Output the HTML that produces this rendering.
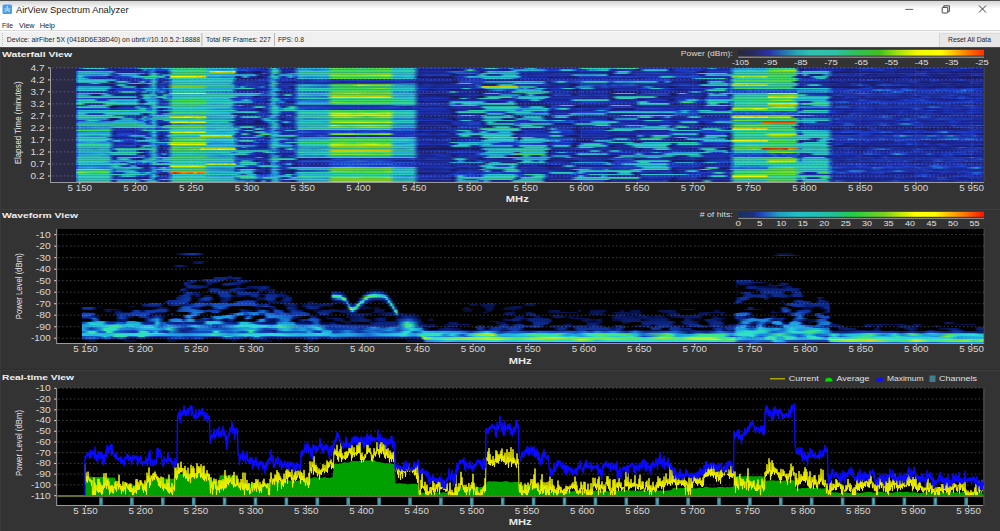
<!DOCTYPE html>
<html><head><meta charset="utf-8"><style>
html,body{margin:0;padding:0;background:#333;overflow:hidden;width:1000px;height:531px;position:relative;}
svg{position:absolute;left:0;top:0;display:block;font-family:"Liberation Sans",sans-serif;}
#h div{position:absolute}
</style></head><body>
<svg width="1000" height="531" viewBox="0 0 1000 531"><rect x="0.00" y="0.00" width="1000.00" height="531.00" fill="#333333" /><rect x="0.00" y="0.00" width="1000.00" height="31.00" fill="#ffffff" /><defs><linearGradient id="tg" x1="0" y1="0" x2="0" y2="1"><stop offset="0" stop-color="#d4d4d4"/><stop offset="1" stop-color="#ffffff"/></linearGradient></defs><rect x="0.00" y="1.00" width="1000.00" height="8.00" fill="url(#tg)" /><rect x="0.00" y="0.00" width="1000.00" height="1.00" fill="#505050" /><rect x="2.5" y="4.5" width="9.5" height="9.5" rx="1.5" fill="#4a9eec"/><path d="M4.5 11.5 Q7.25 9 10 11.5" stroke="#e8f2fc" stroke-width="0.9" fill="none"/><rect x="4.3" y="8.6" width="6" height="0.8" fill="#e8f2fc"/><rect x="6.8" y="6" width="0.9" height="2.6" fill="#e8f2fc"/><text x="16.00" y="13.30" font-size="9.8" fill="#1a1a1a" font-weight="normal" text-anchor="start" textLength="112.50" lengthAdjust="spacingAndGlyphs" >AirView Spectrum Analyzer</text><line x1="905.20" y1="9.40" x2="913.20" y2="9.40" stroke="#444" stroke-width="0.85" /><rect x="942.2" y="7.4" width="5.6" height="5.6" rx="0.6" fill="none" stroke="#333" stroke-width="0.9"/><path d="M943.8 7.4 V5.8 H949.4 V11.4 H947.8" fill="none" stroke="#333" stroke-width="0.9"/><path d="M979 5.5 L986 12.5 M986 5.5 L979 12.5" stroke="#222" stroke-width="0.9"/><text x="2.00" y="27.60" font-size="7.8" fill="#222" font-weight="normal" text-anchor="start" textLength="11.00" lengthAdjust="spacingAndGlyphs" >File</text><text x="19.00" y="27.60" font-size="7.8" fill="#222" font-weight="normal" text-anchor="start" textLength="15.40" lengthAdjust="spacingAndGlyphs" >View</text><text x="39.70" y="27.60" font-size="7.8" fill="#222" font-weight="normal" text-anchor="start" textLength="15.30" lengthAdjust="spacingAndGlyphs" >Help</text><rect x="0.00" y="30.00" width="1000.00" height="1.00" fill="#d9d9d9" /><rect x="0.00" y="31.00" width="1000.00" height="16.50" fill="#f0f0f0" /><rect x="0.00" y="31.00" width="1000.00" height="0.60" fill="#ffffff" /><rect x="2.20" y="33.00" width="0.80" height="0.80" fill="#a0a0a0" /><rect x="2.20" y="35.00" width="0.80" height="0.80" fill="#a0a0a0" /><rect x="2.20" y="37.00" width="0.80" height="0.80" fill="#a0a0a0" /><rect x="2.20" y="39.00" width="0.80" height="0.80" fill="#a0a0a0" /><rect x="2.20" y="41.00" width="0.80" height="0.80" fill="#a0a0a0" /><rect x="2.20" y="43.00" width="0.80" height="0.80" fill="#a0a0a0" /><rect x="2.20" y="45.00" width="0.80" height="0.80" fill="#a0a0a0" /><text x="6.70" y="42.00" font-size="7.6" fill="#1e1e1e" font-weight="normal" text-anchor="start" textLength="193.50" lengthAdjust="spacingAndGlyphs" >Device: airFiber 5X (0418D6E38D40) on ubnt://10.10.5.2:18888</text><rect x="201.50" y="33.00" width="0.80" height="13.00" fill="#a8a8a8" /><text x="206.10" y="42.00" font-size="7.6" fill="#1e1e1e" font-weight="normal" text-anchor="start" textLength="64.60" lengthAdjust="spacingAndGlyphs" >Total RF Frames: 227</text><rect x="274.20" y="33.00" width="0.80" height="13.00" fill="#a8a8a8" /><text x="277.90" y="42.00" font-size="7.6" fill="#1e1e1e" font-weight="normal" text-anchor="start" textLength="26.00" lengthAdjust="spacingAndGlyphs" >FPS: 0.8</text><rect x="939.00" y="33.00" width="61.00" height="14.00" fill="#e6e6e6" /><rect x="939.00" y="33.00" width="0.80" height="14.00" fill="#d4d4d4" /><rect x="939.00" y="33.00" width="61.00" height="0.60" fill="#d4d4d4" /><text x="948.00" y="42.00" font-size="7.6" fill="#1e1e1e" font-weight="normal" text-anchor="start" textLength="43.00" lengthAdjust="spacingAndGlyphs" >Reset All Data</text><rect x="0.00" y="47.30" width="1000.00" height="483.70" fill="#333333" /><rect x="0.00" y="47.30" width="0.80" height="531.00" fill="#3d3d3d" /><rect x="0.00" y="209.00" width="1000.00" height="1.00" fill="#3e3e3e" /><rect x="0.00" y="369.00" width="1000.00" height="0.80" fill="#2a2a2a" /><rect x="0.00" y="370.00" width="1000.00" height="1.00" fill="#3e3e3e" /><text x="2.00" y="56.80" font-size="8" fill="#f0f0f0" font-weight="bold" text-anchor="start" textLength="70.00" lengthAdjust="spacingAndGlyphs" >Waterfall View</text><rect x="57.00" y="229.00" width="927.00" height="114.00" fill="#000000" /><rect x="57.00" y="388.00" width="926.00" height="117.00" fill="#000000" /><rect x="50.50" y="67.50" width="933.50" height="114.50" fill="#2a2a46" /></svg>
<div id="h"><div style="left:75.5px;top:67.50px;width:908.0px;height:2.08px;background:linear-gradient(90deg,#1c2794 0.1%,#1e32af 0.3%,#2dc8cd 1.0%,#2dc9ca 3.0%,#1c2a9d 3.6%,#1c2896 3.9%,#1c2381 4.1%,#1c2897 4.5%,#1f37bb 5.0%,#1f37bb 5.6%,#1f3ac2 6.1%,#1f3cc6 6.5%,#2ecbc2 7.2%,#2ecbc2 7.8%,#2bbbd9 8.5%,#2cc3d8 8.7%,#2372db 8.9%,#2370db 9.4%,#2cc4d7 9.6%,#2bbed9 10.0%,#36d68e 10.9%,#3dd873 11.8%,#35d693 13.5%,#37d68a 14.0%,#2bbcd9 14.6%,#2dc8cd 17.3%,#1e33b2 18.0%,#1e34b5 18.8%,#1f38bd 19.5%,#1e36ba 19.9%,#1d2da4 20.4%,#1c2794 20.8%,#1c2382 21.0%,#2fcfb8 21.7%,#2fcfb8 21.9%,#2042d1 22.4%,#1d2ca1 22.6%,#1d2ca1 22.8%,#1c2794 23.0%,#1c299a 23.2%,#1c1d66 23.7%,#1c1c60 23.9%,#29b0db 24.6%,#29abdb 25.2%,#2ab2da 26.3%,#2bbad9 27.4%,#2fceb9 27.9%,#5fe03c 28.3%,#46db50 29.6%,#44db59 30.7%,#34d598 31.4%,#47dc4c 32.7%,#57df40 34.5%,#2bbfd9 35.1%,#2ecbc3 36.9%,#2cc4d8 37.1%,#1d31ad 37.8%,#1d2ea7 38.0%,#1f39c0 39.5%,#1e32b0 40.0%,#1f37bc 41.1%,#1d2da4 42.0%,#1d2fa9 43.9%,#1d2ba0 44.4%,#1c258b 44.6%,#237bdd 45.0%,#2eccc1 45.3%,#2dc7ce 46.1%,#1f38be 46.8%,#1f3dc8 47.2%,#1f3ac2 47.5%,#28a8dc 47.9%,#2377dc 48.1%,#1e32af 48.3%,#1c2380 48.6%,#1d31ac 49.0%,#1d31ac 49.2%,#2ab9da 49.9%,#2cc1d8 50.3%,#1e35b6 51.0%,#1f38bd 51.4%,#1d2ba0 52.3%,#1c2a9c 53.6%,#1c2a9c 54.1%,#1d2ca1 55.2%,#33d59b 55.8%,#2ecbc2 57.2%,#2fd1b0 58.7%,#2697de 58.9%,#2697de 59.4%,#30d4a7 59.6%,#2fd0b5 60.5%,#37d68c 61.6%,#1d30aa 62.2%,#1c2b9e 62.7%,#1e31ae 63.8%,#1d2da4 64.6%,#1e34b4 65.1%,#1c2795 65.3%,#1d2ca1 65.7%,#1f38bd 66.0%,#1e34b4 66.2%,#1f3dc8 66.9%,#203ecb 67.3%,#1f39c0 67.5%,#2040cf 68.6%,#1e36b8 68.8%,#1d30ab 69.3%,#28a8dc 69.9%,#28a4dc 70.2%,#1d30aa 70.8%,#1d2ca1 71.9%,#2696de 72.6%,#28a5dc 74.8%,#28a4dc 75.9%,#39d782 76.5%,#30d4a7 78.1%,#34d596 79.0%,#1c2691 79.6%,#1c2898 80.9%,#1c258c 81.2%,#1c2899 81.4%,#1d2ba0 82.0%,#1d2fa8 82.3%,#1d2ca0 82.5%,#1d30aa 82.7%,#1d2da3 83.1%,#1e35b5 83.4%,#1c299a 84.0%,#1c2b9e 84.9%,#1c268e 85.1%,#1d2ba0 86.0%,#1e36b8 86.2%,#1f38bd 86.5%,#2150d4 86.7%,#1f3cc7 86.9%,#2048d2 87.1%,#1f3dc8 87.3%,#214ed3 87.8%,#1d2da3 88.0%,#1c2a9d 88.4%,#1e31ae 88.7%,#1c299a 89.1%,#1f3bc5 89.5%,#203ecc 90.0%,#1d30aa 90.2%,#1e32af 90.4%,#1c2896 90.9%,#1d2ba0 92.4%,#1c2795 93.1%,#1e35b6 93.5%,#1d31ac 94.4%,#1c2897 94.8%,#1c2896 95.7%,#1c2b9e 95.9%,#1c2897 96.4%,#1d2ca1 96.6%,#1c2897 96.8%,#1d30ab 97.0%,#1e32af 97.2%,#203fce 97.5%,#2149d2 97.7%,#1f3dc9 97.9%,#2041d0 98.1%,#1e35b6 98.3%,#1e34b4 98.6%,#1d2ca2 98.8%,#1d2ca1 99.7%,#1c258b 99.9%)"></div><div style="left:75.5px;top:69.18px;width:908.0px;height:2.08px;background:linear-gradient(90deg,#1c2484 0.1%,#1c2897 0.3%,#1c2588 0.8%,#1c2a9e 1.2%,#1d2ea5 2.1%,#1d31ad 2.5%,#1e37ba 2.8%,#1d2fa8 3.6%,#1c2589 4.1%,#1c2382 5.0%,#1c2792 5.2%,#1c268f 6.5%,#1c1e68 6.9%,#1c299b 7.2%,#28a6dc 7.6%,#2151d4 7.8%,#2158d5 8.3%,#2489e0 8.5%,#2046d1 8.9%,#1f3cc7 10.0%,#2cc3d8 10.5%,#30d3ab 10.7%,#39d786 13.1%,#41da65 14.0%,#2ab6da 14.6%,#2695de 16.2%,#29abdb 17.3%,#2048d2 18.0%,#2157d5 18.4%,#1f3ac2 19.3%,#1f39c0 19.7%,#1d30aa 20.2%,#1e34b4 20.4%,#1d2fa9 20.8%,#1c2896 21.0%,#236eda 21.5%,#2dc7d0 21.7%,#2eccc0 22.1%,#1c2486 22.8%,#1d31ac 23.2%,#1d2ea6 23.7%,#1d30ab 23.9%,#28a6dc 24.6%,#29addb 25.4%,#2487e0 26.5%,#269bde 27.0%,#28a3dc 27.6%,#42da60 28.3%,#41da64 30.3%,#42da60 32.9%,#54de42 34.3%,#2dc9ca 35.1%,#30d3aa 36.5%,#2ecebb 37.1%,#1c2796 37.8%,#1c2589 38.9%,#1c2794 39.8%,#1c2381 40.9%,#1c2485 41.1%,#1c1e6a 41.5%,#1c1f6f 42.0%,#1c258b 42.4%,#1c258a 42.6%,#35d693 43.3%,#37d68a 43.5%,#1c2a9c 44.2%,#1d2ea6 44.8%,#1c2b9e 45.3%,#1d2ea7 46.1%,#1c268e 47.2%,#1c2588 47.7%,#2699de 48.3%,#2ab8da 49.4%,#28a9dc 49.9%,#2bbbd9 50.3%,#28a2dc 51.4%,#1f3cc6 52.1%,#203ecb 52.5%,#2042d0 52.8%,#1f3cc8 53.0%,#2cc6d3 53.6%,#2cc3d8 54.1%,#2dc7ce 54.5%,#2696de 54.7%,#2375dc 55.0%,#1f3cc6 55.2%,#1f39c0 55.6%,#203fcd 55.8%,#1f3ac3 56.1%,#28a9dc 56.7%,#2697de 56.9%,#2cc5d5 58.0%,#2cc4d7 58.5%,#1e34b3 58.9%,#1c2486 59.1%,#1d2ba0 59.6%,#1d30aa 60.5%,#1f39bf 60.9%,#1f3ac3 61.1%,#1c268f 61.6%,#1c1d66 61.8%,#1c1d64 62.0%,#2ab9da 62.7%,#2bbfd9 64.0%,#29b1db 64.2%,#2dc7cf 64.9%,#1f39bf 65.3%,#1c1e6c 65.5%,#2040d0 66.2%,#1e34b4 68.0%,#1f39c0 68.6%,#1f38bd 68.8%,#1c2a9c 69.1%,#1c2690 69.5%,#1e33b2 69.7%,#1f38be 70.2%,#1d2da3 71.0%,#1e34b5 71.5%,#1d30aa 71.7%,#1e31ae 71.9%,#2261d7 72.1%,#2bbad9 72.6%,#2dcac7 74.3%,#2bbbd9 75.4%,#2cc4d7 75.9%,#5adf3f 76.5%,#97ea21 78.3%,#91e924 79.2%,#1f3ac2 79.6%,#1c1e67 79.8%,#1c299b 80.3%,#1d2da5 81.4%,#1f38be 82.0%,#1e37bb 82.7%,#1d30ab 82.9%,#1e34b5 83.1%,#1d2da4 83.4%,#1c299b 83.8%,#1d2ea6 84.0%,#1c2382 85.1%,#1c2483 85.6%,#1c2a9c 86.5%,#1e34b3 86.7%,#1c2a9d 87.3%,#1d30ac 88.0%,#1f3ac1 88.2%,#1f39bf 88.7%,#1d30aa 89.1%,#1c2791 89.3%,#1d2da3 89.5%,#1d2ea6 89.8%,#1c2896 90.0%,#1c299b 90.2%,#1c2793 90.6%,#1c2792 92.0%,#1c227e 92.6%,#1c217a 93.1%,#1c2588 93.5%,#1c2483 93.7%,#1c2792 94.2%,#1c2792 94.4%,#1e32af 94.8%,#1c2795 95.5%,#1d2ea6 95.9%,#1c2a9d 96.1%,#1d2ca0 96.4%,#1f37bc 96.8%,#1c2793 97.5%,#1c268d 97.7%,#1c2898 97.9%,#1c2485 98.6%,#1c227c 98.8%,#1c258b 99.7%,#1c2382 99.9%)"></div><div style="left:75.5px;top:70.87px;width:908.0px;height:2.08px;background:linear-gradient(90deg,#2371db 0.1%,#2cc5d6 0.3%,#2dcac7 1.4%,#28a6dc 3.2%,#2ab8da 3.9%,#1d2da3 4.5%,#1d2ea6 4.7%,#1c2897 5.2%,#1c299b 6.5%,#1f3ac2 7.2%,#1d2fa9 7.8%,#2480de 8.3%,#2378dc 8.5%,#1c2791 8.9%,#1c2896 10.0%,#35d694 10.7%,#3cd87a 11.6%,#41da62 12.2%,#3dd872 13.8%,#30d3aa 14.6%,#d5f409 14.9%,#aaed17 15.1%,#f6f800 15.5%,#aeee15 17.1%,#eff702 17.3%,#daf407 17.5%,#1f3bc4 17.7%,#1c227a 18.0%,#1c268f 18.2%,#1c2588 18.8%,#1c299a 19.1%,#1c2795 19.3%,#1c1e6a 19.7%,#1c1c60 19.9%,#1c1c61 20.2%,#1d2ea7 20.8%,#1d2ea6 21.0%,#214fd3 21.3%,#34d596 21.7%,#35d696 22.1%,#1c268f 22.8%,#1d2ea6 23.0%,#1c2795 23.7%,#1c2899 23.9%,#2fceb9 24.6%,#3cd879 25.7%,#2fcfb7 27.2%,#3ed96f 28.7%,#3cd879 31.4%,#3ad77f 34.0%,#2fd1b0 34.9%,#2dc8cc 35.1%,#2dc8cd 36.0%,#2fd0b5 36.7%,#2eccbf 37.1%,#1c299b 37.8%,#1d2fa8 38.7%,#1c2b9e 40.6%,#214cd3 41.1%,#236fda 41.7%,#225dd6 42.6%,#2048d2 43.1%,#2044d1 44.2%,#1c227c 44.6%,#1c1c60 44.8%,#2ecdbe 45.5%,#28a9dc 46.4%,#2ecac6 47.7%,#2cc2d8 48.3%,#1f3bc5 49.0%,#1f39c0 49.7%,#1e35b7 50.1%,#1f38be 51.4%,#1c2a9d 52.1%,#1c299b 53.9%,#1c2487 54.7%,#1d2da5 55.8%,#1c299a 58.0%,#1d2ca1 58.3%,#1c2897 58.5%,#1c227e 58.7%,#1c2382 58.9%,#1c2b9f 59.1%,#2151d4 59.4%,#2cc5d6 59.8%,#2dc8cd 60.7%,#1d2da4 61.3%,#1f3dc9 63.1%,#1e34b3 64.9%,#1c299b 65.7%,#1e37bb 67.1%,#203dca 67.3%,#1f38be 68.2%,#1c1c62 68.8%,#1c1c60 69.1%,#1f3bc4 69.7%,#1f3cc8 71.5%,#1f3bc3 71.7%,#1d30aa 71.9%,#2694de 72.4%,#31d4a5 72.6%,#36d68f 75.7%,#30d4a7 75.9%,#55de41 76.5%,#57df40 79.2%,#28a9dc 79.4%,#2267d9 79.8%,#2cc6d3 80.1%,#2ecebb 81.8%,#2cc4d8 82.7%,#1c227c 83.4%,#1c2381 83.8%,#1c2071 84.0%,#1c1f70 84.7%,#1c2485 85.4%,#1c2485 85.8%,#1c2381 86.7%,#1c2486 86.9%,#1c227e 87.1%,#1c258b 87.3%,#1c227b 87.6%,#1c2588 88.7%,#1c2588 89.1%,#1d2fa8 90.0%,#1c2588 90.2%,#1c227b 90.4%,#1c2896 91.5%,#1c2690 92.2%,#1d2ca2 92.6%,#1d2fa8 93.1%,#1c2a9e 93.3%,#1f3bc4 93.5%,#1c2b9e 93.7%,#1c2589 94.2%,#1c2795 94.4%,#1d2ba0 95.3%,#1c2486 95.9%,#1c2588 96.1%,#1c227d 96.4%,#1c2483 96.8%,#1c227b 97.2%,#1c2381 97.7%,#1c2072 97.9%,#1c2484 98.3%,#1c2178 98.6%,#1d2ca1 99.0%,#1c227c 99.2%,#1c2380 99.7%,#1c2072 99.9%)"></div><div style="left:75.5px;top:72.55px;width:908.0px;height:2.08px;background:linear-gradient(90deg,#2156d5 0.1%,#28a6dc 0.3%,#2ab4da 1.2%,#2bbad9 2.5%,#2bbcd9 3.4%,#1f38bd 4.1%,#2dc7ce 4.7%,#2fd2af 5.2%,#2eccbf 6.5%,#27a2dd 6.7%,#2593df 7.4%,#1e34b4 7.8%,#2ecbc3 8.5%,#2dc9c8 8.7%,#1d2fa8 9.4%,#1d2ea7 9.6%,#1c1f6d 10.0%,#1f37bc 10.2%,#43da5b 10.7%,#42da5f 13.3%,#34d599 14.2%,#2dc8cd 14.6%,#2dc8cb 16.0%,#2eccc0 17.3%,#2482df 17.5%,#1c2792 18.0%,#1e34b3 18.2%,#1e34b5 18.8%,#1f3ac1 19.1%,#1f38be 19.3%,#1c2485 19.7%,#1c1f6e 19.9%,#1d2da5 20.4%,#236fdb 20.6%,#226cda 20.8%,#203fcd 21.0%,#203ecb 21.3%,#2370db 21.5%,#2dc7cf 21.7%,#2cc5d5 21.9%,#2042d0 22.6%,#1f3dc9 23.0%,#2693de 23.7%,#279ddd 23.9%,#2fd1b0 24.6%,#2eccbf 26.3%,#2fd1b0 27.6%,#65e13a 28.3%,#5ce03e 33.1%,#66e139 34.5%,#2bbad9 35.1%,#2bbbd9 37.1%,#203ecb 37.6%,#1d2da4 37.8%,#1d2ca1 38.2%,#1d2da3 38.7%,#1c2793 38.9%,#1c2a9d 39.8%,#1d2fa7 40.4%,#1c2898 41.1%,#1c2381 41.3%,#1e33b3 41.7%,#2159d5 42.0%,#2267d9 43.1%,#225ed7 43.9%,#1e34b5 44.2%,#2262d8 44.6%,#2bbad9 44.8%,#2cc4d7 46.1%,#28a3dc 48.6%,#2375dc 48.8%,#1f37bb 49.0%,#1c2690 49.2%,#1c2791 49.7%,#1c2588 49.9%,#1c2b9f 51.0%,#1d2da4 51.9%,#1c2792 52.1%,#1d2fa9 52.5%,#1f3cc8 52.8%,#1f39bf 53.4%,#1f39bf 54.5%,#1d2da3 55.0%,#1e34b4 55.4%,#1d30ab 55.8%,#1e35b7 56.3%,#1d2fa9 56.7%,#1e35b6 56.9%,#1e32b0 57.6%,#1e36b8 57.8%,#1e32b0 58.0%,#1e35b7 58.3%,#1c1c60 58.9%,#1e34b4 59.1%,#2ab9da 59.6%,#2bbdd9 60.5%,#1e35b7 61.1%,#1e35b6 61.8%,#203ecc 63.1%,#2048d2 64.0%,#1e35b7 65.5%,#203ecb 66.6%,#1f3ac2 67.5%,#1d31ad 68.2%,#2ecdbc 68.8%,#30d3ab 71.5%,#1f38bd 71.9%,#203dca 72.1%,#44db58 72.6%,#54de42 75.9%,#37d68d 76.5%,#3bd87d 77.4%,#38d789 79.2%,#2dc8cd 79.8%,#2cc5d5 81.6%,#2dc6d2 82.7%,#1c2899 83.4%,#1e34b3 84.7%,#1d2da4 85.4%,#1f38bd 86.5%,#2044d1 86.7%,#2048d2 86.9%,#1e33b1 87.6%,#1d2ca1 88.7%,#1e37bb 89.3%,#1d30ab 89.5%,#1e33b2 90.0%,#1d2ea7 90.2%,#1e32b0 90.6%,#203ecb 91.1%,#1e32b0 91.7%,#1e36ba 92.0%,#1d2fa8 92.2%,#203ecb 92.6%,#2156d5 93.3%,#1e32af 93.7%,#1d2ea7 94.6%,#1c2a9d 94.8%,#1f3bc5 95.3%,#1f3ac3 95.7%,#1e34b5 95.9%,#1f3bc4 96.1%,#1c2897 96.6%,#1c2897 97.0%,#1e34b4 97.2%,#1d2ca1 97.5%,#1e32af 97.9%,#1e32b0 98.6%,#1d2ea7 99.2%,#1f3ac2 99.7%,#1e33b2 99.9%)"></div><div style="left:75.5px;top:74.24px;width:908.0px;height:2.08px;background:linear-gradient(90deg,#2268d9 0.1%,#2bbbd9 0.3%,#2699de 2.1%,#27a1dd 2.8%,#2bbdd9 3.4%,#1f3cc6 4.1%,#1e35b7 4.5%,#28a9dc 5.2%,#29abdb 6.3%,#279edd 6.7%,#1e33b1 7.2%,#1c268d 7.4%,#1c2b9f 7.6%,#1c2899 7.8%,#29afdb 8.3%,#2fd2af 8.5%,#2fd2af 8.7%,#258edf 8.9%,#214ad2 9.4%,#279cdd 9.6%,#279edd 10.0%,#3bd87d 10.7%,#3bd87e 12.4%,#45db54 13.5%,#32d5a1 14.2%,#2cc4d8 14.6%,#2dc7ce 15.7%,#2ab4da 17.3%,#29b1db 19.5%,#2ab7da 19.7%,#2156d5 19.9%,#1c2484 20.4%,#1d2ea5 20.6%,#1c2178 21.0%,#1f37bc 21.3%,#2694de 21.5%,#2ab8da 21.7%,#237bdd 21.9%,#2262d8 22.1%,#29aedb 22.6%,#29b0db 23.7%,#2484df 23.9%,#279cdd 24.3%,#2dc9c8 24.6%,#2ecebb 27.0%,#2dc9c8 27.6%,#92e923 28.3%,#79e52f 29.4%,#7de52e 30.9%,#8ae827 32.0%,#b4ef12 34.5%,#2dc7d0 35.1%,#2cc5d6 36.9%,#2ab7da 37.1%,#1d2da4 37.8%,#203ecc 38.9%,#1f39c0 40.0%,#203fcd 40.9%,#1f39c1 41.1%,#1c227a 41.5%,#1c1f70 41.7%,#1c2381 42.0%,#1d2ea6 42.2%,#1d2ea6 43.7%,#1c2a9e 43.9%,#2bbdd9 44.6%,#2cc1d8 44.8%,#1e33b2 45.5%,#1e35b6 46.6%,#2ab7da 47.2%,#2bbed9 48.3%,#1d30ac 49.0%,#1d2ca2 49.9%,#1e34b3 50.8%,#1d31ad 51.0%,#1e35b7 51.2%,#1e32b0 51.7%,#1f39c1 52.1%,#1e32b0 53.0%,#1f38be 53.4%,#1f39c0 54.1%,#1e35b6 54.3%,#29afdb 55.0%,#29addb 55.4%,#2697de 55.6%,#279fdd 57.2%,#2bbad9 58.0%,#2bb9d9 58.3%,#1d2ba0 58.7%,#1c1e6a 58.9%,#1c2a9c 59.4%,#1c268e 60.7%,#1c2690 61.1%,#1f39c0 62.2%,#1d30aa 63.1%,#1e31ae 63.8%,#1e33b2 64.2%,#203dca 65.3%,#1e35b6 66.2%,#1f38bd 66.9%,#1d31ad 67.3%,#1f3ac2 67.7%,#1f39c0 68.0%,#2040cf 68.2%,#203fcf 68.4%,#1c2175 68.8%,#1d2da3 69.1%,#2150d4 69.3%,#2ab2da 69.5%,#2cc4d8 69.9%,#28a3dc 71.0%,#29afdb 71.9%,#2fcfb6 72.8%,#2cc5d6 74.1%,#2dc8cb 75.0%,#2dc7ce 75.9%,#44db57 76.5%,#3bd87d 78.1%,#40d969 79.2%,#203dca 79.6%,#1d2ea5 79.8%,#2bbed9 80.3%,#1c2b9f 80.9%,#1c268d 81.6%,#1c2792 82.0%,#236fdb 82.5%,#28a4dc 82.7%,#226ad9 82.9%,#236fda 83.1%,#1e35b7 83.4%,#1f3cc6 83.6%,#1e34b4 83.8%,#1e35b7 84.0%,#203fcd 84.3%,#1e33b2 84.5%,#1f38be 84.7%,#1d2ea7 85.4%,#1d2fa9 85.6%,#1f3bc4 85.8%,#1e31ad 86.0%,#1f39c0 86.5%,#1c2691 87.1%,#1c258b 87.3%,#1c299a 87.6%,#1c268d 87.8%,#1c258a 88.2%,#1d30ab 88.4%,#1c2896 88.9%,#1d2ca2 89.3%,#1c2897 90.9%,#1c299a 91.3%,#1f39c1 91.7%,#1e34b4 92.2%,#1f3bc5 92.4%,#1e33b1 92.6%,#1f39c0 93.1%,#1e35b5 93.3%,#1f39bf 93.5%,#1c2487 94.2%,#1c2487 95.3%,#1c2690 96.1%,#1c258c 96.8%,#1c2795 97.2%,#1d2ea5 97.5%,#1c299b 97.7%,#1d2ca1 97.9%,#1c2896 98.1%,#1e32af 98.8%,#1f3dc9 99.0%,#1f3cc7 99.2%,#1e32b0 99.7%,#1c2690 99.9%)"></div><div style="left:75.5px;top:75.92px;width:908.0px;height:2.08px;background:linear-gradient(90deg,#236dda 0.1%,#2dc6d2 0.3%,#2dc6d1 0.6%,#2264d8 1.0%,#203fce 1.7%,#203fce 2.1%,#1f38be 2.3%,#1f3dc9 3.2%,#1c2178 3.6%,#1c227b 3.9%,#203eca 4.3%,#214fd3 5.8%,#2bbdd9 6.5%,#2cc1d8 7.2%,#3ed970 7.8%,#35d695 8.9%,#2fd1b1 9.6%,#1f39bf 10.0%,#1f37bb 10.2%,#f1f702 10.5%,#e7f604 13.1%,#f8d400 13.5%,#e4f605 13.8%,#f8bc00 14.0%,#f8e400 14.2%,#2ab6da 14.4%,#279edd 14.6%,#27a2dd 15.7%,#248be0 16.2%,#2699de 17.3%,#1c2791 17.7%,#1c227a 18.0%,#2040cf 18.2%,#2cc6d3 18.6%,#214dd3 19.1%,#1d2da3 19.3%,#1e32b0 19.7%,#1c1d66 20.2%,#1c1d66 20.4%,#1d30ab 20.8%,#1e32ae 21.0%,#30d2ae 21.7%,#32d5a1 22.1%,#214bd2 22.6%,#1d2b9f 22.8%,#1e36b9 23.0%,#2dc7d0 23.7%,#236fda 23.9%,#2154d4 24.3%,#28a8dc 24.6%,#2592df 25.9%,#28a4dc 27.0%,#279cdd 27.6%,#41da65 28.3%,#52de43 29.4%,#46db51 30.5%,#46db52 31.6%,#3ad780 32.3%,#4bdc47 33.4%,#52de43 34.5%,#2ab5da 35.1%,#29abdb 35.6%,#2cc4d7 36.5%,#2ab2da 37.1%,#1c2b9f 37.6%,#1c1d66 37.8%,#1c2179 38.7%,#1c1e67 39.3%,#1c1f6c 40.9%,#1c1c60 41.3%,#1e36b8 42.0%,#1f39c1 42.6%,#2bbad9 43.3%,#29acdb 44.4%,#2eccbf 45.0%,#2dc8cd 46.6%,#2ecbc3 48.6%,#28a4dc 48.8%,#1d2ca1 49.2%,#1c2a9d 50.1%,#1d2ca2 51.7%,#1c2487 52.1%,#1c2898 53.6%,#1c2071 54.7%,#1c2690 55.2%,#1f38be 55.4%,#1f3cc7 56.5%,#1e36b8 56.9%,#203fcd 57.4%,#1e35b6 58.7%,#2046d1 58.9%,#2150d4 59.8%,#203fcf 60.2%,#2044d1 61.1%,#1e36b8 61.8%,#203dc9 63.5%,#1e35b6 64.0%,#2dc9c8 64.6%,#2ecbc2 65.5%,#214ad2 66.2%,#214ed3 67.7%,#2042d0 68.4%,#214cd3 68.6%,#1e35b5 69.1%,#1d2ea7 69.5%,#1e31ad 70.4%,#1e36b9 70.6%,#1e32b0 70.8%,#1e36b9 71.3%,#1e31ae 71.9%,#2261d7 72.1%,#9feb1d 72.4%,#74e432 72.6%,#c7f20c 73.5%,#90e924 73.7%,#99ea1f 75.4%,#c6f20c 75.7%,#9fec1c 76.1%,#3ed971 76.3%,#47dc4e 78.1%,#3bd87d 78.7%,#1c227c 79.4%,#1c227d 80.7%,#2482df 81.2%,#2ecebb 81.4%,#2fd1b0 82.5%,#1c2177 83.1%,#1c2072 83.4%,#1c2588 83.6%,#1c258a 83.8%,#1c227b 84.0%,#1c2793 85.4%,#1c2690 85.8%,#1c2484 86.0%,#1c2690 86.2%,#1c2485 86.7%,#1c2795 86.9%,#1c268e 87.1%,#1d2ea7 87.6%,#1c227c 87.8%,#1c2791 88.0%,#1c2381 88.4%,#1c2072 88.7%,#1c258a 89.3%,#1c2380 90.0%,#1c2487 90.2%,#1c1e6c 90.4%,#1c2382 90.6%,#1c2380 90.9%,#1c2792 91.1%,#1c2588 91.5%,#1c2691 91.7%,#1c2486 92.0%,#1c1f6c 92.2%,#1c2485 93.5%,#1c227a 93.7%,#1c2690 93.9%,#1c2897 94.2%,#1c237f 94.4%,#1c227b 95.7%,#1c2795 96.1%,#1c2382 97.2%,#1c1e6a 97.5%,#1c2176 98.1%,#1c1c60 99.0%,#1c1c60 99.2%,#1c2176 99.4%,#1c2380 99.7%,#1c2074 99.9%)"></div><div style="left:75.5px;top:77.60px;width:908.0px;height:2.08px;background:linear-gradient(90deg,#237cdd 0.1%,#2cc6d3 0.3%,#2bbbd9 1.0%,#1d2da5 1.7%,#1c2791 2.5%,#1c268e 3.2%,#203dca 3.4%,#1e37ba 3.6%,#1f3cc7 3.9%,#1c2897 4.1%,#1e35b7 4.3%,#1d2da5 5.0%,#1e33b3 5.2%,#1d2ea7 5.6%,#1e33b2 6.3%,#1e35b7 6.7%,#1c2a9e 6.9%,#2268d9 7.4%,#2cc5d5 7.6%,#2dc8cd 8.7%,#2374db 8.9%,#2047d2 9.1%,#1d2ca2 9.4%,#2158d5 9.8%,#225dd6 10.0%,#27a1dd 10.2%,#2bbcd9 10.5%,#36d68f 10.7%,#2fd0b3 14.0%,#2ecbc2 14.9%,#2ecbc2 15.5%,#2cc5d4 17.3%,#1c1f6f 18.0%,#1c2072 18.2%,#1c1c60 18.6%,#1c1d66 18.8%,#1c2177 19.1%,#1c1f70 19.7%,#1c2177 20.2%,#1c268f 20.4%,#1c2898 20.6%,#1c2690 21.0%,#2371db 21.5%,#28a7dc 21.7%,#2ab6da 22.1%,#2154d4 22.4%,#1c299a 22.8%,#1e34b4 23.0%,#1e36ba 23.5%,#1c2793 23.7%,#1c2176 23.9%,#1d2da5 24.1%,#2cc4d7 24.6%,#2ab3da 25.4%,#2dc6d1 26.5%,#2bc0d9 27.0%,#2bbcd9 27.6%,#69e237 28.3%,#49dc47 31.6%,#67e238 34.0%,#59df40 34.5%,#2ecac5 35.1%,#2eccc0 35.8%,#2cc6d2 37.1%,#1c2791 37.8%,#1d2ba0 38.4%,#1c268e 39.1%,#1c2589 40.9%,#1c2794 41.1%,#1c1e6a 41.5%,#1e31ad 42.2%,#1e34b3 43.5%,#1e36b8 44.2%,#1d2ca1 44.4%,#2372db 44.8%,#2cc4d8 45.0%,#2ab7da 47.9%,#1e36b8 48.6%,#1e37ba 49.0%,#1f3dc8 49.2%,#1f3cc6 50.1%,#1e35b6 50.6%,#1f3ac3 51.7%,#1e37bb 51.9%,#1c2999 52.1%,#1c2486 52.5%,#1d2da3 52.8%,#1d2da4 53.6%,#1c2897 53.9%,#1d2ea6 54.3%,#1c2796 54.5%,#1c2793 55.0%,#1d2da4 55.2%,#1c2897 55.4%,#1c299b 56.1%,#1d2fa9 56.5%,#1c2a9c 57.4%,#1d2fa8 58.5%,#1c2589 59.1%,#1c258c 60.0%,#1c258c 60.5%,#1c2486 61.3%,#1c268f 61.6%,#1c1e6b 62.0%,#1d2fa8 62.7%,#1d2ea6 63.3%,#1f37bc 64.2%,#1e32ae 65.1%,#1c2178 65.5%,#1c2072 65.7%,#1c2897 66.2%,#1c2791 67.1%,#1c2485 67.3%,#1c2487 67.5%,#225fd7 68.0%,#27a1dd 68.2%,#2eccbf 69.5%,#2ecbc4 70.6%,#31d4a2 71.0%,#30d2ad 71.3%,#1c1c61 71.9%,#1d2ea6 72.1%,#2ecac5 72.6%,#2fceb9 75.2%,#2ecdbd 76.1%,#3dd874 76.5%,#42da61 77.6%,#3cd877 78.7%,#40d968 79.0%,#2cc3d8 79.4%,#2376dc 79.6%,#1d2ea7 80.1%,#1d31ac 81.2%,#2cc1d8 81.8%,#2cc6d3 82.3%,#1c2177 82.9%,#1c2792 83.4%,#1c2793 83.6%,#1c2179 83.8%,#1c258b 84.5%,#1c2a9e 84.7%,#1c2380 84.9%,#1c2896 85.1%,#1c2486 85.4%,#1c2487 85.6%,#1c2179 85.8%,#1c2380 86.2%,#1c268f 86.5%,#1c227a 86.9%,#1c1e68 87.3%,#1c237f 88.4%,#1c227b 88.7%,#1c2483 88.9%,#1c2176 89.1%,#1c227a 89.3%,#1c2072 89.5%,#1c237f 89.8%,#1c2176 90.0%,#1c258b 90.2%,#1c2588 90.4%,#1c2897 90.9%,#1c2793 91.1%,#1e37ba 91.3%,#1d2b9f 91.5%,#1c2a9c 91.7%,#1c2483 92.0%,#1c2483 92.2%,#1c1d63 92.4%,#1c237f 92.6%,#1c299b 93.3%,#1c299a 93.5%,#1c258b 93.7%,#1c2896 94.2%,#1c2589 94.6%,#1c2896 94.8%,#1c2074 95.0%,#1c2176 95.9%,#1c258a 96.6%,#1c2588 96.8%,#1c299a 97.0%,#1c2381 97.2%,#1c1e6b 97.9%,#1c2176 99.2%,#1c2074 99.7%,#1c1e68 99.9%)"></div><div style="left:75.5px;top:79.29px;width:908.0px;height:2.08px;background:linear-gradient(90deg,#2374dc 0.1%,#2dc7d0 0.3%,#2bb9d9 1.9%,#2dc6d1 2.5%,#29aadb 3.6%,#2ab6da 4.1%,#1e31ad 4.7%,#1d2ca2 6.1%,#1e34b4 6.9%,#1d2ba0 7.2%,#2040d0 7.4%,#2045d1 7.8%,#1f3bc5 8.0%,#27a2dd 8.5%,#279cdd 8.7%,#1e33b1 9.1%,#1c227c 9.4%,#1c2795 9.6%,#1c2999 9.8%,#1c227e 10.0%,#226bda 10.5%,#2dc9ca 10.7%,#2bbbd9 12.0%,#2cc6d3 12.7%,#2dc8cb 17.1%,#1c2896 17.7%,#1d2da3 18.4%,#1c2898 18.6%,#1c2a9c 19.3%,#1c268d 19.5%,#1d2fa8 19.9%,#1f3ac3 20.2%,#1e36b8 21.0%,#2696de 21.7%,#1d30aa 22.4%,#1f37bc 22.8%,#1e33b2 23.7%,#1e34b4 24.3%,#1d2da5 25.7%,#1f39c0 26.1%,#203fcd 26.8%,#1e32b0 28.5%,#1f3ac1 29.8%,#1e35b6 33.1%,#1e36b8 33.6%,#203dca 33.8%,#1f39bf 34.5%,#203dca 34.7%,#1f39bf 34.9%,#1f3cc6 35.6%,#1e35b5 37.1%,#1c2897 37.8%,#1c2899 38.4%,#1d2da3 38.7%,#1d2ea5 39.3%,#1c2a9d 40.9%,#1d2ca2 41.1%,#1c2381 41.5%,#1c1d66 41.7%,#1d2ca1 42.2%,#1e33b3 42.8%,#1e35b6 43.3%,#1f3bc5 43.7%,#1e32b0 44.8%,#1c2487 45.3%,#1c2380 45.5%,#1c2690 45.7%,#1c2381 47.0%,#1c258c 47.2%,#1c227d 48.1%,#1c1f6e 48.3%,#1c2072 48.8%,#1c258a 49.0%,#1c2795 50.3%,#1c237f 51.2%,#1c2691 51.9%,#1e32af 52.3%,#1e33b2 53.2%,#1e32af 54.7%,#1f3ac2 56.1%,#1e37bb 57.6%,#1f38be 58.7%,#1f39c0 60.5%,#1f39bf 62.0%,#1f3ac2 64.0%,#2049d2 65.1%,#1d2ba0 65.7%,#1c299b 67.1%,#1c258a 67.7%,#1c2588 68.4%,#1c2793 68.6%,#1c1e6b 69.1%,#1c1c60 69.3%,#1e35b7 69.9%,#1e33b2 71.7%,#1d2fa8 71.9%,#2dc7cf 72.4%,#41da63 72.6%,#48dc4a 73.2%,#45db54 77.0%,#4cdd46 79.2%,#1e37ba 79.8%,#1f37bc 80.3%,#1f3dc8 80.5%,#203ecc 81.4%,#1d2ea7 82.5%,#1e32ae 82.7%,#1c2a9d 83.4%,#1d2fa9 83.6%,#1c2a9c 83.8%,#1d2da3 84.0%,#1c2792 84.5%,#1d2ca0 85.6%,#1c2793 86.0%,#1c2898 86.2%,#1f3bc4 86.7%,#1d2fa8 86.9%,#1d2ea7 87.1%,#2048d2 87.3%,#1d2fa9 88.0%,#1e37ba 88.2%,#1e33b2 88.4%,#1c2589 88.7%,#1c2a9c 89.3%,#1c268c 89.5%,#1c268e 90.4%,#1c2898 90.9%,#1c2791 91.1%,#1d2da3 91.3%,#1c258a 91.5%,#1d2da4 91.7%,#1d30ab 92.0%,#1c2794 92.2%,#1d2ea6 92.4%,#1c2690 93.5%,#1c258a 93.9%,#1e37ba 94.2%,#1f39bf 94.6%,#1d2fa9 95.0%,#1c2791 95.3%,#1c2795 95.9%,#1c268d 96.1%,#1c2a9e 96.6%,#1c299b 96.8%,#1f3dc8 97.5%,#1d2da5 97.9%,#1c258c 98.3%,#1c2792 99.2%,#1d2ea7 99.7%,#1c268c 99.9%)"></div><div style="left:75.5px;top:80.97px;width:908.0px;height:2.08px;background:linear-gradient(90deg,#2377dc 0.1%,#2ecac6 0.3%,#2ecbc3 1.4%,#2cc6d2 2.1%,#2fd0b4 3.2%,#1c2074 3.9%,#1c2175 4.1%,#2ecbc3 4.7%,#2dc8cc 5.4%,#1e32ae 6.1%,#1d2da5 6.5%,#1d30ab 6.7%,#2ecdbc 7.4%,#1e35b5 7.8%,#1e37bb 8.0%,#2fcfb7 8.5%,#2fd1b0 8.7%,#1e37bb 9.1%,#1c2483 9.4%,#2046d1 9.6%,#225cd6 9.8%,#2262d8 10.2%,#2eceba 10.7%,#30d4a8 12.0%,#2ecebb 12.9%,#2dc9c9 14.4%,#2bbdd9 15.3%,#2bbad9 16.9%,#2cc5d4 17.1%,#214fd3 17.5%,#1f39c0 17.7%,#1e34b4 19.7%,#1d2fa9 19.9%,#1e33b3 20.2%,#1d30aa 20.6%,#1e32b0 20.8%,#1c299b 21.0%,#258ddf 21.5%,#2fd1b0 21.7%,#1d2ea7 22.4%,#1c2792 23.0%,#1c2896 23.5%,#1c1f70 23.9%,#1c237f 24.1%,#1f3cc6 24.6%,#1e37ba 25.4%,#2040cf 26.8%,#1e32b0 28.5%,#1c2792 29.4%,#1d2fa8 30.5%,#1d2da4 30.9%,#1e32af 31.2%,#1e33b1 31.8%,#1d30ac 33.6%,#1d2ea5 34.5%,#1f38be 35.8%,#1d2fa9 37.1%,#1c2588 37.6%,#1c2380 38.0%,#1c2792 38.7%,#1c2380 39.8%,#1c2483 40.0%,#1c2179 40.2%,#1c2589 41.1%,#1c2383 41.3%,#1c1e6b 41.5%,#1c1c60 41.7%,#1c227d 42.0%,#214ad2 42.4%,#2049d2 43.3%,#203dca 43.7%,#2049d2 44.2%,#203dca 44.6%,#279cdd 45.3%,#28a7dc 47.2%,#2cc4d8 48.8%,#2ab2da 49.2%,#2ab7da 49.7%,#2ab3da 50.3%,#279fdd 50.8%,#28a7dc 51.4%,#1e32b0 51.9%,#1c268d 52.1%,#2265d8 52.8%,#2dcac6 53.2%,#2ecdbe 53.6%,#2040d0 54.3%,#2042d0 54.7%,#2158d5 55.2%,#214fd3 55.4%,#2dc8cb 56.1%,#2ecbc2 57.4%,#2eccbf 58.3%,#214fd3 58.9%,#29b1db 59.6%,#279edd 60.7%,#2dc7ce 62.0%,#2ab8da 63.8%,#1f39c0 64.2%,#1c2898 64.4%,#1d2ca1 64.6%,#2697de 65.1%,#2484df 65.3%,#1c258c 65.7%,#1c299a 66.0%,#1c2a9c 66.9%,#1c2795 67.5%,#1c258a 67.7%,#1c2a9c 68.2%,#1c2792 68.4%,#1c1d67 68.8%,#1c1d63 69.3%,#2488e0 69.7%,#2cc1d8 69.9%,#2ecbc4 71.0%,#1e32af 71.7%,#1d31ac 71.9%,#2fd1b2 72.6%,#2dc9ca 75.2%,#2dc9c8 75.9%,#3fd96c 76.5%,#3ad77f 78.5%,#34d597 78.7%,#1c2690 79.4%,#1e32ae 79.8%,#1d2ca1 80.3%,#1d2fa9 80.5%,#1c2a9c 80.9%,#1d2fa9 81.2%,#1c2792 82.5%,#1c2a9c 82.7%,#1c2070 83.4%,#1c2484 83.6%,#1c227d 83.8%,#1d2da3 84.3%,#1c2795 84.5%,#1c2898 84.7%,#1c237e 85.4%,#1c268e 86.5%,#1c1f6f 87.6%,#1c227c 88.0%,#1c268f 88.2%,#1c2897 88.7%,#1c268f 89.1%,#1c2179 89.3%,#1c268e 90.0%,#1e33b2 90.2%,#1d2ca2 90.4%,#1d2ea5 90.9%,#1c299b 91.1%,#1c2899 91.5%,#1e36b8 91.7%,#1e37ba 92.4%,#1c227e 93.1%,#1c2486 93.5%,#1c2588 93.9%,#1d2da3 94.2%,#1c227d 95.3%,#1c2793 95.5%,#1c2074 95.7%,#1c258b 96.4%,#1c2176 97.0%,#1c2381 97.9%,#1c2793 98.1%,#1c2896 98.3%,#1e33b2 98.6%,#1e33b2 98.8%,#1d2ca0 99.0%,#1d30ab 99.2%,#1d30ab 99.7%,#1c258c 99.9%)"></div><div style="left:75.5px;top:82.65px;width:908.0px;height:2.08px;background:linear-gradient(90deg,#1c258b 0.1%,#1c299b 0.3%,#1c2483 1.0%,#1c2485 1.2%,#2fd1b2 1.9%,#30d2ad 2.3%,#1d2ca1 3.0%,#1c2795 3.2%,#1f3ac3 3.6%,#203fcd 3.9%,#1f38bd 5.0%,#1f3bc5 5.4%,#2374dc 5.6%,#2dc7d0 6.1%,#2cc5d6 6.7%,#2fceba 6.9%,#247fde 7.4%,#2484df 7.6%,#36d68f 8.0%,#31d4a2 8.5%,#1e34b4 9.1%,#214fd3 9.4%,#203fce 9.8%,#1c2382 10.0%,#237cdd 10.5%,#2eceba 10.7%,#2ecebb 14.0%,#2dc9ca 15.3%,#2dc9c8 16.2%,#2cc2d8 16.9%,#1e33b1 17.5%,#1e35b6 17.7%,#1d30aa 18.2%,#1f38be 19.1%,#1f39bf 19.5%,#1e33b3 19.7%,#1f3ac2 20.2%,#1f3bc4 20.6%,#1c2483 21.0%,#1e35b5 21.3%,#2dc7ce 21.7%,#2bbed9 22.1%,#215bd6 22.4%,#1c2589 22.8%,#1d2ca0 23.0%,#1e31ae 23.7%,#1c2a9c 23.9%,#1d2ba0 24.3%,#1e34b3 24.6%,#1d2da3 25.4%,#1d31ac 26.1%,#1c2898 26.8%,#1c2a9e 27.0%,#1c2690 27.4%,#1e35b7 28.3%,#1f3bc4 28.5%,#214bd2 30.1%,#1f38be 31.4%,#203fcd 32.5%,#203ecb 33.1%,#2044d1 34.3%,#2154d4 35.4%,#226cda 36.9%,#2267d9 37.1%,#1c2074 37.8%,#1c237f 38.4%,#1c1e68 40.4%,#1c1d66 40.9%,#1d31ac 41.5%,#1d2da4 41.7%,#2fd0b3 42.4%,#2fd0b4 43.3%,#225bd6 43.7%,#1e35b7 43.9%,#1e35b7 44.8%,#1d2ea6 45.5%,#1d30ab 46.4%,#1e37ba 47.0%,#1d2fa8 47.5%,#1d31ac 47.9%,#2ab4da 48.3%,#37d68c 48.6%,#30d4a8 51.2%,#1d30ab 51.9%,#1c2792 52.5%,#1c2b9e 53.2%,#1c299a 53.9%,#1c299a 54.5%,#1f3bc5 55.6%,#1e35b7 56.9%,#1d30aa 57.4%,#1e35b5 58.0%,#1f3bc5 58.3%,#1c1e6a 58.9%,#1d2fa8 59.6%,#1e34b4 60.5%,#203ecb 61.1%,#1e35b6 61.6%,#1c268e 61.8%,#1c2791 62.0%,#203ecb 62.4%,#1f3ac2 62.7%,#1f3cc8 63.1%,#203dca 63.8%,#1e34b5 64.6%,#1e35b6 64.9%,#1c227d 65.3%,#1c2075 65.5%,#1d2ca2 66.0%,#1e31ad 66.6%,#1c299b 67.7%,#1c299b 68.2%,#1c227c 68.6%,#1c1d63 68.8%,#1c1d63 69.3%,#1e34b5 69.5%,#2bbed9 69.9%,#29abdb 70.8%,#2ab8da 71.7%,#2268d9 71.9%,#2dc9ca 72.4%,#bdf10f 72.6%,#75e431 76.1%,#34d599 77.9%,#39d786 78.3%,#43da5a 79.0%,#3bd87c 79.2%,#1d30aa 79.8%,#1e35b7 80.7%,#1d30ab 81.2%,#1d30ac 81.6%,#1d2da5 82.0%,#1d2ca2 82.5%,#1d30ab 82.7%,#1d2ca0 83.1%,#1d30ab 83.6%,#1c2486 84.0%,#1c2691 84.7%,#1c258a 84.9%,#1c2794 85.1%,#1f38bc 85.6%,#1c2896 86.0%,#1d2ca2 86.2%,#1c258c 87.1%,#1c268e 88.7%,#1e33b1 88.9%,#1d2fa8 89.1%,#1f38bd 89.3%,#1d2ca1 89.5%,#1c258b 90.4%,#1c2792 90.6%,#1c2588 91.1%,#1c268d 91.3%,#1c2383 91.7%,#1d2b9f 92.8%,#1c2793 93.5%,#1c268e 94.2%,#1c2a9e 94.4%,#1c2896 94.6%,#1e33b2 95.5%,#1f3cc7 95.7%,#1e32b0 95.9%,#1e33b2 96.1%,#1c268e 96.6%,#1c258c 97.0%,#1d30aa 97.2%,#1c268f 97.5%,#1c258c 97.7%,#1c299a 97.9%,#1c2487 98.1%,#1c268d 98.3%,#1d2ca0 98.6%,#1d2ca2 98.8%,#1e34b3 99.0%,#1c268f 99.9%)"></div><div style="left:75.5px;top:84.34px;width:908.0px;height:2.08px;background:linear-gradient(90deg,#1c299b 0.1%,#1e34b3 0.3%,#1f39bf 1.4%,#1d2ca1 3.2%,#1c1c60 3.9%,#1c1c60 4.1%,#2261d7 4.5%,#2cc5d4 4.7%,#2dc8cd 5.2%,#2153d4 5.6%,#1c2792 5.8%,#1c2791 6.3%,#1c1c60 6.9%,#1c2178 7.2%,#1c268e 7.6%,#1c227d 7.8%,#237bdd 8.3%,#2ecebb 8.5%,#1e34b4 9.1%,#1e34b4 10.0%,#2eccc0 10.7%,#2fcfb7 12.2%,#2dc9ca 14.2%,#2cc6d3 15.7%,#2dcac7 16.4%,#29b0db 17.3%,#225dd6 17.5%,#1d2ca0 18.0%,#1f3dc8 18.2%,#2040cf 18.8%,#1f39bf 19.7%,#1c2b9f 20.2%,#1e34b4 20.4%,#1f37bb 21.0%,#237cdd 21.3%,#30d4a8 21.7%,#1f38be 22.4%,#1f39c0 23.9%,#225bd6 24.1%,#2372db 24.3%,#28a8dc 24.6%,#2bbdd9 25.4%,#2592df 27.4%,#2695de 27.6%,#4edd45 28.3%,#47dc4b 30.3%,#a6ed19 31.2%,#77e431 32.7%,#77e431 34.5%,#2ab6da 35.1%,#28a5dc 36.2%,#2592df 36.7%,#279cdd 37.1%,#1d2b9f 37.8%,#1c299b 38.0%,#1e37ba 38.7%,#1d2da4 39.5%,#1c2795 39.8%,#1d2ea6 40.6%,#1e35b7 40.9%,#1c2a9d 41.3%,#1e36b9 42.2%,#1e32af 42.8%,#1f37bc 43.9%,#2260d7 44.2%,#203dca 44.6%,#1c2691 44.8%,#1c2382 45.5%,#1c2588 45.7%,#1c2381 46.1%,#2cc0d8 46.8%,#2cc5d5 47.9%,#2048d2 48.6%,#203fce 48.8%,#214cd3 49.0%,#1f3bc5 49.7%,#203dc9 49.9%,#1f38bc 50.3%,#1f3cc7 51.4%,#2040d0 51.7%,#1d2ca1 52.3%,#1c299b 53.0%,#1d2da4 53.4%,#1c2b9f 53.6%,#1d30aa 54.1%,#1c2073 54.5%,#1c1c60 54.7%,#1c1c60 55.0%,#1d2da4 55.4%,#2044d1 55.6%,#2155d5 56.5%,#2040d0 57.6%,#2151d4 58.3%,#1f37bc 58.5%,#1f39bf 58.9%,#2151d4 59.1%,#203ecc 59.8%,#215ad6 60.9%,#2261d7 61.3%,#1f38be 61.8%,#1e32af 62.4%,#1e34b5 62.9%,#1d2da5 63.1%,#1d30ac 64.2%,#1d30ac 65.1%,#1f3cc7 66.0%,#1f3cc7 66.4%,#2048d2 66.6%,#214cd3 67.5%,#1f3bc5 67.7%,#1f3ac3 68.4%,#2157d5 68.6%,#2dc7cf 69.1%,#2cc3d8 71.7%,#2375dc 71.9%,#27a1dd 72.1%,#bdf10f 72.4%,#9aeb1f 73.7%,#d2f309 73.9%,#90e924 74.1%,#aeee15 75.7%,#99eb1f 76.1%,#33d59a 76.3%,#2fcfb6 76.8%,#2fd1b2 78.3%,#30d4a8 79.2%,#2592df 79.4%,#1d2ca1 79.8%,#1f38be 80.1%,#1f38bc 80.3%,#2dc8cb 80.9%,#2dc6d1 81.6%,#1e34b3 82.3%,#1d2ea7 83.1%,#1d2ba0 83.4%,#1d30ab 83.6%,#1c2897 84.3%,#1c2897 85.1%,#1e35b7 85.4%,#1e33b1 85.8%,#214cd3 86.2%,#2156d5 86.5%,#1f39c0 86.7%,#1e36b8 86.9%,#1f3ac2 87.1%,#1c227d 87.6%,#1c227b 87.8%,#1c258c 88.0%,#1f39c1 88.4%,#2159d6 88.9%,#203fce 89.3%,#2049d2 89.5%,#1f3ac2 90.0%,#1f39bf 90.2%,#2040cf 90.6%,#1e33b1 91.1%,#1f3ac1 91.3%,#1c2b9e 92.0%,#1d2ba0 92.2%,#1c2795 92.4%,#1d2da4 92.8%,#1c2b9f 93.3%,#1d2ea6 94.4%,#1c2795 94.6%,#1c2b9e 95.9%,#1c2896 96.6%,#1c2589 96.8%,#1c299a 97.2%,#1c268e 97.5%,#1c2897 98.1%,#1d2ca1 98.3%,#1c268d 98.6%,#1c2486 98.8%,#1d2ca1 99.2%,#1c2793 99.7%,#1c299b 99.9%)"></div><div style="left:75.5px;top:86.02px;width:908.0px;height:2.08px;background:linear-gradient(90deg,#2261d7 0.1%,#2bbbd9 0.3%,#2ab6da 3.4%,#29b0db 3.6%,#1e34b4 4.1%,#1c2383 4.3%,#1c2691 4.5%,#1c2485 4.7%,#2fd0b5 5.4%,#30d4a7 6.3%,#1e34b3 6.7%,#1c1c60 6.9%,#1f37bc 7.6%,#1f38bd 7.8%,#29acdb 8.5%,#29aedb 8.7%,#1e37bb 9.1%,#2154d4 9.6%,#214ad2 9.8%,#1c237f 10.0%,#9eeb1d 10.7%,#87e728 14.0%,#30d2ad 14.6%,#34d59a 16.4%,#30d2ad 17.3%,#258fdf 17.5%,#225ed7 17.7%,#225fd7 18.0%,#2bbdd9 18.2%,#2bbad9 18.4%,#203fcd 18.8%,#203dca 19.9%,#2486e0 20.4%,#258cdf 20.6%,#225bd6 20.8%,#1c2b9f 21.0%,#2482df 21.5%,#2ecac5 21.7%,#1e32b0 22.4%,#203ecb 23.2%,#1c227c 23.9%,#2ab3da 24.6%,#2590df 26.1%,#2481de 27.6%,#34d596 28.3%,#40d969 29.0%,#47dc4c 30.5%,#36d68e 32.3%,#46db50 32.9%,#36d68f 34.0%,#30d3ab 34.7%,#2bbed9 35.1%,#2cc5d5 36.9%,#2bbad9 37.1%,#1e33b2 37.8%,#1e34b5 38.2%,#1c2a9d 39.5%,#1d2ea7 39.8%,#1d2fa9 40.4%,#1e34b4 40.6%,#1d2ea5 40.9%,#1e33b1 41.5%,#1d30aa 42.2%,#1e34b4 42.8%,#1f39bf 43.7%,#1f38bd 43.9%,#28a6dc 44.6%,#f8f300 44.8%,#cff30a 45.9%,#f8e300 46.6%,#ecf703 47.0%,#d6f408 48.3%,#f8e400 48.6%,#279ddd 48.8%,#34d597 49.0%,#2fd1b0 49.9%,#2fd1b0 50.3%,#1d2da4 51.0%,#1d2ca2 52.1%,#1c2896 52.3%,#1e33b2 53.2%,#1f3ac2 53.4%,#1c2b9f 54.3%,#1c227b 54.5%,#1c2b9e 54.7%,#2040cf 55.0%,#2593df 55.2%,#27a0dd 56.3%,#2699de 56.5%,#1f39c0 57.2%,#1e37ba 57.4%,#1f3cc7 57.8%,#2151d4 58.0%,#2156d5 58.5%,#1f3ac3 58.7%,#1f3ac1 58.9%,#2040cf 59.1%,#1f3cc6 60.2%,#1e35b6 61.6%,#1d2da4 62.2%,#2699de 62.9%,#28a4dc 63.1%,#1d2fa7 63.8%,#1d2ca1 64.4%,#1d2fa8 64.9%,#1c2486 65.3%,#1c1e68 65.5%,#1c1f6d 65.7%,#1d2ea7 66.4%,#1e32af 67.3%,#1d2da5 67.5%,#1e33b2 68.4%,#1d2ea6 68.6%,#1c1f6d 69.1%,#1d31ad 69.7%,#1e36b8 69.9%,#1d2fa9 71.9%,#2dc9c8 72.6%,#2dc7cf 74.1%,#2dcac6 75.2%,#2bbdd9 75.9%,#35d692 76.5%,#3cd878 77.9%,#3bd87b 78.7%,#1c2487 79.4%,#1c2381 79.6%,#1c2896 80.1%,#1d2ea7 80.9%,#1d2ba0 81.2%,#1d2ca2 82.0%,#1e32af 82.3%,#1c2072 83.4%,#1c2179 83.6%,#1c2072 83.8%,#1c237f 84.0%,#1c227a 84.7%,#1c2179 85.8%,#1c2483 86.0%,#1c227a 86.2%,#1c2484 86.5%,#1d2ba0 86.7%,#1c268e 86.9%,#1d30ab 87.1%,#1d31ad 87.3%,#1f3ac3 87.6%,#1c2a9c 87.8%,#1c2792 88.0%,#1c299b 88.2%,#1c2484 88.4%,#1c2381 88.9%,#1d2fa8 89.1%,#1c2792 89.5%,#1c268e 90.2%,#1c227d 90.4%,#1c227c 91.1%,#1c2898 91.5%,#1c2486 92.0%,#1c2381 92.6%,#1e32b0 93.3%,#1c2795 93.5%,#1c2896 93.7%,#1c227c 94.6%,#1c258a 94.8%,#1c2484 95.3%,#1c268f 95.7%,#1d2da3 95.9%,#1c2793 96.4%,#1c2a9e 96.6%,#1c2589 96.8%,#1c258b 97.0%,#1c1f70 97.2%,#1c268e 98.3%,#1c258c 99.0%,#1c2179 99.2%,#1c227e 99.4%,#1c2690 99.7%,#1c2381 99.9%)"></div><div style="left:75.5px;top:87.71px;width:908.0px;height:2.08px;background:linear-gradient(90deg,#2370db 0.1%,#2cc2d8 0.3%,#2bc0d9 0.8%,#29addb 1.2%,#2cc4d8 1.7%,#2cc4d7 2.1%,#2cc4d7 3.4%,#214bd2 4.1%,#203ecb 5.8%,#225cd6 6.7%,#1f3cc7 6.9%,#2590df 7.4%,#2ecbc3 7.6%,#29acdb 7.8%,#28a6dc 8.3%,#2dc8cb 8.5%,#2eccc0 8.7%,#237bdd 8.9%,#2048d2 9.4%,#2698de 9.6%,#2489e0 10.0%,#2cc5d5 10.7%,#2ecdbd 13.3%,#2dcac6 14.0%,#28a3dc 14.4%,#28a3dc 16.9%,#28a7dc 17.5%,#2ecebb 18.0%,#30d3ab 19.3%,#1d2ea6 19.9%,#1e36b9 21.0%,#29abdb 21.7%,#28a8dc 22.1%,#1e37ba 22.6%,#1c2589 22.8%,#1c2a9c 23.2%,#1c2382 23.9%,#2485df 24.3%,#2fcfb8 24.6%,#2ecac5 27.6%,#40d968 28.3%,#43da5c 29.8%,#48dc49 30.7%,#40d968 31.8%,#78e530 33.6%,#4fdd44 34.5%,#2dc8cb 35.1%,#2dc6d2 36.2%,#2dc7ce 37.1%,#203ecc 37.8%,#1e36b9 38.7%,#1d2fa7 39.1%,#1e35b5 40.2%,#1e33b2 40.9%,#1e37ba 41.7%,#1e32ae 42.2%,#2cc6d3 42.8%,#2dc7cf 43.1%,#1f38be 43.7%,#1f39bf 44.4%,#1e35b7 44.6%,#2bbdd9 45.3%,#2dcac6 46.4%,#2dc7ce 47.9%,#2cc4d7 48.6%,#2373db 48.8%,#2155d5 49.2%,#28a7dc 49.4%,#1d2da5 50.1%,#1d2ea6 50.3%,#2cc3d8 51.0%,#2bbed9 51.4%,#1e35b7 52.1%,#1f38bc 53.2%,#2dc8cd 53.9%,#2dc6d1 54.5%,#1e34b3 55.2%,#237fde 55.6%,#2bbdd9 55.8%,#29b1db 56.7%,#1c2487 57.4%,#1d2ea6 58.0%,#1c2896 58.3%,#1d2b9f 58.5%,#1c299b 58.7%,#1c227a 59.1%,#1c258b 59.6%,#1c2486 59.8%,#1c2898 60.2%,#1c2792 60.7%,#1c2a9d 61.1%,#1c299b 61.6%,#2042d0 62.4%,#2047d2 62.9%,#2dc8cb 63.5%,#2dc8cc 64.2%,#2045d1 64.9%,#1e35b6 65.7%,#1d2fa7 66.0%,#1d2da3 66.9%,#203ecc 68.4%,#1f37bc 69.3%,#1e32b0 69.7%,#1e33b2 69.9%,#2592df 70.4%,#2dc7ce 70.6%,#2ecac6 71.5%,#225fd7 71.9%,#2373db 72.1%,#40d96a 72.6%,#44db58 74.3%,#31d4a3 75.4%,#39d783 77.2%,#37d68a 78.3%,#2fd1b1 79.0%,#2bbbd9 79.4%,#2dc8cb 79.8%,#2cc4d7 80.3%,#2fcfb8 81.2%,#2bbed9 82.3%,#2dc7d0 82.7%,#1d31ad 83.4%,#1d2ea5 83.8%,#1e34b4 84.0%,#1c299b 84.9%,#1c268e 85.6%,#1d30aa 86.5%,#1f3dc9 86.7%,#2047d2 87.1%,#1c2896 88.0%,#1d2fa9 89.3%,#1c258a 90.2%,#1d2b9f 90.4%,#1d31ad 90.9%,#214ed3 91.1%,#203eca 91.5%,#1e32b0 91.7%,#1c2a9c 92.2%,#1c2a9c 92.8%,#1d2ca1 93.3%,#1c2795 93.5%,#1c2793 93.9%,#1c2691 94.4%,#1d2fa9 95.0%,#1d2ea6 95.3%,#1f39c0 95.7%,#1d2ca2 96.1%,#1f39c0 96.6%,#1c2793 97.0%,#1d2ca1 97.5%,#1c2898 97.7%,#1c2a9e 97.9%,#1f3cc7 98.1%,#1e36b9 98.8%,#2041d0 99.0%,#1e34b3 99.4%,#1f39bf 99.7%,#1e33b1 99.9%)"></div><div style="left:75.5px;top:89.39px;width:908.0px;height:2.08px;background:linear-gradient(90deg,#237ede 0.1%,#2dc8cb 0.3%,#2dc6d2 1.0%,#2cc5d4 2.1%,#2dc9c8 3.2%,#1f3cc6 3.6%,#1c1f6d 3.9%,#1d2da4 4.3%,#203ecb 4.5%,#1f3cc7 6.1%,#2045d1 6.7%,#203fcd 6.9%,#1d30aa 7.2%,#2158d5 7.6%,#29afdb 7.8%,#29abdb 8.7%,#2153d4 9.4%,#215ad6 9.8%,#1e36b9 10.0%,#2489e0 10.5%,#2ecdbc 10.7%,#2dc8cc 12.0%,#2fceba 14.0%,#2ecac5 15.3%,#2ecdbd 16.6%,#2eccc1 17.1%,#1d2da3 17.7%,#1c2899 18.0%,#1c2a9e 18.2%,#1c2690 18.4%,#1c2a9c 19.7%,#1c2792 20.2%,#1d2ca0 20.8%,#1c2899 21.0%,#2373db 21.5%,#2bc0d9 21.7%,#2ab7da 22.1%,#1e36b9 22.8%,#1f37bc 23.2%,#203eca 23.5%,#1f3bc4 23.7%,#1d2da4 23.9%,#203dca 24.1%,#2ecdbe 24.6%,#2fd2ae 26.5%,#2dc8cb 27.6%,#3cd878 28.5%,#40d969 30.1%,#44db5a 30.9%,#41da62 32.9%,#39d784 34.5%,#2cc6d3 35.1%,#2ecac5 37.1%,#1d2ea7 37.8%,#1c2898 38.7%,#1c258c 38.9%,#1c258b 39.5%,#1c2b9e 40.0%,#1c299b 40.6%,#1c1e69 41.7%,#1c2484 42.6%,#1c258a 43.1%,#1c2792 43.3%,#1c2383 43.9%,#1c1f6c 44.2%,#1c1c62 44.8%,#1c1d66 45.0%,#2486e0 46.4%,#2484df 46.8%,#1f3ac1 47.5%,#1f3dc9 48.1%,#2cc1d8 48.8%,#29b0db 51.2%,#2151d4 51.4%,#1c1f6d 51.9%,#1d2ca2 52.3%,#1e33b3 52.5%,#1e36b9 53.0%,#1c2a9d 53.9%,#1c2a9d 54.3%,#1c2486 54.5%,#1c1c60 54.7%,#1c1d65 55.2%,#1c2791 55.6%,#1c299a 56.1%,#1c2897 57.8%,#1c2a9e 58.3%,#1c2485 58.7%,#1c1f6d 58.9%,#1c2382 59.1%,#1f38be 59.6%,#1e35b6 59.8%,#1f39bf 60.0%,#1d31ac 60.7%,#1f38bd 61.3%,#1d2da3 61.8%,#1c299a 62.0%,#1e33b1 62.4%,#1d2ea5 62.9%,#1e33b1 63.3%,#1d2da3 63.5%,#1e37ba 65.1%,#1c2792 65.7%,#1c258a 66.4%,#1c2796 67.3%,#1c2b9e 67.5%,#1c2796 68.2%,#1c2b9f 69.1%,#2ecebb 69.7%,#32d5a1 71.3%,#1d2ea6 71.9%,#2269d9 72.1%,#214ed3 72.4%,#214fd3 73.2%,#214dd3 73.5%,#2261d7 73.7%,#225dd6 74.1%,#236dda 74.3%,#2049d2 74.6%,#2267d9 74.8%,#2267d9 75.2%,#214cd3 75.7%,#2267d9 75.9%,#2264d8 77.0%,#2373db 77.2%,#2154d4 77.4%,#2268d9 77.6%,#2152d4 77.9%,#236dda 78.5%,#2151d4 79.2%,#237ede 79.4%,#2590df 79.6%,#28a5dc 82.3%,#28a7dc 82.7%,#2481df 82.9%,#2373db 83.1%,#1f3cc7 83.4%,#1f39bf 83.8%,#1f3bc3 84.7%,#2157d5 85.4%,#203ecb 86.5%,#1f3bc4 86.9%,#203fcd 87.6%,#2265d8 87.8%,#2261d7 88.0%,#2487e0 88.4%,#2483df 88.7%,#2266d8 88.9%,#2262d7 89.1%,#237bdd 89.3%,#2378dc 89.5%,#2040d0 90.0%,#214bd3 90.2%,#203fcd 90.6%,#236fda 91.5%,#1f3dc9 92.8%,#2042d0 94.6%,#225ed7 94.8%,#2043d1 95.3%,#2153d4 95.5%,#2047d2 95.7%,#2157d5 95.9%,#2042d0 96.1%,#2043d1 96.8%,#2154d4 97.0%,#2045d1 97.2%,#2487e0 97.9%,#2154d4 98.1%,#225cd6 98.6%,#1f3ac2 99.2%,#203fce 99.4%,#1f3ac3 99.7%,#1d2ea5 99.9%)"></div><div style="left:75.5px;top:91.07px;width:908.0px;height:2.08px;background:linear-gradient(90deg,#1c2999 0.1%,#1f39bf 0.3%,#203ecb 0.8%,#203ecc 1.2%,#1d2fa9 1.9%,#1d2da3 2.3%,#1e36b8 3.4%,#1e35b7 4.5%,#2fd2af 5.2%,#30d3ab 6.3%,#1d2da4 6.9%,#2bbbd9 7.6%,#2371db 7.8%,#2264d8 8.0%,#2371db 8.3%,#2dc8cd 8.5%,#2159d6 8.9%,#226dda 9.1%,#27a0dd 9.4%,#279ddd 9.6%,#1c2380 10.0%,#1e36b8 10.2%,#33d59c 10.7%,#36d68e 12.4%,#2fd1b0 13.8%,#31d4a3 14.0%,#2697de 14.6%,#279ddd 15.5%,#2488e0 16.6%,#2593df 17.1%,#1e34b5 17.7%,#1e32af 18.4%,#1e33b2 19.1%,#1f3ac2 19.3%,#1c2175 19.9%,#1d2ca2 20.2%,#2045d1 20.6%,#1f3cc7 20.8%,#203fce 21.0%,#29b1db 21.7%,#2373db 21.9%,#1d31ac 22.1%,#1c227d 22.4%,#1c237f 23.0%,#1c258c 23.2%,#1c2484 23.7%,#1c2486 23.9%,#2489e0 24.6%,#2481de 25.9%,#237bdd 27.0%,#2488e0 27.6%,#7ee62d 28.3%,#8be827 30.9%,#6ee335 33.6%,#82e62b 34.5%,#2bbdd9 34.9%,#2590df 35.1%,#28a4dc 36.2%,#2486e0 37.1%,#1c2a9c 37.8%,#1d2b9f 38.4%,#1c2897 38.7%,#1d2fa8 39.3%,#1d2ca2 40.0%,#1d2fa8 40.6%,#1e35b6 40.9%,#2ecbc2 41.5%,#1f39c0 42.2%,#1e33b2 42.8%,#1d30ab 43.1%,#1e36b9 43.9%,#1c1e69 44.6%,#1c2073 44.8%,#1d2ca2 45.3%,#1e31ae 47.0%,#1e34b5 47.2%,#1d2ea6 47.5%,#1d2fa7 47.7%,#2153d4 47.9%,#2ab3da 48.1%,#30d3ac 48.3%,#38d789 48.6%,#30d4a9 49.7%,#37d68c 50.6%,#2fd2af 51.9%,#2486df 52.1%,#1c2588 52.5%,#1d30ab 52.8%,#1e36b9 54.5%,#1d2ca1 54.7%,#1c2a9d 55.2%,#1d31ad 55.4%,#1d2da4 56.3%,#1e36ba 57.4%,#1e35b7 58.0%,#1e32b0 58.5%,#1c2075 58.9%,#1c1c60 59.1%,#1c1e68 60.9%,#1c1f6d 62.0%,#1e32b0 62.7%,#1d30aa 63.5%,#1e34b3 63.8%,#1d2ea6 64.0%,#1d31ad 65.3%,#1e32b0 65.7%,#1c2792 66.2%,#1c268e 66.4%,#1c2897 66.6%,#1c299a 67.3%,#2043d1 67.5%,#29afdb 68.0%,#2ab2da 68.4%,#1e35b6 69.1%,#1d30ab 69.7%,#1e35b6 69.9%,#1d30ab 71.0%,#203fce 71.9%,#2378dc 72.1%,#2155d5 72.4%,#2159d5 73.2%,#2040d0 73.9%,#2262d7 74.1%,#2156d5 75.2%,#2370db 75.7%,#214cd3 76.3%,#2156d5 76.8%,#214bd2 77.2%,#2263d8 77.6%,#2153d4 78.1%,#225dd6 78.7%,#2150d4 79.2%,#225dd6 79.4%,#2bbfd9 79.6%,#269ade 79.8%,#269ade 81.4%,#29acdb 82.5%,#29aadb 82.7%,#236dda 82.9%,#2483df 83.1%,#203ecc 83.4%,#1e35b6 83.6%,#1e31ae 84.0%,#1f3cc7 84.7%,#214cd3 84.9%,#1f3bc4 85.1%,#203ecc 85.4%,#1d31ad 85.6%,#1d2ea7 85.8%,#1f37bb 86.0%,#1e34b4 86.2%,#1f3cc7 86.5%,#1e35b5 87.1%,#1d2ca0 88.2%,#1e34b4 89.3%,#203fce 89.8%,#2481de 90.2%,#2154d4 90.6%,#2264d8 90.9%,#203dca 91.1%,#1e31ad 91.5%,#1d30ab 92.2%,#1c2b9f 92.4%,#1e31ad 92.8%,#1f3cc6 93.1%,#1e36b8 95.0%,#1e31ae 95.7%,#1f39c0 96.1%,#1f3bc3 96.6%,#2150d4 97.0%,#214fd3 97.9%,#1e35b6 98.3%,#1f3bc5 98.6%,#1d30ab 98.8%,#1e32ae 99.2%,#1d2ca1 99.7%,#1c2588 99.9%)"></div><div style="left:75.5px;top:92.76px;width:908.0px;height:2.08px;background:linear-gradient(90deg,#2269d9 0.1%,#2ab8da 0.3%,#2bbdd9 2.5%,#2bbed9 3.2%,#1e33b2 3.6%,#1c2486 3.9%,#1e32b0 4.3%,#1c2a9c 5.4%,#1e34b3 6.3%,#1c1d66 6.9%,#1c2791 7.4%,#1c2898 7.6%,#1c2488 7.8%,#1f3ac1 8.0%,#258cdf 8.3%,#29acdb 8.5%,#1f3bc5 8.9%,#1e32af 10.0%,#2370db 10.2%,#bcf00f 10.5%,#eef703 11.3%,#c7f20c 11.6%,#e8f604 12.2%,#f8f800 13.8%,#e0f506 14.2%,#32d59f 14.4%,#2ecbc3 14.9%,#2cc4d7 16.0%,#2bbfd9 17.1%,#2dc8cc 20.2%,#203dca 20.8%,#203eca 21.0%,#32d5a1 21.7%,#30d4a8 21.9%,#1e37bb 22.6%,#203ecb 23.5%,#1f3cc6 23.9%,#2dc9c8 24.6%,#2cc4d7 25.0%,#2dc9c8 25.4%,#2bbfd9 25.7%,#2dc8cd 26.1%,#2cc4d7 27.6%,#64e13a 28.3%,#9eeb1d 30.7%,#69e237 31.8%,#73e433 34.3%,#8de825 34.5%,#2cc5d5 35.1%,#2dc9c8 36.7%,#2cc4d7 37.1%,#1e34b5 37.8%,#1f38bd 39.3%,#1e33b1 39.5%,#1d2fa7 40.2%,#1e37ba 40.6%,#1e31ae 40.9%,#1f37bc 41.1%,#1c2382 41.5%,#1c2070 41.7%,#1c2485 42.0%,#1c2486 43.1%,#1c227d 43.9%,#1c2381 44.2%,#1c1c61 44.6%,#2dc7cf 45.3%,#2ecbc2 45.9%,#2eccbf 46.4%,#203fcd 47.0%,#203fcd 47.9%,#1d2fa9 48.1%,#1c227c 48.6%,#1f39c0 49.0%,#1f37bc 49.2%,#215bd6 49.4%,#2dc9c8 49.9%,#2bbbd9 50.8%,#2ab8da 51.2%,#1e33b1 51.9%,#1d31ac 52.1%,#1e37ba 53.2%,#1d31ac 54.1%,#1c268e 54.3%,#1c237e 54.7%,#1c268f 55.0%,#1c2b9f 56.7%,#1c2791 57.2%,#1d2da4 58.0%,#1c2794 58.5%,#1c2898 58.7%,#1c268e 58.9%,#2dc9c8 59.6%,#2dc8cb 61.3%,#1d30aa 61.8%,#1c227e 62.0%,#203ecb 62.4%,#2157d5 63.3%,#214ad2 64.4%,#2150d4 65.1%,#1c2487 65.5%,#1c1e6a 65.7%,#1c227d 66.0%,#41da65 66.6%,#40d96a 66.9%,#1c2a9c 67.5%,#1c2487 67.7%,#1c2488 68.6%,#1c2691 68.8%,#1c2177 69.3%,#2fcfb7 69.9%,#1d31ac 70.6%,#2371db 70.8%,#2fd0b5 71.3%,#2ecbc4 71.9%,#3bd87b 74.6%,#34d599 75.9%,#38d787 76.1%,#f1f702 76.3%,#bcf00f 77.9%,#f8dc00 78.3%,#dbf407 79.4%,#1c268d 79.6%,#1c2999 79.8%,#1c2898 80.3%,#1c2793 82.0%,#1c2a9d 82.3%,#1c1f6d 82.7%,#1c2178 82.9%,#1d30ac 83.4%,#1d2da4 83.8%,#1e36b8 84.3%,#1e35b7 84.7%,#2042d1 85.1%,#1f38bc 85.4%,#2151d4 85.6%,#2047d2 85.8%,#2269d9 86.2%,#225ed7 86.5%,#247fde 86.7%,#2262d7 86.9%,#1f37bc 88.0%,#1e34b5 88.2%,#1f3bc4 88.4%,#1f3ac1 88.7%,#214dd3 88.9%,#2046d1 89.5%,#1f3cc7 89.8%,#1f3ac1 90.2%,#1e35b7 90.4%,#1f38bd 90.6%,#1e34b4 91.1%,#1f39bf 92.0%,#1f37bc 92.8%,#1d2fa9 93.3%,#1e35b7 93.7%,#203fce 93.9%,#2040cf 94.6%,#1d30ac 95.0%,#1e36b9 95.5%,#1d31ad 95.7%,#1e33b2 96.4%,#1e33b1 97.2%,#1f3bc5 97.5%,#1f3dc9 97.7%,#1e36ba 97.9%,#1e37ba 98.1%,#2046d1 98.3%,#1f3ac2 98.6%,#203ecc 99.4%,#1d30aa 99.9%)"></div><div style="left:75.5px;top:94.44px;width:908.0px;height:2.08px;background:linear-gradient(90deg,#2267d9 0.1%,#29afdb 0.3%,#27a0dd 1.2%,#1c2380 1.9%,#1c227d 2.5%,#2bb9d9 3.2%,#2bbbd9 3.6%,#1c2a9c 4.3%,#1c2793 4.7%,#1c2b9f 5.6%,#1c2792 6.7%,#1c2898 6.9%,#2dc9ca 7.6%,#2ecdbe 7.8%,#2bc0d9 8.5%,#2cc5d6 8.7%,#1e35b6 9.1%,#1e36b8 9.4%,#2fd2af 9.8%,#27a2dd 10.0%,#2695de 10.5%,#2dc7ce 10.7%,#2ecbc4 12.0%,#2dc7d0 13.1%,#2cc6d3 14.0%,#30d3ac 14.6%,#2ecdbc 17.3%,#2cc1d8 18.0%,#2cc4d8 19.5%,#28a5dc 19.9%,#226ad9 20.4%,#2268d9 21.0%,#2ab6da 21.7%,#2bbad9 21.9%,#1e33b3 22.6%,#2dc8cb 23.2%,#2dc8cc 23.5%,#258fdf 23.7%,#1f39bf 23.9%,#1f3dc9 24.1%,#2370db 24.3%,#2cc2d8 24.6%,#2dc6d1 25.0%,#28a8dc 26.5%,#2dc7d0 27.6%,#6de336 28.3%,#5bdf3f 34.5%,#2cc4d8 35.1%,#2ab5da 36.5%,#2cc1d8 37.1%,#1c299a 37.8%,#1c2381 38.4%,#1c2486 38.7%,#1c2177 38.9%,#1c227a 39.3%,#1c237f 39.5%,#1c1e69 39.8%,#1c227b 40.4%,#1c2071 40.6%,#1c2792 41.3%,#1c2793 41.5%,#1d2da4 41.7%,#1c2a9c 42.4%,#1d31ac 43.1%,#1d30aa 43.9%,#1e33b2 44.2%,#1d2ba0 44.4%,#1d2fa9 44.8%,#1f38bc 45.0%,#1e32b0 46.4%,#2697de 47.0%,#2593df 48.6%,#1c2795 49.2%,#1d2b9f 49.4%,#2eccc0 50.1%,#2043d1 50.6%,#1d2ca1 50.8%,#1c2a9c 51.2%,#1d31ac 51.4%,#1c1c60 52.1%,#1c2691 52.3%,#1e32af 52.5%,#214ed3 52.8%,#203ecb 53.9%,#214cd3 54.1%,#2049d2 54.3%,#1c227c 54.7%,#1c227a 55.0%,#1e34b3 55.4%,#1f3bc4 55.8%,#1e33b1 56.7%,#1f37bb 57.4%,#1f39c1 58.0%,#1e37ba 58.5%,#1c2793 58.7%,#1c227d 59.1%,#1c2795 59.4%,#1c2899 61.6%,#203fcd 62.2%,#1e33b1 63.1%,#2046d1 64.2%,#203dca 65.1%,#1c1c60 65.7%,#1c2486 66.2%,#1d2ea7 66.4%,#1f38bd 67.5%,#1e33b1 68.2%,#1e33b2 68.8%,#1c268e 69.3%,#1e36b8 69.5%,#2dc8cd 69.9%,#29b1db 71.3%,#2bbdd9 71.5%,#1d2da4 71.9%,#1d2fa9 72.1%,#2cc5d4 72.6%,#2ecdbd 75.2%,#2dc9c9 75.9%,#44db56 76.5%,#73e433 79.0%,#2ecdbc 79.6%,#2ecdbc 80.1%,#214fd3 80.7%,#203dc9 81.6%,#2040cf 82.5%,#1e31ae 82.7%,#1c2795 83.1%,#1e33b3 83.4%,#203fce 84.0%,#1e35b5 84.7%,#1e31ae 86.2%,#1f3bc4 87.1%,#1e33b1 88.2%,#1f39bf 88.4%,#1e35b6 88.9%,#1f3bc5 89.3%,#1d31ad 90.9%,#1d2ba0 91.1%,#1e37ba 92.2%,#203fcd 92.4%,#1e36b9 92.8%,#1f3ac2 93.1%,#1e33b1 93.3%,#1e33b2 93.9%,#1d2ea6 94.6%,#1f39c1 96.1%,#2043d1 96.4%,#1e36b9 96.8%,#1f38bd 97.0%,#1d2ba0 97.2%,#1e34b5 97.5%,#1d2ea5 97.7%,#1c2b9e 98.1%,#1f3bc4 99.2%,#1f38be 99.7%,#1d2da5 99.9%)"></div><div style="left:75.5px;top:96.12px;width:908.0px;height:2.08px;background:linear-gradient(90deg,#237dde 0.1%,#2eceba 0.3%,#2fd0b4 1.7%,#31d4a5 2.1%,#2cc3d8 4.1%,#2cc3d8 5.2%,#2ab6da 6.5%,#1c2794 6.9%,#1d2ea7 7.2%,#2fd1b1 7.6%,#2ecdbe 8.0%,#2695de 8.5%,#2ecdbe 9.1%,#2fd1b2 9.8%,#2486e0 10.0%,#2370db 10.5%,#2dc6d1 10.7%,#2eccc1 13.8%,#2fd1b1 16.2%,#2ecdbd 17.3%,#2045d1 18.0%,#225cd6 18.8%,#2150d4 19.3%,#1c2483 19.7%,#1c1f6d 19.9%,#1c2999 20.2%,#1e31ad 20.4%,#1e35b5 20.8%,#1d2da4 21.0%,#214fd3 21.5%,#279cdd 21.7%,#1d2ca1 22.4%,#1c2796 23.2%,#1e32ae 23.9%,#2695de 24.6%,#2592df 25.4%,#2591df 26.3%,#237bdd 27.4%,#2486e0 27.6%,#d6f408 28.3%,#c9f20c 31.6%,#f8ee00 32.7%,#ccf20b 34.5%,#2ab2da 35.1%,#2bbcd9 37.1%,#1c2485 37.8%,#1c2795 38.0%,#1d2da3 39.3%,#1c268e 41.1%,#1c1c60 41.5%,#1c1c60 42.0%,#1c2897 42.4%,#1c2a9d 42.8%,#1d30ab 43.1%,#1c299b 43.3%,#1c2899 43.9%,#1c1f6d 44.4%,#1c1c60 44.6%,#1c1c60 44.8%,#2fcfb7 45.5%,#2fd1b1 47.5%,#2eceba 47.9%,#237bdd 48.1%,#215ad6 48.6%,#2bbad9 48.8%,#2cc4d7 49.9%,#2bbad9 50.3%,#2dc7d0 51.9%,#2377dc 52.1%,#2043d1 52.3%,#1c2899 52.5%,#1d2fa8 52.8%,#1d2ea6 54.1%,#1e31ae 54.3%,#1d2ea6 54.5%,#1e35b5 54.7%,#1e34b3 55.0%,#1f39c0 55.2%,#1e33b1 55.4%,#1d30ab 57.2%,#1d30ab 57.6%,#1f37bc 58.5%,#1c227a 58.9%,#2ecbc2 59.6%,#2ecdbe 60.2%,#2cc5d4 60.9%,#32d5a0 61.6%,#33d59c 62.9%,#2fd1b0 63.5%,#1c2381 64.2%,#1c2176 64.6%,#1c2485 64.9%,#1c2383 65.3%,#1c299b 65.7%,#1c299a 66.0%,#1e33b1 66.2%,#1e36ba 67.1%,#1d2da4 68.0%,#1d2da4 68.4%,#1d30ab 68.6%,#1c227c 69.1%,#1c2588 69.3%,#2152d4 69.7%,#225fd7 69.9%,#214ed3 70.2%,#225cd6 70.4%,#2045d1 71.0%,#2152d4 71.3%,#2043d1 71.5%,#2152d4 71.7%,#1e34b5 71.9%,#2485df 72.4%,#2fd1b1 72.6%,#2fd1b1 75.0%,#2fd1b1 76.1%,#e3f505 76.3%,#b3ef13 77.9%,#d5f409 78.7%,#a2ec1b 79.4%,#2cc6d3 79.6%,#2ecdbd 80.9%,#2cc4d8 82.0%,#2dc7ce 82.7%,#1c299a 83.4%,#1c2792 83.8%,#1d31ac 84.7%,#1f3dc9 84.9%,#1e37ba 85.4%,#1f3cc7 85.6%,#1c2793 86.7%,#1f37bb 87.1%,#1f38bd 87.3%,#1e31ad 87.6%,#1d2ca1 89.1%,#1e31ae 89.5%,#1e31ae 90.4%,#1d2ba0 90.6%,#1d30aa 91.1%,#1c2795 91.5%,#1d30ab 91.7%,#1d2fa8 92.2%,#1c268e 92.4%,#1c2899 92.8%,#1f39bf 93.3%,#203ecb 93.7%,#1d2da4 94.4%,#1e35b7 95.3%,#203fce 95.5%,#203ecc 95.7%,#1e35b6 95.9%,#1f3bc5 96.1%,#1d2da4 96.8%,#1d2ca1 97.0%,#203ecc 97.2%,#2042d0 97.7%,#1c2b9e 98.6%,#1d2ca1 99.2%,#1e34b3 99.7%,#1c2b9e 99.9%)"></div><div style="left:75.5px;top:97.81px;width:908.0px;height:2.08px;background:linear-gradient(90deg,#1d30ab 0.1%,#2044d1 0.3%,#1f3cc6 1.7%,#203eca 2.3%,#1e32b0 3.4%,#1c258b 3.9%,#1c2380 4.7%,#1c2382 5.2%,#1c268e 5.4%,#1c268e 6.7%,#1c299b 6.9%,#2cc1d8 7.6%,#2590df 8.5%,#269ade 8.7%,#1c2792 9.1%,#1d2fa9 9.4%,#2eccbf 9.8%,#258fdf 10.0%,#258ddf 10.5%,#2fd2af 10.7%,#2dcac7 11.3%,#36d690 13.1%,#2fd1b1 14.2%,#2cc1d8 14.9%,#2ab2da 16.0%,#2dc7d0 16.6%,#1e34b4 17.3%,#1e33b1 18.0%,#1e34b4 18.6%,#1d2fa9 19.3%,#1f3ac3 20.2%,#1e35b6 20.6%,#1c237f 21.0%,#1e33b1 21.3%,#2eccc1 21.7%,#2dc9c8 22.1%,#2153d4 22.6%,#2042d0 22.8%,#2483df 23.0%,#2489e0 23.2%,#1e36b8 23.7%,#1f3bc5 23.9%,#2fd0b3 24.6%,#2ecdbe 27.6%,#36d68e 28.7%,#30d4a7 30.1%,#35d693 31.2%,#37d68a 34.5%,#2cc4d7 36.0%,#2cc5d5 37.1%,#1e37ba 37.8%,#1d2da4 38.9%,#1e36b9 39.5%,#1f3ac1 40.0%,#1d2ca2 40.9%,#1c2073 41.3%,#1c2071 42.0%,#2ecbc2 42.6%,#2ecbc4 42.8%,#1f3cc8 43.3%,#1c227c 43.5%,#1c227d 43.9%,#2ecebb 44.6%,#2eccbf 46.4%,#1c2487 47.0%,#1c2380 47.5%,#1c258b 47.7%,#1c2380 47.9%,#1c2795 48.1%,#2ab3da 48.8%,#2cc5d4 50.1%,#2bc0d9 51.2%,#2cc5d4 51.4%,#1d2fa9 51.9%,#1c227b 52.1%,#1d2ea7 52.5%,#1d2da3 52.8%,#1e33b2 53.0%,#1d2ea7 53.6%,#1e32b0 54.5%,#1d30ab 54.7%,#1c2380 55.2%,#1c2382 55.8%,#1c2792 56.5%,#1c258c 56.9%,#1c2485 57.4%,#1c2a9e 58.3%,#1d2ca1 58.5%,#1c1f6e 58.9%,#1c1c60 59.1%,#2dc9c9 59.8%,#2ecdbe 61.1%,#2dcac6 61.3%,#1c2b9f 62.0%,#1d2da5 62.4%,#1d2ca2 62.9%,#1c299b 64.6%,#1c2589 65.3%,#1d2da3 66.2%,#1f39bf 67.5%,#1d2ea5 68.4%,#1c1f6f 68.8%,#1c2380 69.1%,#2040cf 69.5%,#1f37bc 71.9%,#3ad77e 72.6%,#3ad77e 73.5%,#31d4a2 73.9%,#3cd877 75.7%,#40d966 76.8%,#40d968 77.4%,#42da61 78.7%,#2cc5d6 79.4%,#2bbdd9 82.3%,#2cc1d8 82.7%,#1f3cc7 83.1%,#1c2381 83.4%,#1d2fa9 83.8%,#1c268d 84.0%,#1c2795 84.3%,#1e35b6 84.5%,#1e34b4 84.7%,#1c299a 85.1%,#1c2793 85.6%,#1c2a9d 85.8%,#1c258b 86.2%,#1c268e 87.3%,#1c2178 87.8%,#1c2484 88.0%,#1c2381 88.4%,#1c2896 89.1%,#1c258b 89.5%,#1c2793 90.0%,#1d2ca1 90.2%,#1c268f 90.4%,#1c2795 90.9%,#1c2792 91.5%,#1f37bc 92.2%,#1e35b7 92.6%,#1d2fa9 93.1%,#1d30aa 93.3%,#1c2794 93.5%,#1c2690 93.7%,#1d2ca1 93.9%,#1c2488 94.6%,#1d2ca2 94.8%,#1c258a 95.0%,#1c2a9c 95.5%,#1d2ea5 96.1%,#1f3ac2 96.4%,#1e36b9 96.6%,#2157d5 97.7%,#1e35b6 98.1%,#203eca 98.3%,#1d30aa 98.8%,#1e33b2 99.0%,#203ecc 99.2%,#1f3cc6 99.4%,#1c2a9c 99.9%)"></div><div style="left:75.5px;top:99.49px;width:908.0px;height:2.08px;background:linear-gradient(90deg,#258edf 0.1%,#2fceb9 0.3%,#2fd1b1 1.9%,#1f3ac2 2.5%,#1f3bc3 3.2%,#2ab7da 3.9%,#2bbad9 6.7%,#1d2ca2 7.2%,#1d2fa8 7.4%,#2ab6da 7.8%,#29b0db 8.7%,#1e36b9 9.4%,#42da60 10.7%,#4fdd44 12.0%,#3ed96e 14.2%,#2fcfb8 14.6%,#2dcac6 16.6%,#2ecdbd 16.9%,#214cd3 17.5%,#2048d2 18.0%,#2cc2d8 18.6%,#2bc0d9 18.8%,#2372db 19.3%,#1f3bc4 19.5%,#1f3cc7 19.7%,#1e34b3 20.2%,#1e34b4 20.6%,#1d30aa 20.8%,#1e33b1 21.0%,#2dcac7 21.7%,#2ecdbe 22.1%,#2486e0 22.4%,#1d2ca1 22.8%,#1e33b2 23.0%,#1d30aa 23.9%,#2156d5 24.3%,#2379dd 25.7%,#236dda 27.0%,#226dda 27.6%,#3ed971 28.3%,#44db59 30.7%,#3ed96f 33.4%,#47dc4b 34.0%,#3ed96f 34.9%,#36d691 35.4%,#31d4a4 36.7%,#2fd1b0 37.1%,#1d2b9f 37.8%,#1e35b7 38.7%,#1d2da4 39.3%,#1d2da3 41.5%,#1c2b9f 42.4%,#1d2da3 42.6%,#1c299a 42.8%,#1d2ca0 43.5%,#1d2ba0 43.7%,#1d31ac 43.9%,#1d30ab 44.4%,#1f3ac2 44.8%,#1e33b2 47.0%,#1e32b0 47.5%,#2041d0 48.1%,#1c2b9e 48.6%,#1c268e 48.8%,#1f38bd 49.2%,#1d2fa8 49.7%,#2bbcd9 50.3%,#2dc7d0 50.8%,#1d31ad 51.4%,#1c2a9c 53.2%,#1c2899 53.9%,#1c2a9d 54.3%,#2156d5 54.5%,#2dc9c8 55.0%,#2dc6d1 55.6%,#2fceb9 57.4%,#2ecac5 58.5%,#1e35b6 58.9%,#1c2380 59.1%,#1c2a9e 59.4%,#1d2fa9 59.6%,#1c2793 60.2%,#1c2381 60.5%,#1d2da3 61.6%,#1d2da4 61.8%,#1c2690 62.0%,#1c258b 62.4%,#1e34b5 62.7%,#1e35b6 63.3%,#1f3ac3 64.0%,#1e37bb 64.9%,#1c258c 65.3%,#1c1d65 65.5%,#1c1e6a 65.7%,#2046d1 66.4%,#2047d2 66.9%,#2cc6d3 67.5%,#2dc8cb 68.2%,#2150d4 68.8%,#214cd3 69.1%,#2eccc1 69.7%,#2dc6d2 71.5%,#2cc5d6 71.9%,#2fd2ae 72.4%,#33d59b 73.7%,#3ed970 76.1%,#79e530 76.8%,#99eb1f 78.7%,#2ab5da 79.4%,#2ab7da 80.3%,#2cc1d8 82.5%,#2266d9 82.7%,#1c268c 83.1%,#1c2896 83.6%,#1c2896 84.0%,#1d2ca2 84.5%,#1c2898 85.1%,#1d2da4 85.4%,#1c2a9d 85.6%,#1d2fa9 85.8%,#1d2ca1 86.0%,#1f3bc4 86.2%,#2153d4 86.7%,#1f39c0 86.9%,#1d2ba0 88.0%,#1e34b5 88.2%,#1e35b7 88.4%,#1c2897 89.1%,#1d2ca2 89.3%,#1c2589 89.5%,#1c2792 90.0%,#1e31ad 90.6%,#1e37ba 91.1%,#214ad2 91.5%,#1e36b8 91.7%,#1f3bc5 92.2%,#1e36b9 92.4%,#214fd3 93.1%,#1d2fa9 93.9%,#1d2ca2 94.8%,#1c2794 95.3%,#1c299a 95.7%,#1c2486 96.8%,#1d2ba0 97.2%,#1d2b9f 97.5%,#1e35b6 97.7%,#1d2ca1 97.9%,#1d2ea6 98.3%,#1f37bc 98.6%,#1e35b7 98.8%,#1d2ea5 99.0%,#1e35b7 99.2%,#1e36b9 99.4%,#1d31ad 99.7%,#1c2691 99.9%)"></div><div style="left:75.5px;top:101.18px;width:908.0px;height:2.08px;background:linear-gradient(90deg,#2370db 0.1%,#2dc7cf 0.3%,#2fd1b1 1.4%,#2fcfb7 3.6%,#2dc7d0 4.3%,#29acdb 4.7%,#2bb9d9 6.1%,#2cc1d8 6.5%,#1c1d64 7.2%,#1c1c60 7.4%,#2260d7 7.8%,#2cc5d5 8.0%,#2dc6d1 8.7%,#1d30ab 9.4%,#1e32b0 10.0%,#33d59b 10.7%,#43da5c 12.2%,#3dd874 13.3%,#4ddd46 14.0%,#2dc8cd 14.6%,#2dc8cb 15.5%,#2fd1b1 16.9%,#2bbdd9 17.7%,#29acdb 19.3%,#2158d5 19.5%,#1c2899 19.9%,#1e34b5 20.4%,#1e33b2 20.6%,#1c2177 21.0%,#1d2ca2 21.3%,#2ab2da 21.7%,#28a9dc 21.9%,#2371db 22.1%,#258edf 22.6%,#248be0 22.8%,#1c258a 23.2%,#1c227b 23.7%,#1c2381 23.9%,#225cd6 24.3%,#27a0dd 24.6%,#27a1dd 25.2%,#2696de 26.3%,#2697de 27.6%,#75e431 28.3%,#50dd44 29.8%,#43da5e 34.5%,#30d3ab 35.1%,#36d691 36.2%,#30d2ad 37.1%,#1c2484 37.8%,#1c2380 38.0%,#1c268e 38.7%,#1c2487 38.9%,#1c2690 39.1%,#1c237f 40.6%,#1c2381 40.9%,#2cc5d4 41.5%,#2cc5d6 43.9%,#2dc7d0 44.6%,#1c299a 45.3%,#1c258b 45.5%,#1c258c 46.4%,#1d2ca0 46.8%,#1c2898 47.2%,#2dc7ce 47.9%,#1c2074 48.6%,#1c227c 48.8%,#1c2690 49.0%,#1c2485 49.4%,#1c258b 49.9%,#1c2483 50.1%,#1c258c 50.3%,#1c2485 51.2%,#1e34b5 51.9%,#1e35b7 53.0%,#1f38be 53.2%,#1e34b5 53.4%,#1e36ba 53.9%,#1e33b1 54.3%,#1e36b8 54.5%,#1e34b5 55.0%,#1c2b9e 55.2%,#1d30ab 55.6%,#2043d1 55.8%,#2040cf 57.2%,#1e36b8 58.3%,#1f38bd 59.6%,#1e36b8 60.7%,#1d2da4 61.1%,#1e34b3 61.6%,#2ecbc3 62.2%,#2eccc1 62.7%,#1f37bb 63.3%,#1e32ae 64.0%,#1c2b9f 64.4%,#1d2ea7 65.1%,#1e37ba 66.2%,#3dd874 66.9%,#37d68b 67.7%,#1f3bc5 68.4%,#1e37bb 68.8%,#1d2ba0 69.1%,#248be0 69.5%,#2fd2ae 69.7%,#30d4a9 70.6%,#2dcac7 71.7%,#2378dc 71.9%,#2379dd 72.4%,#2fd0b5 72.6%,#34d59a 74.8%,#30d3ac 75.9%,#41da65 76.5%,#2fd1b2 78.7%,#2fd0b5 79.2%,#1c2b9e 79.8%,#1d2fa7 80.7%,#33d59b 81.4%,#37d68d 81.6%,#2ecbc4 82.7%,#1f3ac2 83.4%,#2150d4 83.8%,#2266d8 84.7%,#1f37bb 85.4%,#1f3bc4 87.1%,#2155d5 88.0%,#2149d2 88.4%,#1f3bc4 88.7%,#203fce 88.9%,#1f39c1 89.8%,#203ecb 90.2%,#1f3ac2 90.6%,#1f3bc4 91.5%,#2040cf 92.0%,#203ecb 92.6%,#1f38bd 92.8%,#214ad2 93.7%,#1f3cc7 95.0%,#1f39c0 95.7%,#2042d0 97.2%,#203fce 97.9%,#2150d4 98.1%,#2154d4 98.6%,#1f3cc8 98.8%,#1d31ad 99.4%,#1e34b3 99.7%,#1c2899 99.9%)"></div><div style="left:75.5px;top:102.86px;width:908.0px;height:2.08px;background:linear-gradient(90deg,#28a4dc 0.1%,#3cd877 0.3%,#39d783 0.6%,#1d2da4 1.2%,#1e31ae 2.5%,#1d2fa8 2.8%,#36d68e 3.4%,#2dcac6 5.6%,#2fd0b5 6.7%,#248ae0 6.9%,#2378dc 7.4%,#2cc6d2 7.6%,#2ecbc2 8.7%,#237bdd 8.9%,#1e32b0 9.4%,#2042d1 9.6%,#214bd3 10.0%,#40d96a 10.7%,#31d4a4 11.6%,#3dd873 13.3%,#2fd0b4 14.2%,#2ab7da 14.6%,#2ab2da 15.7%,#2cc3d8 16.9%,#2bbdd9 17.1%,#1c2794 17.7%,#1c2794 18.2%,#1c2487 18.6%,#1c2485 19.3%,#1e33b1 20.4%,#1d2ea6 20.8%,#1e33b3 21.0%,#2ab4da 21.7%,#1e32af 22.4%,#1e31ae 23.2%,#1e35b7 23.7%,#1e35b6 23.9%,#28aadc 24.6%,#29abdb 27.4%,#27a2dd 27.6%,#30d3ac 28.7%,#2ecdbc 31.4%,#2fcfb8 33.8%,#2dc7cf 35.6%,#2dc9c9 37.1%,#1e32b0 37.8%,#1f37bb 38.2%,#1e35b7 38.7%,#203fce 39.5%,#1d2fa7 40.6%,#1d2fa8 40.9%,#2488e0 41.3%,#2696de 41.5%,#1f3bc5 42.0%,#1f3cc6 42.2%,#2ecac6 42.8%,#2dc6d2 43.5%,#29aedb 44.4%,#2ecdbc 45.9%,#2dc8cd 48.1%,#1c227e 48.8%,#1c2487 49.2%,#1c227b 49.4%,#1c237f 50.1%,#1c2179 50.8%,#1c2486 51.2%,#1c258b 52.3%,#1c2a9d 52.5%,#1d2da4 53.9%,#1c2795 54.3%,#1c2793 55.0%,#1e32ae 55.4%,#1d2ca1 55.8%,#1d2ea6 56.3%,#1c2b9e 56.7%,#1d2fa8 57.2%,#1c299a 58.3%,#1c258b 58.5%,#1c268e 58.9%,#1d2ea6 59.1%,#1c2690 60.2%,#1c2a9d 60.7%,#1c258a 61.6%,#2cc3d8 62.2%,#2cc5d5 63.3%,#2ecbc3 64.2%,#2dc6d2 65.1%,#1d2ea6 65.5%,#1c1c60 65.7%,#1c1d66 66.2%,#1c258c 66.4%,#1d2ca0 66.6%,#1d2b9f 66.9%,#1e31ad 67.1%,#1c2a9d 67.5%,#1c2a9e 68.4%,#1c1c60 69.1%,#1c1f6e 69.3%,#2698de 69.7%,#2dc9c8 69.9%,#2ecbc4 70.4%,#1c2896 71.0%,#1d2ca1 71.3%,#1c2b9e 71.5%,#1d30aa 71.9%,#2fd2af 72.6%,#33d59d 75.0%,#2fceb9 75.9%,#31d4a3 76.1%,#dbf407 76.3%,#e0f506 78.1%,#f8d100 78.3%,#d2f309 78.5%,#f6f801 79.0%,#c9f20c 79.2%,#f8df00 79.4%,#27a0dd 79.6%,#258edf 79.8%,#30d3ac 80.1%,#37d68a 82.5%,#32d5a1 82.7%,#1c268e 83.4%,#1c299b 84.3%,#1c2588 84.7%,#1c2588 85.4%,#1c299a 85.8%,#1e33b1 86.0%,#1d2fa8 86.5%,#1d2fa9 86.9%,#1c268e 88.0%,#1c2a9c 88.4%,#1e37bb 88.7%,#1e36b8 88.9%,#203fcf 89.1%,#1d31ad 89.3%,#1c2588 90.0%,#1c2a9d 90.4%,#1e35b7 90.6%,#1f39c0 91.1%,#1d2da3 91.5%,#1c299a 92.4%,#1d2ca2 93.1%,#1c2588 94.4%,#1c2792 94.8%,#1d30ab 95.0%,#1e33b1 95.5%,#1d2fa8 95.7%,#1f3bc4 96.1%,#1c2a9d 96.4%,#1d2da3 96.8%,#1c2690 97.2%,#1c258a 97.9%,#1c2795 98.1%,#1c258b 98.8%,#1c2792 99.0%,#1c258a 99.4%,#1c2896 99.7%,#1c227e 99.9%)"></div><div style="left:75.5px;top:104.54px;width:908.0px;height:2.08px;background:linear-gradient(90deg,#1c2896 0.1%,#1e32b0 0.3%,#1e31ad 0.6%,#1f3ac2 1.0%,#2dc9ca 1.7%,#2bbfd9 3.6%,#226bda 3.9%,#1c258b 4.3%,#1d2da3 4.5%,#1d2ea6 5.4%,#1d2ba0 6.1%,#1d2fa9 6.5%,#1c2897 6.7%,#1c1f6e 6.9%,#1c2072 7.2%,#1c268d 7.4%,#1c2484 7.6%,#1c1d63 7.8%,#1d2da3 8.0%,#2cc6d3 8.5%,#2dc9c8 8.7%,#247fde 8.9%,#1d31ad 9.4%,#1f3bc4 9.6%,#203ecb 10.0%,#2fd0b4 10.7%,#2ecbc4 12.0%,#2dc9ca 13.3%,#2ecdbc 14.6%,#2eccc1 15.5%,#2eccc0 17.1%,#2371db 17.5%,#2372db 17.7%,#28a9dc 18.0%,#28a3dc 18.2%,#1f38bd 18.6%,#1e36b9 20.2%,#1e33b2 20.8%,#1e36b9 21.0%,#2bbad9 21.7%,#2bbcd9 21.9%,#1f38bd 22.6%,#1e33b3 23.2%,#1f38be 23.9%,#1c2999 24.6%,#1d2ba0 25.7%,#1d2ca2 27.0%,#1c2486 27.6%,#1c2a9d 28.1%,#1d2ea7 29.6%,#1c2b9e 30.1%,#1d30aa 31.2%,#1d2ea5 31.6%,#1d2fa7 32.3%,#1c2a9d 32.9%,#1e33b1 34.0%,#1d2ca2 34.5%,#2371db 35.4%,#2377dc 36.0%,#248be0 36.2%,#236fda 36.5%,#2373db 37.1%,#2047d2 37.3%,#1e35b7 37.8%,#1e32af 38.9%,#1d2ea7 39.3%,#1e35b7 40.6%,#1e33b1 40.9%,#2ab6da 41.5%,#2cc5d5 43.9%,#237bdd 44.2%,#1d30aa 44.6%,#1f3ac2 44.8%,#1d31ac 46.6%,#1c2b9e 46.8%,#1d2ca1 47.7%,#1e32af 47.9%,#1c2793 48.6%,#1c2999 49.7%,#1c2588 50.3%,#1c258b 51.4%,#1c2488 51.7%,#1c2073 51.9%,#1d2ca2 52.3%,#203ecb 52.5%,#203dca 53.0%,#2eccc0 53.6%,#2ecbc4 54.5%,#279ddd 54.7%,#1f3cc6 55.0%,#1c2383 55.2%,#1c1e6a 55.4%,#1c227a 55.6%,#1c2792 56.7%,#1c2487 57.4%,#1c2898 58.3%,#1c2488 58.5%,#226bda 58.9%,#2cc6d3 59.1%,#29aedb 60.5%,#2bb9d9 60.9%,#1d30ab 61.3%,#1c258b 61.6%,#1f3bc5 62.0%,#1f38bd 63.1%,#1f39c0 63.5%,#1e34b5 63.8%,#1f3dc8 65.3%,#1e34b5 66.4%,#2046d1 67.5%,#1f3bc3 68.2%,#1f3cc8 68.6%,#1c2a9c 68.8%,#2370db 69.3%,#2dc8cb 69.5%,#30d3aa 70.4%,#2ecbc2 71.5%,#2fcfb8 71.7%,#258ddf 71.9%,#2590df 72.4%,#31d4a3 72.6%,#33d59a 74.3%,#36d690 75.2%,#30d2ad 75.9%,#4cdd46 76.8%,#45db53 78.1%,#6de336 78.7%,#3bd87a 79.2%,#226bda 79.6%,#1f38bc 79.8%,#1e35b6 80.1%,#1f3bc4 80.3%,#1f37bc 80.7%,#2fcfb7 81.4%,#33d59d 82.5%,#30d3ab 82.7%,#1d30ab 83.4%,#1d2fa9 84.0%,#1e36b9 84.3%,#1e36b9 84.9%,#1f3ac1 85.1%,#1e34b4 85.8%,#1e33b3 87.3%,#1e36b8 87.6%,#1d2da3 88.0%,#1e32b0 88.4%,#1e33b2 89.3%,#1d2ea6 89.5%,#1d31ac 90.4%,#1f38bd 90.9%,#1e35b6 91.1%,#1f3ac3 91.3%,#1e31ae 91.5%,#1e33b2 92.0%,#1d2da5 92.2%,#1e34b4 92.4%,#1e33b2 92.6%,#1f3ac1 92.8%,#1d2da3 93.3%,#1d30ab 93.9%,#1e35b7 94.2%,#1d2fa9 94.6%,#1e35b6 96.4%,#1e36b9 96.8%,#1f38be 97.0%,#1d30ac 97.2%,#1d30ab 97.5%,#2040d0 97.7%,#2041d0 97.9%,#2262d7 98.1%,#214cd3 98.3%,#214fd3 98.8%,#1f38bd 99.0%,#1e34b5 99.7%,#1c2898 99.9%)"></div><div style="left:75.5px;top:106.23px;width:908.0px;height:2.08px;background:linear-gradient(90deg,#2374db 0.1%,#2dc9ca 0.3%,#2fd0b5 2.5%,#2dcac7 3.2%,#1c1c60 3.9%,#1c1c60 4.3%,#1d2da4 5.0%,#1d31ac 5.6%,#1c2b9f 6.3%,#2694de 6.7%,#28a7dc 6.9%,#2261d7 7.2%,#236fda 7.4%,#1f3cc8 7.8%,#1f38bd 8.0%,#2dc8cd 8.5%,#2dc9c8 9.8%,#2cc3d8 10.0%,#37d68d 11.3%,#37d68b 12.9%,#2ecdbd 13.5%,#2fd0b5 16.4%,#2eceba 16.9%,#203fcd 17.5%,#1f39bf 18.0%,#1e31ae 18.2%,#1e33b2 18.4%,#1d2ea5 18.8%,#1f38be 19.3%,#2ecbc3 19.9%,#2ecdbe 20.4%,#2488e0 20.8%,#1e36b9 21.0%,#2483df 21.5%,#2eccc1 21.7%,#2dc8cc 22.1%,#237add 22.4%,#1c2793 22.8%,#1e36ba 23.0%,#31d4a5 23.7%,#30d3ac 23.9%,#214dd3 24.6%,#203ecc 24.8%,#2046d1 25.4%,#2149d2 26.3%,#1f3bc5 27.4%,#1f3cc7 30.3%,#1e35b6 31.4%,#1f39bf 31.6%,#1e37bb 32.7%,#2047d2 34.7%,#203ecc 35.6%,#1e36b8 35.8%,#1d31ac 36.7%,#1f38be 37.1%,#1e33b1 37.6%,#1c2899 38.0%,#1c2791 38.9%,#1d2ca0 39.1%,#1c2897 39.5%,#1d2ea6 40.0%,#1c2899 40.4%,#1c299a 41.1%,#1e35b6 41.5%,#1e36b8 42.2%,#1d31ac 42.8%,#1d30ab 43.5%,#1f39c0 43.9%,#1e37ba 44.4%,#2fceb9 45.0%,#2fcfb7 46.1%,#2fd0b5 47.0%,#31d4a5 47.9%,#2fd0b3 48.6%,#1f3cc6 49.2%,#2044d1 49.7%,#2ecbc2 50.3%,#2dc7ce 51.2%,#1c1d66 51.9%,#2042d1 52.5%,#1e34b5 54.3%,#1c1c60 55.0%,#1c1c60 55.4%,#1c1e6b 55.6%,#1c2382 55.8%,#1c2691 56.5%,#1c2690 58.0%,#1c2898 58.3%,#1f3ac2 58.7%,#1f38be 59.1%,#2040d0 59.8%,#1f3bc4 60.7%,#203fcd 61.1%,#1c299b 61.8%,#1d2da3 62.7%,#1d30ab 64.4%,#1d2ea5 65.5%,#1e32b0 66.0%,#1e31ad 66.9%,#1e36b8 67.7%,#1e31ae 68.2%,#1e36b9 68.4%,#1c299b 68.6%,#1c2a9e 69.1%,#1e35b7 69.3%,#1e33b2 70.4%,#1f39c0 71.5%,#1c2a9d 71.7%,#1c2487 71.9%,#1f38bd 72.1%,#33d59a 72.6%,#2ecbc2 73.2%,#3ad781 74.3%,#2fcfb6 75.4%,#2eccc0 75.9%,#94ea22 76.8%,#b9f010 77.6%,#9beb1f 79.0%,#258ddf 79.6%,#2482df 81.6%,#2698de 82.5%,#2697de 82.7%,#1f38be 83.4%,#1f39bf 83.6%,#2159d6 83.8%,#214cd3 84.0%,#225dd7 84.3%,#2150d4 84.5%,#2159d6 84.9%,#1e34b3 85.4%,#1e32b0 85.8%,#2040d0 86.9%,#1e36b8 87.1%,#1e34b4 88.2%,#1f37bc 88.9%,#1f3ac2 90.4%,#1e34b5 90.9%,#1f3dc9 92.2%,#1f37bc 92.4%,#1f3bc4 92.6%,#1e36b9 92.8%,#1f38bc 93.1%,#1e33b1 93.3%,#1e35b6 93.5%,#226cda 94.2%,#2154d4 95.0%,#1f3ac3 95.3%,#1e35b7 95.5%,#1f37bc 96.1%,#1d2fa8 96.4%,#1e35b7 97.0%,#1d30aa 97.5%,#1f3ac1 98.3%,#203fcd 98.8%,#1f38bd 99.2%,#1e33b3 99.7%,#1c2899 99.9%)"></div><div style="left:75.5px;top:107.91px;width:908.0px;height:2.08px;background:linear-gradient(90deg,#1d2fa7 0.1%,#1f3dc9 0.3%,#1f3bc4 1.9%,#2040d0 3.0%,#214fd3 3.6%,#1d31ac 3.9%,#1d2ca2 4.3%,#1f39c0 4.5%,#1e36b9 4.7%,#203fcd 5.4%,#2042d0 6.5%,#2eceba 7.2%,#2dcac7 7.6%,#237add 7.8%,#225dd7 8.3%,#2ab2da 8.5%,#29abdb 8.7%,#1d30aa 9.1%,#1c2179 9.4%,#1c268e 9.6%,#1f3dc8 9.8%,#1e35b7 10.0%,#2377dc 10.2%,#237ddd 10.5%,#2dc8cd 10.7%,#2cc5d6 14.2%,#27a2dd 15.5%,#279bdd 17.1%,#2041d0 17.7%,#203ecb 18.4%,#1f3ac2 18.8%,#1f3cc6 19.5%,#1c1c60 20.2%,#1c227b 20.4%,#1f39bf 20.8%,#1f38bd 21.0%,#2dc9ca 21.7%,#2ecbc3 22.1%,#258cdf 22.4%,#2695de 22.8%,#2fd2ae 23.0%,#2eccc0 23.9%,#2158d5 24.6%,#214bd2 25.4%,#203dca 25.7%,#2045d1 26.1%,#1f3cc7 27.2%,#2046d1 27.4%,#1e36b8 28.5%,#1f3bc4 28.7%,#1e33b3 29.2%,#1e36b8 30.1%,#1f3cc7 30.7%,#1e35b6 31.4%,#1f37bc 32.0%,#1f39bf 33.1%,#1f38bc 34.3%,#1f3cc7 34.5%,#1e31ad 35.6%,#1e32ae 37.3%,#1d2ea5 37.6%,#1e32b0 38.0%,#1e34b3 38.4%,#1f39bf 38.9%,#1e33b2 40.2%,#1e36b8 40.4%,#1c2589 41.3%,#1c2588 41.5%,#1c2897 41.7%,#1d2ca1 42.4%,#1d2fa9 42.6%,#1d2ca2 43.3%,#1c2792 43.7%,#1c258b 44.2%,#1c2896 44.4%,#1c2381 44.6%,#2266d8 45.0%,#2cc1d8 45.3%,#2dc8cd 46.6%,#2dc8cc 47.9%,#269ade 49.0%,#29aedb 50.3%,#29b0db 51.0%,#2dc8cd 51.7%,#2cc5d5 51.9%,#2370db 52.1%,#1e34b4 52.5%,#2484df 53.0%,#2fd1b0 53.4%,#2fd0b5 53.9%,#2482df 54.3%,#1e33b1 54.5%,#1d30ab 55.0%,#1f3ac3 55.2%,#203dca 55.4%,#1f38bd 55.6%,#1e37ba 56.3%,#1e31ad 56.5%,#1d30ab 57.2%,#203fce 57.8%,#2040d0 58.7%,#1d2fa8 58.9%,#1c2071 59.4%,#1c1e68 59.8%,#1c1f6f 60.5%,#1c1e69 61.1%,#1c1f6f 61.3%,#1f3bc5 62.0%,#1f39c0 62.2%,#203fcd 62.7%,#1f3ac2 63.1%,#203fcd 63.3%,#1e35b6 65.1%,#1f39bf 65.7%,#1d2ea6 66.0%,#1d2ca0 66.4%,#1e36b9 66.6%,#1d30ab 68.0%,#1d2da5 69.1%,#1e34b3 69.3%,#1d2da3 69.9%,#1d30aa 70.2%,#1c2a9c 70.6%,#1e32af 71.0%,#1e32b0 71.3%,#1c1c60 71.9%,#1e32b0 72.1%,#bbf00f 72.4%,#97ea21 74.1%,#edf703 75.0%,#c6f20d 75.7%,#a4ec1a 76.1%,#35d694 76.3%,#2fd2ae 79.2%,#2485df 79.4%,#1c299b 79.8%,#1f38bd 80.1%,#1f3cc7 80.5%,#1f3cc6 81.2%,#1e36b9 81.8%,#1e34b3 82.3%,#1f3ac2 82.7%,#1c2897 83.4%,#1d2fa9 83.6%,#1c268c 83.8%,#1d2ca1 84.5%,#1c2897 84.9%,#1d2ea7 85.1%,#1c2896 85.4%,#1e33b2 86.0%,#1d30ac 86.5%,#1f3dc9 86.9%,#1e31ae 87.1%,#1e32b0 87.8%,#1c2899 88.0%,#1c2899 88.2%,#1e36b8 88.4%,#1d2ba0 88.7%,#1c2b9e 89.1%,#1d30aa 89.3%,#1c2794 90.0%,#1d2da4 91.1%,#1c2999 91.5%,#1d30aa 92.0%,#2152d4 92.6%,#1c2588 93.5%,#1c2794 93.7%,#1c268d 93.9%,#1c2a9c 94.2%,#1d2ca1 94.6%,#1c2898 94.8%,#1e35b6 95.9%,#1d2ea5 96.6%,#1e35b7 96.8%,#1e32b0 97.5%,#1c2896 97.9%,#1e37ba 98.8%,#1d31ad 99.2%,#1e31ad 99.7%,#1c2794 99.9%)"></div><div style="left:75.5px;top:109.60px;width:908.0px;height:2.08px;background:linear-gradient(90deg,#2267d9 0.1%,#2bbad9 0.3%,#2ecbc4 3.4%,#35d693 3.9%,#34d598 5.2%,#30d4a9 6.3%,#2fceb9 6.7%,#31d4a3 7.6%,#279ddd 7.8%,#258ddf 8.3%,#2fd1b2 8.5%,#2fd0b3 8.7%,#2481df 8.9%,#2262d8 9.4%,#29abdb 9.6%,#29addb 10.0%,#32d59f 10.9%,#2fd1b2 12.0%,#2fd0b5 13.1%,#30d3ac 14.0%,#2dc7ce 15.3%,#2fceb9 16.6%,#2fd1b0 17.3%,#1c268e 18.0%,#1c2a9c 18.4%,#1c2898 18.8%,#1d2b9f 19.1%,#1c2588 19.9%,#1c1f70 20.2%,#1c258a 20.6%,#1d2ca1 20.8%,#1c299a 21.0%,#2dc8cd 21.7%,#2eccc1 22.6%,#2dc6d1 26.5%,#30d4a8 27.9%,#57df40 28.5%,#3ed972 29.6%,#43da5c 30.9%,#42da5f 34.5%,#2ab7da 35.1%,#2dc6d2 37.1%,#1e32b0 37.8%,#1e32b0 38.4%,#1d2da4 38.7%,#1e32af 40.0%,#1c2b9e 41.1%,#1c1f6c 41.5%,#1c1e69 41.7%,#1c2898 42.2%,#1d2fa9 42.8%,#33d59d 43.5%,#2ecebb 45.0%,#2cc6d3 45.9%,#2fcfb8 47.0%,#2dc6d1 48.3%,#2268d9 48.6%,#225bd6 49.0%,#2bbbd9 49.2%,#2fceb9 50.3%,#2cc5d5 51.4%,#2dc7ce 51.7%,#1c2a9d 52.3%,#1c2794 53.4%,#1c2588 53.6%,#1c258c 54.5%,#1c2a9c 54.7%,#1c2b9e 55.6%,#1c2795 55.8%,#1d2ca2 56.5%,#1c299a 56.7%,#1d2ea5 56.9%,#28a5dc 57.6%,#29addb 58.0%,#1c2795 58.7%,#1c2690 59.1%,#1d2ca1 59.4%,#1e36b9 60.0%,#1e34b4 60.9%,#1d30ab 61.1%,#1e36b9 61.6%,#1c2794 62.9%,#1d2ea6 63.8%,#1e35b7 64.0%,#1e34b3 64.9%,#1d2ea7 65.3%,#2040d0 66.2%,#28a7dc 66.9%,#29acdb 67.3%,#203fcd 68.0%,#2044d1 68.2%,#2ecdbe 68.8%,#2dc7d0 69.7%,#1e32b0 70.4%,#1e31ad 70.8%,#1f3bc4 71.7%,#2268d9 71.9%,#36d692 72.4%,#40d966 72.8%,#3bd87c 74.3%,#44db57 75.7%,#45db56 76.8%,#42da61 78.3%,#41da66 79.2%,#1f3bc5 79.6%,#1e35b5 79.8%,#30d3ab 80.3%,#38d789 80.7%,#2fd2ae 81.4%,#2fcfb6 82.7%,#2048d2 83.1%,#1d31ac 83.4%,#1e35b6 84.0%,#1c2a9e 84.9%,#1e34b3 86.2%,#1e31ad 87.3%,#1e33b2 87.6%,#1d2ca1 87.8%,#1c2897 88.9%,#1e35b7 90.6%,#1f39c0 91.1%,#1d2ba0 92.0%,#1d2fa8 93.1%,#1f3dc8 93.3%,#1e35b6 93.5%,#1e36b9 93.7%,#2040cf 93.9%,#2151d4 94.4%,#1e33b1 94.6%,#1c2999 95.3%,#1e36b9 95.9%,#1e35b7 96.4%,#1c299b 97.0%,#1c299a 97.5%,#1d2da3 97.9%,#1c2a9c 98.1%,#1e35b6 98.6%,#1e35b7 99.4%,#1d2ca0 99.7%,#1c2999 99.9%)"></div><div style="left:75.5px;top:111.28px;width:908.0px;height:2.08px;background:linear-gradient(90deg,#225cd6 0.1%,#2bbbd9 0.3%,#2cc0d8 2.1%,#2dc7ce 3.2%,#2bbfd9 4.3%,#2ab2da 5.0%,#2bbdd9 5.8%,#28a9dc 6.3%,#2dc9c8 7.4%,#2dc6d2 7.8%,#30d4a9 8.5%,#2fd2af 8.7%,#1f3ac3 9.1%,#1c227b 9.4%,#1c2896 9.8%,#1c2794 10.0%,#40d969 10.7%,#37d68c 12.2%,#43da5a 14.0%,#2ecbc2 14.6%,#2cc4d8 16.4%,#28a5dc 17.3%,#2ecac5 18.4%,#2dc9ca 19.7%,#1e31ae 20.4%,#1e33b2 21.0%,#2ecbc2 21.7%,#2fd0b4 22.1%,#258fdf 22.4%,#1e34b4 22.8%,#1f3cc6 23.0%,#1e35b5 23.9%,#2fcfb7 24.6%,#34d59a 25.7%,#2ecbc3 27.0%,#2ecdbc 27.6%,#6ae237 28.3%,#57df40 30.9%,#69e238 31.4%,#46db50 32.5%,#80e62c 34.3%,#2fd0b3 35.4%,#2fcfb7 36.5%,#2dc8cc 37.1%,#27a1dd 37.3%,#1d31ac 37.8%,#1c2b9f 38.4%,#1e32b0 39.5%,#1d2fa8 40.2%,#1c2999 40.4%,#1d2ca2 41.1%,#1c2380 41.5%,#1e34b3 41.7%,#2fceb9 42.2%,#2fcfb7 44.8%,#2047d2 45.5%,#2043d1 46.8%,#1f3cc6 47.0%,#2cc6d3 47.7%,#2ecdbe 48.3%,#2cc6d2 49.7%,#2dc7d0 49.9%,#2040cf 50.6%,#2043d1 51.4%,#226cda 51.7%,#1d2fa8 52.1%,#1c2074 52.3%,#1d2fa9 52.8%,#1d30aa 53.4%,#1d31ad 53.6%,#1d2ca0 53.9%,#1c2898 54.5%,#203ecc 55.4%,#2045d1 56.3%,#2042d1 56.7%,#2046d1 58.3%,#2cc1d8 58.9%,#2ecac6 61.1%,#2bc0d9 62.0%,#2dc6d1 62.9%,#2dc8cb 63.5%,#29b0db 64.6%,#2dc7d0 65.5%,#2696de 66.0%,#2266d8 66.2%,#2265d8 66.4%,#2ab7da 66.9%,#2dc6d1 67.1%,#214dd3 67.7%,#214ed3 68.4%,#29b0db 68.8%,#2cc4d8 69.5%,#2fd0b4 71.3%,#2ecdbd 72.1%,#226cda 72.4%,#2374dc 72.6%,#2262d7 73.0%,#2374dc 73.2%,#2264d8 73.5%,#2379dd 73.9%,#215ad6 74.1%,#2379dd 74.8%,#225fd7 75.0%,#2373db 75.2%,#2265d8 75.4%,#237ede 76.5%,#226dda 77.0%,#214fd3 77.2%,#237add 77.4%,#2150d4 77.6%,#2154d4 78.1%,#2373db 78.7%,#2152d4 79.2%,#226ad9 79.4%,#28a7dc 79.6%,#2cc5d4 80.3%,#2ab7da 82.7%,#2046d1 83.1%,#1f38bd 83.4%,#1f39c0 83.6%,#1d2ea5 83.8%,#1d2ba0 84.5%,#1c268e 84.7%,#1c268f 85.1%,#1c2a9d 85.4%,#1d2fa9 86.0%,#1c2a9d 86.5%,#1d2ea6 86.7%,#1c2a9c 87.1%,#1d2fa8 87.3%,#1c2898 87.8%,#1d2da3 88.2%,#1c2897 88.9%,#1d2ea7 89.3%,#1d2ca1 90.4%,#203dc9 90.9%,#1c2a9d 91.3%,#1e32af 91.5%,#1c2691 91.7%,#1d2fa9 92.0%,#1c299a 92.4%,#1d30ab 92.6%,#1d2da4 92.8%,#1e35b6 93.1%,#1d2fa9 93.3%,#1d2fa8 94.2%,#1c2792 94.4%,#1c2589 94.6%,#1c2897 94.8%,#1c2793 95.3%,#1e33b2 95.5%,#1e36ba 95.9%,#1d30aa 96.1%,#1e34b3 96.4%,#1c299b 96.8%,#1e33b3 97.5%,#1c2792 97.7%,#1f3ac1 98.3%,#1e32b0 99.2%,#1e37ba 99.4%,#1e32af 99.7%,#1c2794 99.9%)"></div><div style="left:75.5px;top:112.96px;width:908.0px;height:2.08px;background:linear-gradient(90deg,#225cd6 0.1%,#2bc0d9 0.3%,#2cc5d4 0.8%,#2483df 1.2%,#2046d1 1.4%,#1f3dc8 2.5%,#2043d1 2.8%,#2dc7cf 3.4%,#2ecebb 5.4%,#2dc7ce 5.8%,#2cc6d2 6.9%,#2265d8 7.2%,#1c227c 7.6%,#1c268e 7.8%,#2591df 8.3%,#2cc5d5 8.5%,#236eda 8.9%,#1f38bd 9.1%,#2043d1 9.4%,#2694de 9.8%,#2593df 10.0%,#2cc4d8 10.7%,#2bbdd9 13.5%,#2dc8cb 14.0%,#2bc0d9 14.6%,#2ab4da 16.9%,#1c2485 17.5%,#1c268e 19.1%,#1c2485 19.3%,#1f3ac3 19.9%,#203fcd 20.8%,#1d2fa9 21.0%,#2046d1 21.5%,#279bdd 21.7%,#279ddd 22.1%,#1c2691 22.8%,#1d2fa9 23.0%,#1d30ab 23.7%,#1c299a 23.9%,#2bbdd9 24.6%,#2cc4d7 25.7%,#2dc7cf 26.5%,#2cc1d8 27.2%,#2cc4d8 27.6%,#caf20c 28.3%,#dcf507 29.6%,#a9ed18 30.7%,#d4f409 32.5%,#a7ed18 34.0%,#c4f20d 34.5%,#30d3ab 35.1%,#2fceba 37.1%,#1d2fa8 37.8%,#1d2b9f 38.4%,#1d2ca2 39.1%,#1d30ac 39.3%,#1d2ea5 40.0%,#1d2da4 40.9%,#1c2b9e 41.1%,#1c1c60 41.7%,#1e33b1 42.4%,#1d2ea6 43.1%,#1e32ae 44.2%,#1c2485 44.6%,#1c1e6a 44.8%,#2bbed9 45.5%,#2ab8da 46.6%,#2ab2da 46.8%,#1d2ea7 47.5%,#1d30aa 47.9%,#28a3dc 48.6%,#279bdd 50.3%,#29acdb 51.0%,#28a9dc 51.9%,#2158d5 52.1%,#1c299b 52.5%,#1e35b6 52.8%,#1f39c0 54.1%,#2cc6d3 54.7%,#28a3dc 55.8%,#2bbcd9 58.0%,#1c2a9c 58.7%,#1d2da3 59.1%,#1c2488 60.2%,#1c2898 60.5%,#1d30aa 61.3%,#1c2a9d 61.8%,#1f39c1 62.7%,#1d2ea6 63.8%,#1e31ad 64.6%,#1d2fa8 65.1%,#1c2793 65.3%,#1e35b6 65.7%,#2261d7 66.0%,#2045d1 68.4%,#1c2487 68.8%,#1c2178 69.1%,#1d2da4 69.5%,#1d2ca1 69.7%,#1e33b3 70.6%,#1e32af 71.7%,#1d2ba0 71.9%,#225dd6 72.1%,#2153d4 72.6%,#226ad9 72.8%,#2152d4 73.0%,#2261d7 73.2%,#2150d4 73.5%,#226bda 73.9%,#225cd6 74.3%,#2267d9 74.6%,#2150d4 74.8%,#2371db 75.0%,#214ed3 75.7%,#225cd6 76.1%,#214fd3 76.3%,#2268d9 76.8%,#2151d4 77.4%,#226cda 78.1%,#2153d4 78.5%,#225cd6 79.6%,#1c2898 79.8%,#1d30ab 80.1%,#1d2ea5 80.7%,#1e37ba 82.5%,#1c299b 83.1%,#1c2999 83.4%,#1e31ae 83.6%,#1c2899 83.8%,#1c268f 84.9%,#1f3dc8 85.4%,#2040d0 85.6%,#1e32b0 86.0%,#1d30ab 86.2%,#1f37bc 86.5%,#1d2ca2 86.7%,#1d2ea5 87.3%,#1c299a 88.2%,#1d2ea7 88.4%,#1c2a9e 89.3%,#1c258b 89.5%,#1c268e 90.2%,#1d30ab 90.4%,#1e35b6 90.9%,#1c2a9d 91.1%,#1e36b8 91.5%,#1d2ea7 91.7%,#1d2ea6 92.4%,#1e35b6 92.6%,#1d2b9f 92.8%,#1d2da4 93.3%,#1e37ba 93.5%,#1e36b9 93.9%,#1c2690 95.7%,#1d2fa7 96.6%,#1e36b9 96.8%,#1d2fa9 97.2%,#1e37bb 97.7%,#1c299a 97.9%,#1e33b1 98.3%,#1c299b 98.8%,#1d2ca0 99.0%,#1c2897 99.7%,#1c2483 99.9%)"></div><div style="left:75.5px;top:114.65px;width:908.0px;height:2.08px;background:linear-gradient(90deg,#258edf 0.1%,#2fd0b5 0.3%,#30d4a7 1.7%,#36d691 2.8%,#2dcac6 3.9%,#1e35b6 4.5%,#1e33b1 5.8%,#1e36ba 6.3%,#1c2897 7.8%,#2cc6d3 8.5%,#31d4a4 8.9%,#2dcac7 10.2%,#28a8dc 10.7%,#2cc2d8 12.9%,#28a9dc 14.0%,#2dc7cf 15.3%,#2dc8cd 16.2%,#2ecdbc 16.9%,#2ecbc3 17.3%,#1c2899 18.0%,#1d2da4 18.2%,#1d2fa8 19.3%,#1e32ae 20.2%,#1f38bc 21.0%,#2bbdd9 21.7%,#2bbcd9 22.1%,#1d2da4 22.6%,#1c227b 22.8%,#1c299b 23.0%,#2152d4 23.2%,#2487e0 23.5%,#225cd6 23.7%,#1d2b9f 23.9%,#1c2a9d 24.1%,#2cc2d8 24.6%,#2dc8cb 25.2%,#29addb 26.3%,#2dc6d2 27.0%,#2bbcd9 27.6%,#e5f605 28.3%,#daf408 29.6%,#d2f309 33.4%,#daf408 34.5%,#2fd1b2 35.1%,#3bd87c 37.1%,#1c2791 37.8%,#1c2380 38.4%,#1c268f 39.3%,#1c299b 39.5%,#1c2794 41.1%,#1f3cc7 42.0%,#2ab6da 42.6%,#2cc1d8 43.5%,#203fce 44.2%,#2043d1 44.4%,#27a2dd 44.8%,#2695de 45.0%,#1e35b6 45.5%,#1e34b4 45.7%,#1f3cc7 46.1%,#1f37bc 46.6%,#1f3ac1 46.8%,#2ecbc4 47.5%,#2eccc0 47.7%,#1c1f6c 48.3%,#203fce 49.0%,#203ecb 50.8%,#1f39c0 51.7%,#1e33b1 52.3%,#27a2dd 53.0%,#29acdb 54.3%,#2158d5 55.0%,#214bd2 55.8%,#1f3bc5 56.1%,#1f3dc9 56.9%,#2045d1 57.4%,#203fce 58.0%,#1e31ae 58.9%,#1f3cc7 59.6%,#1f3bc4 59.8%,#2eccc1 60.5%,#2cc4d7 61.8%,#31d4a2 62.9%,#2ecdbe 64.6%,#2dc8cc 65.5%,#1f3cc6 66.2%,#1e37bb 67.3%,#1f3cc6 67.5%,#1f39bf 68.8%,#1e36b9 69.9%,#1d2ea5 70.8%,#1d2da3 71.0%,#1e32af 71.3%,#1e31ae 71.7%,#1e34b4 71.9%,#279bdd 72.4%,#2cc4d7 72.6%,#2bc0d9 74.8%,#2cc5d6 75.9%,#44db58 76.5%,#3cd878 77.9%,#3fd96b 78.5%,#3ed970 79.2%,#29b0db 80.1%,#29acdb 80.9%,#203ecc 81.6%,#214cd3 82.5%,#1e35b7 82.7%,#1c2a9d 83.1%,#1e34b4 83.4%,#1e35b7 83.6%,#1d2da4 83.8%,#1e34b3 84.0%,#1d2fa7 84.3%,#1e33b3 84.9%,#1f3bc5 85.1%,#1e32b0 85.6%,#1d30aa 86.0%,#1e34b3 86.5%,#1f39c1 86.9%,#1d2ea5 87.6%,#1c2a9c 88.2%,#1d2da3 88.4%,#2042d1 88.7%,#2040d0 88.9%,#2151d4 89.1%,#1f38bd 89.5%,#2045d1 89.8%,#1e33b1 90.2%,#1e32af 90.6%,#1c2b9e 91.5%,#1d31ad 92.4%,#1e36b8 92.8%,#1e31ae 93.1%,#1e35b6 93.7%,#1d2ea5 94.2%,#1e31ae 95.5%,#1f3bc4 97.0%,#1e36b9 97.5%,#1f39c0 97.7%,#1d2fa8 97.9%,#1e37bb 99.7%,#1c2b9f 99.9%)"></div><div style="left:75.5px;top:116.33px;width:908.0px;height:2.08px;background:linear-gradient(90deg,#2489e0 0.1%,#2fd2af 0.3%,#33d59c 1.4%,#2fd1b0 2.5%,#2fd0b5 5.0%,#1f3cc6 5.6%,#203dca 6.3%,#1f39bf 6.5%,#1c2381 6.9%,#1e32b0 7.2%,#2cc6d2 7.6%,#2370db 7.8%,#2155d5 8.3%,#2ab4da 8.5%,#29aedb 9.6%,#2bbdd9 10.0%,#2ecbc4 10.2%,#c2f10d 10.5%,#cff30a 11.6%,#bff10e 11.8%,#f8f800 12.0%,#b0ef14 13.1%,#d0f30a 13.5%,#a8ed18 13.8%,#e1f506 14.2%,#2dc8cd 14.4%,#29b0db 14.6%,#2cc1d8 17.1%,#2cc5d6 17.3%,#1e34b4 17.7%,#1e35b7 18.0%,#2bbfd9 18.4%,#2fceba 19.9%,#1f3bc5 20.6%,#1f3bc5 21.0%,#2cc5d6 21.7%,#1e37ba 22.4%,#1f37bb 23.5%,#1f38be 23.9%,#2fd0b5 24.6%,#30d2ad 25.4%,#33d59b 27.4%,#3bd87c 27.9%,#97ea21 28.5%,#acee16 29.8%,#48dc4a 32.0%,#8ce826 33.4%,#9deb1e 34.5%,#2dc6d2 35.1%,#2cc4d7 36.0%,#2dc8cb 36.7%,#2dc8cd 37.1%,#1c2485 37.8%,#1c2380 38.7%,#1c2589 38.9%,#1c2176 39.3%,#1c2691 40.9%,#1c237f 41.3%,#1c2381 41.5%,#1c2690 41.7%,#203fce 42.2%,#1e34b4 42.8%,#1d31ac 43.3%,#1f38be 43.7%,#1f37bc 44.2%,#1d2ca2 44.4%,#2379dd 44.8%,#2ecbc3 45.0%,#2fd0b3 47.5%,#2ecebb 47.9%,#1c1d66 48.6%,#1c1e6a 48.8%,#1c2485 49.0%,#279cdd 49.4%,#2dcac6 49.7%,#2dc7d0 51.0%,#1c2485 51.7%,#1c2179 51.9%,#1c2485 52.3%,#2bbed9 53.0%,#2dc9ca 53.9%,#2048d2 54.3%,#1c258c 54.5%,#1c2176 54.7%,#1c2073 55.0%,#1c2a9d 55.4%,#1c2795 57.4%,#1c299b 58.0%,#1c268e 58.7%,#1e33b3 59.4%,#1e31ad 60.2%,#1e35b6 60.9%,#1e34b5 61.6%,#2155d5 61.8%,#2fceb9 62.2%,#2ecbc3 63.1%,#1e34b3 63.8%,#1f38bd 64.6%,#279edd 65.1%,#2696de 65.3%,#1d2da3 65.7%,#1d2ba0 67.1%,#2cc2d8 67.7%,#2dc7d0 68.4%,#1d30ac 69.1%,#1c2897 69.5%,#1d2ca0 69.7%,#1d2b9f 70.2%,#1d2fa7 70.6%,#1d2ea7 71.0%,#1c299b 71.5%,#1c2a9d 71.9%,#2264d8 72.1%,#e7f604 72.4%,#c4f10d 73.0%,#eff702 73.2%,#dbf407 74.6%,#f8d100 74.8%,#d7f408 75.4%,#f8e500 75.7%,#e7f604 76.1%,#8ee825 76.3%,#b3ef12 78.5%,#1e32af 79.2%,#1f38bc 79.8%,#1e32b0 80.5%,#1f39bf 81.6%,#1e33b1 82.0%,#1e33b2 82.7%,#1d2ea5 82.9%,#1f3cc6 83.1%,#1d2ba0 83.4%,#1d2ca1 83.8%,#1e33b1 84.3%,#1e32af 84.5%,#1f3cc7 84.9%,#1f3ac3 85.4%,#1e34b4 85.6%,#1f38bd 85.8%,#1e32ae 86.2%,#1e35b5 86.5%,#1d2fa9 86.7%,#1f39bf 88.0%,#2045d1 88.7%,#2266d9 88.9%,#1e35b5 90.0%,#1c2b9e 90.2%,#1c2897 91.5%,#1d30ab 92.2%,#1d2da5 92.4%,#1e33b2 92.6%,#215ad6 93.1%,#215ad6 93.5%,#1e31ae 94.2%,#1c2897 94.8%,#1e35b7 95.9%,#1d2da4 96.6%,#1d2da4 97.7%,#1c2897 98.1%,#1d2da4 98.6%,#1d2da3 99.0%,#1d2ea6 99.7%,#1c2897 99.9%)"></div><div style="left:75.5px;top:118.01px;width:908.0px;height:2.08px;background:linear-gradient(90deg,#2377dc 0.1%,#2cc4d7 0.3%,#2cc5d4 1.4%,#29abdb 3.0%,#2bbfd9 3.2%,#1c1e6b 3.9%,#1c1c60 4.3%,#1c227d 4.5%,#2591df 5.0%,#2cc4d7 5.2%,#2dc9ca 6.1%,#1f3dc8 6.7%,#27a1dd 7.2%,#2ecbc2 7.4%,#2696de 7.6%,#2698de 8.0%,#2dc9c8 8.3%,#2ecdbe 8.9%,#32d59f 9.6%,#37d68e 10.5%,#4fdd44 11.6%,#3cd878 12.7%,#75e431 13.5%,#5ee03d 14.0%,#29b0db 14.6%,#2bbcd9 16.2%,#27a1dd 17.1%,#1e32b0 17.7%,#1e37ba 18.2%,#1d2ea6 18.6%,#1d2da5 19.3%,#1e33b1 19.7%,#1d2ea5 20.2%,#2cc2d8 20.8%,#2dc6d2 21.0%,#237add 21.7%,#2377dc 22.1%,#1c2793 22.6%,#1c2380 22.8%,#1f39bf 23.2%,#1f3ac2 23.9%,#279edd 24.3%,#2bbdd9 24.6%,#279edd 25.4%,#2ab2da 27.6%,#46db51 28.3%,#41da64 29.8%,#44db56 32.5%,#41da62 33.6%,#41da63 34.5%,#29addb 34.9%,#258edf 35.1%,#269bde 36.7%,#2591df 37.1%,#2040cf 37.6%,#1d2ea5 37.8%,#1e32af 38.0%,#1d2ca2 38.7%,#1e32b0 39.1%,#1f38be 40.0%,#1d2b9f 41.1%,#1c1f6e 41.5%,#1c2072 41.7%,#1e33b2 42.2%,#1e33b1 43.5%,#1d31ac 44.6%,#2ab4da 45.3%,#29aedb 46.6%,#1c2691 47.2%,#1c2690 48.1%,#2bbfd9 48.8%,#29acdb 49.7%,#2cc4d7 51.0%,#2cc1d8 51.2%,#1c2b9f 51.9%,#1c2b9e 53.4%,#1d2ca1 54.5%,#1c237f 54.7%,#1c2a9c 55.2%,#1f38bd 55.4%,#2149d2 56.3%,#1e36b9 57.4%,#1f38be 58.3%,#1d2ca1 58.5%,#1c2072 58.7%,#1c1c60 58.9%,#1c299b 59.1%,#28a5dc 59.6%,#28a9dc 60.5%,#2dc7ce 61.6%,#1e32af 62.0%,#1c2380 62.2%,#1d2ca1 62.7%,#1c2484 63.3%,#1c2486 64.0%,#1e31ad 64.6%,#1e36b9 65.1%,#1c2a9d 65.7%,#1c2a9c 66.4%,#1e31ae 67.3%,#1d2da5 67.7%,#1d2fa7 68.4%,#203dca 69.1%,#1e36b8 70.2%,#2044d1 71.0%,#2045d1 71.7%,#1f3cc7 71.9%,#2cc3d8 72.6%,#2bbfd9 73.5%,#2eccc0 75.2%,#2dc7cf 75.9%,#44db58 76.5%,#64e13a 79.2%,#2bbcd9 79.4%,#225ed7 79.8%,#29b1db 80.1%,#27a2dd 82.7%,#203fcf 83.4%,#2267d9 83.8%,#1f3bc4 84.3%,#2044d1 85.4%,#1f37bb 86.5%,#203ecc 87.3%,#203fcd 87.8%,#1f39c0 88.2%,#2041d0 89.1%,#2150d4 89.3%,#203dca 89.5%,#2043d1 89.8%,#1f3ac1 90.0%,#1e36ba 90.6%,#226dda 91.7%,#203fce 92.0%,#214fd3 92.2%,#1f39c1 92.6%,#203dca 93.9%,#1f37bc 94.4%,#2153d4 95.0%,#203ecb 96.6%,#1f39bf 96.8%,#2043d1 97.0%,#203ecc 97.5%,#214bd2 97.9%,#1e37ba 98.8%,#1f37bb 99.7%,#1c2b9e 99.9%)"></div><div style="left:75.5px;top:119.70px;width:908.0px;height:2.08px;background:linear-gradient(90deg,#1d2da3 0.1%,#1f3ac3 0.6%,#1f39c0 0.8%,#2fcfb6 1.4%,#2dc9c9 2.1%,#2ecbc2 2.3%,#1e37bb 3.0%,#1f3bc4 3.2%,#1c2071 3.9%,#1e35b7 4.1%,#29aadb 4.5%,#29abdb 6.1%,#279cdd 6.7%,#2042d0 6.9%,#2261d7 7.4%,#2cc4d7 7.6%,#2269d9 7.8%,#214dd3 8.3%,#29aedb 8.5%,#28a7dc 8.7%,#1d2ca1 9.1%,#1d2ea6 9.4%,#2cc5d4 9.8%,#2dc7cf 10.9%,#2dc9c9 12.0%,#2bbcd9 14.0%,#30d3ac 14.6%,#2dcac7 16.2%,#30d3ac 16.6%,#2dc8cc 17.3%,#1c2a9c 17.7%,#1c1d66 18.0%,#1d2ea6 18.4%,#1d2b9f 19.1%,#1e31ae 19.3%,#1c1e6b 19.9%,#1c2a9d 20.4%,#2159d6 20.6%,#2cc5d5 21.0%,#2dc9ca 21.9%,#2cc5d4 22.1%,#1c2899 22.8%,#1c2a9d 23.2%,#1c2588 23.9%,#2ab7da 24.6%,#2ecac5 26.1%,#2cc6d3 27.6%,#5de03d 28.3%,#53de43 30.3%,#43da5b 33.4%,#43da5d 34.5%,#2bbed9 35.1%,#2ecebb 36.2%,#2dc8cb 37.1%,#1f38bd 37.8%,#1f37bc 38.7%,#1e32ae 39.1%,#1e33b1 40.4%,#1f3ac3 41.1%,#1c2486 41.7%,#1c2899 42.0%,#2484df 42.4%,#2cc5d6 42.6%,#2bbed9 43.3%,#1c237f 43.9%,#1c258b 44.4%,#2ecdbd 45.0%,#2eccbf 45.9%,#30d3aa 46.8%,#2dc7cf 47.2%,#30d3aa 48.1%,#1e33b2 48.8%,#1e31ad 49.7%,#2bbdd9 50.3%,#2cc5d5 51.7%,#2486e0 52.1%,#2483df 52.3%,#2cc1d8 52.8%,#2cc4d7 53.4%,#237add 53.9%,#203fcd 54.1%,#2155d5 54.7%,#1f38bc 55.0%,#1f38bd 55.2%,#1e32ae 55.4%,#1f3ac3 55.6%,#1f3ac3 56.3%,#2260d7 57.6%,#1f3cc7 58.5%,#1f3cc6 58.7%,#1e33b2 58.9%,#1c2b9f 59.4%,#1e35b7 59.6%,#1e32af 60.2%,#1f37bc 60.9%,#1e32b0 61.6%,#1e34b4 61.8%,#1f3dc9 62.0%,#1f3cc8 62.2%,#2dc9ca 62.9%,#2eccbf 64.2%,#1f3dc9 64.9%,#1f3cc6 65.3%,#1d2ea7 65.5%,#1e32b0 66.0%,#1f3dc9 66.2%,#203fcf 67.3%,#1f3cc6 67.7%,#203ecb 68.0%,#1e34b5 68.4%,#1f38be 69.1%,#203ecc 69.3%,#1e34b5 70.4%,#214ed3 71.0%,#2041d0 71.9%,#77e430 72.6%,#47dc4c 75.7%,#46db52 76.1%,#30d3ac 77.4%,#35d695 78.7%,#3cd878 79.0%,#2dc7d0 80.3%,#2cc5d4 81.4%,#2fcfb8 82.5%,#2ecbc2 82.7%,#1c2795 83.4%,#1c258a 83.6%,#1c268f 83.8%,#1d2ea6 84.0%,#1e32b0 84.3%,#1c2b9f 84.5%,#1d2da3 84.9%,#1c2a9c 85.6%,#1c2a9e 85.8%,#1e33b2 86.0%,#1c268f 86.7%,#1c258a 86.9%,#1c2a9e 87.3%,#1c268d 88.7%,#1c2795 89.1%,#1c2791 89.5%,#1c2794 89.8%,#1c2382 90.0%,#1e32ae 90.4%,#2040cf 90.6%,#1e36b9 90.9%,#1e35b5 91.1%,#214bd3 91.3%,#1f3ac2 91.7%,#1d2fa8 92.0%,#1e32af 92.4%,#1c268e 92.6%,#1c2897 92.8%,#1c2487 93.3%,#1c2793 93.9%,#1d30aa 94.2%,#1c2898 95.0%,#1c2898 95.9%,#1e37ba 96.6%,#1d2fa9 96.8%,#1c299a 97.7%,#1d2ea6 97.9%,#1c2793 98.1%,#1c268d 99.7%,#1c2380 99.9%)"></div><div style="left:75.5px;top:121.38px;width:908.0px;height:2.08px;background:linear-gradient(90deg,#2043d1 0.1%,#2489e0 0.3%,#29aedb 1.7%,#248be0 2.5%,#28a5dc 3.9%,#2bbad9 4.3%,#2bbed9 6.5%,#28a3dc 7.2%,#28a8dc 7.4%,#1e33b1 7.8%,#1f38be 8.0%,#2dc7ce 8.5%,#1f39c0 9.1%,#1e32b0 10.0%,#2260d7 10.2%,#daf407 10.5%,#f8d900 10.7%,#daf408 10.9%,#e1f506 11.3%,#e5f605 12.2%,#b1ef14 12.4%,#f8e500 12.9%,#d4f309 13.1%,#e0f506 14.2%,#2fceba 14.4%,#2cc2d8 15.3%,#2fd0b3 16.6%,#1e31ad 17.3%,#1d2ba0 18.2%,#1d2fa9 19.3%,#1c1c60 19.9%,#1c2588 20.6%,#203fcd 20.8%,#2042d0 21.0%,#2590df 21.3%,#258ddf 21.5%,#2dc7d0 21.7%,#1e34b4 22.4%,#2044d1 22.6%,#2bbad9 23.0%,#2bbbd9 23.2%,#2373db 23.5%,#1e33b1 23.9%,#258edf 24.3%,#2fceba 24.6%,#2dc9c9 25.2%,#2dc9c8 26.8%,#2ab2da 27.6%,#adee16 28.3%,#c3f10d 31.2%,#a7ed19 34.0%,#c4f10d 34.5%,#2fceb9 35.1%,#2ecac6 37.1%,#1c268f 37.8%,#1c2381 38.4%,#1c268f 38.7%,#1c2a9e 39.5%,#1c2380 40.4%,#1c2484 40.6%,#1c227b 40.9%,#1c2897 41.3%,#1f37bb 41.7%,#1f38bc 42.0%,#1e31ae 42.2%,#1f3bc5 43.7%,#203ecc 44.4%,#1c2589 44.8%,#1e36b9 45.0%,#2ecbc2 45.5%,#2dc8cb 45.7%,#1d2ca1 46.4%,#1c299b 46.6%,#1d30ab 47.9%,#1f39bf 48.6%,#1e37bb 49.7%,#1d30ac 50.1%,#1d2ea5 50.6%,#1f3cc8 51.4%,#203dca 52.1%,#1f3cc7 52.5%,#214fd3 53.0%,#214dd3 54.1%,#225dd6 54.7%,#1f37bc 55.0%,#1c2795 55.4%,#1d31ad 55.6%,#1e32b0 56.5%,#279cdd 56.9%,#2dc7cf 57.2%,#2dc9c8 57.6%,#2dc7cf 59.1%,#2dc9ca 59.4%,#1d2fa8 60.0%,#1c2a9c 60.9%,#1d31ac 61.8%,#1c2896 62.0%,#1c2792 62.2%,#1c299b 62.4%,#1e36b8 62.7%,#1f3ac2 64.2%,#203dc9 65.1%,#1c2896 66.0%,#1c2792 66.2%,#2cc4d7 66.9%,#2ecebb 68.2%,#27a0dd 68.4%,#203fcd 68.6%,#1d2ca2 68.8%,#1d2b9f 69.1%,#1f37bc 69.3%,#1f3ac2 69.9%,#2cc2d8 70.6%,#29b1db 72.1%,#2698de 75.2%,#279cdd 75.4%,#f35000 75.7%,#f24700 79.2%,#29acdb 79.4%,#2371db 79.8%,#279fdd 80.1%,#28aadc 80.9%,#2bbdd9 81.2%,#1c299b 81.8%,#1d2fa9 82.0%,#1e33b3 82.9%,#2044d1 83.1%,#1e35b7 83.4%,#1e33b2 83.6%,#1f3bc5 83.8%,#1e35b6 84.7%,#1e34b4 85.1%,#1d2b9f 85.8%,#1e31ae 86.0%,#1c2a9c 86.7%,#1d2fa7 87.1%,#1d31ac 87.8%,#1e33b3 88.2%,#1e31ae 88.9%,#1d2ea5 89.1%,#1d30aa 89.3%,#1c2b9e 89.8%,#1d31ad 90.2%,#1c2795 90.9%,#1d2ca2 91.1%,#1c299b 91.5%,#1e35b6 92.0%,#1e32af 92.2%,#1e36ba 92.4%,#2045d1 92.6%,#1d2ea7 93.1%,#1c2792 93.5%,#1d2fa9 94.4%,#1d2da4 95.0%,#1c2899 95.3%,#1d2ca1 95.7%,#1e34b3 96.1%,#1f3cc7 96.4%,#1f3bc4 97.0%,#1c299b 97.7%,#1d2ea5 97.9%,#1d2fa8 98.3%,#1e33b1 99.7%,#1c2897 99.9%)"></div><div style="left:75.5px;top:123.07px;width:908.0px;height:2.08px;background:linear-gradient(90deg,#279cdd 0.1%,#38d789 0.3%,#31d4a5 2.8%,#39d782 5.8%,#3bd87d 6.7%,#2dc7cf 7.4%,#2dc7d0 7.6%,#236fda 7.8%,#2268d9 8.3%,#2bbfd9 8.5%,#2ab6da 8.7%,#1e33b1 9.1%,#1c2383 9.4%,#1c299b 9.8%,#1c2380 10.0%,#2263d8 10.5%,#29b0db 10.7%,#258ddf 11.3%,#2bbad9 12.9%,#28a6dc 14.2%,#2cc6d3 15.5%,#2ab5da 16.4%,#2bbdd9 17.1%,#1c2487 17.7%,#1c2383 18.0%,#1c258a 18.4%,#1c2177 20.2%,#1c1f6d 20.4%,#1c2484 21.0%,#2695de 21.5%,#2dcac7 21.7%,#2dc8cd 22.1%,#1d2ba0 22.6%,#1c1f6c 22.8%,#1d2ca1 23.2%,#1e34b5 23.9%,#2dc9ca 24.6%,#30d3ac 25.7%,#2eccbf 27.0%,#2ecebb 27.9%,#37d68d 28.7%,#35d695 30.9%,#3ad77e 32.9%,#30d3ab 34.0%,#3ad780 34.5%,#28a3dc 35.4%,#2592df 36.0%,#269ade 37.1%,#1c2691 37.8%,#1d2da3 38.7%,#1c2b9f 40.0%,#1c2897 40.6%,#1c2690 41.1%,#1f3bc5 41.7%,#1f3ac1 42.4%,#2153d4 43.5%,#214ed3 44.4%,#1c268e 44.8%,#1f39bf 45.0%,#2ecdbc 45.5%,#2fcfb8 48.1%,#2486e0 48.3%,#2374dc 48.8%,#2dc7d0 49.0%,#2ecbc2 49.7%,#2fd0b5 50.6%,#2cc5d4 51.7%,#2dc8cc 52.1%,#1c2795 52.8%,#1c2381 53.4%,#1c2382 54.3%,#1c227d 54.5%,#2375dc 55.0%,#2dcac7 55.2%,#2eccc1 56.1%,#2ecbc4 56.9%,#30d4a8 58.0%,#2eceba 58.5%,#2375dc 58.7%,#1c268f 59.1%,#1e32b0 59.4%,#1f3cc7 60.0%,#1e37bb 61.1%,#1d2da4 62.2%,#1e33b2 62.4%,#1d30ab 64.0%,#1e35b5 65.1%,#1e33b1 67.1%,#1e33b1 68.0%,#1c2899 68.6%,#1c1c60 69.1%,#1c2484 69.3%,#1d30ac 69.7%,#1c2999 70.4%,#1c2a9c 70.8%,#1f3cc8 71.9%,#43da5c 72.6%,#40d968 74.8%,#6fe335 75.9%,#36d690 77.0%,#41da66 78.7%,#3fd96c 79.2%,#1f3cc6 79.6%,#1c268d 79.8%,#2040d0 80.3%,#2153d4 81.4%,#2042d0 82.9%,#1d30ab 83.4%,#1d31ad 84.0%,#1f38be 84.3%,#1f39c0 84.5%,#2159d6 84.7%,#226cda 84.9%,#2047d2 85.6%,#1d30ab 86.0%,#1d2ea5 86.5%,#1e33b1 86.7%,#1d30ab 87.3%,#1f3ac3 88.0%,#1f38bd 88.2%,#2156d5 88.7%,#2043d1 89.3%,#1e34b3 89.5%,#1d2ea5 89.8%,#1f3ac2 90.4%,#258fdf 91.1%,#2696de 91.5%,#248be0 91.7%,#225fd7 92.0%,#1f3cc6 92.4%,#1f3bc5 93.1%,#1d30ab 94.2%,#1f37bb 95.5%,#1e31ae 95.7%,#1e33b1 95.9%,#1d2da3 96.1%,#1f38bd 96.4%,#1d31ac 96.6%,#1e35b7 96.8%,#1d2ea7 97.7%,#1e32b0 98.3%,#1e32af 98.8%,#1d2ca1 99.2%,#1d2ea7 99.7%,#1c268f 99.9%)"></div><div style="left:75.5px;top:124.75px;width:908.0px;height:2.08px;background:linear-gradient(90deg,#2269d9 0.1%,#2bc0d9 0.3%,#2cc2d8 2.1%,#2bbad9 3.6%,#27a1dd 4.5%,#29aedb 6.5%,#31d4a4 7.6%,#2ab6da 8.7%,#1c1c60 9.4%,#2ab2da 10.0%,#30d2ae 10.7%,#2ecdbe 12.4%,#30d3ac 13.5%,#2cc5d5 14.6%,#2cc4d7 15.5%,#2bbad9 16.2%,#2eccc1 16.9%,#1e37ba 17.5%,#1e31ae 18.2%,#1f37bb 18.4%,#1f38be 19.9%,#1e34b3 20.6%,#1e34b4 20.8%,#1c2898 21.0%,#225dd6 21.5%,#2ab4da 21.7%,#29acdb 22.1%,#1c1e69 22.8%,#1c268e 23.5%,#1c2486 23.9%,#2ab4da 24.6%,#2bbfd9 27.6%,#e0f506 28.3%,#7de52e 29.6%,#b8f010 31.6%,#98ea20 34.5%,#269ade 35.1%,#29addb 36.7%,#2699de 37.1%,#1e36b9 37.8%,#1f39c0 38.2%,#1e33b2 38.7%,#1f38be 40.0%,#1f38be 40.9%,#1d2ca2 41.3%,#1c2380 41.5%,#1c227d 41.7%,#1d2fa8 42.2%,#1c299b 42.6%,#1d2ea6 43.9%,#1d31ac 44.4%,#1c227b 45.0%,#1c227a 45.5%,#1d2ba0 46.1%,#1d2da3 46.6%,#1c2897 47.9%,#29acdb 48.6%,#2cc5d5 49.9%,#2cc3d8 50.1%,#237add 50.3%,#1d2ca2 50.8%,#1d2ea6 51.2%,#1e34b3 51.4%,#1d30aa 51.7%,#1f37bc 53.6%,#1c2b9f 54.7%,#1d30ab 55.0%,#1d2ea5 56.1%,#1c299a 56.7%,#2fd1b2 57.4%,#2fceb9 58.5%,#1f38bc 59.1%,#1f3cc6 59.6%,#1f39bf 60.0%,#1f3cc6 60.2%,#2fd1b1 60.9%,#2ab4da 62.0%,#2ab2da 62.4%,#1c2b9e 63.1%,#1d30aa 64.0%,#29afdb 64.6%,#29addb 65.3%,#2157d5 65.5%,#1f39c0 65.7%,#1f39bf 66.0%,#226cda 66.2%,#248ae0 66.4%,#1d30aa 67.1%,#1f39c0 68.4%,#1e34b4 69.3%,#1d2da3 69.5%,#1c2795 70.4%,#1d2ca2 70.8%,#1d2fa8 71.3%,#1e33b1 71.7%,#1c2792 71.9%,#6be237 72.6%,#73e432 73.9%,#84e72a 74.6%,#5ee03d 76.3%,#3bd87e 78.7%,#42da61 79.2%,#28a9dc 79.4%,#1d2ba0 79.8%,#1e35b7 80.1%,#1f3ac3 80.7%,#1e32ae 81.8%,#1e36b8 82.5%,#1f38bd 82.9%,#1d31ad 83.4%,#1f3ac2 83.6%,#1d30aa 84.0%,#2157d5 84.7%,#2048d2 84.9%,#225cd6 85.6%,#1f38be 85.8%,#1e31ad 86.7%,#2042d1 87.3%,#1e33b1 88.2%,#236eda 89.1%,#2040d0 89.3%,#2152d4 89.5%,#1e33b2 89.8%,#1f38be 90.0%,#1e32b0 90.4%,#1e34b4 90.9%,#203dca 91.1%,#1f37bb 91.3%,#203fcd 91.5%,#1f3bc5 92.4%,#1e36ba 92.8%,#2044d1 93.1%,#1f38bd 93.3%,#1f39bf 94.2%,#1e35b6 94.4%,#1f39c0 95.3%,#1e36b9 95.9%,#2043d1 96.4%,#225fd7 96.6%,#225fd7 96.8%,#1f3ac2 97.0%,#203eca 97.5%,#1f38be 97.9%,#2047d1 98.8%,#203dca 99.0%,#2262d8 99.2%,#214dd3 99.7%,#1f38bc 99.9%)"></div><div style="left:75.5px;top:126.43px;width:908.0px;height:2.08px;background:linear-gradient(90deg,#214bd2 0.1%,#2698de 0.3%,#248ce0 1.0%,#28a9dc 2.1%,#279bdd 3.4%,#29addb 3.9%,#2fd0b5 4.5%,#2ecbc3 5.6%,#2fd0b4 6.7%,#2eccc0 7.8%,#2ecbc2 8.7%,#248ae0 8.9%,#258fdf 9.4%,#2fd1b1 9.6%,#2fceb9 10.0%,#57df40 10.7%,#6fe334 14.0%,#2cc6d3 14.6%,#2dc6d2 15.7%,#2ecbc4 16.6%,#2bb9d9 17.1%,#2bbdd9 17.3%,#2260d7 17.5%,#237add 18.0%,#2fceba 18.2%,#30d3ab 19.3%,#258fdf 19.5%,#1c2795 19.9%,#1e32af 20.2%,#1d30aa 20.8%,#1d2ca1 21.0%,#2cc4d8 21.7%,#2cc3d8 22.1%,#2265d8 22.4%,#1c258b 22.8%,#1d2ca2 23.0%,#1e32ae 23.7%,#1c2b9f 23.9%,#2043d1 24.1%,#2370db 24.3%,#2cc4d8 24.6%,#2ab6da 25.0%,#2cc6d2 25.7%,#2cc5d5 27.6%,#7ee62d 28.3%,#57df41 30.3%,#8ee925 32.3%,#67e238 34.5%,#2ab1da 35.1%,#28a4dc 36.7%,#29addb 37.1%,#1c258a 37.8%,#1c2382 38.9%,#1c2487 39.5%,#1d2da3 40.4%,#1d2ea6 40.9%,#1c2a9c 41.1%,#1c2382 41.3%,#1c1d63 41.7%,#214bd2 42.4%,#2041d0 43.5%,#1f3bc4 43.7%,#2042d0 44.2%,#1d2b9f 44.8%,#1c2588 45.0%,#1c2485 45.5%,#1c2588 45.7%,#2dc8cb 46.4%,#2dcac7 47.5%,#1c2898 48.1%,#1c258a 48.3%,#1c2795 48.6%,#2dc8cb 49.2%,#2dc8cc 51.2%,#1d30ab 51.7%,#1c2175 51.9%,#1e33b2 52.3%,#1e31ae 53.0%,#1e34b4 53.6%,#1f39bf 54.7%,#1c227e 55.2%,#1c2179 55.4%,#1c2792 55.6%,#1e36b9 55.8%,#1e35b7 56.5%,#1f39c1 56.7%,#1e35b6 57.6%,#2042d1 58.7%,#203dc9 59.1%,#1d2fa9 59.8%,#1e33b1 60.2%,#2153d4 61.1%,#2046d1 62.0%,#248ce0 62.4%,#2bbcd9 62.7%,#2bbad9 64.4%,#2ab9da 64.9%,#1e32b0 65.5%,#1d2fa9 65.7%,#33d59b 66.4%,#32d59f 67.1%,#1e35b6 67.7%,#1e34b4 68.4%,#1c2177 68.8%,#1c2074 69.1%,#1f3ac2 69.5%,#203fce 70.2%,#1e35b5 71.0%,#1f39bf 71.9%,#50dd44 72.6%,#45db56 75.4%,#41da65 76.1%,#33d59c 76.8%,#3ad77f 77.6%,#2fd2ae 78.7%,#1c268f 79.4%,#1e33b2 80.5%,#1d2ca2 82.3%,#1e32ae 82.9%,#1d2ea6 84.3%,#1d2fa7 84.9%,#1c2b9e 85.4%,#1d2ca0 86.2%,#1e35b5 86.5%,#1c299b 86.9%,#1e32b0 87.1%,#1e33b2 87.3%,#1c2896 87.6%,#1c2793 87.8%,#1d31ac 88.0%,#1d2da4 88.2%,#1c258c 88.4%,#1d2ca2 89.1%,#1c2897 90.2%,#1c258a 90.4%,#1c299a 91.5%,#1c2793 91.7%,#1d2ca2 92.2%,#1c2a9d 92.4%,#1f39c0 92.6%,#1e37ba 93.3%,#1d2ca1 93.5%,#1e31ae 93.7%,#1c2a9d 93.9%,#1d2ea5 94.8%,#1c2487 95.7%,#1c258b 96.1%,#1d2ea6 96.6%,#1f38bd 96.8%,#1e34b5 97.2%,#1f3ac3 97.5%,#1e34b3 97.9%,#1f3cc6 98.3%,#1d2ca2 98.8%,#1e33b2 99.0%,#1c2b9e 99.2%,#1d2ca1 99.7%,#1c268e 99.9%)"></div><div style="left:75.5px;top:128.12px;width:908.0px;height:2.08px;background:linear-gradient(90deg,#2149d2 0.1%,#258ddf 0.3%,#2488e0 1.0%,#279fdd 2.8%,#28a8dc 3.6%,#1d30ac 4.3%,#1e34b4 4.5%,#1d31ac 4.7%,#1e35b7 5.4%,#1e34b4 6.3%,#1d30aa 6.5%,#203fcd 6.7%,#2261d7 7.4%,#2489e0 7.6%,#225ed7 7.8%,#2266d9 8.3%,#2487e0 8.5%,#1f3cc8 8.9%,#1f3cc6 9.1%,#2153d4 9.6%,#225ed7 10.0%,#33d59a 10.7%,#34d599 12.9%,#38d788 13.5%,#2fd0b4 14.2%,#28a8dc 14.6%,#2ab3da 15.3%,#2dc7cf 15.7%,#2bbed9 17.3%,#2ecbc4 17.7%,#1d2b9f 18.4%,#1c2383 19.1%,#1c2485 19.3%,#2481de 19.7%,#2dc9ca 19.9%,#2ecbc4 20.2%,#2488e0 20.6%,#1d2ea6 21.0%,#2159d6 21.5%,#2ab4da 21.7%,#258ddf 22.1%,#203ecb 22.6%,#1f38be 22.8%,#203fcf 23.5%,#1d2da4 23.7%,#1c268d 23.9%,#1e35b7 24.1%,#30d3ab 24.6%,#2fd0b5 27.0%,#38d78a 27.6%,#2eccbf 28.3%,#2fd0b5 30.7%,#2ecbc3 32.0%,#2fd0b3 33.8%,#2eccc1 34.5%,#2269d9 35.1%,#2266d8 35.6%,#2267d9 36.9%,#2261d7 37.1%,#1c2175 37.8%,#1c299a 39.3%,#1c2795 39.8%,#1c2488 40.0%,#1c2484 40.6%,#1e33b3 41.3%,#1d2ca0 41.5%,#1e33b2 42.6%,#1d2ca2 43.5%,#1e36b8 44.2%,#36d68f 44.8%,#33d59e 48.6%,#1c258c 49.2%,#1c268f 50.3%,#1c268f 51.4%,#1d2ca2 51.7%,#1d2fa8 51.9%,#2155d5 52.1%,#2bbed9 52.5%,#1e37ba 53.2%,#1f38bc 53.6%,#1e32b0 54.3%,#1c1c60 55.0%,#1c2896 55.6%,#1c268f 56.5%,#1d30ab 57.4%,#1d30ab 58.0%,#1c1d65 58.7%,#2cc2d8 59.4%,#2ab8da 61.1%,#2bbcd9 62.2%,#2ab4da 63.1%,#2fcfb8 64.6%,#2ab7da 65.1%,#2ab5da 65.7%,#214fd3 66.2%,#1d2ca2 66.4%,#1d2da5 68.2%,#1c258b 68.4%,#1c2690 68.6%,#2040d0 68.8%,#29acdb 69.1%,#2fcfb8 69.3%,#2fd2ae 70.6%,#203dca 71.3%,#1f3bc4 71.5%,#1c2075 71.9%,#1d2da3 72.1%,#e3f505 72.4%,#f8ef00 74.3%,#f8ca00 74.8%,#e9f604 75.0%,#f8da00 75.7%,#e1f506 75.9%,#f8ca00 76.1%,#3cd878 76.3%,#3dd872 77.2%,#44db57 79.0%,#1e32af 79.6%,#1e36ba 80.7%,#1e34b3 81.2%,#1d2ca2 82.0%,#1f37bc 82.7%,#1c2072 83.4%,#1c2073 84.0%,#1c2178 84.3%,#1d2fa8 84.7%,#1d2ca1 85.1%,#1c217a 85.4%,#1c227a 86.0%,#1c2071 86.9%,#1c2073 87.1%,#1e36ba 87.6%,#1e37ba 87.8%,#1c2588 88.2%,#1c2383 88.4%,#1c2795 88.7%,#1c2381 88.9%,#1c2486 89.3%,#1c2793 89.5%,#1c237f 90.2%,#1c258b 90.4%,#1e33b2 90.6%,#1c258a 91.1%,#1c227d 92.4%,#1c2072 92.6%,#1c227e 93.1%,#1c1f6d 93.7%,#1c2072 93.9%,#1c1d63 94.2%,#1c1c60 94.4%,#1c2073 94.6%,#1c1f70 94.8%,#1c2795 95.0%,#1c2176 95.3%,#1c2381 95.5%,#1c2074 95.7%,#1c1f6f 96.4%,#1c1d66 96.6%,#1c2071 97.0%,#1c1d63 97.2%,#1c227d 97.5%,#1c237f 97.9%,#1d30ab 98.6%,#1c299b 98.8%,#1e32af 99.2%,#1d2fa8 99.4%,#1c2691 99.7%,#1c2690 99.9%)"></div><div style="left:75.5px;top:129.80px;width:908.0px;height:2.08px;background:linear-gradient(90deg,#2ab3da 0.1%,#47dc4b 0.3%,#3ad781 3.2%,#42da61 3.6%,#1e35b6 4.3%,#1d2fa8 6.1%,#1e31ad 6.9%,#30d2ad 7.6%,#2ecebb 8.0%,#2cc5d4 8.7%,#2eccc1 9.8%,#2ecac5 10.5%,#2cc1d8 13.1%,#2dc7cf 13.8%,#2cc5d6 14.6%,#2dc8cd 15.3%,#2bb9d9 17.3%,#226bda 17.5%,#237fde 17.7%,#2044d1 18.0%,#2156d5 18.4%,#2cc5d4 18.8%,#2dc6d1 19.3%,#1d2da4 19.7%,#1c1c60 19.9%,#1c1f6c 20.2%,#1d2da5 20.6%,#1e34b3 21.0%,#258cdf 21.5%,#248ae0 21.7%,#1d2da3 22.1%,#1d2ea5 22.6%,#1f39c1 22.8%,#28a4dc 23.2%,#29addb 23.9%,#203fcd 24.6%,#1e35b6 25.7%,#1f3ac3 26.8%,#1f3cc7 27.6%,#2152d4 28.1%,#214ed3 29.2%,#2262d7 30.1%,#2040d0 30.7%,#1f3bc3 31.4%,#2149d2 32.3%,#2158d5 32.9%,#1f3dc9 34.0%,#2153d4 34.7%,#236eda 35.6%,#225cd6 36.2%,#236eda 36.9%,#2157d5 37.3%,#1e34b5 37.8%,#1f3cc7 38.2%,#1f39bf 39.1%,#1d31ac 39.3%,#1e33b1 40.2%,#1f3bc4 40.6%,#1f3cc7 41.1%,#1d30aa 41.3%,#1d2ba0 41.5%,#2043d1 41.7%,#2fd2af 42.2%,#2fceba 42.8%,#2fd0b4 43.1%,#1d2fa8 43.7%,#1c2a9c 44.8%,#2cc6d2 45.5%,#2ab7da 47.2%,#2bbad9 48.6%,#203fcd 49.2%,#1f38be 49.7%,#1f3cc6 51.4%,#1c1e6b 52.1%,#214ad2 52.8%,#214cd3 54.5%,#2045d1 54.7%,#1c2792 55.2%,#1c2483 55.4%,#1f3bc3 55.8%,#1f3ac2 56.7%,#2044d1 57.4%,#203ecb 58.0%,#2dc9ca 58.7%,#2dc8cd 60.7%,#2cc6d3 61.1%,#1c2486 61.8%,#1c2690 62.0%,#1c258a 62.2%,#1d2ca2 63.1%,#1c2792 64.0%,#1c2898 64.4%,#1c2691 64.6%,#1c2897 64.9%,#1c2381 65.1%,#2481de 65.5%,#2ecdbe 65.7%,#2dc9ca 68.4%,#2ab3da 68.6%,#2046d1 69.1%,#1f3cc6 69.7%,#2040d0 70.2%,#2dc9c8 70.8%,#2cc1d8 71.9%,#2fd2ae 72.8%,#35d693 74.8%,#33d59d 75.9%,#45db52 76.8%,#40d968 77.4%,#3fd96b 78.7%,#2cc0d8 79.6%,#2dc8cd 80.9%,#27a0dd 82.7%,#1c2a9d 83.4%,#1c268f 83.6%,#1c2896 83.8%,#1c2690 84.0%,#1e33b1 84.3%,#1d2da3 84.7%,#1f3cc7 85.4%,#1e33b2 85.8%,#1f38bd 86.2%,#1c2a9d 86.5%,#1c2487 87.1%,#1c2795 87.6%,#203ecb 88.0%,#1f38bd 88.4%,#1d2b9f 88.7%,#1c2999 89.3%,#1c299a 89.8%,#1d2da3 90.0%,#1c2794 90.4%,#1c299b 91.1%,#1d2fa9 91.5%,#1f39c0 91.7%,#1e33b2 92.2%,#1d2ca0 92.4%,#1f38be 92.8%,#1d2ca0 93.1%,#1e32af 93.3%,#1c268d 93.9%,#1c268e 94.4%,#1d2da3 94.8%,#1d2ba0 95.3%,#1e34b5 95.7%,#1c2792 97.0%,#1c299a 97.2%,#1c2898 98.3%,#1d2da4 98.6%,#1f3ac2 98.8%,#1e35b6 99.0%,#1c2a9c 99.2%,#1c2898 99.7%,#1c2487 99.9%)"></div><div style="left:75.5px;top:131.49px;width:908.0px;height:2.08px;background:linear-gradient(90deg,#214cd3 0.1%,#2591df 0.3%,#28a7dc 1.9%,#2697de 2.8%,#28a3dc 3.6%,#1d2ea5 4.1%,#1c227e 4.3%,#1d31ac 4.7%,#1d30ab 5.4%,#1c2b9e 6.1%,#1c2b9f 6.3%,#1f38be 6.9%,#1d2fa9 7.2%,#1d2da3 7.6%,#1c2791 7.8%,#2485df 8.3%,#2ecdbc 8.5%,#2eccc1 8.7%,#2375dc 8.9%,#1f39c1 9.1%,#1c2b9e 9.4%,#1e35b7 9.6%,#1f38bc 10.0%,#2375dc 10.2%,#c2f10e 10.5%,#daf407 11.3%,#b4ef12 11.6%,#f8e100 12.0%,#e0f506 12.4%,#c6f20c 13.3%,#d8f408 13.8%,#c9f20c 14.2%,#2dc8cd 14.4%,#29b1db 16.4%,#2cc2d8 16.9%,#2cc3d8 17.5%,#1d30ac 18.2%,#1c258b 19.3%,#2bbcd9 19.9%,#2cc3d8 20.6%,#2261d7 21.0%,#2155d5 21.3%,#29aedb 21.7%,#29aedb 22.1%,#1e34b4 22.8%,#1e35b6 23.0%,#1d2da3 23.2%,#1c2999 23.7%,#1c2484 23.9%,#1f37bb 24.3%,#2266d8 24.6%,#214dd3 25.9%,#203ecb 26.3%,#2040d0 26.5%,#1f3ac3 26.8%,#214dd3 28.1%,#2044d1 28.3%,#214ed3 28.7%,#203ecc 29.4%,#214dd3 30.3%,#1f39c0 30.9%,#214ed3 31.8%,#1f3bc5 32.9%,#214fd3 33.8%,#2041d0 34.5%,#1e34b3 35.1%,#1f3cc7 35.8%,#1e35b5 36.7%,#1f39bf 37.1%,#1c2381 37.8%,#1c2380 38.2%,#1c258c 38.4%,#1c2178 39.8%,#1c2382 40.0%,#1c2178 40.9%,#1e32af 41.5%,#1e33b1 42.4%,#2ab2da 43.1%,#29aadb 43.3%,#1d30aa 43.9%,#1d30aa 44.2%,#2dc6d1 44.8%,#2cc4d7 45.0%,#1e34b3 45.7%,#1e36b8 46.1%,#2bbed9 46.8%,#2bbdd9 47.7%,#1c1c60 48.3%,#1c1e67 49.0%,#1d2fa8 49.4%,#1e36b9 49.9%,#1d2da4 51.2%,#1d2fa8 51.9%,#2bbad9 52.5%,#2cc4d7 53.0%,#203dca 53.6%,#1f3ac3 54.1%,#203ecc 54.3%,#1f3bc4 54.5%,#1c1e69 55.2%,#1c2691 55.6%,#1d2ea5 55.8%,#1e35b7 56.9%,#1d31ac 58.3%,#1e33b2 58.5%,#1c268d 59.1%,#1d2da4 60.7%,#1c2999 61.6%,#1c2485 61.8%,#1c268d 62.2%,#1d2fa8 62.4%,#1d2ba0 63.1%,#1e32af 63.8%,#1e32af 65.1%,#1f38bd 65.7%,#1e32b0 66.9%,#1e35b6 67.7%,#1e37bb 68.6%,#214dd3 69.5%,#2047d2 70.2%,#214bd2 71.5%,#2045d1 71.9%,#30d4a9 72.6%,#42da60 73.9%,#39d786 75.7%,#2dc8cc 76.8%,#2fd0b5 78.1%,#2fcfb8 79.2%,#248ae0 79.4%,#2484df 79.8%,#2ecac6 80.1%,#2dc8cc 82.7%,#1f3ac3 83.4%,#2040d0 84.3%,#2155d5 84.5%,#203ecb 86.2%,#2043d1 87.1%,#203ecb 88.4%,#226bda 88.9%,#2046d1 89.3%,#2158d5 89.5%,#214fd3 89.8%,#1f3ac2 90.0%,#1e35b7 90.6%,#214cd3 91.7%,#1e36b9 93.1%,#203ecb 93.5%,#203dc9 94.6%,#2698de 95.7%,#2483df 95.9%,#2048d2 96.1%,#1f3ac3 96.8%,#2045d1 97.2%,#203dca 97.5%,#2044d1 97.7%,#1f3bc5 98.3%,#1f3cc7 99.7%,#1d2fa8 99.9%)"></div><div style="left:75.5px;top:133.17px;width:908.0px;height:2.08px;background:linear-gradient(90deg,#2370db 0.1%,#2cc4d7 0.3%,#2ecebb 1.7%,#2cc5d5 3.6%,#1e32ae 4.1%,#1c258a 4.3%,#2048d2 4.7%,#2149d2 6.1%,#1f3bc4 6.7%,#1d2fa8 7.2%,#1e35b6 7.4%,#1e33b2 7.8%,#269ade 8.5%,#279fdd 8.7%,#214fd3 8.9%,#1c299a 9.4%,#1e34b3 9.6%,#1e33b1 10.0%,#32d5a0 10.7%,#3bd87a 11.3%,#2fd0b4 14.4%,#2cc4d7 16.2%,#2ecdbc 17.3%,#1e35b7 17.7%,#1c268d 18.0%,#2ab9da 18.4%,#36d692 18.6%,#1d31ad 19.3%,#1c1c60 19.9%,#42da60 20.6%,#41da62 21.0%,#28a6dc 21.7%,#29b1db 22.1%,#225cd6 22.4%,#1c2a9c 22.8%,#1e33b2 23.0%,#1d2fa8 23.2%,#1f38be 23.7%,#1f37bb 23.9%,#203ecb 24.6%,#1f38bd 24.8%,#1e35b6 26.1%,#1e36b8 26.5%,#1f3cc6 26.8%,#1e36b8 27.0%,#1e36b8 27.6%,#6ce236 28.3%,#9ceb1e 30.1%,#40d968 31.6%,#86e729 33.6%,#8fe925 34.5%,#2040d0 35.1%,#1e34b3 35.8%,#203ecc 36.7%,#1e34b5 37.8%,#1f3bc5 38.2%,#1c2a9c 39.3%,#1e37ba 40.4%,#1d2ea7 41.1%,#1c2690 41.3%,#1c1e6a 41.5%,#1d2b9f 41.7%,#2cc3d8 42.2%,#2ecbc4 43.3%,#2ab4da 47.9%,#1e33b1 48.6%,#1f37bc 49.0%,#1e34b5 49.2%,#1f3cc8 49.9%,#1e32af 53.0%,#1d2fa9 53.4%,#1f38bd 54.3%,#1c299a 55.2%,#1d30ab 56.5%,#1d2ea6 58.5%,#1c268e 58.7%,#1c2794 59.1%,#1e33b1 59.6%,#1e34b5 60.2%,#1d2ca1 61.3%,#1e34b4 62.4%,#1e31ad 62.9%,#1e34b4 64.0%,#1d2da3 64.2%,#1e35b6 65.1%,#1f3dc9 65.3%,#2dc7ce 66.0%,#2ab5da 67.5%,#2cc6d2 68.2%,#1c1d66 68.8%,#203dc9 69.5%,#1f3bc4 71.0%,#203fcd 71.3%,#1c2380 71.7%,#1c1d66 71.9%,#2fd2af 72.6%,#30d4a8 75.7%,#b9f010 76.5%,#b7f011 79.2%,#203ecb 79.6%,#1d30ab 79.8%,#2dc8cb 80.3%,#2eccbf 81.4%,#2ecbc4 82.5%,#2fceb9 82.7%,#1c268f 83.4%,#1c2383 83.8%,#1c268e 84.0%,#1c2380 85.1%,#1c268d 85.8%,#1d2da4 86.2%,#1f3cc6 86.5%,#203fce 86.9%,#1e36ba 87.1%,#1f3ac2 87.3%,#1c2588 87.8%,#1c2898 88.0%,#1c258b 88.2%,#1d2ca2 88.7%,#1c2690 88.9%,#1c268e 89.1%,#1c2178 89.5%,#1d2ca0 90.2%,#1d2fa9 90.9%,#1c268e 91.1%,#1c227c 91.7%,#1c2487 92.4%,#1c2b9f 92.8%,#1c2075 93.7%,#1c2175 93.9%,#1d2ca1 94.8%,#1c299b 95.3%,#1c2179 96.4%,#1c258b 97.0%,#1c2486 97.2%,#1f3cc7 97.9%,#1e33b1 98.1%,#1e34b5 98.3%,#1d30aa 98.6%,#1f38be 98.8%,#1d2ca0 99.0%,#1c227c 99.4%,#1c237f 99.7%,#1c1d62 99.9%)"></div><div style="left:75.5px;top:134.85px;width:908.0px;height:2.08px;background:linear-gradient(90deg,#2261d7 0.1%,#29b0db 0.3%,#27a0dd 1.2%,#2591df 2.1%,#29abdb 3.6%,#203dc9 4.1%,#1e33b1 4.3%,#203ecb 4.7%,#1f3bc5 5.6%,#2bbcd9 6.3%,#28a4dc 6.9%,#28a8dc 7.4%,#2480de 7.6%,#1f38bd 7.8%,#1e37ba 8.0%,#2265d8 8.3%,#2bbed9 8.5%,#2cc4d7 8.7%,#1d31ac 9.1%,#1c2072 9.4%,#1c2791 9.6%,#214cd3 9.8%,#237dde 10.0%,#2cc3d8 10.2%,#2ecdbd 10.7%,#2cc2d8 12.9%,#2dc7d0 13.5%,#dbf407 13.8%,#cbf20b 14.9%,#e0f506 15.3%,#b5ef12 16.2%,#cef30b 16.6%,#b9f010 17.1%,#237cdd 17.3%,#1e35b7 17.7%,#1e36b8 18.6%,#1f37bb 19.1%,#1c299b 19.3%,#2265d8 19.7%,#29abdb 19.9%,#29afdb 20.4%,#1c1d66 21.0%,#2cc5d5 21.7%,#31d4a5 23.7%,#37d68b 23.9%,#2047d2 24.6%,#1e36ba 25.2%,#1e37bb 26.1%,#2156d5 27.0%,#203fce 27.6%,#1f37bc 28.1%,#1f38bd 29.0%,#1c2999 29.8%,#1d2da5 30.3%,#1d2b9f 30.5%,#1e35b5 30.9%,#1d30aa 31.8%,#1c2a9d 32.3%,#1e33b3 33.6%,#1e36ba 34.7%,#1f37bb 35.8%,#2044d1 37.1%,#1e35b5 37.3%,#1c2793 37.8%,#1c2795 39.1%,#1c2486 39.3%,#1c2897 39.5%,#1c2691 40.2%,#1c2a9c 40.4%,#1c268e 40.6%,#1c2a9e 42.0%,#2fd1b1 42.6%,#2fd0b4 43.1%,#1c268f 43.7%,#1c258b 44.2%,#1c2794 44.4%,#2fd1b2 45.0%,#30d3ac 46.6%,#2fd1b0 47.7%,#1c1c60 48.3%,#1f38bc 49.0%,#1f37bb 50.1%,#203dc9 50.6%,#1f39c0 51.9%,#28a3dc 52.3%,#2fd1b2 52.5%,#2eccc1 53.2%,#1c268f 53.9%,#1c2897 54.1%,#1c2486 54.3%,#1c1d65 54.5%,#1c1c60 55.0%,#1c1f6d 55.2%,#1d30ac 55.6%,#1d30aa 56.3%,#1e31ad 57.8%,#1d2fa7 58.0%,#1e37ba 58.5%,#1c2793 59.4%,#1c227e 59.6%,#1c2484 59.8%,#1c227e 60.0%,#1c258a 60.7%,#1c2381 61.6%,#2697de 62.0%,#27a1dd 62.2%,#1d2ea5 62.7%,#1d2ea6 63.1%,#2fd2ae 63.8%,#30d4a8 65.1%,#1e34b4 65.7%,#1e32b0 66.4%,#1e35b7 66.9%,#1e32af 67.1%,#1f3dc9 68.2%,#1f3ac1 68.4%,#1c2073 68.8%,#1d2ea5 69.1%,#2dc9c9 69.5%,#2eccc0 71.5%,#1e31ae 71.9%,#1e35b6 72.1%,#30d4a9 72.6%,#31d4a5 75.9%,#91e923 76.8%,#73e432 78.7%,#2ecbc3 79.4%,#2ecbc4 80.7%,#30d4a9 82.3%,#2ecdbd 82.7%,#1f3cc7 83.4%,#2041d0 84.3%,#2041d0 85.4%,#1f3cc7 86.5%,#1e35b7 86.7%,#1d30aa 87.8%,#1e33b1 88.0%,#203dc9 88.2%,#1e35b7 88.7%,#2044d1 89.1%,#1f3cc7 89.8%,#2041d0 90.0%,#236fda 90.2%,#2159d6 90.4%,#2265d8 90.6%,#29acdb 90.9%,#2156d5 91.7%,#225bd6 92.0%,#2041d0 92.2%,#2048d2 93.5%,#2373db 93.9%,#226bda 94.4%,#237bdd 94.6%,#2151d4 94.8%,#214dd3 95.0%,#1f3bc4 95.3%,#258fdf 96.4%,#237dde 96.6%,#214fd3 96.8%,#2151d4 97.0%,#1f38be 97.5%,#1f38be 97.9%,#203fcd 98.1%,#1f3cc6 98.6%,#2266d8 99.0%,#203fcd 99.2%,#1f3bc5 99.7%,#1d2ea6 99.9%)"></div><div style="left:75.5px;top:136.54px;width:908.0px;height:2.08px;background:linear-gradient(90deg,#2484df 0.1%,#2fcfb6 0.3%,#30d3ac 0.8%,#2dcac7 1.9%,#2ecdbc 3.2%,#2694de 3.4%,#1e36b9 3.6%,#1c1f6c 3.9%,#1c2178 5.2%,#1c268d 5.8%,#1c2485 6.3%,#203dc9 6.9%,#2040cf 7.2%,#2eccbf 7.8%,#247fde 8.5%,#237add 8.7%,#1d30ac 9.1%,#1c268d 9.4%,#1c2a9d 10.0%,#3dd875 10.7%,#3ad781 13.1%,#36d691 14.2%,#2dc6d1 14.9%,#2cc3d8 16.0%,#2dc7ce 16.4%,#2dc7d0 17.1%,#2bb9d9 17.3%,#2260d7 17.5%,#2154d4 18.0%,#28a9dc 18.2%,#2bbcd9 19.7%,#1f3ac2 20.4%,#1e34b4 20.8%,#1e35b7 21.0%,#28a7dc 21.7%,#1d2fa9 22.4%,#1e33b1 22.8%,#1d2da4 23.5%,#1c2383 23.7%,#1c1f6c 23.9%,#1c268c 24.1%,#1f38bd 24.3%,#2480de 24.6%,#2696de 25.7%,#28a7dc 27.6%,#3cd878 28.3%,#3dd874 30.7%,#50dd44 31.8%,#35d695 34.5%,#2ab3da 35.4%,#2ab2da 36.5%,#2cc2d8 37.1%,#1c2794 37.8%,#1c2794 38.7%,#1c2589 39.1%,#1c2898 40.2%,#1c268f 40.4%,#1d31ad 41.3%,#1f3bc4 41.5%,#1e32b0 42.8%,#1f38bd 44.4%,#226cda 44.6%,#6de336 44.8%,#74e432 45.5%,#48dc4a 45.7%,#8ce826 45.9%,#56df41 47.7%,#83e72a 48.1%,#64e13a 48.6%,#1d2ea6 48.8%,#2dc7ce 49.2%,#2dc8cb 49.9%,#2dc8cd 50.1%,#1e34b4 50.8%,#1f38bd 51.7%,#1d2ea5 52.5%,#1e32af 54.3%,#1e36b8 54.7%,#1c299b 55.0%,#1c2a9e 55.4%,#1e34b4 55.6%,#1e34b3 56.7%,#1f3cc8 57.2%,#203ecc 57.8%,#1e36ba 58.3%,#1c1c60 58.9%,#1e35b6 59.6%,#1f39bf 60.0%,#1d31ac 60.2%,#1e32b0 60.9%,#1d2ea6 61.1%,#1e37bb 61.3%,#1c2896 61.6%,#1c299b 61.8%,#1c2792 62.0%,#1e31ae 62.2%,#1d30ac 62.7%,#1e37bb 63.1%,#29addb 63.8%,#27a0dd 64.9%,#1f3bc5 65.5%,#1f3dc9 65.7%,#236fda 66.0%,#2590df 66.2%,#2cc5d4 66.4%,#2cc2d8 67.1%,#203dca 67.7%,#1f39c1 68.2%,#203dc9 68.4%,#1f38bc 68.8%,#2cc6d2 69.5%,#2bbcd9 70.4%,#1d2fa8 71.0%,#1c2792 71.7%,#1c2795 71.9%,#2dc8cc 72.6%,#2fd0b3 73.7%,#2ecdbe 75.9%,#39d783 77.0%,#30d3ac 78.5%,#2dc7cf 80.1%,#30d4a7 80.9%,#2dc8cc 81.6%,#2eccbf 81.8%,#2dc7ce 82.0%,#2eccbf 82.7%,#2261d7 83.1%,#1f3cc6 83.4%,#1f3ac1 83.6%,#2043d1 83.8%,#1f3cc8 84.0%,#2047d2 84.5%,#1d2ea6 85.4%,#1d30ab 86.0%,#1f3ac2 86.7%,#1e32ae 87.1%,#1d2ea6 87.6%,#1e35b5 88.0%,#1f39bf 88.7%,#1d30aa 89.3%,#1e36b8 90.2%,#1f3cc6 90.6%,#1e34b5 91.3%,#1d2ca1 92.0%,#1e33b2 92.6%,#1f38bd 93.3%,#1e35b7 93.5%,#1f3ac1 93.7%,#1d2da5 94.4%,#1e31ae 94.6%,#1d2ca1 94.8%,#1f39bf 95.0%,#1d2ea7 95.3%,#1e35b6 95.7%,#1e33b1 96.1%,#1f3ac2 96.4%,#1f38be 96.8%,#2040d0 97.0%,#2040d0 97.2%,#1f37bc 97.5%,#1f39bf 98.1%,#1e32b0 98.3%,#1d2ea7 99.0%,#1e34b5 99.2%,#1d2ca1 99.9%)"></div><div style="left:75.5px;top:138.22px;width:908.0px;height:2.08px;background:linear-gradient(90deg,#2484df 0.1%,#2ecebb 0.3%,#2ecac6 1.9%,#2eccc1 2.8%,#2dc9c9 3.6%,#2480de 3.9%,#1d2fa8 4.3%,#1f39bf 4.7%,#203fcd 6.1%,#1f39c0 6.5%,#1c1c60 7.2%,#1d30ab 7.4%,#203ecb 7.6%,#2593df 7.8%,#2487e0 8.0%,#29acdb 8.3%,#28a7dc 8.7%,#1c2a9c 9.1%,#1c2485 9.4%,#2153d4 9.8%,#2153d4 10.0%,#43da5d 10.7%,#7ce52e 14.0%,#2fd0b4 14.6%,#2cc5d5 16.2%,#2fcfb8 17.1%,#2eccbf 17.3%,#1f3bc4 18.0%,#2042d1 18.4%,#1f37bb 19.7%,#2044d1 20.6%,#1c2484 21.0%,#1d30aa 21.3%,#28a9dc 21.7%,#2bbad9 22.1%,#2694de 23.0%,#1e33b1 23.7%,#1f38be 23.9%,#28a8dc 24.6%,#29addb 26.3%,#28a4dc 27.6%,#40d96a 28.3%,#47dc4b 29.6%,#41da65 32.0%,#44db5a 34.3%,#3cd879 34.7%,#2dc7cf 35.1%,#2cc5d4 36.7%,#29addb 37.1%,#1d2ca2 37.8%,#1f3cc6 38.9%,#1c2897 39.8%,#1c2b9f 40.2%,#1f3cc7 41.1%,#1c227a 41.5%,#1c1f6e 41.7%,#1c2792 42.2%,#1d31ad 43.3%,#1d2ea7 43.5%,#1e34b4 43.7%,#1e33b2 43.9%,#1c2485 44.4%,#1c1f6f 44.8%,#2dc8cc 45.5%,#2cc5d6 48.1%,#1c1e69 48.8%,#2eccc0 49.4%,#2bbad9 51.4%,#214ed3 52.1%,#2261d7 52.8%,#214dd3 53.2%,#2152d4 54.1%,#225ed7 54.5%,#1d2ba0 55.2%,#1c2897 55.8%,#1d2fa8 57.4%,#1d2ea7 58.3%,#1e34b5 58.9%,#2cc5d6 59.6%,#2cc6d3 60.5%,#1e34b5 61.1%,#1d31ad 61.8%,#34d599 62.4%,#3ad780 64.2%,#1e33b2 64.9%,#1e35b6 65.1%,#1c268d 65.7%,#1c2896 66.0%,#1c2484 66.6%,#1c2487 66.9%,#2bbad9 67.5%,#2ab2da 69.1%,#279bdd 70.2%,#279fdd 71.3%,#1c1c61 71.9%,#36d68e 72.6%,#36d690 74.6%,#30d3aa 75.7%,#33d59e 75.9%,#2fcfb8 76.3%,#30d2ad 77.6%,#2cc6d3 79.8%,#2dc8cd 80.5%,#1d2fa9 81.2%,#1d2ca1 81.4%,#1d2ea7 81.6%,#2dc6d1 82.3%,#2dc7d0 82.7%,#27a1dd 82.9%,#27a1dd 83.1%,#214ad2 83.6%,#1f3ac2 83.8%,#1f3dc8 84.5%,#2041d0 84.9%,#2375dc 85.1%,#2267d9 85.6%,#2149d2 85.8%,#203fcd 87.3%,#1f3bc4 87.6%,#2040d0 87.8%,#1f3cc6 88.2%,#2264d8 88.9%,#2047d2 89.1%,#214bd3 89.3%,#1f3bc5 89.5%,#1f3cc6 90.4%,#214ad2 92.0%,#1f3ac2 92.6%,#1f3bc5 92.8%,#2153d4 93.1%,#2150d4 93.5%,#2266d8 93.7%,#214ad2 94.2%,#1f39bf 94.4%,#1e35b6 94.6%,#214bd2 94.8%,#2155d5 95.5%,#2481de 96.1%,#2373db 96.4%,#248be0 97.0%,#2154d4 97.2%,#203eca 97.5%,#2157d5 97.7%,#2154d4 97.9%,#237bdd 98.1%,#2261d7 98.6%,#2373db 98.8%,#214fd3 99.0%,#2154d4 99.2%,#1f3bc4 99.4%,#203dca 99.7%,#1e34b4 99.9%)"></div><div style="left:75.5px;top:139.90px;width:908.0px;height:2.08px;background:linear-gradient(90deg,#236eda 0.1%,#2cc5d5 0.3%,#2ecbc4 2.5%,#2cc3d8 3.2%,#2267d9 3.6%,#2261d7 3.9%,#2bbad9 4.3%,#2cc1d8 4.7%,#203fce 5.4%,#1f3bc4 5.8%,#203fcd 6.3%,#2bbbd9 6.9%,#2dc8cd 8.3%,#2ecdbe 8.7%,#2480de 8.9%,#1d2ca1 9.4%,#1e34b5 9.6%,#1e35b7 10.0%,#41da64 10.7%,#37d68c 12.7%,#3ad77f 14.0%,#2bbad9 14.9%,#2dc7cf 17.3%,#2373db 17.5%,#258ddf 18.0%,#30d3ab 18.2%,#2fd0b5 19.3%,#1e37ba 19.9%,#1e32b0 20.4%,#1e34b3 21.0%,#28a6dc 21.7%,#2ab2da 22.1%,#2262d8 22.4%,#1d2ca0 22.8%,#1f38be 23.0%,#1f3cc7 23.7%,#1d30aa 23.9%,#226cda 24.3%,#2ab7da 24.6%,#2bbbd9 25.9%,#2ecbc3 27.2%,#2dc7cf 27.6%,#50dd44 28.3%,#43da5a 34.0%,#48dc48 34.5%,#31d4a5 34.7%,#2cc5d4 35.1%,#2eccc1 36.2%,#2bc0d9 37.1%,#1d2ea5 37.8%,#1c2b9f 39.1%,#1e34b5 40.2%,#1e32b0 40.6%,#1f38bd 40.9%,#1e34b3 41.1%,#1c2381 41.5%,#1c2483 41.7%,#1c2898 42.0%,#1f39bf 42.2%,#1e36b9 42.8%,#203ecc 43.5%,#1f3cc7 44.4%,#2eccc1 45.0%,#2cc5d6 47.0%,#2ecdbd 48.1%,#247fde 48.3%,#236eda 48.8%,#2bbad9 49.0%,#2cc5d4 50.3%,#2bbbd9 52.1%,#258cdf 52.3%,#2694de 52.8%,#2cc6d3 53.0%,#2152d4 53.4%,#1e37ba 53.6%,#1f38bd 54.3%,#1e34b5 54.5%,#1c1c60 55.2%,#1c1e68 55.8%,#1c1c61 56.1%,#1c1e6a 56.3%,#1c1c60 56.7%,#2ab4da 57.4%,#29afdb 58.7%,#1d2fa7 59.4%,#1e33b1 61.1%,#1c1e6a 61.8%,#1c2487 62.0%,#1d2ca2 62.7%,#1c258b 63.1%,#1d2ea7 63.5%,#1c299b 63.8%,#1d2da3 64.2%,#1c2792 64.6%,#1c2896 65.3%,#1c237f 66.0%,#1c268f 66.2%,#1c2486 67.5%,#1d2ba0 68.2%,#1c2793 68.6%,#2377dc 69.1%,#2dc8cb 69.3%,#2ecbc4 70.2%,#2cc5d5 71.0%,#2dc7ce 71.9%,#2fd2af 72.1%,#f6f800 72.4%,#f8f300 73.9%,#d9f408 75.4%,#f2f701 76.1%,#43da5d 76.3%,#4bdd46 77.6%,#3ed971 79.0%,#44db57 79.2%,#1c2073 79.8%,#1c268f 80.3%,#1c2486 80.7%,#1c268f 81.4%,#2dc7cf 82.0%,#2dc9c9 82.5%,#2377dc 82.7%,#1c258a 83.1%,#1d2da4 83.4%,#1d31ac 83.8%,#1e37ba 84.3%,#1e32b0 84.9%,#1f3bc4 85.1%,#1d2ea5 85.8%,#1e36b9 86.0%,#1d2da4 86.5%,#203ecc 87.1%,#1d2da3 87.6%,#1e32b0 87.8%,#1d2ca1 88.0%,#1e33b1 88.7%,#1c2a9d 89.3%,#1d2da3 90.0%,#2153d4 90.4%,#203ecb 90.6%,#2046d1 90.9%,#1e36b9 91.1%,#1f3bc4 91.3%,#1e31ae 91.7%,#1e35b5 92.6%,#1c258b 93.3%,#1c2897 93.5%,#1c2795 94.2%,#1d2fa7 94.4%,#1c299b 94.6%,#1c299b 95.7%,#1d2da3 96.8%,#1e31ae 97.2%,#1f39c0 97.5%,#1e36b8 97.7%,#1f38be 98.3%,#1e33b1 99.0%,#1f39c0 99.4%,#1c2a9d 99.9%)"></div><div style="left:75.5px;top:141.59px;width:908.0px;height:2.08px;background:linear-gradient(90deg,#203fce 0.1%,#2484df 0.3%,#2487e0 0.8%,#29afdb 1.7%,#2378dc 3.0%,#2695de 3.6%,#1c2792 4.3%,#1e37bb 4.7%,#1d2fa8 5.8%,#1e36b9 6.7%,#1c2589 7.2%,#1c2380 7.4%,#1c2690 7.6%,#1e32b0 7.8%,#2bbad9 8.5%,#2bbcd9 9.6%,#2cc5d6 10.0%,#aeee15 10.7%,#9aeb1f 12.0%,#97ea21 12.9%,#85e72a 13.8%,#a3ec1a 14.0%,#2cc2d8 14.6%,#279cdd 15.3%,#2bbdd9 17.3%,#1c2487 18.0%,#1c2b9f 18.6%,#1c2795 19.3%,#2266d8 19.7%,#2378dd 19.9%,#1e32b0 20.4%,#1e34b4 20.6%,#214cd3 20.8%,#1f39c1 21.0%,#226ad9 21.3%,#2376dc 21.5%,#2dc7d0 21.7%,#2dc8cd 22.1%,#1e33b2 22.6%,#1e33b3 22.8%,#2dc8cc 23.2%,#2bbcd9 23.9%,#3ed96f 24.8%,#42da61 25.7%,#41da63 28.3%,#6de336 29.4%,#3cd876 30.3%,#5fe03c 31.8%,#44db56 34.3%,#39d784 34.7%,#2bbed9 35.1%,#28a4dc 37.1%,#1c2a9c 37.8%,#1d2ca2 38.4%,#1c2794 38.9%,#1c268d 39.5%,#1c299a 40.0%,#1c258a 40.2%,#1c268d 40.9%,#2eccc1 41.5%,#28a6dc 42.6%,#2cc5d6 43.9%,#28a7dc 45.0%,#28a5dc 45.9%,#2698de 46.4%,#2045d1 47.0%,#2045d1 47.9%,#203fce 48.3%,#29acdb 49.0%,#2bbed9 50.1%,#29aadb 51.2%,#1e34b3 51.7%,#1c2071 51.9%,#1c1f6c 52.1%,#1d2ca1 52.5%,#1f3bc5 52.8%,#1f3bc5 53.2%,#214bd2 53.6%,#2045d1 54.3%,#1e35b6 55.0%,#1c2a9c 55.4%,#1e32af 56.7%,#1c299b 57.2%,#1c2794 57.8%,#1e32af 58.3%,#2fd0b5 58.9%,#2eccc1 59.8%,#2fcfb7 61.1%,#1c2175 61.8%,#1c2071 62.0%,#2dc7ce 62.7%,#2ecac5 64.9%,#33d59d 67.5%,#2fd1b1 68.2%,#1f3ac3 68.8%,#203ecb 69.1%,#1f38be 69.5%,#1f39c0 69.9%,#1e33b2 70.2%,#203ecb 70.6%,#1f3dc8 71.0%,#1f3ac3 71.5%,#1c2485 71.9%,#1f38bc 72.1%,#30d4a8 72.6%,#2ecdbd 75.7%,#4cdd46 76.8%,#3ed972 78.5%,#48dc49 79.2%,#1f3dc8 79.6%,#1d31ac 79.8%,#2cc5d6 80.3%,#2ecbc2 82.0%,#2dc8cd 82.7%,#1e34b3 83.4%,#1d2ea5 83.6%,#1e34b4 83.8%,#1c2a9c 84.0%,#1e33b1 84.5%,#1e32ae 84.7%,#1f3bc5 84.9%,#1d2ea7 85.6%,#1d30aa 86.0%,#1c2795 86.7%,#1d31ad 86.9%,#1e32af 87.1%,#1c2898 87.8%,#1c2b9f 88.2%,#1c217a 89.8%,#1c2792 90.2%,#1c258b 90.4%,#1d2ca1 90.6%,#1d2ca2 90.9%,#1c2791 91.1%,#1f38bc 91.7%,#1d30ab 92.0%,#1e32af 92.4%,#1c2999 92.6%,#1d2da3 93.1%,#1c2794 93.5%,#1c227e 93.7%,#1c268d 93.9%,#1c2071 94.6%,#1c227a 94.8%,#1c1e6b 95.3%,#1c2382 95.7%,#1c227c 95.9%,#1c2898 96.4%,#1c258c 96.6%,#1c2899 97.2%,#1c2487 98.1%,#1c258b 98.6%,#1c2483 99.0%,#1c2382 99.7%,#1c2175 99.9%)"></div><div style="left:75.5px;top:143.27px;width:908.0px;height:2.08px;background:linear-gradient(90deg,#248be0 0.1%,#30d3ab 0.3%,#37d68a 1.9%,#2ecbc3 3.4%,#2fd0b5 3.6%,#1d2fa7 4.3%,#1e34b3 5.0%,#1c2897 5.8%,#1f38be 6.7%,#1d2fa9 7.4%,#1d31ac 7.8%,#2694de 8.5%,#258edf 8.7%,#2043d1 8.9%,#2269d9 9.1%,#2045d1 9.4%,#2376dc 9.6%,#203ecb 9.8%,#2372db 10.0%,#2cc5d4 10.2%,#f8ed00 10.5%,#d5f409 11.6%,#f8ef00 11.8%,#d6f409 12.4%,#e0f506 14.2%,#2dc9c9 14.4%,#2592df 14.6%,#28a2dc 15.1%,#28a7dc 16.0%,#2699de 16.2%,#29acdb 16.4%,#27a2dd 17.3%,#1e32ae 18.0%,#1e32ae 18.2%,#1c2795 18.6%,#1e36b9 19.7%,#1c299b 20.4%,#1c2794 21.0%,#2dc8cc 21.7%,#2dc6d1 22.1%,#226cda 22.8%,#225dd7 23.5%,#1c2484 23.9%,#1d2fa9 24.1%,#2eccc0 24.6%,#2fd2ae 27.0%,#2fd2ae 27.6%,#c1f10e 28.3%,#8ae827 30.5%,#d3f309 32.7%,#94ea22 33.8%,#aaee17 34.5%,#28a7dc 35.1%,#28a6dc 36.0%,#2cc5d4 37.1%,#1e37ba 37.8%,#1e33b2 38.9%,#1d2da4 39.5%,#1f39bf 40.9%,#1e36b8 41.1%,#1c2179 41.5%,#1d2ca2 41.7%,#225cd6 42.0%,#2cc3d8 42.2%,#2dc8cd 43.1%,#29b0db 43.7%,#2bc0d9 44.2%,#2694de 44.4%,#27a0dd 44.8%,#2dc6d1 45.0%,#2dc8cd 45.5%,#203ecb 46.1%,#1f3bc4 47.5%,#1f3ac2 48.1%,#214ed3 49.4%,#1f3ac2 50.6%,#1f3bc4 51.2%,#1e31ad 51.9%,#1f3bc5 53.0%,#1f39c0 53.9%,#1f3cc7 54.3%,#1c258c 54.7%,#1c1c62 55.0%,#1c2a9d 55.4%,#2265d8 55.6%,#2ecebb 56.1%,#30d3aa 57.2%,#2fd0b3 57.6%,#1f3ac3 58.3%,#203ecc 58.7%,#1c2791 59.4%,#1c268f 60.2%,#2dc6d2 60.9%,#2bbed9 62.7%,#2bbfd9 63.8%,#2fcfb6 64.9%,#2ecac5 65.3%,#1e31ae 65.7%,#1e33b1 66.0%,#2dc6d1 66.4%,#2dc9c9 68.2%,#2dc9ca 68.4%,#1e34b5 69.1%,#1d30ab 69.7%,#1f3ac3 71.0%,#1e34b4 71.7%,#1c2795 71.9%,#236eda 72.4%,#2dc7d0 72.6%,#2dc9c8 74.1%,#2dc7d0 75.7%,#3dd874 76.5%,#36d68e 77.9%,#3fd96e 78.5%,#2fd0b5 79.2%,#2dc8cd 79.4%,#2fcfb8 81.2%,#2dc6d1 82.5%,#1e35b7 82.9%,#1c2589 83.1%,#1d30aa 83.4%,#2042d0 84.0%,#1c2794 84.7%,#1c258c 85.1%,#1d2fa8 86.5%,#1c2794 87.3%,#1c2897 88.0%,#1d2ca2 88.2%,#1c2897 88.7%,#1d2ba0 89.1%,#1c2a9c 89.3%,#1e32ae 89.5%,#1d2ea5 89.8%,#1e35b6 90.0%,#1e31ae 90.4%,#203ecc 90.6%,#1d30ab 90.9%,#1e32af 91.3%,#2150d4 91.7%,#214bd2 92.0%,#1e32af 92.2%,#1f3bc4 92.4%,#1e33b1 92.8%,#1c2898 93.1%,#1f3dc8 93.5%,#1f3cc6 93.7%,#1d2ea6 93.9%,#1c2898 94.4%,#1e37bb 95.0%,#203ecb 95.5%,#1e33b2 95.7%,#1c299a 96.1%,#1d2fa8 96.6%,#1c2b9e 96.8%,#1e32af 97.0%,#1d2fa9 97.2%,#1e32af 97.7%,#1d31ac 98.3%,#1f3bc4 98.8%,#1d30ac 99.0%,#1d2fa9 99.2%,#1f3bc4 99.4%,#1f3ac1 99.7%,#1c268f 99.9%)"></div><div style="left:75.5px;top:144.96px;width:908.0px;height:2.08px;background:linear-gradient(90deg,#2486e0 0.1%,#2eceba 0.3%,#2ecdbe 3.4%,#2ecebb 3.6%,#258ddf 3.9%,#1e37bb 4.3%,#2044d1 4.5%,#1f3dc8 5.0%,#2150d4 6.3%,#1d2b9f 6.7%,#1c2072 6.9%,#2eccbf 7.6%,#28a8dc 8.7%,#1c1e67 9.4%,#1d30ac 9.6%,#1e33b2 10.0%,#1f3bc5 10.2%,#35d693 10.7%,#30d3aa 13.5%,#2cc5d5 14.9%,#2cc6d3 16.4%,#28a6dc 18.2%,#248ae0 19.5%,#1d30aa 20.2%,#1e34b5 20.6%,#1d2fa9 21.0%,#2dc8cb 21.7%,#2cc1d8 22.6%,#2ab5da 23.0%,#2ab7da 23.7%,#2260d7 23.9%,#2262d8 24.3%,#2bbdd9 24.6%,#2cc6d3 27.6%,#b9f010 28.3%,#96ea21 29.6%,#9ceb1e 34.5%,#30d2ae 35.1%,#2cc6d3 36.5%,#2cc6d2 37.1%,#1f3cc6 37.6%,#1c2483 37.8%,#1c227d 38.7%,#1c268e 39.3%,#1c2075 40.4%,#1c227c 40.6%,#1c2a9e 41.1%,#279edd 41.5%,#2eccc1 41.7%,#2dc6d1 43.1%,#1d2da3 43.7%,#1e32af 43.9%,#1d2fa9 44.2%,#28a7dc 44.8%,#2ab8da 47.9%,#1e32b0 48.3%,#203dc9 48.6%,#2fd0b3 49.0%,#2fd0b3 51.0%,#2eccc0 51.7%,#1d2fa9 52.1%,#1d30ab 52.3%,#2dc9ca 52.8%,#2dc9c8 54.1%,#1c1e68 54.7%,#1c1f6d 55.0%,#2cc5d4 55.6%,#2dc6d1 58.0%,#2bbcd9 58.3%,#1d2ca1 58.7%,#1c1c60 58.9%,#1c1d65 59.1%,#1d2ca1 59.6%,#1d2ca2 60.5%,#1c2a9c 60.7%,#1d2ea5 60.9%,#2dcac7 61.6%,#2cc5d5 63.5%,#2fd0b4 64.2%,#2eccc0 64.9%,#1d2ca1 65.3%,#1c1c60 65.5%,#1c2896 66.0%,#1e35b6 66.2%,#1e34b4 68.2%,#1c2792 69.3%,#1c2899 69.5%,#1c2691 69.7%,#1d31ac 70.8%,#1c2897 71.5%,#1d2ca0 71.9%,#46db4f 72.6%,#3ed971 73.0%,#62e13b 74.1%,#3dd875 77.2%,#36d691 79.0%,#2bbfd9 79.6%,#2eccbf 81.8%,#30d2ae 82.5%,#2ecebb 82.7%,#1c2792 83.4%,#1c2074 83.8%,#1c1f6f 84.5%,#1c2179 85.1%,#1c258c 85.6%,#1c227c 85.8%,#1c2383 87.3%,#1c2b9e 87.6%,#1c227b 87.8%,#1c2589 88.4%,#1c258a 88.9%,#1c268f 89.1%,#1c237f 89.3%,#1c268c 89.8%,#1c2383 90.2%,#1c2589 90.4%,#1c2383 90.9%,#1c2791 91.7%,#1c2382 92.4%,#1c2897 92.6%,#1c2487 93.1%,#1c2a9c 94.2%,#1c2483 94.8%,#1c2485 95.0%,#1d30ab 95.3%,#1d2da3 95.5%,#1e34b4 95.9%,#1c2b9f 96.1%,#1c2a9c 96.4%,#1c2487 96.6%,#1c2381 97.2%,#1c2589 97.5%,#1c2383 97.9%,#1c2792 98.3%,#1c2896 98.6%,#1e32b0 98.8%,#1c268e 99.0%,#1c2898 99.2%,#1c227a 99.4%,#1c237f 99.7%,#1c1f6d 99.9%)"></div><div style="left:75.5px;top:146.64px;width:908.0px;height:2.08px;background:linear-gradient(90deg,#2376dc 0.1%,#2bbfd9 0.3%,#2ab2da 1.2%,#2dc7d0 3.4%,#2cc3d8 3.6%,#2371db 3.9%,#1c2896 4.3%,#1d30ab 4.5%,#1e33b1 4.7%,#1d2ca1 5.2%,#1d2ea5 5.6%,#1c2b9f 6.1%,#1c2a9c 6.5%,#1c237f 6.7%,#2370db 7.2%,#269ade 7.4%,#225ed7 7.6%,#1c2a9c 7.8%,#2269d9 8.3%,#29b0db 8.5%,#29b1db 8.7%,#225bd6 8.9%,#1c2899 9.4%,#1f3ac3 9.6%,#1c2791 10.0%,#2046d1 10.2%,#5de03e 10.7%,#41da65 11.3%,#43da5a 12.7%,#39d785 13.8%,#3cd879 14.2%,#30d3aa 14.9%,#2ecdbd 16.4%,#2eccbf 17.1%,#2fd0b5 17.3%,#1f38bd 17.7%,#1c2485 18.0%,#258ddf 18.4%,#2592df 18.6%,#2041d0 18.8%,#1d2da4 19.1%,#1c2896 19.5%,#1c1e6a 20.2%,#1c2485 20.4%,#1c227d 20.8%,#1c1c60 21.0%,#2cc5d5 21.7%,#2bbed9 21.9%,#2044d1 22.6%,#2044d1 22.8%,#215ad6 23.0%,#1f3bc5 23.9%,#215ad6 24.3%,#2487e0 24.6%,#28a7dc 25.4%,#2487e0 27.6%,#3fd96b 28.3%,#43da5e 30.5%,#59df40 31.4%,#3ed970 32.9%,#40d96a 34.5%,#2eccbf 35.4%,#2ecbc2 37.1%,#1c2380 37.8%,#1c2791 38.4%,#1c2792 38.9%,#1c2794 39.3%,#1c2589 40.0%,#1c227a 40.2%,#1c237e 40.4%,#1c217a 40.9%,#1c2691 41.3%,#1c2791 41.5%,#1d2ca0 41.7%,#1c2794 42.2%,#1d30aa 42.6%,#1c2a9c 42.8%,#1c2a9e 43.3%,#1c268f 43.7%,#1c2794 43.9%,#1c227c 44.2%,#1c1c60 44.6%,#1c1e69 44.8%,#1e33b2 45.3%,#1f39bf 45.7%,#2040d0 46.4%,#1f38bc 47.5%,#1e35b6 48.8%,#1e33b1 49.0%,#2698de 49.4%,#2cc5d5 49.7%,#2cc4d8 50.3%,#2dc9c9 51.2%,#2dc7d0 51.4%,#1f3bc4 52.1%,#1f37bc 53.2%,#1f3ac3 54.3%,#1e35b6 55.0%,#32d59f 55.6%,#37d68a 56.7%,#1e32b0 57.4%,#1e35b6 58.0%,#1e31ae 58.3%,#1e37ba 58.7%,#1d30aa 59.1%,#1e33b2 59.8%,#1e32af 60.2%,#1f39bf 61.3%,#2dcac6 62.0%,#2dc7ce 63.3%,#2cc2d8 64.9%,#1e32b0 65.5%,#1d2fa8 66.4%,#1f3cc8 67.5%,#2042d1 68.4%,#215ad6 68.8%,#2264d8 70.2%,#2159d6 70.4%,#2266d8 71.3%,#2157d5 71.5%,#1c2487 71.9%,#1d2ea5 72.1%,#2cc6d2 72.6%,#2ecbc3 74.8%,#2dc8cb 76.3%,#2ecbc4 77.6%,#30d3ac 78.5%,#27a2dd 80.1%,#29aadb 81.2%,#2697de 81.4%,#2ab3da 82.5%,#1e35b6 82.9%,#1e32af 83.1%,#1f39bf 83.4%,#1d30ac 83.6%,#1d2da3 84.0%,#1f3cc8 84.3%,#203fce 84.7%,#1f3bc5 84.9%,#203ecb 85.4%,#1e33b1 85.6%,#1e31ae 86.0%,#1c2896 86.5%,#1c2793 86.9%,#1e34b3 87.3%,#1f39c0 87.8%,#1e31ae 88.0%,#1e35b5 88.2%,#1c2896 88.4%,#1c2793 88.9%,#1e34b3 90.0%,#1e32ae 90.9%,#1c2a9d 91.3%,#1c2a9d 92.4%,#1c2794 93.1%,#1d2ea7 93.9%,#1e34b5 94.2%,#1e32af 94.6%,#1c268f 95.3%,#1c268e 95.9%,#1e33b2 96.8%,#203fce 97.0%,#2261d7 97.5%,#214dd3 97.9%,#1f3bc4 98.1%,#1f39bf 98.6%,#1e33b1 98.8%,#1f37bb 99.2%,#214fd3 99.4%,#1d30ab 99.9%)"></div><div style="left:75.5px;top:148.32px;width:908.0px;height:2.08px;background:linear-gradient(90deg,#2261d7 0.1%,#29acdb 0.3%,#29addb 1.4%,#2699de 2.1%,#2bbbd9 2.8%,#28a7dc 3.6%,#2150d4 3.9%,#2697de 4.3%,#35d694 4.5%,#2fd2af 6.1%,#34d596 6.3%,#2ecbc2 7.4%,#2fcfb7 8.0%,#2ecac5 8.7%,#1e37ba 9.1%,#1c2383 9.4%,#1f3dc8 9.8%,#1f3dc8 10.0%,#68e238 10.7%,#43da5a 11.8%,#71e333 13.1%,#57df40 13.5%,#d9f408 13.8%,#eaf603 14.0%,#b8f010 14.2%,#d1f30a 15.3%,#bcf10f 15.5%,#f3f701 15.7%,#cdf30b 17.1%,#d7f408 17.5%,#225dd6 17.7%,#1e34b3 18.0%,#1e33b2 18.6%,#1f39bf 18.8%,#1e36b8 19.3%,#1f3cc6 19.7%,#1e37bb 19.9%,#1f3bc5 20.6%,#1f38bd 20.8%,#214ad2 21.3%,#258fdf 21.7%,#2591df 21.9%,#1c2795 22.6%,#1c2896 22.8%,#2fd0b4 23.5%,#2fd0b5 23.7%,#2488e0 23.9%,#225fd7 24.3%,#29b0db 24.6%,#29b0db 25.7%,#279cdd 26.1%,#2cc6d2 27.9%,#36d691 28.5%,#3cd879 29.4%,#36d68e 31.4%,#43da5c 32.0%,#33d59a 34.5%,#2ab4da 35.1%,#28a5dc 36.0%,#2dc6d2 37.1%,#1e34b5 37.6%,#1c2073 37.8%,#1c1c60 38.9%,#1c1f6d 39.5%,#1c1c60 40.4%,#1c1c62 41.7%,#1c1d64 42.4%,#1c227e 42.8%,#1c2381 43.3%,#1c1c61 43.9%,#1c1e68 44.4%,#2373db 44.8%,#2ab5da 45.0%,#2cc4d8 46.6%,#2ecbc3 48.8%,#2cc6d3 51.9%,#1d2ca0 52.5%,#1e34b5 53.6%,#1d2ea5 54.1%,#203dca 55.2%,#1f3bc4 55.6%,#203fce 56.3%,#1d30aa 57.2%,#1e32af 57.6%,#1f3ac3 58.0%,#1c299a 59.1%,#1d2fa8 59.8%,#1c2794 60.9%,#1d2fa9 61.3%,#1d2ea7 61.6%,#1c2381 62.0%,#1c2484 62.2%,#1e35b6 62.7%,#1f39bf 62.9%,#1e35b6 63.3%,#2dc7ce 64.0%,#2cc5d5 65.1%,#1d31ac 65.7%,#1c2897 68.2%,#1d2da3 68.4%,#2487e0 68.8%,#2dc9ca 69.1%,#2fcfb7 69.9%,#2ecac5 70.2%,#1c2898 70.8%,#1c2071 71.7%,#1c1c61 71.9%,#2ab8da 72.4%,#66e139 72.6%,#55de41 73.9%,#81e62c 74.8%,#50dd44 75.4%,#f02900 75.7%,#f45700 77.6%,#f02800 78.3%,#f89700 78.5%,#f67a00 79.4%,#279ddd 79.6%,#2485df 79.8%,#2fcfb8 80.1%,#2fd1b0 81.6%,#2ecdbe 82.7%,#1d30aa 83.4%,#1d2ca1 83.8%,#1e36b8 84.0%,#1e31ae 84.3%,#1e37ba 84.7%,#203ecc 84.9%,#1f3bc4 85.1%,#1d2ea5 85.4%,#1e35b6 85.6%,#1c2b9e 86.5%,#1c299a 86.7%,#1e36b8 87.3%,#1e34b5 87.6%,#2156d5 88.0%,#2374dc 88.9%,#2046d1 89.3%,#214cd3 89.5%,#1d2fa9 90.0%,#1d2ea5 91.1%,#1d31ad 91.3%,#1d2ca1 91.7%,#1d30aa 92.0%,#1f3ac1 92.2%,#1e31ae 92.4%,#203ecc 92.6%,#214bd2 92.8%,#1f3bc4 93.1%,#1e33b3 93.9%,#203dc9 94.2%,#203fcd 94.4%,#1d30ab 94.8%,#1c299a 95.7%,#1d2ea6 96.6%,#1e33b1 97.0%,#1f3ac2 97.2%,#1f3ac1 97.5%,#1d2ea7 97.7%,#1f38bd 97.9%,#1e35b5 98.1%,#1f39bf 98.3%,#1e37ba 98.8%,#203fcd 99.0%,#1f38be 99.4%,#1f3ac2 99.7%,#1d31ac 99.9%)"></div><div style="left:75.5px;top:150.01px;width:908.0px;height:2.08px;background:linear-gradient(90deg,#237ede 0.1%,#2ecac5 0.3%,#2dc9c8 2.8%,#2dc6d1 3.6%,#1f38be 4.1%,#1e32af 4.3%,#2ab5da 4.7%,#29aedb 6.5%,#1d2fa9 6.9%,#1c2071 7.2%,#1c227c 7.4%,#1d2ea6 7.8%,#30d4a6 8.5%,#2fcfb6 8.7%,#1f38be 9.1%,#1c227a 9.4%,#1d30aa 9.8%,#1c2794 10.0%,#29addb 10.5%,#44db57 10.7%,#3bd87c 14.2%,#2ecbc4 15.1%,#2fd1b0 16.6%,#2fcfb8 18.0%,#2ecac5 19.1%,#2dc9ca 19.9%,#2fcfb6 20.2%,#2fcfb7 21.0%,#237ede 21.7%,#248be0 21.9%,#1f39c0 22.6%,#1f3cc7 23.2%,#2046d1 23.9%,#2cc5d5 24.6%,#2dcac6 26.3%,#2ecebb 26.5%,#2cc5d6 27.0%,#2cc3d8 27.6%,#f8ed00 28.3%,#e9f604 30.5%,#f8e400 34.5%,#2fd1b0 35.1%,#2fd1b2 36.2%,#2eceba 37.1%,#2041d0 37.6%,#1c2a9d 37.8%,#1e36ba 40.0%,#1e34b4 40.9%,#1e35b7 41.1%,#1d2ca2 41.3%,#1d2ea7 41.7%,#1f39bf 42.0%,#1e33b1 43.3%,#1e33b3 44.4%,#1c217a 44.8%,#1e31ad 45.0%,#2dc9c8 45.5%,#2dc7cf 47.5%,#2ecac6 47.9%,#2cc1d8 48.3%,#35d693 49.4%,#30d3aa 51.4%,#1c1d64 52.1%,#1c2b9f 52.8%,#1d30ab 53.4%,#1e33b1 53.9%,#1c2382 55.2%,#1c2897 56.1%,#1c2795 56.3%,#2cc5d4 56.9%,#2cc6d2 57.4%,#1c2795 58.0%,#1d2ca2 58.5%,#269ade 58.9%,#2dc6d2 59.1%,#2dc7cf 59.6%,#1e36b9 60.2%,#1e34b3 60.5%,#1f3bc5 60.9%,#1e33b1 61.6%,#1c258a 61.8%,#1c2381 62.0%,#1e33b1 62.4%,#1d2da4 62.7%,#1e31ae 62.9%,#1d2fa8 63.1%,#1e33b2 63.3%,#1c2b9e 64.4%,#1d2b9f 64.9%,#1f39bf 65.5%,#203ecc 66.0%,#1e32b0 67.3%,#1e34b3 68.4%,#1c227d 68.8%,#1d2ea6 69.1%,#2dc7cf 69.5%,#2ecdbd 69.7%,#2ab3da 70.8%,#2cc4d8 71.5%,#1d2ea5 71.9%,#1e32af 72.1%,#2fceb9 72.6%,#2fcfb8 74.3%,#2ecdbe 75.4%,#2ecbc3 75.9%,#69e238 76.5%,#3fd96c 78.7%,#2dc7cf 79.4%,#2fcfb6 80.1%,#2bbed9 81.2%,#2fd0b4 82.3%,#2ecac5 82.7%,#2042d0 83.1%,#1e34b3 83.4%,#1d2ea5 83.6%,#1d31ac 84.0%,#1d2da3 84.7%,#1e31ae 85.1%,#1c2b9e 86.0%,#1c268f 86.5%,#1e33b1 87.1%,#203dc9 87.3%,#1f3ac2 87.6%,#1d30ab 87.8%,#1e36b9 88.0%,#1d2ca0 88.4%,#1c2a9c 89.1%,#1e33b1 90.0%,#1e31ad 90.2%,#1f3bc4 90.4%,#1f3dc8 90.6%,#1d2ea6 91.1%,#1d2ba0 91.3%,#1d2fa9 91.5%,#1c2999 91.7%,#1d2ba0 92.0%,#1f38bd 92.2%,#1f3dc8 92.4%,#1e33b2 93.3%,#1d2ca0 93.5%,#1d2fa8 93.9%,#1c2792 94.2%,#1c2794 95.0%,#1d2b9f 95.3%,#1c2a9d 95.7%,#1d2ea5 96.1%,#1c299b 96.4%,#1d30aa 96.8%,#1e31ad 97.2%,#203fce 97.9%,#1e36b8 98.1%,#2041d0 98.3%,#1f38bc 99.2%,#1d2ca2 99.7%,#1c2487 99.9%)"></div><div style="left:75.5px;top:151.69px;width:908.0px;height:2.08px;background:linear-gradient(90deg,#215bd6 0.1%,#28a8dc 0.3%,#28a5dc 1.2%,#2ab6da 2.3%,#29aedb 3.2%,#2ecdbc 3.9%,#32d59e 5.6%,#30d4a6 6.9%,#248ce0 7.4%,#203fce 7.6%,#203ecb 7.8%,#2ab6da 8.5%,#1c2897 9.1%,#1c258a 9.8%,#1c2690 10.0%,#34d596 10.7%,#31d4a4 12.2%,#37d68c 14.0%,#2dc8cd 14.6%,#2fd2af 16.0%,#2dc8cd 16.9%,#225dd7 17.3%,#225cd6 17.5%,#2dc9c8 18.0%,#2cc1d8 19.1%,#2371db 19.5%,#1d2ea7 19.7%,#1d2ca2 20.2%,#1e35b5 20.4%,#2dc9c8 21.0%,#2bbed9 21.9%,#1d2fa7 22.6%,#1e36b8 23.5%,#1c2a9d 23.9%,#2046d1 24.1%,#30d2ad 24.6%,#2bbad9 25.7%,#2ecbc2 27.4%,#2dc9c9 27.6%,#59df40 28.7%,#3ad77f 31.6%,#41da63 34.5%,#29aadb 35.1%,#28a7dc 37.1%,#1c1e6b 37.8%,#1c2072 38.2%,#1c1e6a 38.7%,#1c2074 38.9%,#1c2176 39.3%,#1c2381 39.5%,#1c2176 40.4%,#1c1f6d 40.6%,#1f37bb 41.3%,#1f3cc7 42.2%,#1f38be 42.8%,#1e33b2 43.1%,#1f3ac1 44.2%,#1e36b9 44.6%,#2cc3d8 45.3%,#2cc5d5 46.8%,#2ab7da 47.9%,#1c1d63 48.6%,#2bbfd9 49.2%,#2bbdd9 51.7%,#1d2fa9 52.1%,#1c227e 52.3%,#1c2794 52.5%,#214ad2 52.8%,#27a2dd 53.2%,#2bbfd9 53.6%,#2040d0 54.3%,#1e33b3 55.0%,#1f37bc 56.1%,#1c2898 57.4%,#1d31ac 58.3%,#1d2ea6 58.7%,#2040cf 59.6%,#203eca 60.5%,#1f37bc 60.9%,#1f3cc6 61.1%,#1d2fa8 61.3%,#1d30ab 61.8%,#2041d0 62.0%,#1f38bd 62.4%,#1e36b8 63.1%,#2ab8da 63.8%,#2ab5da 64.0%,#2268d9 64.4%,#1f38be 64.6%,#203ecb 65.1%,#1f3ac3 65.3%,#28a2dc 66.0%,#2488e0 66.6%,#2698de 67.5%,#2cc2d8 69.5%,#203ecc 70.2%,#1f3bc5 71.0%,#2bbcd9 71.7%,#226cda 71.9%,#2376dc 72.4%,#2dc8cb 72.6%,#2cc5d6 73.9%,#2cc5d5 75.7%,#2bbad9 75.9%,#68e238 76.5%,#93e923 78.3%,#5bdf3f 79.2%,#29aedb 79.8%,#2dc7cf 80.7%,#2ab5da 82.7%,#1c2b9e 83.4%,#1c2a9c 84.5%,#1e31ae 84.7%,#2040cf 84.9%,#1f3dc8 85.1%,#1d31ac 85.4%,#1c2588 86.2%,#1c258a 86.5%,#1f37bc 86.9%,#1d30aa 87.1%,#1e34b3 87.3%,#1e33b2 87.8%,#1d2da4 88.0%,#1d30ab 88.7%,#1c2899 89.1%,#1d2ea6 89.3%,#1d2fa8 89.8%,#1f3ac1 90.2%,#1e34b3 90.6%,#1f39bf 91.3%,#1d2da4 92.2%,#1c2a9c 94.4%,#1d2fa9 95.5%,#1d2da3 95.9%,#1f38bd 96.1%,#1d2da4 96.4%,#1e37bb 96.6%,#1e32b0 96.8%,#1f3cc7 97.0%,#203dc9 97.2%,#1d2da4 97.5%,#1e37bb 97.7%,#1e35b7 97.9%,#1c2795 98.1%,#1c2b9e 98.6%,#1c2691 98.8%,#1c2896 99.4%,#1c268e 99.9%)"></div><div style="left:75.5px;top:153.38px;width:908.0px;height:2.08px;background:linear-gradient(90deg,#2154d4 0.1%,#279fdd 0.3%,#29b1db 2.3%,#2cc4d7 2.8%,#279cdd 3.6%,#2cc4d7 4.3%,#2cc5d5 5.0%,#2fcfb8 5.8%,#2cc3d8 6.5%,#1c2b9f 6.9%,#1c1c60 7.2%,#1c1e69 7.4%,#1d2da5 7.8%,#28aadc 8.5%,#29abdb 8.7%,#2043d1 9.1%,#2156d5 9.4%,#279bdd 9.6%,#279ddd 9.8%,#2156d5 10.0%,#214fd3 10.2%,#2bbdd9 10.7%,#2cc4d7 12.2%,#29abdb 15.5%,#2cc5d5 17.1%,#2ecdbe 17.7%,#2fcfb7 18.6%,#1f39c1 19.3%,#1e35b7 19.7%,#1c2a9e 19.9%,#1c299a 20.6%,#1c2074 21.0%,#2153d4 21.5%,#2372db 21.7%,#1d2fa8 22.1%,#1d2ea5 22.6%,#1c2795 23.0%,#1c299b 23.2%,#1c268e 23.5%,#1c2795 23.9%,#2ab7da 24.6%,#2ecbc3 26.1%,#2dc8cc 27.6%,#7fe62d 28.3%,#78e530 30.9%,#79e52f 32.0%,#5ce03e 33.4%,#7be52f 34.5%,#2ecdbc 35.1%,#2fd1b1 37.1%,#1d31ac 37.8%,#1c2897 38.9%,#1d30aa 39.1%,#1e33b1 40.0%,#1d2ca2 40.6%,#1d31ac 40.9%,#1c2691 41.3%,#1c268e 42.0%,#1d2da5 42.6%,#1c2899 43.7%,#1d2ca0 43.9%,#2262d8 44.4%,#2696de 44.6%,#29acdb 45.7%,#269ade 47.7%,#2cc4d8 48.1%,#42da5f 48.8%,#3cd878 50.3%,#48dc49 51.2%,#43da5c 51.4%,#1c2381 52.1%,#1c299b 52.3%,#1d2fa8 52.5%,#1c2a9d 53.0%,#1d2ea6 53.9%,#1d2da4 54.5%,#1c258a 54.7%,#2371db 55.2%,#2dc6d1 55.4%,#2bbdd9 57.4%,#28a8dc 57.8%,#2bbad9 58.3%,#2152d4 58.7%,#1d2ea6 58.9%,#1d2ca1 59.8%,#1d2fa8 60.5%,#1d2ca1 60.7%,#1d30aa 61.3%,#2dc7ce 62.0%,#1d2ea7 62.7%,#1d30aa 64.2%,#1d2ba0 64.4%,#2cc6d3 65.1%,#2cc3d8 66.0%,#2fd0b3 67.3%,#2dcac7 68.4%,#1c2897 69.1%,#1c2897 69.7%,#1d2ea6 69.9%,#1d2fa9 70.8%,#1e31ad 71.7%,#1c299b 71.9%,#203ecc 72.1%,#226bda 72.6%,#2151d4 73.0%,#2157d5 74.1%,#2149d2 74.3%,#2260d7 74.6%,#2152d4 75.2%,#2262d8 75.4%,#214bd3 75.7%,#2261d7 76.5%,#2378dc 76.8%,#215ad6 77.0%,#2150d4 77.6%,#2372db 77.9%,#2154d4 78.5%,#2268d9 78.7%,#2045d1 79.2%,#2482df 79.6%,#1c2a9d 79.8%,#1c2a9c 80.7%,#2dc9ca 81.4%,#2ecdbd 82.7%,#2262d8 83.1%,#203ecb 83.4%,#1e37ba 84.0%,#1f38be 85.6%,#1e32b0 86.2%,#1f3bc3 86.5%,#1e37bb 86.7%,#2155d5 86.9%,#2264d8 87.6%,#2042d0 87.8%,#214dd3 88.2%,#1f3bc5 88.4%,#1e32af 89.1%,#1e36b9 89.5%,#28a3dc 90.4%,#2040d0 91.5%,#1e35b6 91.7%,#1d2fa8 92.4%,#1f39c0 93.5%,#2268d9 93.9%,#203ecc 94.4%,#1d30aa 94.6%,#1e32b0 95.3%,#203fce 95.5%,#203fcd 95.9%,#1f39c0 96.1%,#2155d5 96.4%,#1e34b4 96.6%,#1e36b9 97.2%,#2042d0 97.5%,#1f3ac3 97.7%,#214cd3 97.9%,#1f3ac3 98.1%,#1f39c0 98.3%,#214fd3 98.6%,#1e34b4 98.8%,#1d31ac 99.7%,#1c2794 99.9%)"></div><div style="left:75.5px;top:155.06px;width:908.0px;height:2.08px;background:linear-gradient(90deg,#2267d9 0.1%,#2cc5d5 0.3%,#2fcfb8 2.5%,#2ab4da 3.6%,#2158d5 3.9%,#1c268d 4.3%,#1d2ea6 4.5%,#1f3bc4 6.3%,#1f39c0 6.7%,#2265d8 6.9%,#2264d8 7.2%,#279ddd 7.4%,#214cd3 7.6%,#1e37ba 7.8%,#1f38bd 8.0%,#2dc8cc 8.5%,#2cc5d6 8.7%,#1d2da3 9.4%,#1d30ab 9.8%,#1c268f 10.0%,#28a7dc 10.5%,#42da61 10.7%,#42da61 13.1%,#52de43 14.0%,#2dc7cf 14.6%,#27a0dd 16.0%,#2ab4da 17.3%,#2265d8 17.5%,#1c2589 18.0%,#1c2a9d 18.2%,#1d2ea6 18.8%,#1e31ad 19.1%,#1d2ea7 19.7%,#1c2897 20.2%,#1d2da4 20.8%,#1c299b 21.0%,#27a0dd 21.7%,#29addb 22.1%,#1c2a9e 22.8%,#1e34b3 23.0%,#1e31ae 23.2%,#2049d2 23.5%,#2154d4 23.9%,#2047d2 24.1%,#29afdb 24.6%,#2699de 25.7%,#28a7dc 26.3%,#258edf 27.2%,#2cc1d8 27.9%,#30d3ab 28.3%,#2ecbc3 29.6%,#34d59a 32.9%,#2eccbf 34.5%,#2592df 35.1%,#2590df 37.1%,#1d2ea7 37.8%,#1c2b9f 38.7%,#1d2da3 39.3%,#1f37bc 39.8%,#1f3cc6 40.4%,#1e32b0 40.9%,#1e35b7 41.1%,#1c2075 41.5%,#1c2380 41.7%,#1d2fa8 42.0%,#1f37bc 42.2%,#1f39bf 42.6%,#1e33b1 42.8%,#1e36b8 43.3%,#1e34b5 43.7%,#1f3ac3 43.9%,#1f3dc8 44.6%,#2045d1 44.8%,#1f3cc6 45.0%,#29abdb 45.5%,#30d3aa 45.7%,#2ecbc2 46.1%,#2dc8cb 47.0%,#1e32af 47.5%,#1c1f6d 47.7%,#1c1f6e 47.9%,#1c1c60 48.1%,#1c1c60 48.8%,#1d2fa8 49.0%,#2fcfb7 49.4%,#2fd0b3 49.7%,#1f3ac2 50.3%,#1e36ba 50.8%,#1f3bc4 51.0%,#28a8dc 51.4%,#279bdd 51.7%,#1d2da3 52.1%,#2ab7da 52.8%,#2ab6da 54.1%,#2045d1 54.5%,#1c2792 54.7%,#1c2177 55.2%,#1c2793 55.4%,#1c268f 57.4%,#1c268f 58.3%,#1c227d 59.1%,#1c2589 59.6%,#2fcfb7 60.2%,#2ecdbc 61.3%,#27a0dd 61.6%,#2696de 62.0%,#2dc9c9 62.2%,#2bbdd9 63.1%,#2dc8cb 64.9%,#2fceb9 65.5%,#1d30ab 66.2%,#1c2a9c 66.6%,#1c2a9d 67.1%,#2bbcd9 67.7%,#2dc6d2 68.6%,#1f3cc7 69.3%,#1f3cc8 71.0%,#1f38bd 71.7%,#1f3ac1 71.9%,#2262d8 72.1%,#225ed7 72.4%,#2043d1 72.6%,#225ed7 73.0%,#2048d2 73.9%,#225ed7 74.1%,#2047d2 74.8%,#2159d6 75.0%,#203fcd 75.9%,#2155d5 76.8%,#2375dc 77.0%,#2045d1 77.4%,#2046d1 78.1%,#225fd7 78.3%,#2156d5 79.0%,#226cda 79.2%,#1f38bc 79.6%,#1e36ba 80.9%,#1f3cc7 81.4%,#1f38bd 82.3%,#1d2ea6 83.1%,#1e36b9 83.4%,#1d30ab 83.6%,#1f3bc4 84.0%,#1d2ea5 84.3%,#1d2b9f 84.7%,#1e34b4 84.9%,#1c2791 85.4%,#1d30aa 85.6%,#1d2ea6 85.8%,#1f3ac2 86.0%,#1f38be 86.2%,#1d2ba0 86.5%,#1d2da4 86.7%,#1c2690 86.9%,#1c2896 87.8%,#1c268f 88.2%,#1d2fa9 88.7%,#1e34b3 89.3%,#1c2487 89.8%,#1c2899 90.0%,#1c2690 90.2%,#1c2792 90.6%,#1d2fa8 91.1%,#1c2792 91.3%,#1c2794 91.5%,#1d2da5 91.7%,#1c2795 92.4%,#1d2da3 92.6%,#1c2795 92.8%,#1c2899 93.1%,#1c268f 93.3%,#1d2da4 94.2%,#1c2b9e 94.6%,#1c2690 94.8%,#1d2fa9 95.3%,#1f3ac2 95.7%,#1f3cc8 95.9%,#1e34b3 96.1%,#1f38be 96.4%,#1d2fa7 96.6%,#1c2a9e 97.0%,#1c227a 97.7%,#1c2487 98.6%,#1c2691 99.0%,#1c2b9e 99.7%,#1c2588 99.9%)"></div><div style="left:75.5px;top:156.74px;width:908.0px;height:2.08px;background:linear-gradient(90deg,#248ae0 0.1%,#2fcfb6 0.3%,#2fd0b3 3.4%,#2ecac5 3.6%,#1d2ca2 4.1%,#1c2898 4.3%,#29afdb 4.7%,#2cc5d6 6.7%,#29afdb 7.2%,#1f3ac3 7.8%,#2ab7da 8.5%,#2ecdbd 9.1%,#2dc9c9 10.2%,#35d695 10.7%,#38d787 13.8%,#3fd96a 14.0%,#29b0db 14.6%,#27a1dd 16.0%,#28a4dc 16.4%,#279ddd 17.3%,#1d2ca1 18.0%,#1c2897 19.5%,#2ab7da 20.2%,#1c258c 20.8%,#1c2179 21.0%,#1d2da3 21.3%,#27a0dd 21.7%,#2591df 22.1%,#1d2ca2 22.6%,#1c227b 22.8%,#1d2da3 23.0%,#1e34b4 23.2%,#1d2fa8 23.9%,#2dc7cf 24.6%,#2dcac6 27.9%,#3fd96d 28.5%,#30d4a7 29.8%,#46db4e 31.4%,#3ad780 33.1%,#3fd96a 34.5%,#2dc8cc 35.1%,#2dcac6 35.8%,#2cc3d8 36.0%,#2dc8cb 37.1%,#1c2a9d 37.8%,#1d2ea6 39.3%,#1c268e 40.2%,#1e33b2 41.5%,#1d2fa9 42.2%,#1c2a9c 42.4%,#1c2b9e 43.3%,#1d30ab 43.5%,#1d2fa7 43.9%,#1c1f6f 44.6%,#2fceb9 45.3%,#2dc7cf 45.7%,#2fceb9 46.8%,#2dc9c8 48.1%,#28a3dc 48.8%,#29acdb 49.7%,#28a7dc 50.1%,#2ab3da 52.1%,#225dd6 52.3%,#1e33b1 52.8%,#203fce 53.0%,#1f3cc7 53.2%,#2041d0 53.6%,#28a4dc 54.1%,#2ab4da 54.3%,#2158d5 54.7%,#2047d2 55.2%,#1d2ca2 55.6%,#1e35b6 57.2%,#1d2fa9 57.6%,#1d30aa 58.0%,#1c2896 58.3%,#1d2ba0 58.7%,#1c2487 58.9%,#1d2ea6 59.1%,#2ab6da 59.6%,#2dc7cf 59.8%,#225fd7 60.5%,#225ed7 61.6%,#2373db 62.0%,#214dd3 62.4%,#258fdf 62.9%,#2bc0d9 63.1%,#2cc1d8 63.5%,#2dc8cb 64.0%,#269ade 64.2%,#2379dd 64.4%,#203fce 64.6%,#1f3ac3 65.1%,#1d2ea7 65.3%,#1c2178 65.5%,#1c1c60 65.7%,#1c1e69 66.0%,#1c2485 66.2%,#1e32af 67.1%,#1d2fa9 68.0%,#1d2da4 68.4%,#1e35b6 68.6%,#1d30ab 69.7%,#1c2a9c 70.6%,#1d2fa9 71.0%,#1d2ca2 71.3%,#1c2589 71.5%,#1c2381 71.7%,#1c1c60 71.9%,#38d78a 72.6%,#39d785 73.7%,#34d596 74.6%,#37d68d 75.2%,#2fd2af 76.1%,#45db54 77.2%,#42da60 78.7%,#1e35b5 79.4%,#1e32af 79.6%,#1f39bf 79.8%,#38d789 80.5%,#40d966 81.6%,#34d598 82.3%,#1e36b9 82.7%,#1c227a 82.9%,#1c2999 83.1%,#1d2da4 83.4%,#1c2792 83.8%,#1c2b9f 84.9%,#1c2a9d 85.4%,#1e34b5 86.0%,#1e35b6 86.7%,#203ecc 87.1%,#1e34b3 87.6%,#1c2897 88.4%,#2042d0 88.9%,#2150d4 89.1%,#1f38be 89.5%,#1f3ac3 89.8%,#1d30aa 90.0%,#1f37bc 90.4%,#1e32af 90.9%,#1e33b3 91.5%,#1d2ba0 92.4%,#1e34b4 93.3%,#1d2fa9 94.2%,#1e32af 94.4%,#1d2ea6 94.8%,#1c2a9d 95.3%,#1e32b0 96.1%,#2040cf 96.6%,#1d30ab 97.0%,#203fce 97.9%,#2043d1 98.3%,#2371db 98.6%,#1f39bf 99.2%,#203fce 99.4%,#1e36ba 99.7%,#1c2791 99.9%)"></div><div style="left:75.5px;top:158.43px;width:908.0px;height:2.08px;background:linear-gradient(90deg,#2373db 0.1%,#2ecac6 0.3%,#2dc8cb 1.4%,#2dc9c8 2.5%,#2ecdbc 3.6%,#1f3bc5 4.1%,#1c2792 4.3%,#279ddd 4.7%,#2eccc0 5.0%,#2fd0b3 5.6%,#1d2da4 6.3%,#1c299b 6.5%,#1c2074 6.9%,#1c2794 7.2%,#248be0 7.6%,#258fdf 7.8%,#30d2ad 8.5%,#30d3ab 8.7%,#2591df 8.9%,#2268d9 9.4%,#2ab9da 9.6%,#2bc0d9 10.0%,#3bd87e 10.7%,#34d597 13.8%,#37d68c 14.2%,#2dc9c8 16.0%,#2fd0b4 17.1%,#2266d8 17.7%,#214ad2 18.6%,#214dd3 19.3%,#203dca 19.7%,#1e35b6 19.9%,#1e37ba 21.0%,#30d4a8 21.7%,#2dcac7 23.9%,#1c1f6e 24.6%,#1c227a 24.8%,#1c2175 25.0%,#1c299a 25.7%,#1c299a 26.1%,#1c227e 26.8%,#1c227c 27.2%,#1c299b 27.9%,#1d31ad 28.1%,#203fce 28.3%,#2152d4 29.0%,#2040d0 29.8%,#214cd3 30.5%,#1f3ac3 31.6%,#2044d1 32.0%,#203ecb 32.9%,#1f39bf 33.8%,#1f38bd 35.1%,#1f3ac2 35.6%,#1f3bc4 36.5%,#2154d4 37.1%,#1f3ac3 37.3%,#1d2da3 38.2%,#1f38be 38.9%,#1f38bd 39.8%,#1e33b1 40.2%,#1d2ca0 41.3%,#2dc8cd 42.0%,#2dc8cd 42.6%,#1d2ca1 43.3%,#1d30ac 43.7%,#1d2ca1 44.2%,#1c2486 44.4%,#1c1f70 44.8%,#1d30ac 45.3%,#1d2da4 46.1%,#1c2487 47.0%,#1c299b 47.5%,#1c2899 47.9%,#2041d0 48.1%,#279ddd 48.6%,#29b0db 49.9%,#28a9dc 51.0%,#29acdb 51.7%,#1c2795 52.3%,#1c258b 53.2%,#1c2a9c 53.6%,#1d2fa8 54.7%,#1f39c0 55.2%,#1e36b9 56.1%,#1d2ca2 56.7%,#1d31ac 57.2%,#1e33b1 57.8%,#1d2ba0 58.0%,#1e32af 58.5%,#2153d4 59.1%,#2041d0 60.2%,#214fd3 61.1%,#1c1c60 61.8%,#1d2fa9 62.4%,#1d2ea5 62.7%,#1e35b6 63.1%,#1f39bf 64.0%,#1c299b 65.7%,#1c299b 66.2%,#1d2ea5 66.4%,#1d2da3 67.1%,#1e36ba 67.3%,#1e33b1 67.5%,#1f39bf 67.7%,#1e34b3 68.2%,#1c2899 68.4%,#1c2485 68.8%,#1e32b0 70.8%,#1d30aa 71.5%,#1c2a9d 71.9%,#34d597 72.6%,#2fd0b3 74.6%,#3ed971 75.7%,#63e13a 78.5%,#70e334 79.2%,#2dc6d1 79.4%,#2372db 79.8%,#2bbed9 80.1%,#2bc0d9 81.4%,#2ab3da 82.7%,#2151d4 83.1%,#1d31ad 83.4%,#1d30ab 83.8%,#1d2ea7 84.0%,#1e34b5 84.9%,#1f3bc5 85.1%,#1f3bc5 85.4%,#1e34b3 85.6%,#1e36b8 86.0%,#1d2ca2 86.9%,#1d2ea7 87.3%,#1f3ac2 87.8%,#1e33b3 88.0%,#1f38bc 89.1%,#2045d1 89.3%,#1e35b6 89.5%,#1f38bd 90.6%,#1e32af 91.1%,#1e36b9 92.2%,#1e33b3 92.4%,#203eca 92.6%,#1f37bb 93.1%,#1e35b6 94.2%,#1f3bc4 94.4%,#2044d1 95.0%,#1f39bf 95.7%,#1e36b8 96.4%,#2041d0 96.8%,#203eca 97.5%,#1e31ae 98.3%,#1f3ac3 98.8%,#1e37ba 99.0%,#2155d5 99.7%,#1e36b8 99.9%)"></div><div style="left:75.5px;top:160.11px;width:908.0px;height:2.08px;background:linear-gradient(90deg,#2697de 0.1%,#31d4a3 0.3%,#31d4a5 2.3%,#36d691 3.2%,#28a2dc 3.9%,#279fdd 5.2%,#29aedb 5.8%,#2693de 6.7%,#2fcfb6 7.4%,#2cc1d8 8.3%,#29abdb 8.5%,#2bb9d9 9.1%,#2ab8da 10.0%,#34d596 10.7%,#30d3ac 13.1%,#2fceb9 15.5%,#2ecbc2 17.3%,#237cdd 17.5%,#214ed3 17.7%,#203ecc 18.0%,#28aadc 18.4%,#29abdb 18.8%,#2481de 19.3%,#203dca 19.5%,#1c227a 19.9%,#1d30ab 20.4%,#1e36b8 20.6%,#1e31ae 21.0%,#2ab6da 21.7%,#2cc3d8 22.1%,#1e34b4 22.6%,#1c2483 22.8%,#1e33b1 23.2%,#1e33b2 23.7%,#1c2899 23.9%,#1e32af 24.3%,#2040cf 24.6%,#2040cf 25.0%,#2150d4 25.2%,#2045d1 26.8%,#2158d5 28.5%,#2046d1 28.7%,#214ed3 29.6%,#225ed7 30.1%,#2267d9 31.4%,#214ad2 32.5%,#215ad6 33.4%,#203dc9 34.7%,#1d2ea5 35.1%,#1c2b9e 35.8%,#1c299b 38.0%,#1c2792 38.4%,#1d2da5 40.6%,#1d2ea5 41.1%,#1c2899 41.3%,#1c2179 41.5%,#2047d2 42.0%,#279fdd 42.2%,#2697de 42.4%,#1c2794 43.1%,#1c268f 43.9%,#1f3cc6 44.2%,#215ad6 44.6%,#203fce 44.8%,#1e36b8 45.7%,#1d2fa9 45.9%,#1e33b1 47.5%,#1d31ac 47.9%,#1e33b1 48.3%,#1c2179 48.8%,#1d31ad 49.0%,#2dc7cf 49.4%,#2dc8cd 49.9%,#2040d0 50.6%,#214bd3 50.8%,#28aadc 51.2%,#2590df 51.4%,#1c2178 51.9%,#1c2690 52.5%,#1d2ea7 53.2%,#1c268c 53.9%,#1c2690 54.1%,#1c227e 54.3%,#1c1f6f 54.7%,#1c268d 55.2%,#1e32af 55.4%,#1e33b1 56.7%,#1e34b4 57.8%,#1d31ad 58.0%,#1c2074 58.5%,#1c1d64 58.7%,#1c1c60 58.9%,#1c268d 59.1%,#203ecb 59.6%,#1f37bc 60.2%,#2150d4 61.3%,#2dc7ce 62.0%,#2cc5d5 65.1%,#1c2176 65.7%,#1c1f6d 66.0%,#1c2074 66.6%,#1c2380 67.1%,#1c2381 68.2%,#1c1c62 68.8%,#1c1c60 69.1%,#1c268d 69.3%,#1f37bc 69.7%,#1f3ac1 70.6%,#203ecc 71.3%,#2045d1 71.7%,#1e35b7 71.9%,#2592df 72.4%,#30d2ad 72.6%,#2eccc0 73.2%,#2ecebb 74.6%,#2cc5d4 75.0%,#2dc8cc 75.9%,#c7f20c 76.5%,#aeee15 78.1%,#b7f010 79.2%,#2eccc1 79.4%,#2480de 79.8%,#2ecac5 80.1%,#2dc8cb 80.7%,#30d3aa 81.4%,#2ecbc2 82.7%,#1e32ae 83.4%,#1c299b 84.5%,#1e35b5 85.1%,#1d31ac 85.8%,#1f3ac2 86.7%,#1e34b4 87.6%,#1e35b7 87.8%,#203ecc 88.0%,#1f3bc4 88.4%,#2040d0 88.7%,#1f39bf 88.9%,#1f3bc5 89.3%,#2150d3 89.5%,#1e34b3 90.0%,#203fce 90.2%,#1f37bb 90.4%,#2041d0 90.6%,#1f39bf 90.9%,#1f3cc6 91.1%,#2159d5 91.3%,#1f3cc7 91.5%,#203dca 91.7%,#1e32b0 92.2%,#1c2a9c 92.8%,#1e32b0 94.2%,#2040d0 94.4%,#215bd6 95.0%,#1e33b1 95.7%,#1f3dc8 96.6%,#1f3bc4 97.0%,#203fce 97.2%,#1f3bc3 97.7%,#2158d5 98.1%,#203dc9 98.3%,#1f3bc5 98.8%,#214ad2 99.0%,#1f39c1 99.2%,#2040d0 99.7%,#1d2fa8 99.9%)"></div><div style="left:75.5px;top:161.79px;width:908.0px;height:2.08px;background:linear-gradient(90deg,#2372db 0.1%,#2cc2d8 0.3%,#2ab3da 1.4%,#2bbfd9 2.5%,#28a7dc 3.6%,#2156d5 3.9%,#2261d7 4.3%,#2593df 4.5%,#1e37ba 5.0%,#1e35b6 5.4%,#2cc3d8 6.1%,#2cc3d8 6.5%,#2269d9 6.7%,#225dd6 7.2%,#2bbad9 7.4%,#2bbcd9 7.6%,#2269d9 7.8%,#258fdf 8.3%,#30d3ab 8.5%,#2fd1b2 8.7%,#1e34b4 9.1%,#1c2792 9.4%,#2153d4 9.8%,#2152d4 10.0%,#2fd1b1 10.7%,#2fcfb8 12.2%,#30d3ac 14.0%,#2697de 14.6%,#2592df 17.3%,#2042d0 17.5%,#258cdf 18.0%,#2fceb9 18.2%,#35d693 18.6%,#2fcfb7 19.1%,#2fd0b4 19.7%,#2591df 19.9%,#2486e0 20.2%,#203dc9 20.4%,#214ad2 20.6%,#1c2589 20.8%,#1c1f6d 21.0%,#1c2898 21.3%,#279ddd 21.7%,#1d2fa8 22.4%,#1c2a9c 22.6%,#1e34b3 23.2%,#1e31ae 23.5%,#1c237f 23.9%,#1c2794 24.3%,#1e31ad 24.6%,#1d30ac 25.2%,#1e35b7 25.7%,#1d2ca1 26.8%,#1d30ab 27.0%,#1d2da3 27.6%,#2040d0 28.3%,#2152d4 29.4%,#2046d1 30.9%,#1f37bc 31.4%,#1f3cc6 32.0%,#214ad2 33.6%,#203fcf 34.5%,#2155d5 35.6%,#214bd3 36.9%,#2156d5 37.1%,#1f3cc6 37.3%,#1f39c0 37.6%,#1d2fa9 37.8%,#1c299b 38.2%,#1d2da3 38.4%,#1c2794 39.1%,#1c2a9d 39.3%,#1c258a 39.8%,#1c299b 40.2%,#1c2691 40.4%,#1d2fa9 40.9%,#29aadb 41.5%,#2ab3da 41.7%,#279ddd 42.0%,#28a5dc 42.6%,#2698de 42.8%,#29acdb 43.3%,#28a3dc 43.9%,#28a5dc 44.6%,#1c1d63 45.3%,#2ab8da 45.9%,#2bb9d9 46.4%,#1c2176 47.0%,#1c227a 47.7%,#1c2070 48.1%,#1c1c60 48.3%,#2dc7cf 49.0%,#2dc9c8 51.4%,#1d2fa9 52.1%,#1e32ae 52.8%,#1d2ea6 53.0%,#1e31ae 53.2%,#1c2b9f 54.1%,#1d2ca0 54.3%,#28a5dc 55.0%,#27a1dd 56.5%,#2590df 57.2%,#2694de 57.8%,#28a4dc 58.5%,#1f37bc 58.9%,#1c2795 59.1%,#1f39bf 59.4%,#203ecb 60.0%,#2046d1 60.2%,#1e36b8 61.3%,#1c2b9e 61.6%,#2488e0 62.0%,#30d2ad 62.2%,#2fceb9 62.9%,#2159d6 63.3%,#1f38bd 63.5%,#2042d0 64.2%,#1e32b0 65.5%,#203ecb 65.7%,#28a8dc 66.2%,#28a5dc 67.5%,#2ab3da 67.7%,#1f3cc6 68.4%,#1f39c1 68.8%,#2371db 69.1%,#2bc0d9 69.5%,#2cc5d4 70.2%,#225cd6 70.8%,#2155d5 71.5%,#225cd6 71.7%,#1f38be 71.9%,#2696de 72.4%,#2fceb9 72.6%,#2fd0b5 74.1%,#2fd1b0 75.9%,#70e334 76.5%,#48dc4a 79.0%,#2ab6da 79.6%,#2ecbc2 82.7%,#258cdf 82.9%,#215bd6 83.1%,#1c2793 83.4%,#1c2380 83.8%,#1c2484 84.9%,#1c237f 85.1%,#1c258c 85.4%,#1c2178 85.8%,#1c227e 86.5%,#1c258a 86.7%,#1c227c 87.3%,#1c237f 88.0%,#1c2486 88.2%,#1c2380 88.4%,#1c258a 88.7%,#1c2381 89.1%,#1c2899 89.3%,#1c258a 89.5%,#1c2b9e 90.2%,#1c2999 90.4%,#1d2da4 90.6%,#1c299a 90.9%,#1c2897 91.5%,#1c2177 92.0%,#1c2071 92.2%,#1c227b 92.4%,#1c2178 92.6%,#1c2485 93.1%,#1c2588 93.3%,#1c2899 93.5%,#1c2588 93.9%,#1c2a9d 94.2%,#1c2a9c 94.4%,#1c2074 94.8%,#1c2071 95.0%,#1c2383 95.3%,#1c2486 95.7%,#1f39c0 96.1%,#1d2ca2 96.4%,#1c2791 97.2%,#1c227c 97.5%,#1c227d 97.7%,#1c1e6a 97.9%,#1c1d66 98.8%,#1c2075 99.0%,#1c2074 99.4%,#1c2179 99.7%,#1c2071 99.9%)"></div><div style="left:75.5px;top:163.48px;width:908.0px;height:2.08px;background:linear-gradient(90deg,#2374dc 0.1%,#2dc8cd 0.3%,#2ecbc3 1.4%,#2dc6d1 2.1%,#2fd1b2 5.4%,#1c2a9d 6.1%,#1d2ea6 6.5%,#2045d1 6.9%,#214ed3 7.4%,#1f3cc7 7.6%,#1c2b9e 7.8%,#1f37bb 8.0%,#2cc4d7 8.5%,#2ecebb 9.6%,#2ecac5 11.3%,#2ecbc2 12.0%,#2dc7d0 12.9%,#2fd2ae 14.0%,#2ecdbd 14.2%,#aaed17 14.4%,#c8f20c 15.1%,#9beb1e 15.5%,#b1ef14 16.0%,#8ee825 16.2%,#d8f408 16.4%,#90e924 16.9%,#d2f309 17.5%,#2265d8 17.7%,#2265d8 18.0%,#2cc1d8 18.2%,#2ecac6 19.1%,#2ecac5 19.7%,#1e32b0 20.2%,#1d2ca2 20.4%,#1e34b5 20.6%,#1e35b7 20.8%,#1c1f70 21.0%,#1c299a 21.3%,#279cdd 21.7%,#1e34b5 22.4%,#1e37bb 22.8%,#2cc3d8 23.5%,#2487e0 23.7%,#1e36b9 23.9%,#1c2484 24.1%,#1c2382 24.3%,#1d2ea5 24.8%,#1c299b 25.7%,#1c258a 25.9%,#1c2588 26.8%,#1c2b9f 27.2%,#1d2ca1 27.6%,#2155d5 28.3%,#2263d8 32.3%,#225fd7 33.4%,#2262d8 34.5%,#203dca 35.1%,#1f38bd 36.0%,#1e32b0 36.2%,#1e36b9 36.5%,#1e33b2 37.1%,#1e35b6 37.3%,#1d2ea7 37.6%,#1e36b8 38.0%,#1e32b0 38.7%,#1d31ac 39.3%,#1d2da3 39.5%,#1d31ac 39.8%,#1d2ea5 40.4%,#1d30aa 40.6%,#1c2792 41.3%,#1c2896 42.0%,#1c2690 42.6%,#1c2179 43.5%,#1c227b 43.9%,#1c227e 44.6%,#1c2177 44.8%,#2dcac7 45.5%,#2dc8cb 47.0%,#2eccbf 48.3%,#1c2589 49.0%,#1f3bc4 49.4%,#1e33b2 49.9%,#1e33b1 50.3%,#1d2ca1 51.0%,#1e31ad 51.9%,#1f38bd 52.3%,#203ecb 52.8%,#1d2ea7 53.6%,#1d2ca1 54.3%,#1e35b7 55.2%,#1d2fa9 55.6%,#1e35b7 56.3%,#2045d1 56.9%,#203ecb 57.2%,#2048d2 57.4%,#203ecc 57.6%,#2046d1 58.0%,#237cdd 58.3%,#2697de 58.5%,#2cc6d2 58.7%,#225cd6 59.1%,#1f39c0 59.4%,#1f3ac1 59.8%,#2bbdd9 60.5%,#2cc4d7 61.6%,#2ecdbc 63.1%,#2cc5d6 63.8%,#2fd1b2 64.9%,#1f3cc7 65.5%,#1d2da5 66.6%,#1f3ac1 67.7%,#1e35b7 68.4%,#1c2589 69.1%,#1c258b 69.3%,#1c217a 69.5%,#1c2176 69.7%,#1c2794 70.6%,#1c2589 71.5%,#1c1d64 71.9%,#2377dc 72.4%,#2fceb9 72.6%,#2eceba 73.9%,#30d3ac 75.0%,#2fcfb8 77.9%,#2eccbf 78.7%,#2fceb9 79.4%,#2dc6d1 80.3%,#32d5a1 81.8%,#2eccc0 82.7%,#2047d1 83.1%,#1e32af 83.4%,#1d2da4 83.6%,#1e32af 84.3%,#203ecb 84.5%,#1d2ca1 84.7%,#214ed3 85.4%,#1f39c0 85.6%,#1e35b6 85.8%,#2155d5 86.0%,#203fcf 86.2%,#203fce 86.5%,#1e34b3 86.7%,#1f3dc9 86.9%,#1e31ae 87.3%,#1e35b6 87.8%,#1f3dc8 88.0%,#1d2ea6 88.4%,#1e37bb 90.4%,#1e35b5 91.7%,#1d2fa8 92.0%,#1e36b8 92.6%,#1e33b2 93.3%,#1c2a9d 93.7%,#1d2da4 94.4%,#2046d1 94.6%,#203eca 95.0%,#1d31ac 95.3%,#1e33b2 95.5%,#1d2ca2 95.9%,#1d30aa 96.6%,#1f39c0 97.2%,#1e32af 98.6%,#1d2ba0 99.0%,#1d2ea6 99.7%,#1c2794 99.9%)"></div><div style="left:75.5px;top:165.16px;width:908.0px;height:2.08px;background:linear-gradient(90deg,#203fce 0.1%,#2485df 0.3%,#2488e0 2.1%,#2379dd 3.2%,#2482df 3.6%,#2fcfb7 4.3%,#2fcfb7 4.5%,#1f39c1 5.2%,#1f3dc8 5.4%,#1f38be 5.8%,#29afdb 6.3%,#2488e0 6.5%,#1c1c61 6.9%,#1c2796 7.4%,#1c2073 7.8%,#1f38be 8.3%,#1f3cc7 8.5%,#1e33b1 8.7%,#1c258a 8.9%,#1d2ca1 10.0%,#2151d4 10.2%,#ddf507 10.5%,#c9f20c 12.0%,#e9f604 12.9%,#abee16 14.2%,#2dc6d1 14.4%,#2bbcd9 15.7%,#2cc6d2 17.7%,#2ecbc4 18.4%,#1f3cc7 19.1%,#203ecc 19.7%,#2dcac7 20.4%,#2dc9ca 22.1%,#237dde 22.4%,#1c2999 22.8%,#1e36b9 23.0%,#1e34b4 23.5%,#1c2177 23.9%,#1c1f70 24.1%,#1d2ea7 24.6%,#1e34b5 25.2%,#1d2da4 26.3%,#1d2da5 27.6%,#2048d2 28.3%,#214bd2 29.2%,#2266d8 30.3%,#214fd3 30.9%,#2154d4 31.8%,#203fcf 32.7%,#2040cf 34.0%,#2156d5 34.9%,#203fce 36.0%,#1f3bc5 36.9%,#1c2a9c 37.8%,#1d30aa 38.9%,#1d31ad 40.2%,#1d2ea6 41.1%,#1c2690 41.3%,#1c2899 41.7%,#1e34b4 42.0%,#1f3ac2 42.8%,#1d31ad 43.7%,#1d2ea7 44.2%,#2bbed9 44.8%,#2dc7d0 45.7%,#2043d1 46.4%,#1f3cc7 46.8%,#2043d1 47.0%,#1f3dc9 47.5%,#2dc6d2 48.1%,#1c2896 48.8%,#1c2690 49.7%,#1d2da3 50.1%,#1d31ac 50.6%,#1c2690 51.2%,#1c268f 51.4%,#1c2177 51.7%,#1c1c60 52.1%,#1c2382 52.8%,#1c2176 53.4%,#2bb9d9 54.1%,#2bc0d9 54.5%,#1c268e 55.2%,#1c2794 56.9%,#1c2898 57.6%,#1c2a9c 57.8%,#1c2793 58.0%,#1c1f6c 58.5%,#1c2175 58.7%,#1e33b2 59.1%,#203fce 60.7%,#1f3cc7 61.3%,#2ab3da 62.0%,#2ab6da 64.2%,#28a5dc 64.9%,#1f3cc6 65.5%,#2041d0 65.7%,#1f3ac2 66.6%,#1e34b4 66.9%,#1f3bc3 67.5%,#1f3cc8 68.4%,#1f3ac1 68.6%,#1d2ca1 68.8%,#1c2794 69.3%,#1e36b8 69.7%,#1f38be 70.8%,#1e33b2 71.9%,#28a9dc 72.6%,#258ddf 73.7%,#2487e0 75.2%,#269ade 75.4%,#2696de 75.9%,#2cc4d8 76.8%,#2fceb9 79.6%,#2fd0b5 80.1%,#2eccc0 82.0%,#2fd1b2 82.7%,#1e33b2 83.4%,#1e37ba 83.6%,#1e34b4 84.0%,#1e37bb 84.5%,#1d31ad 85.4%,#1e36b9 85.8%,#203fcf 86.0%,#1f3cc6 86.5%,#1f3dc8 86.9%,#1e32af 87.1%,#1d2ca1 87.6%,#1e32b0 88.4%,#1f38be 88.7%,#1e35b7 89.1%,#2044d1 89.3%,#203fcd 89.8%,#1e35b7 90.0%,#1e34b5 90.6%,#203fcf 91.3%,#203fcd 91.7%,#1e32af 92.6%,#1c2b9f 92.8%,#1d2da3 93.5%,#1e32ae 93.7%,#226dda 94.4%,#2267d9 94.8%,#203fce 95.5%,#2150d4 95.9%,#1f39bf 96.1%,#1f3bc4 96.4%,#1e35b5 96.6%,#1f3dc8 96.8%,#1f38be 97.0%,#2043d1 97.2%,#214fd3 97.7%,#1e35b5 98.1%,#1d31ac 98.6%,#1e34b4 99.0%,#1f3bc5 99.2%,#1f39bf 99.7%,#1d2da3 99.9%)"></div><div style="left:75.5px;top:166.85px;width:908.0px;height:2.08px;background:linear-gradient(90deg,#214bd2 0.1%,#2693de 0.3%,#2ab1da 1.7%,#279fdd 1.9%,#2698de 2.3%,#2485df 3.2%,#2ab5da 4.5%,#2ecbc2 5.6%,#2ab7da 6.5%,#2dc8cb 6.9%,#1d2da3 7.6%,#1c2795 7.8%,#1e36ba 8.0%,#27a2dd 8.5%,#225dd6 8.9%,#236eda 9.1%,#2ecac5 9.6%,#2ecdbc 9.8%,#237cdd 10.0%,#2697de 10.2%,#269ade 10.5%,#31d4a5 10.7%,#3bd87a 14.0%,#28a5dc 14.6%,#2699de 15.7%,#28a6dc 17.1%,#2ab1da 17.3%,#1e32af 17.7%,#1c2589 18.0%,#1e32b0 18.4%,#1d2ea6 18.6%,#1e33b1 19.3%,#1c2486 19.7%,#1c1d65 19.9%,#1d2ca2 20.4%,#1f3cc7 20.6%,#1c2383 21.0%,#1d2ba0 21.3%,#258edf 21.7%,#258edf 21.9%,#1f3bc5 22.6%,#1f38be 23.0%,#2bbdd9 23.7%,#2cc2d8 25.0%,#2dc9ca 25.2%,#2dc7ce 25.9%,#2cc5d5 27.2%,#2bbbd9 27.4%,#3ed971 28.1%,#74e432 28.5%,#75e432 30.1%,#54de42 32.7%,#76e431 34.5%,#2cc6d2 35.1%,#2ab5da 36.0%,#2dc9ca 37.1%,#1d2da3 37.8%,#1d30ab 38.9%,#1d2ca0 39.3%,#1f38bd 41.1%,#1c258c 42.4%,#1c258a 42.8%,#1d2da4 43.9%,#1c227e 44.4%,#1c1c62 44.6%,#2dc8cc 45.3%,#2ecdbe 48.1%,#1f3cc7 48.6%,#1c2896 48.8%,#1f3dc8 49.2%,#1e36b8 49.4%,#1d30ab 50.3%,#1e33b1 51.7%,#1c2896 51.9%,#1c227e 52.3%,#1c2792 52.5%,#1d2da5 53.6%,#1c2897 54.7%,#1c299b 55.0%,#214cd3 55.6%,#225cd6 56.5%,#2042d0 57.2%,#2047d2 58.3%,#1f3bc3 59.4%,#214fd3 60.5%,#1f39c0 61.6%,#1f3ac1 62.0%,#2dc8cb 62.7%,#2ecdbd 63.8%,#2ecebb 65.1%,#1d2ea7 65.7%,#1c2896 66.4%,#1d2fa8 66.6%,#1d30ab 67.5%,#1c2795 68.4%,#1c237f 68.6%,#1c2177 69.1%,#39d783 69.7%,#32d5a0 70.4%,#1c2380 71.0%,#1c2381 71.7%,#1c258a 71.9%,#2047d1 72.1%,#2371db 72.4%,#2379dd 73.0%,#2261d7 73.2%,#2374dc 73.5%,#2375dc 74.3%,#2373db 76.1%,#40d968 76.3%,#79e530 78.7%,#3bd87a 79.4%,#2dc8cd 79.8%,#2dc9c9 82.0%,#2cc4d8 82.7%,#2590df 82.9%,#2694de 83.1%,#2048d2 83.4%,#2158d5 83.6%,#1f39c0 84.5%,#1e33b2 86.0%,#1f3ac1 86.7%,#1f3dc9 87.6%,#2269d9 87.8%,#2376dc 88.0%,#2150d4 88.2%,#2268d9 88.4%,#2153d4 88.7%,#2157d5 88.9%,#203ecb 89.1%,#2149d2 89.8%,#1f3dc9 90.0%,#2149d2 90.4%,#1e34b3 92.0%,#203ecc 92.6%,#2155d5 92.8%,#1f3cc6 93.1%,#203fce 93.3%,#1f3ac3 93.5%,#1f39bf 94.2%,#225cd6 94.4%,#2268d9 95.0%,#237bdd 95.3%,#2153d4 95.5%,#203fce 96.1%,#1e35b7 96.4%,#1e34b4 97.2%,#1e35b6 97.9%,#2158d5 98.3%,#279bdd 99.2%,#1e32ae 99.9%)"></div><div style="left:75.5px;top:168.53px;width:908.0px;height:2.08px;background:linear-gradient(90deg,#2cc4d8 0.1%,#81e62b 0.3%,#8be826 3.0%,#60e03c 3.6%,#2ab3da 3.9%,#226cda 4.1%,#2040cf 4.3%,#237bdd 4.5%,#2370db 5.0%,#258ddf 5.6%,#225fd7 6.1%,#1f3dc9 6.3%,#203ecb 6.9%,#1f39c0 7.6%,#1d2ea5 7.8%,#2040d0 8.3%,#248ae0 8.5%,#2cc5d5 9.1%,#2ecebb 10.2%,#35d696 10.7%,#30d3ac 11.6%,#36d68e 12.4%,#34d598 14.0%,#28a2dc 14.6%,#2484df 16.0%,#2489e0 17.3%,#2043d1 17.5%,#2488e0 18.0%,#2fd1b1 18.2%,#31d4a6 19.5%,#1e32af 20.2%,#1e34b4 20.8%,#1d2b9f 21.0%,#226ad9 21.5%,#2cc0d8 21.7%,#2cc4d8 22.1%,#1f3bc3 22.8%,#1e35b6 23.0%,#1f38bd 23.7%,#1c299a 23.9%,#226ad9 24.3%,#2bb9d9 24.6%,#29afdb 26.3%,#2ab6da 27.6%,#4ddd45 28.3%,#41da64 30.3%,#48dc48 34.5%,#2bb9d9 35.1%,#2cc5d6 37.1%,#1c2999 37.8%,#1c299b 38.2%,#1c258c 38.4%,#1c258a 39.3%,#1c2795 39.5%,#1c2690 40.0%,#1c2897 40.4%,#1c2588 40.6%,#1c2791 40.9%,#1c1c60 41.5%,#1c1c61 41.7%,#1c2074 42.0%,#1d31ac 42.4%,#1c2a9d 43.1%,#1c2a9d 44.2%,#2dcac7 44.8%,#1d2da5 45.5%,#1e37ba 46.6%,#1e32b0 46.8%,#2cc3d8 47.5%,#2ecbc2 48.3%,#203dca 49.0%,#1e34b3 49.7%,#1f38bd 50.8%,#1d2da3 51.7%,#1c2588 52.1%,#1c2793 54.1%,#1c2899 54.3%,#2ab8da 55.0%,#29b0db 56.3%,#1f39c0 56.9%,#1e32af 57.8%,#27a1dd 58.5%,#2045d1 58.7%,#1c299b 59.1%,#1e35b6 59.4%,#1f3ac1 60.9%,#38d788 61.6%,#34d598 65.1%,#1c1c60 65.7%,#1f3bc4 66.4%,#203ecc 66.9%,#1f38be 68.0%,#203ecc 68.4%,#30d3aa 69.1%,#2fd1b1 69.5%,#1c2899 70.2%,#1c2b9e 70.8%,#1c2487 71.3%,#1c2486 71.5%,#203fcd 71.7%,#1f3dc8 71.9%,#28a3dc 72.1%,#29addb 72.4%,#3ed96f 72.6%,#30d3ab 73.7%,#38d787 75.4%,#3fd96d 76.1%,#53de42 77.0%,#3ed96f 78.7%,#3fd96c 79.4%,#2fceb9 79.8%,#2ecebb 81.8%,#2fd1b2 82.7%,#1c258b 83.4%,#1c2383 84.0%,#1c2b9f 84.7%,#1d2da4 86.0%,#1d2ca2 86.7%,#1c2899 86.9%,#1e32b0 87.8%,#203ecc 88.0%,#203fce 88.2%,#1c2b9e 88.7%,#1c258a 89.1%,#1d2ba0 90.2%,#1c2896 90.9%,#1e32b0 91.3%,#1e31ae 91.7%,#1e34b5 92.0%,#1d2ca2 92.2%,#1d30aa 92.4%,#1c2b9f 92.6%,#1e33b1 92.8%,#1f37bc 93.3%,#203fce 93.5%,#1c2a9d 93.9%,#1c2999 94.6%,#1c258a 94.8%,#1c2897 95.5%,#1e32b0 95.7%,#1e33b1 95.9%,#1c2a9c 96.1%,#1c2795 96.4%,#1d2ea5 97.0%,#1c2690 97.7%,#1c2896 97.9%,#1c258c 98.1%,#1c2795 98.3%,#1c2795 98.8%,#1d2ba0 99.7%,#1c258b 99.9%)"></div><div style="left:75.5px;top:170.21px;width:908.0px;height:2.08px;background:linear-gradient(90deg,#2697de 0.1%,#31d4a6 0.3%,#30d4a9 1.4%,#3ed970 2.1%,#41da65 2.8%,#3dd876 3.4%,#31d4a3 3.6%,#2699de 3.9%,#2261d7 4.3%,#29acdb 4.5%,#2cc1d8 6.3%,#1f39c1 6.9%,#1f3ac1 7.6%,#1d30ab 7.8%,#226ad9 8.3%,#2ab3da 8.5%,#2ab8da 8.7%,#2269d9 8.9%,#2154d4 9.1%,#225dd6 9.4%,#28a7dc 9.6%,#28a6dc 10.0%,#43da5c 10.7%,#3fd96b 14.0%,#2bbbd9 14.6%,#27a2dd 17.3%,#225ed7 17.5%,#2157d5 17.7%,#2267d9 18.0%,#2cc1d8 18.2%,#2ab5da 18.6%,#2cc5d6 19.1%,#2ab3da 19.3%,#1e37bb 19.9%,#1e36b9 20.6%,#1c2071 21.0%,#1d2ba0 21.3%,#27a1dd 21.7%,#27a1dd 21.9%,#1c2380 22.6%,#1c268d 23.2%,#1c1d63 23.9%,#1c227b 24.1%,#214cd3 24.6%,#225bd6 25.2%,#214fd3 25.4%,#2372db 27.4%,#2371db 27.6%,#75e431 28.3%,#46db51 31.6%,#47dc4e 33.6%,#71e334 34.5%,#2dc9c9 35.1%,#2ecdbd 36.5%,#2dc8cc 37.1%,#1d2fa8 37.8%,#1e32b0 38.4%,#1d2ea5 39.5%,#1d31ac 39.8%,#1d2da3 40.0%,#1e35b6 40.6%,#1e35b6 41.1%,#1c2380 41.5%,#1c2381 41.7%,#1f39bf 42.2%,#1e37ba 43.3%,#1e34b4 43.7%,#1f39c0 44.4%,#1d2da3 44.6%,#2377dc 45.0%,#2dcac7 45.3%,#1d2ba0 45.9%,#1d2fa9 46.6%,#1c2b9f 46.8%,#2fd0b3 47.5%,#31d4a4 48.6%,#2150d4 49.0%,#1d30ab 49.2%,#1f3ac3 49.4%,#1e34b3 50.1%,#1f3cc7 51.7%,#1f3ac1 51.9%,#203ecb 52.1%,#1e34b4 52.8%,#1d2ca2 54.1%,#1d2fa7 54.3%,#1c2071 55.0%,#2591df 55.4%,#2ecdbd 55.6%,#2dcac7 56.9%,#2bbdd9 58.0%,#2fd0b4 58.7%,#2dc8cb 59.6%,#30d3aa 60.7%,#2dcac7 62.0%,#2151d4 62.4%,#1e34b3 62.7%,#1f38bd 63.5%,#1e31ae 64.0%,#1d30ab 64.4%,#1d2fa7 64.9%,#1f38be 65.3%,#1c2793 65.7%,#1c258c 66.0%,#1d2da4 66.4%,#1d2ca2 66.9%,#2cc4d7 67.5%,#2cc5d4 68.2%,#214fd3 68.6%,#1c299b 68.8%,#1c2381 69.1%,#1c237f 69.3%,#1e37bb 69.7%,#1e36b8 70.2%,#1f3bc5 70.4%,#1e32af 70.8%,#1d31ac 71.5%,#1c2382 71.9%,#1e36ba 72.1%,#34d599 72.6%,#3ad77e 75.0%,#5ee03d 77.9%,#62e13b 79.0%,#2dcac7 79.6%,#2bbfd9 80.9%,#2dc7d0 82.7%,#2694de 82.9%,#2593df 83.1%,#2154d5 83.4%,#1f39bf 83.8%,#1e34b3 84.5%,#1f3cc7 84.9%,#237dde 85.4%,#247fde 86.0%,#2266d8 86.5%,#226ad9 86.7%,#1e35b6 87.1%,#1e34b3 87.6%,#1f3bc4 88.4%,#1f39c1 89.3%,#2047d2 89.5%,#203fcd 89.8%,#2486e0 90.6%,#203fcd 91.3%,#1e36b9 91.7%,#1e33b1 93.1%,#1f3bc5 93.5%,#1f3ac2 93.7%,#214ad2 94.2%,#1e35b6 94.4%,#1e37bb 95.7%,#203dc9 95.9%,#1e32ae 96.8%,#1e36b9 97.5%,#2040cf 97.7%,#1f38bd 97.9%,#1f39c1 98.3%,#1d2fa9 98.6%,#1e33b2 99.4%,#1f38bd 99.7%,#1d2da4 99.9%)"></div><div style="left:75.5px;top:171.90px;width:908.0px;height:2.08px;background:linear-gradient(90deg,#2cc5d5 0.1%,#85e72a 0.3%,#3fd96e 1.9%,#5ee03d 3.2%,#51de44 3.4%,#37d68d 3.6%,#2044d1 4.1%,#1e33b1 4.3%,#1e31ae 5.0%,#2153d4 5.2%,#29afdb 5.6%,#2cc3d8 6.1%,#2ab8da 6.9%,#226bda 7.2%,#2696de 7.6%,#2fd1b1 7.8%,#237fde 8.5%,#2480de 8.7%,#1d2da4 9.4%,#1d2b9f 10.0%,#2262d8 10.2%,#f56b00 10.5%,#f02800 10.9%,#f89200 11.8%,#f46200 12.7%,#f8b900 13.1%,#f67100 13.5%,#f88c00 14.2%,#2ecdbe 14.4%,#2ab1da 14.9%,#2ab6da 17.1%,#2dcac7 18.0%,#2cc4d7 19.1%,#2dc9c9 19.3%,#1d2ea6 19.7%,#1c1c60 19.9%,#1c1c60 20.2%,#1c2179 20.4%,#1d2ca2 20.6%,#1d2da4 20.8%,#1c2381 21.0%,#1c2b9e 21.3%,#27a0dd 21.7%,#29aedb 22.1%,#1e36ba 22.6%,#1c268d 22.8%,#1c2897 23.2%,#1c1f6e 23.9%,#2699de 24.3%,#2fcfb6 24.6%,#2fd1b1 27.2%,#2fd2af 27.9%,#43da5e 29.4%,#47dc4b 31.6%,#52de43 33.6%,#5ee03d 34.5%,#2cc2d8 35.1%,#2dc7d0 37.1%,#1c2178 37.8%,#1c227a 38.2%,#1c2179 39.1%,#1c2588 39.5%,#1c268f 40.2%,#1c237f 40.6%,#1c2381 41.1%,#1c2178 41.3%,#1e36b9 42.0%,#1d30ac 42.8%,#1e37ba 43.3%,#1d2fa9 44.2%,#1c2899 44.4%,#1f3bc5 45.0%,#2046d1 45.9%,#2154d5 46.6%,#203eca 47.0%,#2046d1 48.3%,#1e33b1 49.0%,#1c299a 49.2%,#1c299a 50.1%,#1d2fa8 50.8%,#1c2795 51.2%,#1c258c 51.9%,#2699de 52.3%,#2dc9c9 52.5%,#2fcfb6 54.5%,#28a9dc 54.7%,#2370db 55.2%,#29aedb 55.4%,#2ab6da 55.6%,#203fce 56.3%,#1e36b9 56.9%,#1e36b9 57.4%,#1f3cc7 57.8%,#203dca 58.0%,#1d30ac 58.5%,#1c2791 58.7%,#1c2899 59.4%,#2dc8cd 60.0%,#2dc8cd 60.9%,#1f38be 61.3%,#1c1e6a 61.6%,#1d2fa9 62.0%,#1e35b6 62.2%,#1d2fa9 62.9%,#1c299b 63.1%,#1c2899 63.5%,#1f38bd 65.1%,#1e33b2 65.5%,#1c2b9f 65.7%,#1c2177 66.0%,#1c2073 66.2%,#1d30ab 66.6%,#1d2da4 66.9%,#1e34b4 67.1%,#1d31ac 67.5%,#1e36b8 68.0%,#1d31ac 68.2%,#1f3cc6 68.4%,#1f3cc7 69.3%,#1f39c1 69.5%,#1f3cc6 69.9%,#32d5a0 70.6%,#31d4a3 71.0%,#1f3bc5 71.7%,#1f3cc8 71.9%,#34d598 72.6%,#3ed96f 73.9%,#33d59d 74.8%,#5fe03c 76.3%,#6de336 79.0%,#3ed96e 79.6%,#1d2fa9 80.3%,#1c2794 80.5%,#1d2da3 81.4%,#2dc7d0 81.8%,#42da61 82.0%,#44db59 82.7%,#2483df 83.1%,#203ecb 83.4%,#1f3dc8 83.6%,#225ed7 84.3%,#1f39c0 85.1%,#203fcd 85.4%,#1f3cc6 85.6%,#2150d4 85.8%,#203dc9 86.0%,#2044d1 86.2%,#1d2fa8 86.7%,#1d2da3 87.3%,#1d30aa 87.6%,#1f3cc6 87.8%,#203fcd 88.0%,#1f3ac2 88.2%,#2045d1 88.7%,#203ecb 88.9%,#1d2ea5 89.1%,#1d2da4 89.8%,#1c2897 90.2%,#1c2a9c 91.3%,#1c258c 91.5%,#1c2794 92.4%,#1d2ca2 92.6%,#1d2ea6 93.1%,#1e34b3 93.3%,#1c2588 94.2%,#1c2a9c 94.8%,#1f37bb 95.5%,#1d30ab 95.9%,#1d2ba0 96.4%,#1d31ac 96.6%,#1c2898 96.8%,#1c2b9e 97.0%,#1f3cc7 97.2%,#1d2da3 97.5%,#1d2da4 97.7%,#1e35b5 97.9%,#1e32af 98.1%,#203fcd 98.3%,#1d2fa8 98.6%,#225cd6 98.8%,#226ad9 99.0%,#2262d7 99.4%,#1f3bc5 99.9%)"></div><div style="left:75.5px;top:173.58px;width:908.0px;height:2.08px;background:linear-gradient(90deg,#2590df 0.1%,#30d3ac 0.3%,#31d4a3 2.1%,#2ecac6 3.2%,#2fceba 5.4%,#30d3ac 6.1%,#2dc6d2 7.4%,#2dc9ca 7.6%,#237bdd 7.8%,#2379dd 8.3%,#2dc9c9 8.5%,#1c1c60 9.1%,#1c1c60 10.0%,#1d2fa9 10.2%,#258cdf 10.5%,#2eccc1 10.7%,#2ecbc3 11.3%,#2dc7ce 11.8%,#2eceba 12.7%,#2cc5d6 13.8%,#2fcfb7 14.2%,#2fd1b1 15.1%,#2fd0b5 16.4%,#2ecbc3 17.3%,#2cc2d8 17.7%,#1c2896 18.4%,#2cc5d6 19.1%,#2ab8da 19.7%,#2262d8 19.9%,#1d2ea6 20.4%,#1f3cc7 20.6%,#2040d0 21.0%,#2699de 21.7%,#2590df 22.1%,#1d2ba0 22.6%,#1c2896 22.8%,#2dc8cc 23.2%,#32d59f 23.5%,#2482df 23.9%,#2373db 24.1%,#2ab5da 24.8%,#2ab4da 27.6%,#2fcfb7 28.5%,#31d4a6 31.6%,#37d68a 32.9%,#2fd1b1 34.0%,#2ecebb 35.4%,#2ecebb 36.9%,#2ecbc3 37.1%,#1c2795 37.8%,#1c2795 38.9%,#1d2ca2 39.5%,#1c2896 40.0%,#1d2ca1 40.4%,#1c2898 40.9%,#1f3dc9 41.3%,#2153d4 42.0%,#2154d4 43.3%,#2044d1 43.9%,#2150d4 44.6%,#2cc5d5 45.3%,#2cc4d7 45.9%,#2ecdbc 46.6%,#2cc4d8 48.1%,#203ecc 48.8%,#2040cf 49.0%,#31d4a4 49.7%,#2fd0b3 50.8%,#2ecebb 51.2%,#237ede 51.7%,#1d31ad 51.9%,#1c268e 52.3%,#1d2ea7 52.5%,#1c299a 52.8%,#1d2da4 54.3%,#2048d2 54.5%,#2158d5 55.0%,#1d30ac 55.2%,#1d2fa9 55.6%,#1d30aa 56.1%,#2dcac6 56.7%,#2dc8cd 58.9%,#2bbad9 59.6%,#2dc8cb 60.9%,#2dc8cc 61.1%,#1c1c60 61.8%,#1d2ea6 62.0%,#2dc7d0 62.4%,#2ecac5 63.1%,#2cc3d8 64.9%,#2ab8da 67.1%,#2048d2 67.7%,#2149d2 68.2%,#226dda 68.4%,#203dca 68.8%,#1c2795 69.1%,#1d2da4 69.5%,#1c2a9c 69.9%,#1d30aa 70.2%,#1d2ea6 70.4%,#1e32b0 70.8%,#1c268d 71.7%,#1c2690 71.9%,#49dc47 72.6%,#60e03c 74.6%,#58df40 77.4%,#63e13a 78.1%,#63e13b 79.2%,#226cda 79.6%,#1c2b9f 79.8%,#1e36b8 80.1%,#1d2ea7 80.5%,#1d2ea5 81.8%,#1d2fa8 82.7%,#1c2794 82.9%,#1c2381 83.6%,#1c2589 84.0%,#1c237e 84.3%,#1c268f 84.5%,#1c2793 86.9%,#1d2ba0 87.1%,#1c258c 88.2%,#1c2792 88.4%,#1c2380 89.5%,#1e31ae 90.6%,#1c2796 91.3%,#1c2897 91.5%,#1c2484 92.0%,#1c299b 92.4%,#1e36ba 92.6%,#203fcf 93.1%,#1f3cc6 93.5%,#2045d1 93.7%,#1e35b6 93.9%,#1e32af 94.6%,#1c2487 95.5%,#1c258a 96.4%,#1c2383 96.6%,#1c2589 97.0%,#1c2381 97.2%,#1d2fa9 97.7%,#1d2ca1 97.9%,#1e34b4 98.1%,#1e35b6 98.3%,#203ecb 98.6%,#1f3cc6 99.0%,#214fd3 99.2%,#2044d1 99.4%,#1c2a9c 99.9%)"></div><div style="left:75.5px;top:175.26px;width:908.0px;height:2.08px;background:linear-gradient(90deg,#2376dc 0.1%,#2cc6d2 0.3%,#2fd0b5 2.5%,#2fceb9 3.4%,#2dc9c9 3.6%,#1c258b 4.3%,#1c2588 4.5%,#2ab6da 5.2%,#2cc5d6 5.8%,#29afdb 6.1%,#2ab2da 6.3%,#1e34b5 6.9%,#2040cf 7.2%,#2040cf 7.4%,#1c2483 7.8%,#1d31ac 8.0%,#2bbfd9 8.5%,#2cc2d8 8.7%,#2377dc 8.9%,#1d30aa 9.4%,#1f3cc6 9.6%,#1f39c0 9.8%,#1c299a 10.0%,#226ad9 10.5%,#2cc2d8 10.7%,#2eccc1 14.0%,#28a4dc 14.6%,#2591df 16.4%,#279edd 17.3%,#37d68d 18.0%,#30d2ad 19.5%,#237cdd 19.9%,#214fd3 20.2%,#214fd3 21.0%,#279ddd 21.7%,#2cc5d5 23.5%,#1f38bd 23.9%,#1f3bc5 24.1%,#35d693 24.6%,#30d4a8 25.9%,#30d3ac 26.5%,#2ecbc2 27.2%,#3cd877 29.0%,#30d3ab 30.5%,#3dd874 31.8%,#38d788 33.1%,#34d59a 34.5%,#279fdd 35.1%,#2696de 36.0%,#248be0 36.5%,#279ddd 37.1%,#1e34b4 37.8%,#1f38be 38.9%,#1d2ca2 40.0%,#1f38be 41.1%,#1c268d 41.5%,#1f3ac2 41.7%,#2fd2ae 42.2%,#2fd1b1 42.4%,#2372db 42.8%,#203ecb 43.1%,#2041d0 43.7%,#1e37ba 44.2%,#1c2793 44.4%,#2265d8 44.8%,#2cc3d8 45.0%,#2cc6d3 46.8%,#2fcfb6 47.9%,#2fd0b3 48.3%,#1f38be 49.0%,#1d30ab 49.9%,#30d4a9 50.6%,#30d2ad 51.4%,#203fce 51.9%,#1c2793 52.1%,#1c2b9f 52.3%,#1c258b 53.2%,#1d2da3 54.3%,#1c2898 54.5%,#1c2896 55.0%,#2dc9c8 55.6%,#2485df 55.8%,#1c2b9e 56.3%,#1d2ba0 57.6%,#27a1dd 58.0%,#237ede 58.3%,#1c2588 58.7%,#1c2794 58.9%,#1c2588 59.1%,#1c268e 60.0%,#1c2a9d 61.1%,#1c1d64 61.8%,#1e33b2 62.4%,#1f3bc3 63.8%,#1e32af 64.4%,#1e34b5 65.3%,#1f3cc7 65.5%,#1f3bc3 65.7%,#1d2ca2 66.0%,#1c2897 66.2%,#1c2a9c 66.4%,#1e32af 66.6%,#1f38bc 68.2%,#1d2fa9 69.1%,#1e31ae 69.5%,#2fceba 70.2%,#2fd1b2 71.3%,#2267d9 71.7%,#1d2da3 71.9%,#1f3dc8 72.1%,#f8ed00 72.4%,#e8f604 73.2%,#e8f604 75.9%,#f8d500 76.1%,#2cc6d3 76.3%,#30d2ae 76.5%,#37d68d 78.1%,#2fcfb8 80.9%,#36d691 81.6%,#30d3aa 82.7%,#1d2fa8 83.4%,#1f39bf 83.6%,#1f37bc 84.3%,#1e34b5 84.5%,#1f3dc8 84.7%,#1c2897 84.9%,#1d2da3 85.4%,#1c2b9f 85.8%,#1d30ab 86.0%,#1c2897 87.6%,#1d2da5 88.0%,#1e33b1 88.2%,#1d2ea6 89.5%,#1d2da4 90.2%,#1d31ac 90.4%,#1c2794 90.9%,#1c2896 91.3%,#1c2589 91.5%,#1c268f 91.7%,#1d2ea7 92.0%,#1d2da4 92.4%,#1f3cc6 92.6%,#2044d1 92.8%,#1f3ac3 93.1%,#2152d4 93.3%,#225fd7 93.5%,#1e35b6 93.7%,#1d31ad 94.2%,#1c2794 94.6%,#1c2899 95.0%,#1c2484 95.3%,#1c2792 96.1%,#1d2ea7 96.4%,#1d2da5 96.6%,#1f3ac3 97.2%,#1d2fa8 97.5%,#1f38be 97.9%,#2040d0 98.1%,#1d2ea6 98.3%,#1d2da5 99.0%,#1c2896 99.2%,#1d2ca1 99.7%,#1c2589 99.9%)"></div><div style="left:75.5px;top:176.95px;width:908.0px;height:2.08px;background:linear-gradient(90deg,#2485df 0.1%,#2ecbc4 0.3%,#2ecdbe 3.0%,#2eccc1 3.6%,#2480de 3.9%,#1c2b9e 4.3%,#1f38bd 4.5%,#1f3cc6 5.0%,#1e34b5 5.2%,#1d2ba0 6.1%,#1d30aa 6.3%,#1c2899 6.5%,#1c2380 7.6%,#1c1f6e 7.8%,#1f3ac2 8.0%,#237ede 8.3%,#28a8dc 8.5%,#1e37bb 8.9%,#1e33b1 9.1%,#1e34b4 10.0%,#30d3ab 10.7%,#3cd878 12.0%,#2ecebb 13.3%,#39d782 14.0%,#2fceb9 14.9%,#2cc6d2 16.4%,#2dc7d0 17.3%,#2371db 17.5%,#2482df 18.0%,#2fd0b3 18.2%,#2ecdbc 19.7%,#2371db 20.2%,#2371db 20.4%,#2eccbf 20.8%,#2dc9c9 21.7%,#2dc8cd 22.1%,#1d2fa9 22.8%,#1d2fa9 23.0%,#1e36b8 23.2%,#2cc3d8 23.9%,#2ab4da 24.6%,#2dc6d2 25.4%,#2ab4da 27.4%,#28a7dc 27.6%,#83e72b 28.3%,#90e924 30.7%,#70e334 31.8%,#79e52f 33.8%,#97ea21 34.5%,#2cc6d3 35.1%,#2bbbd9 36.5%,#2dc9ca 36.7%,#2cc5d4 37.1%,#2267d9 37.6%,#1e34b4 37.8%,#1d2ca2 41.1%,#1c1f6c 41.5%,#1c2897 41.7%,#2bc0d9 42.2%,#2ecbc2 42.8%,#2cc5d4 43.9%,#2ecdbc 44.8%,#38d787 45.7%,#33d59e 48.1%,#1f3bc4 48.6%,#1e35b6 48.8%,#2dc9ca 49.2%,#2ecdbe 51.2%,#1e32b0 51.9%,#1c2a9d 53.2%,#1d2ea6 54.5%,#2ecac5 55.2%,#2ecdbd 58.7%,#32d5a0 60.2%,#2fd1b2 61.8%,#2485df 62.0%,#1c2897 62.4%,#1e34b3 62.7%,#1e32af 62.9%,#1e36b9 63.1%,#1e32b0 64.9%,#1e35b6 65.3%,#1c2179 65.7%,#1c2381 66.0%,#1e32b0 66.4%,#1f38bc 66.9%,#1e33b2 67.3%,#1e36ba 68.0%,#1f3bc5 68.2%,#1c1e6a 68.8%,#1c1c60 69.1%,#1c1c60 69.3%,#1c2071 69.5%,#1c2792 69.7%,#1c268e 69.9%,#1d2da3 70.4%,#1c299b 71.7%,#1c299b 71.9%,#2cc4d8 72.4%,#54de42 72.6%,#40d968 74.3%,#41da63 75.4%,#3dd876 79.2%,#28a7dc 79.4%,#258edf 79.8%,#30d3aa 80.1%,#1d31ad 80.7%,#1f38bc 81.4%,#1e35b6 81.6%,#3ad780 82.3%,#37d68d 82.7%,#1c2898 83.4%,#1c2a9d 84.0%,#1c2792 84.9%,#1d2ca1 85.1%,#1c299a 85.6%,#1e32b0 86.0%,#1d2ca2 86.2%,#1d2b9f 86.9%,#1c2999 87.1%,#1c2a9c 87.6%,#1c2999 87.8%,#1e32af 88.2%,#1c2b9f 88.4%,#1d2fa7 88.9%,#1c2898 89.1%,#1c2898 90.0%,#1e33b2 90.2%,#1f3bc4 90.6%,#1d2fa7 90.9%,#1f3ac2 91.1%,#1d2da3 91.3%,#1c2a9c 91.7%,#1d2ba0 92.0%,#1c2793 92.2%,#1c2b9e 92.6%,#1c268d 93.1%,#1c2a9d 93.3%,#1e31ae 94.2%,#1d2ea5 94.6%,#1e31ad 94.8%,#214dd3 95.0%,#1f3ac1 95.3%,#214ed3 95.5%,#203ecb 95.7%,#1d30aa 95.9%,#1c2a9d 97.0%,#1c268e 97.5%,#1c2898 97.9%,#1c2898 98.1%,#1e33b1 98.3%,#1e37ba 98.8%,#1d2fa8 99.0%,#1f38be 99.4%,#1e32b0 99.7%,#1c258b 99.9%)"></div><div style="left:75.5px;top:178.63px;width:908.0px;height:2.08px;background:linear-gradient(90deg,#226ad9 0.1%,#2ab7da 0.3%,#2cc5d6 1.7%,#2bb9d9 3.6%,#2698de 4.3%,#29afdb 6.3%,#28a4dc 6.5%,#2158d5 6.7%,#2483df 7.2%,#2ecdbe 7.4%,#2dc9c8 8.0%,#2bbdd9 8.3%,#203fcd 8.7%,#1d2fa9 8.9%,#2fd0b4 9.6%,#2fceba 9.8%,#27a0dd 10.0%,#2cc4d7 10.5%,#43da5e 10.7%,#41da62 12.7%,#5ce03e 14.0%,#2dc9ca 14.6%,#2cc1d8 16.2%,#2ab6da 17.3%,#1d2da3 18.0%,#1f38bd 19.1%,#1c2a9c 20.8%,#1c2589 21.0%,#214ed3 21.5%,#29abdb 21.7%,#2ab7da 22.1%,#2266d8 22.4%,#237cdd 22.6%,#2376dc 22.8%,#2cc4d7 23.0%,#2bbed9 23.9%,#2fd2af 25.7%,#2fcfb6 26.8%,#3dd872 29.4%,#30d3aa 30.5%,#3dd876 31.2%,#3ad77f 34.5%,#269ade 35.1%,#2590df 35.8%,#279fdd 36.5%,#279edd 37.1%,#2046d1 37.6%,#1f3bc5 37.8%,#1f3cc7 38.7%,#1f37bb 38.9%,#2040d0 40.0%,#214ad2 41.1%,#1c2795 41.5%,#1e37bb 41.7%,#2bbbd9 42.2%,#2ab9da 42.4%,#1d2ca2 43.1%,#1c2897 43.3%,#1c2792 43.9%,#2489e0 44.4%,#2bbcd9 44.6%,#2dc9ca 46.4%,#2eccc1 47.9%,#1e33b2 48.3%,#1d2fa8 48.6%,#2ab5da 49.0%,#2bbdd9 50.3%,#2693de 51.2%,#1c2896 51.7%,#1c2175 51.9%,#1c2691 52.1%,#1e36ba 52.3%,#2042d0 53.2%,#1e37bb 54.3%,#2dc8cb 55.0%,#2ecdbc 58.3%,#2eceba 58.5%,#1e35b7 58.9%,#1c2179 59.1%,#1d2ca1 59.6%,#1d2ca2 60.9%,#1c2589 62.2%,#1c258a 63.5%,#1c2383 63.8%,#1c268e 64.0%,#1c2484 64.2%,#1c2897 64.9%,#1c2075 65.5%,#1c1d65 65.7%,#1e32b0 66.4%,#1d30ab 67.3%,#1e33b3 68.6%,#1f37bc 69.7%,#1f3cc7 69.9%,#1d2fa9 71.0%,#1e37bb 71.7%,#1e36b8 71.9%,#2eceba 72.6%,#2fd0b5 74.3%,#2dcac7 75.0%,#2fd0b5 75.9%,#54de42 76.8%,#53de42 79.0%,#46db4f 79.2%,#29afdb 79.4%,#2489e0 79.8%,#2fcfb8 80.1%,#33d59e 81.4%,#2ecbc3 82.0%,#30d2ae 82.5%,#2041d0 82.9%,#1d31ac 83.4%,#1e35b5 83.6%,#1d2ca1 83.8%,#1d2ca1 84.7%,#1c2176 85.8%,#1c227b 86.5%,#1c2071 86.7%,#1c2691 87.3%,#1c2899 88.0%,#1c2487 88.4%,#1c2897 90.0%,#1c2a9c 90.2%,#1c2485 90.6%,#1c268d 91.1%,#1c258b 92.0%,#1c2690 92.2%,#1c2382 92.4%,#1c2896 92.8%,#1c2383 93.5%,#1c2487 93.9%,#1d2da4 94.2%,#1d2da3 94.6%,#1e34b3 94.8%,#2046d1 95.0%,#1f37bc 95.7%,#203eca 95.9%,#1c2a9e 96.4%,#1d2ca0 96.8%,#1e34b4 97.0%,#1c2898 97.2%,#1c2589 97.7%,#1c2484 98.1%,#1c2176 98.3%,#1c2075 98.6%,#1c2589 98.8%,#1c2691 99.0%,#1c2487 99.2%,#1c2a9d 99.4%,#1d2ba0 99.7%,#1c268f 99.9%)"></div><div style="left:75.5px;top:180.32px;width:908.0px;height:2.08px;background:linear-gradient(90deg,#237dde 0.1%,#2ecbc2 0.3%,#2fd1b0 1.0%,#2eccbf 2.5%,#30d4a8 3.6%,#1f37bc 4.1%,#1e31ae 4.3%,#2ab8da 4.7%,#2ab5da 6.7%,#203fcf 7.2%,#1d30ab 7.4%,#2159d5 7.6%,#2ab3da 8.0%,#2dc9ca 8.7%,#237fde 8.9%,#1d2da3 9.4%,#1e35b6 9.6%,#1e32b0 9.8%,#1c2794 10.0%,#2488e0 10.5%,#31d4a5 10.7%,#33d59e 12.2%,#2fcfb7 14.4%,#2dc7d0 15.3%,#2dc7ce 17.3%,#258edf 18.0%,#279fdd 18.4%,#2265d8 18.8%,#226bda 19.1%,#2695de 19.3%,#237ede 19.5%,#1c2a9c 19.9%,#1c2a9c 20.2%,#279fdd 20.6%,#2699de 20.8%,#1f39c0 21.0%,#1e33b3 21.3%,#29aedb 21.7%,#2bbed9 22.1%,#214ad2 22.6%,#1e36b9 22.8%,#1d30ab 23.5%,#1c2075 23.9%,#1c2a9c 24.1%,#28a5dc 24.6%,#2ab8da 25.9%,#2bbbd9 27.6%,#89e827 28.3%,#96ea21 34.5%,#2fd0b3 35.1%,#2ecbc2 36.5%,#2eccc0 36.9%,#2fd1b0 37.1%,#1d2ea7 37.8%,#1c2791 38.2%,#1c299b 38.9%,#1c2690 40.0%,#1c2899 41.1%,#1c227d 41.5%,#1e34b3 41.7%,#2bbdd9 42.2%,#28a4dc 43.9%,#2ab4da 44.2%,#225ed7 44.4%,#2152d4 44.8%,#29b1db 45.0%,#28a8dc 45.3%,#1d2da5 45.9%,#1c2b9e 47.7%,#237add 48.1%,#2cc0d8 48.3%,#2fd1b2 48.8%,#2dc9ca 49.9%,#2dc8cb 51.2%,#1f3ac2 51.7%,#1c2483 51.9%,#1c2690 52.3%,#1c227b 52.8%,#1c268d 53.6%,#1c299b 54.7%,#1c2381 55.0%,#1d30ac 55.4%,#2042d0 55.6%,#2158d5 56.5%,#2047d2 58.0%,#1c227a 58.5%,#1c2071 58.7%,#1d30ab 59.1%,#1e31ae 59.6%,#1d2ba0 60.5%,#1d31ad 61.1%,#1c2588 61.6%,#2045d1 62.2%,#1f3ac3 62.9%,#1f39c1 63.1%,#2040d0 63.5%,#1f39c0 64.4%,#214dd3 64.9%,#1c1f6d 65.5%,#1c1c62 66.0%,#1c2176 66.2%,#1c227e 67.1%,#1c268d 67.7%,#1c2485 68.4%,#1c2794 68.8%,#2fceb9 69.5%,#1d2ca2 70.2%,#1c2898 71.3%,#1d2ca0 71.9%,#2ecbc3 72.6%,#2dc7cf 74.3%,#2bbed9 75.2%,#2fceba 75.9%,#5ce03e 76.5%,#43da5d 78.7%,#3fd96d 79.2%,#1f39c1 79.6%,#1e35b5 79.8%,#2dc9c8 80.3%,#2cc6d3 81.6%,#2dc8cd 82.7%,#214ed3 83.1%,#1f38bd 83.4%,#225fd7 83.8%,#1d2ea6 84.9%,#1e32b0 85.6%,#2040d0 85.8%,#1d31ac 86.2%,#1e32b0 86.7%,#1c2a9d 87.1%,#1d2fa8 87.3%,#1c2a9c 87.8%,#1d2fa8 88.4%,#1e32af 88.9%,#1d31ac 89.3%,#1e37ba 89.5%,#1e36b9 89.8%,#2045d1 90.0%,#214cd3 90.4%,#1e32af 91.1%,#1e36b8 92.2%,#1f3dc8 92.4%,#1d31ad 93.3%,#1e35b6 93.5%,#1d2da4 95.0%,#1e31ae 95.3%,#1c2897 96.4%,#1f38bc 97.2%,#1e34b5 97.7%,#2040cf 97.9%,#1e33b1 98.3%,#1e35b6 98.8%,#1d30ab 99.4%,#1d30ab 99.7%,#1c2792 99.9%)"></div><div style="left:75.5px;top:67.5px;width:908.5px;height:114.5px;background:repeating-linear-gradient(180deg,rgba(0,0,30,0) 0px,rgba(0,0,30,0) 0.88px,rgba(0,0,30,0.16) 0.88px,rgba(0,0,30,0.16) 1.684px)"></div><div style="left:81.6px;top:250.00px;width:902.0px;height:1.90px;background:linear-gradient(90deg,#000000 0.1%,#000000 99.9%)"></div><div style="left:81.6px;top:251.50px;width:902.0px;height:1.90px;background:linear-gradient(90deg,#000000 0.1%,#000000 99.9%)"></div><div style="left:81.6px;top:253.00px;width:902.0px;height:1.90px;background:linear-gradient(90deg,#000000 0.1%,#000000 10.3%,#0c2684 11.4%,#1039aa 12.3%,#0c2685 13.0%,#000000 13.6%,#000000 76.8%,#060c37 77.1%,#071045 78.2%,#050a31 78.8%,#000000 79.0%,#000000 99.9%)"></div><div style="left:81.6px;top:254.50px;width:902.0px;height:1.90px;background:linear-gradient(90deg,#000000 0.1%,#000000 11.0%,#060d3b 11.4%,#070f43 12.3%,#050a2f 13.0%,#000000 13.2%,#000000 76.4%,#0e329b 77.5%,#0a2078 78.6%,#060c39 79.5%,#000000 79.7%,#000000 99.9%)"></div><div style="left:81.6px;top:256.00px;width:902.0px;height:1.90px;background:linear-gradient(90deg,#000000 0.1%,#000000 99.9%)"></div><div style="left:81.6px;top:257.50px;width:902.0px;height:1.90px;background:linear-gradient(90deg,#000000 0.1%,#000000 99.9%)"></div><div style="left:81.6px;top:259.00px;width:902.0px;height:1.90px;background:linear-gradient(90deg,#000000 0.1%,#000000 99.9%)"></div><div style="left:81.6px;top:260.50px;width:902.0px;height:1.90px;background:linear-gradient(90deg,#000000 0.1%,#000000 12.1%,#081451 12.5%,#091961 13.4%,#000000 14.1%,#000000 99.9%)"></div><div style="left:81.6px;top:262.00px;width:902.0px;height:1.90px;background:linear-gradient(90deg,#000000 0.1%,#000000 12.1%,#081451 12.5%,#091b67 13.2%,#071148 13.4%,#000000 13.6%,#000000 99.9%)"></div><div style="left:81.6px;top:263.50px;width:902.0px;height:1.90px;background:linear-gradient(90deg,#000000 0.1%,#000000 99.9%)"></div><div style="left:81.6px;top:265.00px;width:902.0px;height:1.90px;background:linear-gradient(90deg,#000000 0.1%,#000000 10.1%,#091b68 10.5%,#0a1f74 11.0%,#05092c 11.6%,#000000 11.9%,#000000 99.9%)"></div><div style="left:81.6px;top:266.50px;width:902.0px;height:1.90px;background:linear-gradient(90deg,#000000 0.1%,#000000 99.9%)"></div><div style="left:81.6px;top:268.00px;width:902.0px;height:1.90px;background:linear-gradient(90deg,#000000 0.1%,#000000 99.9%)"></div><div style="left:81.6px;top:269.50px;width:902.0px;height:1.90px;background:linear-gradient(90deg,#000000 0.1%,#000000 99.9%)"></div><div style="left:81.6px;top:271.00px;width:902.0px;height:1.90px;background:linear-gradient(90deg,#000000 0.1%,#000000 99.9%)"></div><div style="left:81.6px;top:272.50px;width:902.0px;height:1.90px;background:linear-gradient(90deg,#000000 0.1%,#000000 99.9%)"></div><div style="left:81.6px;top:274.00px;width:902.0px;height:1.90px;background:linear-gradient(90deg,#000000 0.1%,#000000 99.9%)"></div><div style="left:81.6px;top:275.50px;width:902.0px;height:1.90px;background:linear-gradient(90deg,#000000 0.1%,#000000 16.1%,#0b2481 16.3%,#0b237d 16.5%,#000000 16.7%,#000000 99.9%)"></div><div style="left:81.6px;top:277.00px;width:902.0px;height:1.90px;background:linear-gradient(90deg,#000000 0.1%,#000000 14.5%,#0b2582 14.7%,#0b2582 15.9%,#091c6b 16.3%,#0b2581 17.4%,#081659 17.6%,#000000 17.8%,#000000 99.9%)"></div><div style="left:81.6px;top:278.50px;width:902.0px;height:1.90px;background:linear-gradient(90deg,#000000 0.1%,#000000 13.2%,#0b2583 13.6%,#0b2582 15.9%,#08175c 16.1%,#000000 16.3%,#000000 16.5%,#071044 16.7%,#08175b 17.2%,#060d3c 17.6%,#000000 17.8%,#000000 99.9%)"></div><div style="left:81.6px;top:280.00px;width:902.0px;height:1.90px;background:linear-gradient(90deg,#000000 0.1%,#000000 11.6%,#091c6a 11.9%,#0b2684 12.3%,#081452 12.7%,#000000 13.0%,#060e3e 13.2%,#060e3e 13.4%,#0b2683 13.9%,#0a227b 15.2%,#071046 15.6%,#000000 15.9%,#000000 17.0%,#091963 17.2%,#0b227d 17.6%,#07124c 18.7%,#000000 19.0%,#000000 72.4%,#0b237e 72.6%,#0b237e 74.2%,#000000 74.4%,#000000 99.9%)"></div><div style="left:81.6px;top:281.50px;width:902.0px;height:1.90px;background:linear-gradient(90deg,#000000 0.1%,#000000 11.2%,#0c2684 11.4%,#091c6c 11.6%,#091d6e 12.3%,#000000 12.7%,#000000 13.6%,#08185f 13.9%,#0c2684 14.1%,#0a217a 14.7%,#081453 15.0%,#000000 15.2%,#000000 16.1%,#071147 16.3%,#07134d 16.5%,#0a2079 17.0%,#0b2583 17.8%,#07124c 18.3%,#000000 18.5%,#000000 72.4%,#0b237e 72.6%,#091d6f 75.3%,#060e40 75.7%,#000000 75.9%,#000000 77.5%,#070f41 77.7%,#000000 77.9%,#000000 99.9%)"></div><div style="left:81.6px;top:283.00px;width:902.0px;height:1.90px;background:linear-gradient(90deg,#000000 0.1%,#000000 11.2%,#0c2684 11.4%,#071350 12.1%,#000000 12.3%,#000000 13.6%,#07124d 13.9%,#091a65 14.1%,#08175a 14.3%,#000000 14.5%,#000000 15.4%,#08185f 15.6%,#0c2787 15.9%,#0c2786 16.7%,#091d6f 17.2%,#091961 17.6%,#000000 17.8%,#000000 72.4%,#071045 72.6%,#091b67 73.1%,#081556 73.9%,#060d3c 74.4%,#000000 74.6%,#000000 75.9%,#060d3b 76.2%,#070f42 76.4%,#000000 76.6%,#000000 77.1%,#07124b 77.3%,#0a1f75 77.9%,#091c6a 78.2%,#000000 78.4%,#000000 99.9%)"></div><div style="left:81.6px;top:284.50px;width:902.0px;height:1.90px;background:linear-gradient(90deg,#000000 0.1%,#000000 11.2%,#081555 11.4%,#0b237e 11.6%,#0c2786 12.5%,#071147 13.2%,#070f42 13.9%,#000000 14.1%,#000000 15.4%,#071350 15.6%,#0a1f75 16.1%,#081453 16.5%,#000000 16.7%,#000000 72.4%,#071149 72.6%,#000000 72.8%,#000000 75.9%,#081453 76.2%,#0a1e71 77.3%,#081555 77.9%,#000000 78.2%,#000000 99.9%)"></div><div style="left:81.6px;top:286.00px;width:902.0px;height:1.90px;background:linear-gradient(90deg,#000000 0.1%,#000000 11.4%,#091b68 11.6%,#0c2888 11.9%,#0a217a 13.4%,#07134d 13.9%,#000000 14.1%,#000000 17.0%,#071044 17.2%,#07134d 17.4%,#000000 17.6%,#000000 18.1%,#071350 18.3%,#091d6f 19.2%,#091a66 19.6%,#0b2683 20.3%,#081453 20.7%,#000000 21.0%,#000000 72.4%,#071148 72.6%,#000000 72.8%,#000000 73.5%,#091a64 73.7%,#0b2481 74.2%,#0b227d 74.6%,#071046 75.1%,#081453 75.3%,#060e3f 75.9%,#071148 76.8%,#060e40 77.1%,#000000 77.3%,#000000 77.5%,#070f41 77.7%,#091c6b 78.4%,#091961 78.6%,#000000 78.8%,#000000 99.9%)"></div><div style="left:81.6px;top:287.50px;width:902.0px;height:1.90px;background:linear-gradient(90deg,#000000 0.1%,#000000 11.0%,#091962 11.2%,#060e3e 11.9%,#091d6f 12.5%,#070f40 13.2%,#000000 13.4%,#000000 13.9%,#07124a 14.1%,#0a1f74 14.5%,#091c6b 15.0%,#07124b 15.2%,#000000 15.4%,#000000 16.3%,#0a227c 17.0%,#0d2a8d 17.4%,#091c6b 18.1%,#091c6c 18.3%,#071045 18.7%,#08185e 19.4%,#0c2786 20.1%,#0c2785 20.3%,#07134e 20.7%,#000000 21.0%,#000000 73.3%,#0a2079 73.9%,#0a1f75 75.7%,#091962 75.9%,#091d70 76.8%,#07124c 77.5%,#0b2481 78.4%,#091c6a 79.5%,#000000 79.9%,#000000 99.9%)"></div><div style="left:81.6px;top:289.00px;width:902.0px;height:1.90px;background:linear-gradient(90deg,#000000 0.1%,#000000 10.8%,#0c2684 11.0%,#0a1e72 11.4%,#000000 11.9%,#000000 13.9%,#0d2c90 14.3%,#0d2c91 15.0%,#07124b 15.6%,#081554 16.1%,#0c298a 16.7%,#091c6b 17.4%,#070f41 18.1%,#000000 18.3%,#000000 19.4%,#081659 19.6%,#091d6d 19.8%,#071046 20.5%,#08175d 21.2%,#071148 21.4%,#000000 21.6%,#000000 31.8%,#050a30 32.0%,#050b32 33.1%,#000000 33.4%,#000000 74.6%,#071046 74.8%,#0b237e 75.3%,#0b2581 79.3%,#08185d 79.5%,#000000 79.7%,#000000 99.9%)"></div><div style="left:81.6px;top:290.50px;width:902.0px;height:1.90px;background:linear-gradient(90deg,#000000 0.1%,#000000 11.4%,#071147 11.6%,#000000 11.9%,#000000 13.9%,#0a217a 14.1%,#0d2e94 14.5%,#0e2e94 15.9%,#091b67 16.3%,#091d6d 17.4%,#060e3f 18.1%,#000000 18.3%,#000000 19.2%,#071045 19.4%,#081555 19.6%,#070f41 19.8%,#000000 20.1%,#000000 20.5%,#070f42 20.7%,#091960 21.2%,#000000 21.6%,#000000 27.6%,#081554 27.8%,#060b35 28.7%,#000000 28.9%,#000000 31.4%,#091c6a 32.3%,#091962 33.1%,#07134d 33.4%,#000000 33.6%,#000000 75.1%,#091a66 75.3%,#0c2787 75.7%,#0a217a 77.5%,#000000 78.2%,#000000 78.4%,#07124b 78.6%,#091d6e 79.0%,#071350 79.5%,#000000 79.7%,#000000 99.9%)"></div><div style="left:81.6px;top:292.00px;width:902.0px;height:1.90px;background:linear-gradient(90deg,#000000 0.1%,#000000 11.2%,#0d2a8d 11.6%,#0d2b8e 12.1%,#071149 12.5%,#081555 12.7%,#071046 13.0%,#000000 13.2%,#000000 14.1%,#060d3b 14.3%,#08175a 15.0%,#0e3099 15.2%,#0e319a 16.1%,#000000 16.7%,#071044 17.0%,#0d2b8f 17.4%,#0e2e95 18.3%,#0a2078 19.0%,#0b2480 19.4%,#08185e 19.6%,#000000 19.8%,#000000 20.5%,#071045 20.7%,#08185f 21.2%,#07124b 21.4%,#000000 21.6%,#000000 21.8%,#060d3b 22.1%,#071046 22.3%,#000000 22.5%,#000000 27.6%,#0c298a 27.8%,#091b6a 28.7%,#000000 29.2%,#000000 31.2%,#08185e 31.6%,#144fbf 32.5%,#0f339e 33.1%,#000000 34.0%,#000000 72.8%,#091a65 73.3%,#0c298b 73.7%,#08175c 74.2%,#000000 74.4%,#000000 75.1%,#08185e 75.3%,#0c2989 75.7%,#0c2888 77.5%,#0a1f75 77.7%,#000000 77.9%,#000000 78.6%,#0b237d 79.0%,#0b2683 79.7%,#000000 79.9%,#000000 99.9%)"></div><div style="left:81.6px;top:293.50px;width:902.0px;height:1.90px;background:linear-gradient(90deg,#000000 0.1%,#000000 11.0%,#091c6b 11.2%,#0e2e95 11.4%,#0e3098 11.9%,#091c6a 12.3%,#091962 12.5%,#0d2c8f 12.7%,#070f41 13.2%,#000000 13.4%,#000000 15.0%,#0f339d 15.2%,#0f339f 16.3%,#0a1f73 16.5%,#000000 16.7%,#000000 17.0%,#0e329c 17.4%,#0e2f95 19.4%,#070f43 19.8%,#091a64 20.3%,#0c2889 20.5%,#091d70 22.3%,#08185e 22.5%,#000000 22.7%,#000000 27.4%,#05092b 27.6%,#1667ca 27.8%,#1036a4 28.7%,#000000 29.4%,#000000 30.9%,#060b35 31.2%,#113db3 31.6%,#1fa9de 32.0%,#32e2b5 32.3%,#1ea5df 33.1%,#1873cf 33.4%,#0c298a 33.6%,#091a65 33.8%,#000000 34.0%,#000000 72.4%,#071045 72.6%,#000000 72.8%,#000000 73.3%,#08185d 73.5%,#0d2b8e 73.7%,#0d2b8e 74.2%,#081657 74.6%,#091a65 75.1%,#0c298b 75.5%,#0b237f 75.7%,#081452 75.9%,#071045 76.2%,#0d2a8c 76.6%,#0c2a8b 77.7%,#000000 78.4%,#0c298a 78.8%,#0c2786 79.7%,#000000 79.9%,#000000 99.9%)"></div><div style="left:81.6px;top:295.00px;width:902.0px;height:1.90px;background:linear-gradient(90deg,#000000 0.1%,#000000 10.5%,#091c6d 10.8%,#0e319a 11.4%,#0d2d93 11.9%,#000000 12.3%,#08185e 12.7%,#07124c 13.0%,#000000 13.2%,#000000 13.4%,#07124a 13.6%,#081556 13.9%,#060e3e 14.3%,#000000 14.5%,#000000 15.0%,#071046 15.2%,#0e319a 15.4%,#0f36a4 16.3%,#081450 16.7%,#07124a 17.2%,#091b69 17.4%,#060e3f 18.1%,#000000 18.3%,#0d2b8d 19.0%,#0d2a8c 19.4%,#000000 19.8%,#000000 20.1%,#0e2e94 20.5%,#0c2786 21.6%,#091b69 21.8%,#08185e 22.7%,#07134e 22.9%,#000000 23.2%,#000000 27.4%,#07134e 27.6%,#39e39d 27.8%,#40e587 28.5%,#26d3d9 28.7%,#113aad 28.9%,#050a2d 29.4%,#000000 29.6%,#000000 30.9%,#4fe852 31.8%,#3ee48e 32.5%,#21b8dc 33.6%,#071147 34.0%,#000000 34.3%,#000000 34.5%,#070f42 34.7%,#000000 34.9%,#000000 73.1%,#0b2480 73.5%,#0d2c90 75.5%,#0d2c90 75.7%,#060d3b 76.2%,#0d2c8f 76.8%,#0b2581 77.9%,#081657 78.4%,#081657 78.6%,#0d2b8e 79.0%,#0c2888 79.7%,#000000 80.2%,#000000 99.9%)"></div><div style="left:81.6px;top:296.50px;width:902.0px;height:1.90px;background:linear-gradient(90deg,#000000 0.1%,#000000 10.3%,#0a1f75 10.5%,#0f35a1 11.9%,#000000 12.3%,#000000 13.2%,#091c6a 13.4%,#0f36a3 13.6%,#0e329c 14.3%,#000000 14.7%,#000000 15.2%,#091c6a 15.6%,#0c2888 16.1%,#081452 16.5%,#000000 16.7%,#000000 19.0%,#081556 19.2%,#08185f 19.4%,#060e3e 20.1%,#0e3099 20.5%,#0d2b8d 21.4%,#08185f 21.6%,#000000 21.8%,#000000 22.1%,#071149 22.3%,#0b237d 22.7%,#071350 23.2%,#000000 23.4%,#000000 27.4%,#081452 27.6%,#20afdd 27.8%,#34e2ae 28.7%,#2fe1c1 28.9%,#070f43 29.4%,#000000 29.6%,#000000 30.5%,#070f42 30.7%,#081555 30.9%,#113db1 31.2%,#5de949 31.4%,#4ee856 31.8%,#1ea2df 32.3%,#1a85d7 33.1%,#2ce1cb 33.6%,#2be1cf 33.8%,#0b2583 34.0%,#000000 34.3%,#000000 72.4%,#081452 72.6%,#091960 72.8%,#0e2f96 73.1%,#0e2f96 73.9%,#081554 74.4%,#081554 74.8%,#0e2e94 75.7%,#0c298b 75.9%,#000000 76.6%,#000000 77.3%,#08185e 77.5%,#091c6a 77.9%,#071147 78.4%,#000000 78.6%,#000000 81.3%,#081659 81.5%,#0b237e 81.7%,#081659 82.2%,#000000 82.4%,#000000 99.9%)"></div><div style="left:81.6px;top:298.00px;width:902.0px;height:1.90px;background:linear-gradient(90deg,#000000 0.1%,#000000 10.3%,#091d70 10.5%,#1036a4 11.4%,#1037a7 11.9%,#000000 12.3%,#000000 12.7%,#0c2785 13.2%,#1039aa 13.6%,#1039ab 14.1%,#08185d 14.5%,#000000 14.7%,#000000 15.2%,#071044 15.4%,#0a1e72 16.1%,#081555 16.5%,#000000 16.7%,#000000 19.2%,#07124d 19.4%,#091a63 20.1%,#0f339e 20.5%,#0e2e95 21.2%,#0a2079 21.4%,#000000 21.6%,#000000 22.1%,#081658 22.3%,#0b2582 22.7%,#0a1e70 23.2%,#000000 23.4%,#000000 27.4%,#0c2684 27.8%,#1b8ddb 28.5%,#1980d5 28.7%,#66e944 28.9%,#44e67a 29.2%,#0a227b 29.4%,#000000 29.6%,#000000 30.5%,#060e3d 30.7%,#0c2989 30.9%,#49e769 31.4%,#26d2da 31.6%,#134cbd 31.8%,#0c298a 32.3%,#0d2d91 33.4%,#1244ba 33.6%,#25cdda 33.8%,#155cc5 34.0%,#071044 34.3%,#000000 34.5%,#000000 72.4%,#08185e 72.6%,#0e319b 73.1%,#0e2f96 73.7%,#091963 73.9%,#000000 74.2%,#000000 75.5%,#081452 75.7%,#08175a 75.9%,#000000 76.2%,#000000 81.5%,#08185e 81.7%,#081658 81.9%,#000000 82.2%,#000000 99.9%)"></div><div style="left:81.6px;top:299.50px;width:902.0px;height:1.90px;background:linear-gradient(90deg,#000000 0.1%,#000000 9.4%,#0c298a 9.6%,#0f34a1 11.2%,#1036a5 11.9%,#070f40 12.1%,#000000 12.3%,#000000 12.7%,#0c2787 13.2%,#0b2480 13.4%,#0f34a1 13.6%,#0d2b8e 14.1%,#070f40 14.3%,#000000 14.5%,#000000 15.2%,#07134e 15.4%,#0a217a 15.9%,#08175c 16.3%,#000000 16.5%,#000000 17.6%,#091961 17.8%,#0e2f95 18.3%,#0a1e73 19.0%,#07124d 19.2%,#060e3f 19.6%,#000000 19.8%,#000000 20.3%,#091d70 20.5%,#0c2889 21.0%,#081555 21.4%,#000000 21.6%,#000000 21.8%,#0a1f74 22.3%,#0b2583 22.9%,#091961 23.2%,#000000 23.4%,#000000 27.6%,#08175c 27.8%,#0c2989 28.7%,#2ae0d1 29.2%,#0f329d 29.4%,#060b34 29.6%,#000000 29.8%,#000000 30.5%,#113cb1 30.9%,#27ddd8 31.2%,#1456c2 31.4%,#0b227c 31.8%,#07134f 32.5%,#07134f 33.4%,#0e2f97 33.8%,#24c6db 34.0%,#0a1e73 34.3%,#000000 34.5%,#000000 34.7%,#070f40 34.9%,#000000 35.1%,#000000 72.4%,#0a2078 72.6%,#0d2d93 72.8%,#0a227b 73.3%,#000000 73.7%,#000000 77.5%,#071044 77.7%,#000000 77.9%,#000000 78.8%,#08185e 79.0%,#0e3099 79.5%,#08175a 79.9%,#000000 80.2%,#000000 81.5%,#091c6c 81.7%,#0b2480 81.9%,#0a1f75 82.2%,#000000 82.6%,#000000 99.9%)"></div><div style="left:81.6px;top:301.00px;width:902.0px;height:1.90px;background:linear-gradient(90deg,#000000 0.1%,#000000 9.0%,#0c298a 9.6%,#1037a6 11.2%,#0f35a2 11.6%,#000000 12.1%,#000000 12.5%,#070f40 12.7%,#091d6e 13.2%,#07124a 13.4%,#070f43 13.9%,#081659 14.1%,#000000 14.5%,#000000 15.2%,#081452 15.4%,#091d70 15.9%,#081657 16.1%,#000000 16.3%,#000000 16.7%,#081555 17.0%,#123fb5 17.4%,#113cb1 19.0%,#060d3c 19.4%,#000000 19.6%,#000000 20.5%,#081658 20.7%,#08175d 21.4%,#070f41 21.8%,#091a66 22.5%,#08185f 22.9%,#000000 23.4%,#000000 24.9%,#071046 25.2%,#070f40 25.6%,#000000 25.8%,#000000 27.6%,#060c37 27.8%,#071350 28.7%,#0f339e 29.2%,#1b8fdc 29.4%,#081555 29.6%,#000000 29.8%,#000000 30.3%,#0f34a0 30.7%,#33e2b3 30.9%,#24cada 31.2%,#0d2b8e 31.4%,#060d3b 32.0%,#000000 32.3%,#000000 33.1%,#0a1e72 33.8%,#26d5d9 34.0%,#07124a 34.5%,#000000 34.7%,#000000 72.2%,#0d2d91 72.6%,#0e329b 72.8%,#091c6b 73.1%,#000000 73.3%,#000000 77.5%,#07124a 77.7%,#000000 77.9%,#000000 78.6%,#091b69 79.0%,#0f339f 79.5%,#0b2583 80.6%,#000000 81.0%,#000000 81.3%,#0b227d 81.7%,#0a1f74 82.4%,#071045 82.8%,#000000 83.0%,#000000 99.9%)"></div><div style="left:81.6px;top:302.50px;width:902.0px;height:1.90px;background:linear-gradient(90deg,#000000 0.1%,#000000 7.4%,#0d2d93 7.6%,#0d2c90 8.3%,#07124c 8.8%,#000000 9.0%,#000000 9.2%,#0a227c 9.6%,#113aad 11.2%,#081656 11.6%,#000000 11.9%,#000000 12.1%,#1243b9 12.7%,#1345ba 13.4%,#0c298b 13.9%,#1348bc 15.2%,#1345ba 16.1%,#0a217a 16.3%,#0c2888 16.7%,#1348bc 17.0%,#123fb7 19.0%,#000000 19.6%,#000000 21.8%,#07124a 22.1%,#0a1e72 23.2%,#071148 23.6%,#000000 23.8%,#000000 24.9%,#071044 25.2%,#07124a 26.1%,#000000 26.3%,#000000 26.5%,#070f41 26.7%,#08175b 26.9%,#060e40 27.8%,#060e3d 28.3%,#000000 28.5%,#000000 28.7%,#0a1f73 29.2%,#1fa7de 29.4%,#0c2787 29.6%,#060d3b 29.8%,#000000 30.0%,#0e3098 30.5%,#2ae0d1 30.7%,#44e677 30.9%,#113cb1 31.2%,#081658 31.4%,#000000 31.8%,#000000 33.6%,#070f42 33.8%,#1038a9 34.0%,#34e2b0 34.3%,#0a1f75 34.5%,#000000 34.7%,#000000 44.9%,#081453 45.1%,#071147 45.6%,#000000 45.8%,#000000 49.1%,#071149 49.3%,#081452 50.2%,#000000 50.4%,#000000 72.2%,#07124a 72.4%,#070f42 72.6%,#000000 72.8%,#000000 77.9%,#0a1e73 78.2%,#0f339e 78.6%,#071149 79.5%,#0c2989 79.9%,#0a2078 82.2%,#091c6b 82.8%,#000000 83.0%,#000000 99.9%)"></div><div style="left:81.6px;top:304.00px;width:902.0px;height:1.90px;background:linear-gradient(90deg,#000000 0.1%,#000000 6.5%,#0a1f73 6.8%,#0d2e93 7.6%,#0d2c91 8.5%,#000000 9.2%,#000000 9.4%,#091961 9.6%,#0d2d92 10.5%,#091b69 11.0%,#0a217a 11.9%,#134cbd 12.7%,#1240b8 13.6%,#0d2d91 14.1%,#1450bf 14.7%,#1244ba 19.2%,#091b67 19.8%,#0e2f95 20.5%,#091a65 20.7%,#000000 21.0%,#000000 22.3%,#081553 22.5%,#0a1e73 23.4%,#091c6a 23.6%,#000000 24.1%,#000000 24.3%,#071148 24.5%,#071149 24.7%,#091d6f 25.2%,#081451 25.8%,#091d70 26.9%,#070f41 27.8%,#000000 28.0%,#000000 28.9%,#060d3a 29.2%,#0c2989 29.4%,#1b93de 29.6%,#0a1f74 29.8%,#08175c 30.0%,#0e319b 30.3%,#27d9d9 30.5%,#6ce941 30.7%,#1455c2 30.9%,#000000 31.4%,#000000 33.8%,#091c6c 34.0%,#34e2ae 34.3%,#071046 34.7%,#000000 34.9%,#000000 42.9%,#081451 43.1%,#060e40 43.8%,#000000 44.0%,#060d3c 44.2%,#081452 44.7%,#081450 45.6%,#060d3b 45.8%,#000000 46.0%,#000000 48.9%,#070f43 49.1%,#081657 49.8%,#060e3f 50.2%,#000000 50.4%,#000000 77.7%,#0b2581 78.2%,#1039aa 78.8%,#0f35a2 79.7%,#0a2076 80.4%,#0c298a 81.5%,#0b2683 82.8%,#000000 83.0%,#000000 99.9%)"></div><div style="left:81.6px;top:305.50px;width:902.0px;height:1.90px;background:linear-gradient(90deg,#000000 0.1%,#000000 1.7%,#060e3e 1.9%,#060e3f 2.1%,#000000 2.3%,#000000 5.2%,#070f42 5.4%,#07124c 5.7%,#000000 5.9%,#000000 6.5%,#071148 6.8%,#0a1e70 8.1%,#070f41 8.8%,#000000 9.0%,#000000 9.9%,#060e40 10.1%,#000000 10.3%,#000000 10.8%,#134abd 11.4%,#1345ba 13.0%,#000000 13.9%,#000000 14.1%,#1559c3 14.7%,#155bc4 15.9%,#081451 16.5%,#000000 16.7%,#070f40 17.0%,#000000 17.2%,#060e3f 17.4%,#000000 17.6%,#000000 18.7%,#08175a 19.0%,#1345ba 20.5%,#07134e 21.4%,#000000 21.6%,#000000 22.5%,#07124a 22.7%,#091b69 23.2%,#071045 23.8%,#000000 24.1%,#000000 24.3%,#081657 24.5%,#0c2786 24.9%,#0a1f74 26.3%,#060d3b 26.7%,#000000 26.9%,#000000 27.2%,#060e3e 27.4%,#070f43 27.6%,#000000 27.8%,#000000 29.2%,#091c6d 29.4%,#26d2da 29.6%,#113eb4 29.8%,#0d2d91 30.0%,#1a88d9 30.3%,#4ce75c 30.5%,#0c2787 30.9%,#07134d 31.2%,#071146 31.6%,#000000 31.8%,#000000 33.8%,#060d3c 34.0%,#134dbe 34.3%,#47e66d 34.5%,#0c2889 34.7%,#060c38 34.9%,#000000 35.1%,#000000 44.2%,#081453 44.5%,#07124d 45.6%,#000000 45.8%,#000000 47.3%,#071146 47.6%,#081656 48.7%,#000000 48.9%,#000000 78.6%,#091963 78.8%,#1039a9 79.3%,#0d2d93 79.9%,#091b68 80.4%,#0b237e 80.8%,#08185f 81.3%,#091d6f 81.9%,#0d2b8e 82.6%,#0d2b8e 82.8%,#000000 83.0%,#000000 99.9%)"></div><div style="left:81.6px;top:307.00px;width:902.0px;height:1.90px;background:linear-gradient(90deg,#0b2684 0.1%,#1037a7 0.3%,#1037a5 1.0%,#091961 1.4%,#000000 1.7%,#000000 8.1%,#060e3d 8.3%,#091b67 8.8%,#060e3f 9.4%,#000000 9.6%,#000000 10.5%,#134dbe 11.2%,#155cc5 11.9%,#0b237f 12.3%,#08185e 13.0%,#000000 13.2%,#000000 14.3%,#0f329d 14.7%,#1663c8 15.4%,#0a1f75 16.1%,#000000 16.3%,#000000 19.2%,#070f41 19.4%,#060e3f 19.6%,#000000 19.8%,#000000 20.7%,#081450 21.0%,#091c6b 21.4%,#000000 21.6%,#000000 22.5%,#0c2786 22.9%,#0b247f 23.4%,#071149 23.8%,#000000 24.1%,#000000 24.7%,#08165a 24.9%,#0c2889 25.2%,#0b247f 26.1%,#000000 26.5%,#000000 29.2%,#081554 29.4%,#92eb2d 29.8%,#24c9db 30.0%,#49e766 30.3%,#24c6db 30.5%,#0e319b 30.7%,#081450 30.9%,#060d3b 32.0%,#000000 32.3%,#071045 32.5%,#071045 32.9%,#000000 33.1%,#000000 34.0%,#0a217a 34.3%,#34e2ae 34.5%,#1243b9 34.7%,#000000 35.1%,#000000 42.2%,#07134e 42.5%,#060d3d 42.9%,#000000 43.1%,#000000 44.5%,#070f42 44.7%,#081555 45.3%,#071046 45.6%,#000000 45.8%,#000000 46.7%,#071148 46.9%,#081659 48.2%,#060e3f 48.7%,#000000 48.9%,#000000 73.7%,#091d6e 73.9%,#0a227b 74.2%,#081658 74.4%,#000000 74.6%,#000000 77.3%,#0d2c8f 77.7%,#0f34a0 77.9%,#0b2582 78.2%,#000000 78.4%,#000000 79.7%,#060e3e 79.9%,#060e3e 81.0%,#000000 81.3%,#000000 81.7%,#070f42 81.9%,#08175c 82.2%,#0d2e93 82.4%,#0d2e93 82.8%,#000000 83.0%,#000000 99.9%)"></div><div style="left:81.6px;top:308.50px;width:902.0px;height:1.90px;background:linear-gradient(90deg,#091b68 0.1%,#0b2683 1.0%,#0a217b 1.2%,#081554 1.4%,#000000 1.7%,#000000 2.3%,#081451 2.5%,#0a1e70 3.0%,#071147 3.9%,#000000 4.1%,#000000 7.6%,#070f42 7.9%,#0a217a 8.3%,#0f34a0 8.5%,#0e319a 9.4%,#000000 9.9%,#000000 10.5%,#0e2f95 10.8%,#1557c2 11.2%,#1662c7 12.3%,#0a1f74 13.0%,#000000 13.2%,#000000 13.6%,#060d3c 13.9%,#081658 14.7%,#0a217a 15.4%,#071148 15.9%,#000000 16.1%,#000000 17.2%,#070f42 17.4%,#0a1e73 17.8%,#000000 18.3%,#000000 19.4%,#091a63 19.6%,#091a63 19.8%,#000000 20.3%,#000000 21.0%,#08175b 21.2%,#0c2786 21.4%,#0a1e70 21.6%,#000000 22.1%,#000000 22.5%,#091a65 22.9%,#0a217b 23.4%,#081657 23.8%,#000000 24.1%,#000000 25.2%,#081452 25.4%,#081657 25.8%,#000000 26.1%,#000000 27.2%,#08175a 27.6%,#081659 28.0%,#070f42 28.3%,#000000 28.5%,#000000 28.9%,#071149 29.2%,#081553 29.4%,#123eb4 29.6%,#e0f004 29.8%,#b6ed1a 30.0%,#33e2b4 30.3%,#0e2f95 30.5%,#000000 30.9%,#071149 31.2%,#060d3d 31.4%,#000000 31.6%,#000000 32.3%,#081553 32.5%,#081553 33.4%,#060e3e 33.6%,#000000 33.8%,#000000 34.0%,#060d3c 34.3%,#1036a4 34.5%,#25ceda 34.7%,#0c2888 34.9%,#000000 35.1%,#000000 42.0%,#081451 42.2%,#071149 43.3%,#000000 43.6%,#000000 44.7%,#070f43 44.9%,#081556 45.3%,#060e3f 45.6%,#000000 45.8%,#000000 46.5%,#060d3d 46.7%,#081450 47.1%,#07134f 48.0%,#000000 48.2%,#000000 66.4%,#07134f 66.6%,#081659 67.7%,#000000 68.0%,#000000 73.3%,#071148 73.5%,#0a217a 74.2%,#07124a 74.6%,#071045 75.3%,#000000 75.5%,#000000 77.3%,#07134d 77.5%,#1346bb 77.7%,#113db3 78.4%,#000000 78.8%,#000000 79.7%,#091962 80.2%,#08185f 80.6%,#000000 80.8%,#000000 82.4%,#0e3199 82.8%,#000000 83.0%,#000000 99.9%)"></div><div style="left:81.6px;top:310.00px;width:902.0px;height:1.90px;background:linear-gradient(90deg,#000000 0.1%,#000000 2.3%,#091963 2.8%,#07124c 3.2%,#000000 3.4%,#060e3e 3.7%,#081555 4.1%,#070f41 4.3%,#000000 4.5%,#000000 5.4%,#0a2079 5.7%,#1037a6 5.9%,#0f34a0 6.3%,#081658 6.5%,#071148 6.8%,#1037a6 7.2%,#1038a8 9.2%,#0c2887 9.4%,#060d3c 9.6%,#000000 9.9%,#000000 10.3%,#1345ba 10.8%,#1872cf 12.5%,#1453c1 13.4%,#0f35a1 13.6%,#1240b8 15.0%,#091d6e 15.4%,#000000 15.6%,#000000 17.4%,#081659 17.6%,#0c2888 17.8%,#0a1e71 18.1%,#0b2480 18.3%,#08175a 18.5%,#081451 18.7%,#000000 19.0%,#071044 19.2%,#081451 19.4%,#1240b8 19.6%,#1667ca 20.1%,#0f329d 20.5%,#000000 21.0%,#081554 21.2%,#144dbe 21.4%,#1038a9 22.1%,#0a1e70 22.3%,#000000 22.5%,#000000 22.7%,#0f339d 23.4%,#0a1f74 24.3%,#000000 24.7%,#000000 25.6%,#060d3b 25.8%,#08175b 26.5%,#0b2481 26.9%,#091963 27.8%,#091963 29.6%,#25d0da 30.0%,#0f329d 30.3%,#000000 30.7%,#000000 32.3%,#081657 32.5%,#081451 33.4%,#000000 33.6%,#000000 34.3%,#0a1f73 34.5%,#35e3ad 34.7%,#25ccda 34.9%,#000000 35.1%,#000000 42.2%,#060d3b 42.5%,#060d3b 43.1%,#000000 43.3%,#000000 44.7%,#071148 44.9%,#060e3e 45.3%,#000000 45.6%,#000000 47.6%,#071045 47.8%,#000000 48.0%,#000000 51.6%,#060d3c 51.8%,#081657 52.7%,#081657 52.9%,#000000 53.1%,#000000 54.9%,#081450 55.1%,#060d3c 55.3%,#000000 55.5%,#000000 56.2%,#071147 56.4%,#081659 57.8%,#07134d 58.0%,#000000 58.2%,#000000 59.5%,#071044 59.8%,#071046 60.0%,#000000 60.2%,#000000 60.6%,#060e3e 60.9%,#081450 61.5%,#071043 61.8%,#000000 62.0%,#000000 63.7%,#071046 64.0%,#08175b 65.1%,#081450 65.7%,#000000 66.0%,#000000 70.0%,#07124a 70.2%,#071044 70.6%,#000000 70.8%,#000000 76.4%,#07124b 76.6%,#000000 76.8%,#000000 77.3%,#070f42 77.5%,#0e2f95 77.7%,#144fbf 77.9%,#144fbf 78.2%,#000000 78.8%,#000000 79.0%,#0e3099 79.5%,#1036a5 79.9%,#0f349f 80.6%,#091c6b 80.8%,#000000 81.0%,#000000 82.2%,#071147 82.4%,#08185e 82.6%,#0f34a0 82.8%,#000000 83.0%,#000000 99.9%)"></div><div style="left:81.6px;top:311.50px;width:902.0px;height:1.90px;background:linear-gradient(90deg,#081554 0.1%,#081555 0.3%,#060d3c 0.6%,#071149 0.8%,#000000 1.0%,#071149 1.2%,#000000 1.4%,#000000 3.0%,#060e3d 3.2%,#000000 3.4%,#081555 3.7%,#0b237e 4.1%,#070f40 4.8%,#07124a 5.2%,#113bae 5.7%,#103aac 6.3%,#0d2e93 6.5%,#113caf 7.9%,#0e319b 8.1%,#08175c 8.3%,#091c6b 9.0%,#08175b 9.2%,#000000 9.4%,#000000 11.6%,#1039ab 12.1%,#197cd3 12.3%,#197ed4 13.2%,#000000 13.9%,#000000 14.1%,#113bae 14.5%,#1450bf 15.0%,#0b237e 15.2%,#000000 15.4%,#000000 17.2%,#0f349f 17.4%,#176dcc 17.8%,#1344ba 18.1%,#1873cf 18.5%,#1871ce 20.1%,#0b2581 20.7%,#07124b 21.0%,#091963 21.2%,#123eb4 21.4%,#144ebe 22.1%,#113eb3 22.3%,#091c6a 22.5%,#07124b 22.7%,#07124a 22.9%,#113bae 23.4%,#0f36a3 24.7%,#091b67 24.9%,#000000 25.2%,#000000 25.8%,#091b67 26.1%,#0d2c90 26.3%,#091d6e 27.6%,#000000 28.0%,#000000 28.5%,#08175b 28.7%,#08175b 29.6%,#1037a5 30.0%,#050a2c 30.5%,#000000 30.7%,#000000 32.0%,#071148 32.3%,#081555 32.9%,#060d3b 33.6%,#08175b 34.3%,#08175b 34.5%,#1770ce 34.7%,#77ea3c 34.9%,#08175a 35.1%,#000000 35.4%,#000000 36.3%,#05092b 36.5%,#000000 36.7%,#000000 44.2%,#070f42 44.5%,#070f40 44.9%,#000000 45.1%,#000000 46.7%,#071044 46.9%,#091961 47.6%,#07134e 48.0%,#000000 48.2%,#000000 49.1%,#07124c 49.3%,#091a64 49.6%,#08175c 49.8%,#000000 50.0%,#000000 51.6%,#071148 51.8%,#081451 53.5%,#060d3c 54.0%,#07134f 54.7%,#060d3d 54.9%,#000000 55.1%,#000000 56.0%,#071045 56.2%,#081659 56.9%,#071148 57.8%,#000000 58.0%,#000000 58.6%,#060d3c 58.9%,#08175a 60.0%,#070f41 61.1%,#08175b 61.3%,#060d3c 62.0%,#000000 62.2%,#000000 64.2%,#07124b 64.4%,#08185d 65.7%,#000000 66.0%,#000000 68.2%,#070f41 68.4%,#081658 69.3%,#081451 69.7%,#08185e 71.1%,#000000 71.5%,#000000 72.6%,#071046 72.8%,#0f339e 73.3%,#0e2f95 73.7%,#07124a 74.2%,#000000 74.4%,#000000 76.2%,#07124c 76.4%,#091b67 76.6%,#071044 77.1%,#000000 77.3%,#0d2c90 77.9%,#08175a 78.8%,#091c6b 79.0%,#1556c2 79.5%,#0f35a2 80.4%,#000000 81.0%,#000000 81.9%,#070f41 82.2%,#0a1f74 82.8%,#000000 83.0%,#000000 99.9%)"></div><div style="left:81.6px;top:313.00px;width:902.0px;height:1.90px;background:linear-gradient(90deg,#1242b9 0.1%,#1347bb 1.2%,#000000 1.7%,#000000 3.4%,#08185f 3.7%,#0e3098 4.3%,#1240b8 7.2%,#113cb0 7.4%,#08185d 7.6%,#05092c 7.9%,#071044 8.5%,#050b33 8.8%,#000000 9.0%,#000000 9.6%,#08175a 9.9%,#071044 10.1%,#000000 10.3%,#000000 11.6%,#0a1f75 11.9%,#176acb 12.3%,#176ecd 12.7%,#0f34a0 13.0%,#000000 13.2%,#000000 16.1%,#081453 16.3%,#0b237e 16.5%,#0c298a 16.7%,#1a8ada 17.2%,#1a87d8 17.8%,#113db3 18.1%,#1982d6 19.0%,#197fd5 19.4%,#0c298a 19.8%,#0c2786 20.1%,#1878d1 20.5%,#1559c3 21.4%,#113db3 21.6%,#1455c1 22.3%,#0c2a8c 23.2%,#123fb6 23.6%,#1039a9 24.9%,#0c298a 25.2%,#000000 25.4%,#000000 26.1%,#091a65 26.3%,#0e2e95 26.5%,#0d2a8c 27.2%,#000000 27.6%,#000000 29.2%,#071148 29.4%,#091c6b 30.0%,#07134f 31.8%,#060d3c 32.0%,#000000 32.3%,#000000 32.9%,#070f41 33.1%,#08185f 34.0%,#08185f 34.5%,#0d2c90 34.7%,#20aede 34.9%,#08185f 35.1%,#08175c 35.6%,#060d3d 35.8%,#060d3b 36.7%,#050a2d 36.9%,#000000 37.1%,#000000 46.7%,#07124c 46.9%,#091a65 47.3%,#081658 47.8%,#000000 48.0%,#000000 49.1%,#08175d 49.3%,#091b69 50.2%,#000000 50.4%,#000000 52.4%,#060d3c 52.7%,#000000 52.9%,#000000 56.2%,#071147 56.4%,#081453 57.1%,#060e3d 57.8%,#000000 58.0%,#000000 58.9%,#060d3c 59.1%,#081553 59.8%,#071043 60.9%,#08175a 61.3%,#060e3e 62.0%,#000000 62.2%,#000000 64.9%,#081657 65.1%,#08185f 66.0%,#07124b 66.2%,#000000 66.4%,#000000 67.7%,#060d3c 68.0%,#000000 68.2%,#071148 68.4%,#08175b 69.3%,#000000 69.7%,#000000 70.6%,#07124c 70.8%,#070f40 71.1%,#000000 71.3%,#000000 72.2%,#1666c9 72.6%,#1665c9 73.7%,#091961 74.2%,#000000 74.4%,#000000 78.2%,#081658 78.4%,#155cc5 79.3%,#113baf 79.9%,#000000 80.6%,#000000 81.0%,#091a65 81.3%,#0e319a 81.5%,#1037a7 81.7%,#000000 82.4%,#000000 99.9%)"></div><div style="left:81.6px;top:314.50px;width:902.0px;height:1.90px;background:linear-gradient(90deg,#1662c7 0.1%,#165fc6 0.8%,#0a2077 1.2%,#000000 1.7%,#071148 1.9%,#000000 2.1%,#000000 3.7%,#091a66 3.9%,#1038a8 4.3%,#0b2583 5.0%,#134dbe 6.3%,#144ebe 7.0%,#000000 7.4%,#000000 7.6%,#081554 8.1%,#091b69 8.3%,#071149 8.8%,#000000 9.0%,#000000 11.0%,#071044 11.2%,#1b91dd 11.6%,#1b93de 12.5%,#091a64 13.0%,#000000 13.2%,#000000 15.2%,#155cc5 15.9%,#1c98e0 16.1%,#1242b9 17.6%,#07124d 18.1%,#060d3b 18.3%,#0d2b8f 18.7%,#1038a7 19.0%,#0e2e95 19.2%,#08185f 19.4%,#000000 19.6%,#000000 20.1%,#1a83d7 20.5%,#123fb6 24.7%,#071350 25.4%,#000000 25.6%,#000000 26.7%,#060e3f 26.9%,#000000 27.2%,#000000 29.6%,#071046 29.8%,#091a64 30.5%,#08175a 31.2%,#071148 31.4%,#000000 31.6%,#070f40 31.8%,#000000 32.0%,#000000 33.4%,#07124b 33.6%,#091962 34.5%,#081657 34.7%,#0e2f96 34.9%,#07124a 35.1%,#071147 35.4%,#091b68 35.6%,#07134e 36.7%,#050a2c 37.1%,#000000 37.4%,#000000 45.3%,#060d3c 45.6%,#000000 45.8%,#000000 49.3%,#07134e 49.6%,#091d6e 49.8%,#091c6c 50.2%,#000000 50.7%,#000000 52.0%,#08175c 52.2%,#07124a 53.1%,#000000 53.3%,#000000 58.2%,#060e3f 58.4%,#08185f 59.5%,#071045 60.2%,#000000 60.4%,#000000 61.5%,#081554 61.8%,#091960 62.2%,#07124a 62.4%,#000000 62.6%,#000000 63.5%,#070f40 63.7%,#060d3b 64.2%,#000000 64.4%,#000000 64.9%,#071044 65.1%,#091962 65.3%,#081657 66.6%,#060e3e 66.9%,#08185e 67.7%,#07124b 68.6%,#000000 68.8%,#000000 72.0%,#0a227b 72.4%,#1770ce 72.6%,#1666c9 73.5%,#0c2786 73.7%,#08175c 73.9%,#000000 74.2%,#000000 78.2%,#1349bc 79.0%,#1661c7 79.7%,#0b237f 79.9%,#000000 80.2%,#000000 81.0%,#0e3098 81.3%,#123fb6 81.7%,#0f339d 82.2%,#000000 82.4%,#000000 99.9%)"></div><div style="left:81.6px;top:316.00px;width:902.0px;height:1.90px;background:linear-gradient(90deg,#0f35a1 0.1%,#113eb4 0.3%,#0b2480 1.2%,#060d3b 1.9%,#000000 2.1%,#000000 3.7%,#08175a 3.9%,#1244ba 4.3%,#0a2179 5.0%,#070f41 5.7%,#000000 5.9%,#000000 6.1%,#091962 6.3%,#0d2b8e 6.5%,#0f35a2 7.0%,#0c2684 7.4%,#071044 7.6%,#1039aa 8.3%,#071045 9.0%,#071046 9.2%,#000000 9.4%,#000000 11.0%,#071148 11.2%,#1877d1 11.6%,#1d9ddf 11.9%,#123fb7 12.3%,#091d6d 12.5%,#07134e 12.7%,#000000 13.0%,#000000 13.4%,#060d3d 13.6%,#000000 13.9%,#000000 14.1%,#1a84d7 14.7%,#1ea2df 16.3%,#197ad2 16.7%,#091a64 17.2%,#000000 17.4%,#000000 17.8%,#0b2480 18.1%,#176ecd 18.5%,#113db2 18.7%,#000000 19.2%,#000000 20.1%,#1556c2 20.5%,#1b8bda 20.7%,#155bc4 23.2%,#0d2a8c 23.4%,#060d3b 24.3%,#000000 24.5%,#000000 25.2%,#091b69 25.4%,#0a1e72 25.8%,#000000 26.3%,#000000 26.9%,#060e3d 27.2%,#000000 27.4%,#000000 29.2%,#060d3d 29.4%,#091b69 30.9%,#081451 31.2%,#000000 31.4%,#000000 32.9%,#060e3e 33.1%,#000000 33.4%,#060e3d 33.6%,#000000 33.8%,#000000 34.7%,#081451 34.9%,#060e3f 35.1%,#0c2684 36.0%,#091a66 36.7%,#050a2d 37.4%,#000000 37.6%,#000000 47.8%,#081657 48.2%,#081658 48.7%,#070f42 48.9%,#000000 49.1%,#000000 50.0%,#071044 50.2%,#081658 50.4%,#070f43 50.9%,#000000 51.1%,#000000 52.0%,#091a64 52.4%,#081453 53.3%,#060e40 53.5%,#000000 53.8%,#071045 54.0%,#070f43 54.4%,#000000 54.7%,#071044 54.9%,#000000 55.1%,#070f41 55.3%,#000000 55.5%,#000000 58.6%,#071045 58.9%,#091962 59.3%,#08185e 61.1%,#071148 61.3%,#091a65 62.4%,#070f43 63.3%,#081657 63.7%,#060e40 64.6%,#000000 64.9%,#000000 65.1%,#060e3f 65.3%,#07124d 66.0%,#091963 66.4%,#091b69 68.2%,#07124b 68.6%,#000000 68.8%,#000000 69.7%,#060e3d 70.0%,#07124b 70.4%,#000000 70.6%,#000000 72.2%,#0f329d 72.6%,#0b2481 72.8%,#0d2c90 73.1%,#091d6e 73.3%,#0a1f74 73.5%,#060e3f 73.7%,#08175c 73.9%,#071044 74.2%,#081450 74.4%,#000000 74.6%,#000000 76.2%,#071147 76.4%,#091960 76.6%,#000000 77.1%,#000000 78.8%,#113bad 79.3%,#176bcc 79.5%,#1661c7 79.7%,#000000 80.2%,#000000 81.3%,#0b2480 81.5%,#1348bc 81.9%,#1349bc 82.8%,#000000 83.0%,#000000 99.9%)"></div><div style="left:81.6px;top:317.50px;width:902.0px;height:1.90px;background:linear-gradient(90deg,#081555 0.1%,#07134f 0.6%,#1038a8 1.0%,#1a83d7 1.2%,#1871ce 1.4%,#0d2e93 1.7%,#000000 1.9%,#000000 3.7%,#1451c0 4.3%,#0f34a0 4.8%,#091a65 5.0%,#000000 5.2%,#000000 6.8%,#081451 7.0%,#0f339e 7.4%,#0c298a 7.6%,#1980d5 8.3%,#0e2e94 8.8%,#000000 9.2%,#000000 9.6%,#060e3f 9.9%,#0e2f96 10.1%,#1451c0 10.5%,#0b2480 10.8%,#08185d 11.0%,#000000 11.2%,#091d6f 11.4%,#1768ca 11.9%,#000000 12.5%,#000000 13.0%,#1453c0 13.6%,#091a64 14.3%,#1fa9de 15.0%,#1da0df 15.4%,#113db2 15.9%,#1037a7 16.1%,#1a88d9 16.5%,#176ecd 16.7%,#000000 17.2%,#000000 17.8%,#113bae 18.1%,#1d9edf 18.3%,#1981d6 18.5%,#000000 19.0%,#000000 19.6%,#0e2e94 20.1%,#0f339d 21.0%,#0a2077 21.4%,#1980d5 22.1%,#176dcd 22.9%,#123fb6 23.2%,#091a64 23.4%,#071147 23.6%,#071046 23.8%,#000000 24.1%,#000000 24.9%,#134bbd 25.4%,#1243b9 25.8%,#0d2b8f 26.1%,#060e3e 26.3%,#000000 26.5%,#000000 26.9%,#07124a 27.2%,#091c6c 27.6%,#091963 27.8%,#0a227b 28.0%,#081451 28.9%,#000000 29.2%,#000000 29.6%,#081451 29.8%,#091d6e 30.5%,#091d6e 31.2%,#08175b 31.4%,#000000 31.6%,#000000 32.3%,#07124c 32.5%,#091d6e 32.7%,#091a63 33.6%,#000000 33.8%,#000000 34.7%,#060e3f 34.9%,#113aad 36.0%,#0c2a8c 36.7%,#060d3d 37.4%,#000000 37.6%,#000000 38.5%,#07124b 38.7%,#000000 38.9%,#000000 44.2%,#07124a 44.5%,#000000 44.7%,#000000 46.7%,#070f42 46.9%,#060d3b 47.1%,#000000 47.3%,#000000 47.6%,#08175b 47.8%,#0a2076 48.4%,#0a1e71 48.9%,#071147 49.3%,#0a2179 50.0%,#091b69 51.6%,#000000 51.8%,#000000 52.4%,#060e3e 52.7%,#000000 52.9%,#000000 54.0%,#070f41 54.2%,#08185f 54.9%,#070f41 56.2%,#000000 56.4%,#000000 57.3%,#060e3f 57.5%,#000000 57.8%,#000000 58.6%,#071350 58.9%,#091b68 59.5%,#08175a 62.0%,#08175c 64.6%,#07134f 64.9%,#000000 65.1%,#000000 66.6%,#081659 66.9%,#091d6e 67.1%,#071148 67.5%,#060e3e 68.6%,#000000 68.8%,#000000 69.5%,#091c6b 70.0%,#091b68 70.8%,#070f40 71.3%,#000000 71.5%,#000000 72.2%,#0e3099 72.6%,#0c298a 73.7%,#1876d1 74.2%,#197ad2 74.4%,#08175b 75.1%,#08185f 75.5%,#1661c7 75.9%,#1979d2 76.2%,#0a2077 76.8%,#0b2581 77.3%,#1036a5 77.7%,#0b237e 77.9%,#000000 78.2%,#000000 78.8%,#0c298a 79.0%,#176bcb 79.3%,#1876d1 79.7%,#000000 80.6%,#000000 81.7%,#091c6b 81.9%,#1345ba 82.4%,#0a227c 82.8%,#000000 83.0%,#000000 99.9%)"></div><div style="left:81.6px;top:319.00px;width:902.0px;height:1.90px;background:linear-gradient(90deg,#000000 0.1%,#000000 1.0%,#0e3199 1.2%,#1558c3 1.4%,#1348bc 1.7%,#000000 2.1%,#000000 3.7%,#081452 3.9%,#091d70 4.8%,#060d3b 5.2%,#000000 5.4%,#000000 6.8%,#1039aa 7.4%,#1981d5 7.9%,#176dcc 8.1%,#1ea3df 8.3%,#1874d0 8.5%,#000000 9.2%,#000000 9.4%,#1982d6 9.9%,#1b90dc 11.0%,#0e2e94 11.2%,#20b2dd 11.9%,#1b8edb 12.3%,#091962 12.7%,#0e2e94 13.6%,#08175a 14.3%,#134abc 15.0%,#0e3098 15.4%,#07134e 15.6%,#070f41 16.1%,#0a227b 16.3%,#0d2c90 16.5%,#0c2684 16.7%,#000000 17.0%,#000000 17.8%,#071148 18.1%,#091b67 18.3%,#000000 18.5%,#000000 19.2%,#144ebe 19.6%,#1c9be0 19.8%,#1c96df 20.1%,#0a1f76 20.5%,#081659 21.0%,#08175b 21.4%,#0e2f96 21.8%,#176ccc 22.1%,#197bd3 22.9%,#000000 23.4%,#000000 23.8%,#081657 24.1%,#091961 24.3%,#0c2a8b 24.5%,#0c2989 24.9%,#155ac4 25.4%,#134dbe 26.1%,#000000 26.7%,#000000 27.8%,#07134f 28.0%,#091963 28.5%,#07124b 28.9%,#000000 29.2%,#000000 29.6%,#07124c 29.8%,#091d70 30.0%,#0a1f73 31.6%,#07124a 32.0%,#000000 32.3%,#07124a 32.5%,#0a1f73 33.1%,#091a65 33.6%,#000000 33.8%,#000000 34.5%,#0d2b8e 35.1%,#1663c8 36.3%,#0d2e93 36.9%,#060d3a 37.6%,#000000 37.8%,#000000 38.2%,#070f42 38.5%,#071046 38.9%,#000000 39.1%,#000000 46.5%,#071045 46.7%,#08175c 47.6%,#0a227c 47.8%,#0a1f75 48.4%,#081453 48.7%,#000000 48.9%,#000000 49.1%,#0b237f 49.6%,#0a2077 51.8%,#08185d 52.0%,#000000 52.2%,#000000 55.3%,#070f43 55.5%,#091a65 56.0%,#070f43 56.7%,#08185d 57.3%,#07134d 57.5%,#000000 57.8%,#000000 58.6%,#070f42 58.9%,#07124a 59.5%,#091d6e 60.2%,#091a65 61.8%,#000000 62.2%,#070f43 62.4%,#08175d 62.9%,#0a1e72 64.6%,#071148 65.1%,#000000 65.3%,#000000 66.6%,#0a1e72 66.9%,#091c6b 67.3%,#071046 67.5%,#070f41 67.7%,#000000 68.0%,#000000 68.2%,#060d3c 68.4%,#000000 68.6%,#000000 68.8%,#0a1f75 69.3%,#0a1f75 70.2%,#071046 70.6%,#071147 70.8%,#000000 71.1%,#000000 72.4%,#091d6f 72.8%,#1b8ddb 73.9%,#1b8cda 75.9%,#091b69 76.6%,#0a1e71 77.1%,#0c2685 77.5%,#091b67 77.7%,#000000 77.9%,#000000 78.6%,#091b67 78.8%,#1036a4 79.0%,#1240b8 79.3%,#060e3d 80.4%,#060e40 81.0%,#081451 81.3%,#0e3199 81.5%,#165fc6 81.9%,#1347bb 82.4%,#000000 82.8%,#000000 99.9%)"></div><div style="left:81.6px;top:320.50px;width:902.0px;height:1.90px;background:linear-gradient(90deg,#081658 0.1%,#081556 0.8%,#1fabde 1.7%,#1c94de 2.3%,#0a1e73 3.0%,#0a1e71 3.9%,#07134f 4.3%,#081555 4.5%,#0b247f 4.8%,#1b90dc 5.2%,#1d9ce0 5.7%,#081657 6.3%,#071149 7.0%,#091961 7.2%,#113cb0 7.4%,#1242b9 7.9%,#1faade 8.3%,#1982d6 8.5%,#081452 9.0%,#070f42 9.2%,#07134f 9.4%,#1a8ad9 10.1%,#1ea5df 10.8%,#1770ce 11.4%,#1ea7de 12.3%,#0d2e94 12.7%,#0d2c8f 13.4%,#1348bc 13.6%,#22bedc 13.9%,#22bfdc 15.0%,#1667ca 15.4%,#091b68 15.9%,#050b32 16.1%,#060e40 16.3%,#050a2f 17.0%,#091c6c 17.4%,#123fb6 17.8%,#091b67 18.3%,#05092c 18.5%,#05092c 19.0%,#1877d1 19.6%,#1c95de 19.8%,#1455c2 20.3%,#0a2077 20.5%,#060d3b 21.0%,#081657 21.4%,#1240b7 21.8%,#1b90dc 22.7%,#134dbe 22.9%,#000000 23.4%,#000000 24.1%,#0c2786 24.5%,#000000 24.9%,#000000 25.2%,#0a1e72 25.4%,#1241b9 25.6%,#155cc5 26.1%,#0c2785 26.3%,#000000 26.5%,#000000 28.5%,#07124a 28.7%,#091a66 28.9%,#07124a 29.6%,#0a2179 31.2%,#0a2077 31.6%,#081659 32.0%,#000000 32.3%,#000000 32.7%,#081451 32.9%,#071149 33.1%,#08185f 33.8%,#071046 34.0%,#081860 34.9%,#1c99e0 36.0%,#1661c7 36.7%,#071149 37.6%,#000000 38.0%,#000000 45.1%,#07134e 45.3%,#091961 45.8%,#091961 46.0%,#000000 46.5%,#000000 47.6%,#07124a 47.8%,#07124c 48.2%,#000000 48.4%,#000000 49.6%,#0a1e70 49.8%,#0c2787 50.4%,#0a1f75 52.0%,#000000 52.2%,#000000 55.3%,#070f40 55.5%,#081657 56.0%,#000000 56.2%,#000000 56.9%,#091961 57.3%,#081657 57.5%,#000000 57.8%,#000000 59.5%,#08175a 59.8%,#0a1f75 60.2%,#0a1f76 61.5%,#091962 62.2%,#0a2077 62.9%,#0a2179 65.3%,#07124c 65.7%,#000000 66.0%,#000000 66.2%,#0a1e73 66.6%,#091d70 67.5%,#060e3d 68.4%,#000000 68.6%,#000000 69.1%,#0a1f76 69.3%,#0b227c 70.6%,#091962 70.8%,#000000 71.1%,#000000 72.8%,#1a88d9 73.3%,#1a88d9 74.2%,#0f349f 74.6%,#0d2b8d 74.8%,#1a82d6 75.3%,#1c97df 75.7%,#155ec6 75.9%,#1242b9 76.4%,#1c96df 76.8%,#1c96df 77.3%,#0f349f 77.5%,#000000 77.7%,#000000 78.4%,#08185e 78.6%,#176dcc 78.8%,#1b8edc 79.0%,#1871ce 79.3%,#0a1e72 79.5%,#000000 79.9%,#000000 80.4%,#071146 80.6%,#091b67 80.8%,#091d6f 81.3%,#113eb3 81.5%,#176dcd 82.2%,#176ecd 82.6%,#1038a9 82.8%,#000000 83.0%,#000000 99.9%)"></div><div style="left:81.6px;top:322.00px;width:902.0px;height:1.90px;background:linear-gradient(90deg,#134bbd 0.1%,#1450bf 0.3%,#23c3db 0.8%,#22bddc 2.3%,#0f36a3 2.8%,#0d2e94 3.4%,#1666c9 4.1%,#134bbd 4.8%,#1da1df 5.0%,#1fadde 6.3%,#0c2989 6.8%,#0b2481 7.6%,#0c2888 7.9%,#23c2db 8.3%,#1fa9de 8.5%,#134bbd 8.8%,#1665c9 9.2%,#0d2b8f 9.4%,#0b2582 10.5%,#0c2888 11.0%,#1036a5 11.2%,#0c2785 11.4%,#091c6a 13.2%,#0a1f76 13.4%,#24c9db 13.9%,#24c9db 15.2%,#1037a5 15.9%,#0c2a8b 16.5%,#0a1e70 17.0%,#1558c3 17.4%,#22bddc 17.6%,#23c4db 18.3%,#1039aa 19.2%,#0c2684 19.8%,#091960 20.5%,#091a66 21.4%,#1a83d6 21.8%,#1ea2df 22.5%,#1a89d9 23.4%,#134cbd 23.6%,#091b67 23.8%,#081453 25.4%,#134cbd 25.8%,#134dbe 26.1%,#0d2b8f 26.3%,#060d3c 26.5%,#050a30 27.4%,#081659 27.6%,#07124d 28.0%,#000000 28.3%,#000000 28.9%,#060d3d 29.2%,#07124c 29.4%,#070f41 29.8%,#000000 30.0%,#070f42 30.3%,#000000 30.5%,#000000 31.8%,#081556 32.0%,#0b237f 32.7%,#0b237f 34.7%,#091c6c 34.9%,#1a89d9 35.6%,#33e2b4 36.0%,#1b91dd 36.7%,#091d6f 37.4%,#060d3a 37.8%,#000000 38.0%,#000000 40.5%,#081657 40.7%,#091a63 41.4%,#071147 41.6%,#000000 41.8%,#000000 45.8%,#07134e 46.0%,#081556 46.9%,#000000 47.1%,#000000 48.2%,#060d3b 48.4%,#000000 48.7%,#000000 49.8%,#091c6d 50.0%,#0d2b8e 50.2%,#0c2888 51.6%,#091a64 51.8%,#000000 52.0%,#000000 55.8%,#081553 56.0%,#091960 56.9%,#07124d 57.5%,#000000 57.8%,#000000 59.8%,#07134e 60.0%,#060e3f 60.6%,#000000 60.9%,#000000 61.8%,#0b237d 62.2%,#0b2581 65.3%,#070f42 65.7%,#000000 66.0%,#000000 66.2%,#0b2583 66.9%,#0a1e72 67.7%,#081452 68.2%,#000000 68.4%,#000000 69.3%,#091b67 69.5%,#0c2685 70.0%,#0c2684 70.8%,#08175a 71.1%,#000000 71.3%,#000000 72.6%,#1a83d6 73.3%,#1d9ddf 73.7%,#0e2f95 74.2%,#091b68 74.6%,#176acb 75.3%,#1346bb 75.7%,#0b2582 75.9%,#0b2480 76.4%,#1c98e0 76.6%,#1d9fdf 77.5%,#0b2684 77.7%,#000000 78.2%,#113eb3 78.4%,#1d9fdf 78.6%,#1d9edf 79.5%,#1660c7 79.7%,#08175b 79.9%,#000000 80.2%,#000000 80.4%,#060e3f 80.6%,#060e3d 80.8%,#000000 81.0%,#000000 81.3%,#1873cf 81.9%,#197bd3 82.8%,#000000 83.3%,#000000 95.5%,#07124d 95.7%,#091a65 95.9%,#07124b 96.6%,#000000 96.8%,#000000 99.9%)"></div><div style="left:81.6px;top:323.50px;width:902.0px;height:1.90px;background:linear-gradient(90deg,#1c97df 0.1%,#1facde 0.8%,#26d7d9 1.0%,#26d5d9 1.9%,#197ad2 3.0%,#1c99e0 3.7%,#23c0dc 3.9%,#1c98e0 4.5%,#24c8db 5.0%,#23c2db 6.3%,#123eb5 7.0%,#1456c2 7.9%,#21b9dc 8.3%,#155cc5 8.8%,#1875d0 9.4%,#113eb3 10.3%,#1349bc 12.5%,#0f339e 13.2%,#1877d1 13.9%,#22bbdc 14.3%,#1455c2 14.5%,#1450bf 17.0%,#1454c1 17.2%,#25d0da 17.6%,#25ccda 19.0%,#1452c0 19.8%,#113db1 21.2%,#1872cf 21.6%,#23c2db 21.8%,#1ea4df 23.6%,#144fbf 23.8%,#103aab 25.2%,#197cd3 26.1%,#0c2685 26.5%,#091d6e 27.4%,#113cb1 27.8%,#081659 28.9%,#081658 31.2%,#060e3e 31.8%,#071149 32.0%,#0c2785 32.5%,#0b227c 34.9%,#21b5dd 35.6%,#4fe853 36.0%,#31e2b8 36.5%,#0b237e 37.4%,#08185d 37.6%,#091c6a 37.8%,#060e3e 38.5%,#07124b 38.9%,#071044 39.1%,#000000 39.4%,#000000 40.0%,#071148 40.2%,#091d6f 41.6%,#081554 42.0%,#0b227d 42.7%,#08185f 42.9%,#000000 43.1%,#000000 46.0%,#0a1e73 46.5%,#0d2c8f 46.9%,#0a2079 47.1%,#000000 47.6%,#0a1e73 48.0%,#0d2d92 48.4%,#0d2d92 48.7%,#091b69 48.9%,#000000 49.1%,#000000 49.8%,#0c2a8b 50.2%,#0d2e94 51.1%,#071148 51.6%,#000000 51.8%,#000000 53.3%,#081452 53.5%,#091c6c 54.0%,#081450 54.2%,#000000 54.4%,#000000 55.8%,#091a66 56.0%,#0b2581 56.4%,#0b2582 56.9%,#000000 57.5%,#000000 62.0%,#091d6d 62.2%,#0c2887 62.6%,#091c6d 63.1%,#07134f 63.3%,#081453 63.5%,#0c2684 63.7%,#0c298a 65.1%,#071147 65.5%,#000000 65.7%,#000000 66.4%,#060e3e 66.6%,#0d2a8c 67.3%,#0d2a8d 68.2%,#000000 68.8%,#000000 69.3%,#0c2887 69.7%,#0b227c 70.8%,#081658 71.1%,#000000 71.3%,#000000 71.5%,#060d3b 71.7%,#07134d 72.4%,#0c2888 72.6%,#1346bb 73.5%,#081453 74.4%,#07134d 74.6%,#1036a5 74.8%,#176bcb 75.1%,#197bd3 75.3%,#0e3097 75.5%,#0e3098 75.7%,#071044 75.9%,#000000 76.2%,#000000 76.4%,#0a217a 76.6%,#1b8fdc 77.1%,#1b92dd 77.5%,#1453c1 77.7%,#134cbe 78.2%,#1fa8de 78.6%,#1fa8de 79.3%,#1451c0 79.7%,#0b237d 79.9%,#08185d 80.2%,#000000 80.4%,#070f41 80.6%,#000000 80.8%,#000000 81.3%,#0c2887 81.5%,#176fcd 81.7%,#1a8ad9 82.8%,#0a2078 83.0%,#091a64 83.7%,#071149 83.9%,#000000 84.1%,#000000 86.6%,#091961 87.0%,#091a65 89.2%,#070f43 89.9%,#091a66 90.4%,#07124b 91.2%,#000000 91.5%,#000000 91.9%,#071045 92.1%,#091a64 92.4%,#08175b 93.0%,#000000 93.2%,#000000 95.5%,#060d3c 95.7%,#000000 95.9%,#000000 96.6%,#060e3e 96.8%,#081556 98.8%,#071148 99.0%,#000000 99.2%,#000000 99.9%)"></div><div style="left:81.6px;top:325.00px;width:902.0px;height:1.90px;background:linear-gradient(90deg,#1c9be0 0.1%,#23c2db 2.5%,#42e581 3.7%,#21b5dd 4.8%,#24c6db 5.4%,#1facde 6.1%,#24c6db 7.6%,#1b92dd 8.1%,#1d9ddf 8.3%,#1456c2 8.8%,#1d9ddf 9.6%,#1244ba 11.4%,#23bfdc 12.5%,#1879d2 13.4%,#1450bf 14.3%,#0e329b 15.0%,#1a82d6 16.1%,#1c9ae0 16.7%,#27dcd8 17.4%,#26d4d9 20.3%,#1fa9de 21.0%,#25cbda 21.6%,#3de48f 21.8%,#1873cf 24.5%,#1fabde 25.6%,#1037a6 27.4%,#123fb7 28.5%,#0e3099 30.7%,#0d2e94 32.7%,#0a1f75 33.6%,#0f34a0 34.9%,#1871ce 35.4%,#3de491 36.0%,#2ae0d3 36.5%,#0c2888 37.4%,#0a2078 37.8%,#081554 38.0%,#071045 38.5%,#08185e 38.7%,#07124c 39.1%,#000000 39.4%,#000000 40.2%,#081451 40.5%,#081657 41.4%,#071045 41.6%,#000000 41.8%,#000000 43.6%,#091d6e 44.0%,#08185e 44.5%,#000000 44.7%,#000000 44.9%,#060e3f 45.1%,#060e3f 45.6%,#000000 45.8%,#071147 46.0%,#0e2f97 46.7%,#0b2583 47.1%,#081554 47.3%,#07134d 47.6%,#0c2685 47.8%,#0e319b 48.9%,#091a65 49.3%,#0f339e 50.4%,#081658 51.1%,#000000 51.3%,#000000 51.8%,#081554 52.0%,#091961 52.7%,#091d70 53.8%,#07124a 54.4%,#0a217a 55.1%,#081658 56.2%,#0c298b 56.7%,#0a1f74 57.3%,#07134f 57.5%,#071149 57.8%,#000000 58.0%,#000000 58.9%,#081453 59.1%,#0a217b 59.5%,#08185f 60.0%,#000000 60.4%,#000000 61.1%,#071044 61.3%,#091c6a 62.9%,#000000 63.3%,#0a1f76 63.7%,#0d2d92 64.2%,#0c2685 65.1%,#091a64 65.5%,#0a2179 65.7%,#070f43 66.4%,#081450 66.6%,#000000 66.9%,#081555 67.1%,#0d2c90 67.5%,#0b2480 67.7%,#0e2f97 68.4%,#07124a 69.5%,#0e2f97 70.0%,#0e2f96 70.6%,#07124c 71.1%,#08175a 71.5%,#0b237e 71.7%,#0b2480 72.4%,#1664c8 72.6%,#1c9ae0 73.5%,#1037a6 73.9%,#091963 74.6%,#1450bf 74.8%,#1b91dd 75.3%,#0e319a 75.5%,#0e2f97 75.7%,#081451 75.9%,#081451 77.3%,#091d6e 77.5%,#1ea4df 77.9%,#1d9ce0 79.9%,#1454c1 80.4%,#1038a7 81.3%,#1661c7 81.5%,#134bbd 81.9%,#091a64 82.6%,#0d2e93 82.8%,#091a64 83.3%,#081659 84.1%,#07124a 84.4%,#000000 84.6%,#000000 86.6%,#091a66 86.8%,#091a66 87.3%,#07134d 87.5%,#000000 87.7%,#000000 87.9%,#070f41 88.1%,#07124b 88.6%,#000000 88.8%,#000000 90.4%,#07134f 90.6%,#081657 91.2%,#071045 92.1%,#091961 92.6%,#081555 92.8%,#000000 93.0%,#000000 94.3%,#060e3e 94.6%,#070f42 95.0%,#000000 95.2%,#000000 99.9%)"></div><div style="left:81.6px;top:326.50px;width:902.0px;height:1.90px;background:linear-gradient(90deg,#1d9ce0 0.1%,#155ac4 1.0%,#1fa8de 2.3%,#4ae763 3.2%,#26d7d9 4.1%,#197fd5 5.0%,#20afdd 6.1%,#41e582 7.0%,#28e0d8 7.9%,#176bcb 8.5%,#24c6db 9.9%,#113eb3 11.4%,#1244ba 12.1%,#1c98e0 12.7%,#197dd4 13.9%,#0d2d93 14.7%,#20aede 17.0%,#1d9ce0 18.3%,#31e2bb 19.0%,#22bddc 19.8%,#20afdd 20.7%,#26d1da 21.6%,#36e3a8 22.1%,#1c99e0 23.6%,#1b93de 24.9%,#38e3a0 26.1%,#0e3099 27.2%,#0f36a4 27.8%,#123eb4 28.7%,#1347bb 30.5%,#0f35a1 31.4%,#1d9fdf 32.3%,#0f349f 33.4%,#1a89d9 34.3%,#1662c8 35.4%,#29e0d6 36.0%,#20b2dd 36.7%,#1559c4 37.1%,#155cc5 37.4%,#1037a6 37.6%,#000000 38.0%,#070f42 38.2%,#070f41 38.7%,#000000 38.9%,#000000 40.0%,#071046 40.2%,#071149 40.5%,#000000 40.7%,#000000 43.3%,#0e3097 43.8%,#0c298a 44.5%,#070f40 44.9%,#0f339e 45.8%,#0f35a3 48.7%,#0d2c8f 48.9%,#081659 49.1%,#071149 49.6%,#0b2583 50.2%,#0a1f73 50.7%,#000000 51.3%,#000000 51.8%,#07134d 52.0%,#08185e 52.7%,#0d2a8d 53.1%,#0a1e73 53.8%,#000000 54.2%,#0d2c90 54.7%,#0c2a8b 55.8%,#091c6b 56.2%,#0e2e94 56.4%,#0d2a8c 58.0%,#060e3e 58.9%,#0e2f96 59.8%,#091d70 60.2%,#000000 60.6%,#000000 62.4%,#07124b 62.6%,#0c298b 63.3%,#0e3098 64.2%,#091963 64.9%,#08185f 65.1%,#0d2c8f 65.3%,#0f339f 66.0%,#081555 66.4%,#07124b 66.6%,#000000 66.9%,#000000 68.2%,#081451 68.4%,#071149 69.1%,#060d3b 69.3%,#000000 69.5%,#000000 69.7%,#07134e 70.0%,#0a2179 70.8%,#0a2078 71.3%,#0f35a1 71.5%,#0f35a1 72.2%,#1558c3 72.4%,#22bddc 72.6%,#1c9ae0 72.8%,#22bfdc 73.3%,#1d9ce0 73.5%,#0f35a1 73.7%,#0f34a1 74.6%,#22bedc 75.1%,#1ea4df 75.5%,#1039a9 75.9%,#0f34a0 77.5%,#113aac 77.7%,#1c9ae0 77.9%,#22bddc 78.6%,#1d9fdf 80.6%,#1345ba 81.3%,#0e319b 82.8%,#000000 83.0%,#000000 83.5%,#091c6a 83.9%,#091c6a 84.4%,#07124b 84.6%,#07124d 84.8%,#000000 85.0%,#000000 87.9%,#071350 88.1%,#081450 88.4%,#000000 88.6%,#000000 90.4%,#07124c 90.6%,#091d6e 91.2%,#08175a 92.1%,#071046 92.4%,#000000 92.6%,#000000 94.6%,#070f43 94.8%,#000000 95.0%,#000000 99.0%,#071147 99.2%,#0a227b 99.7%,#091960 99.9%)"></div><div style="left:81.6px;top:328.00px;width:902.0px;height:1.90px;background:linear-gradient(90deg,#1fa8de 0.1%,#113db1 1.0%,#1b90dd 2.1%,#35e3ab 2.5%,#2ce1ca 3.7%,#1a8bda 4.3%,#197ad2 5.7%,#21b6dd 6.8%,#22badc 8.1%,#1b8ddb 9.0%,#31e2b8 9.6%,#0f36a4 10.8%,#0b2583 12.1%,#1873cf 13.0%,#144ebe 15.9%,#1facde 18.1%,#1ea5df 19.2%,#123fb5 20.3%,#1664c8 21.6%,#1ea5df 21.8%,#23bfdc 22.7%,#197bd3 23.6%,#1da0df 24.5%,#1873cf 25.2%,#27dcd8 26.3%,#113cb0 27.2%,#0e319b 28.0%,#1349bc 30.3%,#0d2d93 30.9%,#197ed4 32.3%,#165fc6 33.4%,#1b90dc 34.3%,#1452c0 35.1%,#1d9fdf 35.8%,#27dad9 36.5%,#1b91dd 37.6%,#060d3b 38.0%,#081556 38.2%,#000000 38.5%,#000000 39.4%,#07134f 39.6%,#0a1e73 40.5%,#07124b 41.6%,#060e3f 42.0%,#000000 42.2%,#000000 43.6%,#091d6e 43.8%,#0f34a0 44.0%,#0f36a4 44.2%,#081659 44.7%,#000000 44.9%,#07134e 45.1%,#1037a6 45.6%,#0e2e95 46.5%,#091c6d 46.7%,#0b247f 47.1%,#1039a9 47.3%,#103aab 48.4%,#081556 48.9%,#000000 49.1%,#000000 52.2%,#0c2989 52.9%,#0d2d92 53.5%,#000000 54.0%,#000000 54.4%,#0f339e 54.9%,#0f339f 58.2%,#08185f 58.9%,#0f35a1 59.5%,#091a64 60.0%,#000000 60.2%,#000000 62.9%,#091b68 63.1%,#0f36a4 63.3%,#0d2e93 64.0%,#000000 64.4%,#000000 64.9%,#1038a9 65.3%,#0e2f97 66.2%,#0a2078 66.6%,#0c2786 67.3%,#091b67 67.5%,#000000 67.7%,#000000 69.7%,#091b67 70.0%,#0f34a1 70.4%,#0f339e 70.8%,#091d6f 71.1%,#091d6e 71.3%,#0f34a1 71.5%,#113aac 72.2%,#1ea4df 72.6%,#1c9ae0 73.5%,#1453c0 74.2%,#176ccc 74.6%,#24c8db 75.1%,#1c96df 76.4%,#1facde 77.1%,#1872cf 77.7%,#25d0da 78.6%,#1c9be0 79.7%,#22badc 81.5%,#176ecd 82.6%,#1770ce 82.8%,#000000 83.0%,#000000 83.7%,#081555 83.9%,#0a1f74 84.6%,#091963 85.7%,#000000 85.9%,#000000 87.7%,#071148 87.9%,#081658 88.1%,#060e3f 88.4%,#000000 88.6%,#000000 90.1%,#060e3e 90.4%,#000000 90.6%,#000000 91.0%,#070f43 91.2%,#0a217a 91.9%,#070f41 92.6%,#000000 92.8%,#000000 94.8%,#060d3b 95.0%,#091b68 96.3%,#0a2079 96.8%,#071044 97.2%,#000000 97.5%,#000000 99.0%,#091b67 99.2%,#0c2888 99.7%,#091b69 99.9%)"></div><div style="left:81.6px;top:329.50px;width:902.0px;height:1.90px;background:linear-gradient(90deg,#1ea2df 0.1%,#197dd4 1.2%,#1a85d7 2.1%,#35e3ab 2.5%,#28ddd8 3.4%,#165fc6 4.3%,#1240b8 5.9%,#1fa8de 6.5%,#176fcd 7.4%,#1b92dd 8.3%,#1242b9 9.2%,#21b6dd 9.9%,#0a1e71 11.0%,#0d2b8f 11.9%,#1665c9 12.7%,#1770ce 14.1%,#1ea4df 15.0%,#1664c8 15.9%,#1c9ae0 17.2%,#1ea2df 18.1%,#35e3ab 18.5%,#35e3ab 19.0%,#1a84d7 19.4%,#0d2b8e 20.3%,#0b237e 21.4%,#1871ce 21.8%,#25ceda 22.5%,#1a84d7 23.6%,#1faade 24.5%,#155dc5 25.8%,#1fabde 27.2%,#113caf 28.0%,#1450bf 28.7%,#1a86d8 29.4%,#0e319a 30.5%,#1452c0 31.2%,#1876d1 31.6%,#1451c0 32.7%,#1ea1df 34.0%,#113baf 35.1%,#26d1da 36.5%,#1a8ada 37.8%,#0d2c91 38.0%,#0a1f76 38.9%,#0e2f97 40.2%,#0a1f75 41.4%,#0b2581 42.0%,#060e3e 43.3%,#091c6b 44.0%,#0e2f97 44.5%,#113cb0 46.0%,#08175b 46.5%,#081658 47.3%,#0e3097 47.6%,#113eb4 48.0%,#123eb4 48.2%,#081451 48.7%,#07124a 50.2%,#07134f 52.7%,#0b227d 53.1%,#071147 54.0%,#07134d 54.7%,#1037a5 55.1%,#0f329c 55.8%,#081657 56.0%,#07134f 56.4%,#0f35a2 57.1%,#0b247f 57.8%,#0f35a2 58.4%,#0d2d92 58.9%,#113bae 59.3%,#07124b 60.0%,#070f42 60.6%,#07124d 60.9%,#0f349f 61.3%,#0c2889 61.5%,#07134e 61.8%,#060d3b 62.6%,#071149 64.2%,#07134f 65.1%,#1039ab 65.5%,#113caf 66.0%,#091962 66.6%,#091b69 67.3%,#0b2582 67.7%,#07134e 68.2%,#07134f 70.0%,#0a1e73 70.2%,#1240b8 70.4%,#1240b8 70.8%,#091b67 71.1%,#07134f 71.5%,#0c2785 71.7%,#07134f 72.2%,#1d9fdf 72.6%,#24c7db 73.5%,#1ea3df 74.4%,#31e2b8 75.3%,#1b92dd 76.6%,#176dcc 77.7%,#27dcd8 78.6%,#1a89d9 79.5%,#3de491 81.0%,#2be1cc 81.7%,#1c94de 82.6%,#1d9be0 82.8%,#091b69 83.0%,#05092b 83.3%,#050a2e 84.1%,#07134f 84.8%,#08175c 85.9%,#091c6a 86.4%,#060d3b 87.3%,#0b2583 88.1%,#071044 88.6%,#000000 88.8%,#000000 89.5%,#060e3e 89.7%,#07124c 89.9%,#000000 90.1%,#000000 91.5%,#091963 91.9%,#060d3d 92.4%,#000000 92.6%,#000000 93.5%,#0a1e71 93.9%,#091c6a 94.3%,#000000 94.8%,#000000 95.9%,#0d2e94 96.6%,#0b2683 97.5%,#000000 97.9%,#000000 99.0%,#060e3d 99.2%,#091962 99.7%,#08185d 99.9%)"></div><div style="left:81.6px;top:331.00px;width:902.0px;height:1.90px;background:linear-gradient(90deg,#176bcc 0.1%,#20aede 0.6%,#35e3ab 0.8%,#35e3ab 1.4%,#1559c3 1.9%,#1660c6 2.5%,#35e3ab 2.8%,#35e3ab 3.2%,#1666c9 3.7%,#0f35a2 5.7%,#1347bb 6.1%,#35e3ab 6.5%,#35e3ab 7.0%,#20b1dd 7.4%,#1660c7 7.6%,#23c4db 8.3%,#155dc5 8.5%,#0d2c90 9.4%,#197fd4 9.9%,#0b2581 11.2%,#1039ab 12.1%,#1349bc 13.2%,#134abc 14.3%,#1a88d9 14.5%,#2fe1c1 14.7%,#31e2ba 15.0%,#176ccc 15.4%,#1455c1 16.5%,#1874cf 17.0%,#1242b9 17.8%,#1661c7 18.3%,#35e3ab 18.7%,#1873cf 19.2%,#113bae 19.8%,#1038a7 21.0%,#0c2786 21.4%,#1455c2 21.8%,#155ec6 24.7%,#20aede 25.2%,#123fb6 25.8%,#0f339e 26.3%,#1244ba 26.5%,#21b4dd 26.7%,#20b0dd 27.6%,#1241b9 27.8%,#1038a8 28.3%,#1a84d7 29.4%,#0e319a 30.7%,#1878d1 32.3%,#1557c2 33.6%,#176ecd 34.5%,#1769cb 35.1%,#27dbd9 35.8%,#26d6d9 36.3%,#1a88d9 36.5%,#1349bc 36.9%,#1a88d9 37.6%,#23c4db 37.8%,#1ea3df 39.4%,#1faade 40.2%,#1b8edb 41.8%,#1666c9 42.5%,#1038a8 43.1%,#24c8db 44.9%,#0f35a1 46.5%,#155ec6 47.8%,#1452c0 48.7%,#113db2 49.6%,#176ccc 50.7%,#134cbe 52.7%,#155fc6 53.8%,#1452c0 54.9%,#1877d1 55.8%,#134abd 56.4%,#1a89d9 57.1%,#1557c2 58.0%,#1a8ada 58.9%,#0f34a0 60.4%,#1982d6 61.3%,#0e3097 62.4%,#176ecd 65.7%,#091d6d 67.3%,#1037a6 68.2%,#0c298b 69.3%,#1875d0 70.8%,#113db1 72.0%,#123fb7 72.2%,#23c1db 72.6%,#32e2b5 73.7%,#25d0da 75.7%,#155dc5 76.6%,#1b8bda 77.7%,#2de1c8 78.8%,#26d1da 79.7%,#45e677 80.8%,#20b1dd 82.2%,#1b8cdb 82.8%,#0c2887 83.3%,#0b237e 84.8%,#0f349f 85.9%,#113cb1 86.8%,#0f34a0 88.8%,#0c2786 90.4%,#091b67 90.8%,#0d2e93 92.1%,#0a1e71 93.0%,#1346bb 94.1%,#0a2078 95.7%,#0b2683 96.3%,#1037a6 96.8%,#0f36a4 97.2%,#0a217a 97.9%,#0a1e71 99.9%)"></div><div style="left:81.6px;top:332.50px;width:902.0px;height:1.90px;background:linear-gradient(90deg,#22bfdc 0.1%,#23c4db 0.6%,#35e3ab 1.0%,#1fa8de 2.3%,#24c7db 4.8%,#25ccda 5.9%,#35e3ab 7.0%,#34e2b1 7.9%,#2ce1ca 8.8%,#1b93de 9.6%,#197fd5 11.6%,#1ea2df 13.4%,#24c7db 15.0%,#1b90dc 16.5%,#21b8dc 19.0%,#21b9dc 20.1%,#35e3ab 21.0%,#1d9ddf 22.9%,#20b2dd 23.8%,#1ea4df 24.7%,#27d8d9 26.1%,#24c8db 27.4%,#176fcd 28.0%,#1fa9de 29.6%,#1874cf 31.6%,#1da1df 32.7%,#1c98e0 33.8%,#28dfd8 35.6%,#35e3ab 36.0%,#1facde 36.3%,#1c94de 36.9%,#21b3dd 37.6%,#43e57b 38.0%,#27d9d9 39.8%,#1faade 40.5%,#25ceda 41.4%,#1ea1df 42.7%,#cdef0e 44.9%,#40e586 45.6%,#134abd 46.2%,#1ea6de 47.1%,#197cd3 48.0%,#2ae0d2 49.6%,#24cbda 51.6%,#22b9dc 52.0%,#2ee1c2 53.1%,#1872cf 54.7%,#36e3a9 56.0%,#38e3a1 56.7%,#40e587 57.5%,#27d9d9 58.2%,#37e3a3 58.9%,#23c1db 59.8%,#21b6dd 61.3%,#176bcc 62.2%,#21b3dd 63.1%,#21b6dd 64.0%,#37e3a6 64.9%,#134abc 66.9%,#0c298a 67.3%,#1d9ce0 68.4%,#1877d1 69.3%,#22bedc 71.1%,#1ea2df 72.0%,#48e66d 72.8%,#28e0d7 74.4%,#1b8bda 76.2%,#26d5d9 77.5%,#1c95df 78.4%,#22bddc 79.3%,#21b5dd 79.9%,#25cbda 80.8%,#1c94de 81.7%,#1d9ce0 82.8%,#197ed4 83.9%,#155bc4 84.1%,#1a86d8 85.7%,#27d8d9 87.3%,#1c94de 89.2%,#23bfdc 90.1%,#176ccc 90.8%,#35e3ad 91.9%,#1768ca 93.2%,#30e2bc 94.1%,#1c97e0 95.2%,#1fadde 97.2%,#20b2dd 98.8%,#1559c3 99.7%,#1770ce 99.9%)"></div><div style="left:81.6px;top:334.00px;width:902.0px;height:1.90px;background:linear-gradient(90deg,#23c0dc 0.1%,#22bcdc 3.2%,#35e3ab 3.9%,#27d8d9 5.0%,#29e0d5 6.1%,#2be1cd 7.0%,#22b9dc 8.1%,#1c96df 11.6%,#23c3db 14.1%,#35e3ab 14.5%,#1d9ce0 16.3%,#2ce1c9 18.1%,#26d4d9 19.2%,#27dad9 21.0%,#29e0d3 22.1%,#24c6db 23.2%,#21b6dd 24.3%,#25d0da 26.3%,#1ea4df 28.5%,#1fa8de 29.8%,#176dcc 31.8%,#1fabde 32.9%,#25d0da 35.4%,#35e3ab 35.8%,#20b1dd 36.3%,#1ea3df 36.9%,#39e39f 37.6%,#27d8d9 37.8%,#34e2b0 38.2%,#35e3ab 39.6%,#1a89d9 40.2%,#26d5d9 41.1%,#1450bf 42.2%,#22bddc 42.9%,#84eb34 44.0%,#b5ed1b 45.6%,#1facde 46.2%,#21b9dc 47.6%,#25cdda 48.9%,#45e675 50.0%,#2fe1c2 52.0%,#49e769 52.7%,#1d9be0 53.8%,#1fabde 54.4%,#1da0df 55.3%,#30e2bb 56.2%,#62e946 57.8%,#3ae49b 58.4%,#4ce75e 60.2%,#22bbdc 61.5%,#176ecd 62.2%,#56e84d 64.9%,#2ce1ca 65.5%,#1c9be0 66.0%,#1faade 67.5%,#3fe58a 68.6%,#40e585 71.1%,#1b8cdb 72.0%,#32e2b7 72.8%,#28ded8 74.4%,#1a82d6 75.1%,#1b8edb 75.9%,#40e587 77.3%,#1a87d8 78.8%,#155dc5 79.5%,#25d0da 80.6%,#1666c9 81.5%,#197bd3 82.6%,#34e2b0 83.3%,#21b8dc 83.9%,#1b90dc 84.1%,#23c2db 85.0%,#24c6db 86.1%,#40e585 87.5%,#197bd3 88.8%,#1ea7de 89.5%,#27dbd9 90.1%,#1a86d8 91.0%,#49e769 92.1%,#1d9ce0 93.5%,#20b2dd 94.6%,#1ea4df 95.2%,#52e84f 96.1%,#26d3d9 97.5%,#2ce1cc 99.0%,#24c6db 99.9%)"></div><div style="left:81.6px;top:335.50px;width:902.0px;height:1.90px;background:linear-gradient(90deg,#1348bc 0.1%,#155ec5 1.7%,#1d9be0 2.3%,#27ddd8 2.5%,#176ecd 3.2%,#35e3ab 3.7%,#35e3ab 4.8%,#155bc4 5.2%,#176ecd 6.1%,#35e3ab 6.3%,#35e3ab 6.8%,#1667ca 7.2%,#113eb4 8.3%,#144fbf 10.1%,#176dcc 10.8%,#1243ba 11.4%,#1667ca 15.4%,#27d8d9 15.9%,#23c1db 16.5%,#176dcc 17.0%,#1b8fdc 17.2%,#1878d2 17.8%,#1faade 18.1%,#1870ce 18.5%,#1c99e0 19.0%,#27d9d9 19.2%,#27d9d9 19.6%,#197cd3 19.8%,#134dbe 21.0%,#197ad3 22.7%,#1665c9 27.4%,#1c98e0 27.6%,#1455c2 32.0%,#197bd3 35.1%,#1faade 35.4%,#155cc5 36.9%,#1a86d8 37.4%,#61e947 37.8%,#20b1dd 38.2%,#1879d2 40.7%,#1ea2df 41.4%,#1557c2 42.5%,#25ceda 43.6%,#27d9d9 44.5%,#49e769 45.3%,#1c9ae0 46.9%,#21b8dc 48.4%,#20b2dd 49.1%,#44e679 50.9%,#2fe1c0 52.7%,#22badc 53.8%,#26d7d9 54.4%,#1c95df 55.3%,#2ee1c5 57.1%,#3be498 57.8%,#24c8db 59.3%,#33e2b3 61.1%,#1662c7 62.0%,#113bae 62.2%,#176fcd 63.1%,#3ee48f 64.2%,#4de759 65.3%,#1d9fdf 66.0%,#1fabde 66.6%,#3be498 68.2%,#42e581 70.4%,#28ded8 71.1%,#113db2 72.0%,#21b6dd 73.3%,#20aede 73.9%,#35e3ab 74.4%,#1c95de 74.6%,#1454c1 75.3%,#1c9ae0 75.9%,#35e3ab 76.2%,#21b4dd 77.5%,#35e3ab 77.9%,#23c2db 78.8%,#134dbe 79.5%,#1a86d8 80.2%,#2ae0d2 80.4%,#27dcd8 81.3%,#1a89d9 81.5%,#0e329c 82.6%,#1b90dc 83.0%,#23c4db 83.5%,#1559c3 84.1%,#25ccda 85.5%,#42e580 87.0%,#23c1db 87.9%,#21b7dd 89.0%,#20aede 89.5%,#39e39e 90.4%,#1faade 91.5%,#22b9dc 93.2%,#1b8fdc 94.8%,#81eb36 95.9%,#2be1ce 96.6%,#1ea6de 97.2%,#22bcdc 99.4%,#26d2da 99.9%)"></div><div style="left:81.6px;top:337.00px;width:902.0px;height:1.90px;background:linear-gradient(90deg,#0f35a2 0.1%,#1662c7 0.6%,#1660c6 1.4%,#0e3199 1.9%,#0e329c 2.1%,#155ec5 2.5%,#155cc5 3.0%,#0d2e94 3.4%,#0f339d 3.9%,#1454c1 4.1%,#1559c4 4.5%,#081556 5.0%,#050a2f 5.2%,#070f40 6.1%,#0d2d92 6.3%,#0e329c 6.8%,#071147 7.2%,#050a2e 7.9%,#050b32 9.2%,#123fb6 10.1%,#113db2 11.2%,#0d2d91 11.4%,#0e3098 11.6%,#0a1e72 11.9%,#0a1e72 12.1%,#113db2 12.5%,#113db2 13.2%,#0e2e94 13.4%,#060b34 13.6%,#05092b 14.1%,#000000 14.3%,#000000 14.7%,#05092b 15.0%,#060c38 15.4%,#113db3 15.9%,#0f35a3 17.4%,#060d3c 18.3%,#060d3d 18.5%,#113eb3 19.2%,#0e329c 19.8%,#0c298a 20.1%,#07134f 20.3%,#060d3b 21.4%,#08175b 21.8%,#070f41 22.5%,#071046 24.5%,#091c6a 24.7%,#0a1e72 24.9%,#0f35a2 25.2%,#0e329c 26.1%,#07134d 26.5%,#070f41 26.9%,#0e2f96 27.6%,#091b67 28.9%,#070f42 29.6%,#07124d 32.0%,#08185e 32.5%,#071148 32.9%,#081657 33.8%,#071149 35.1%,#081553 37.4%,#0d2e94 37.6%,#45e676 37.8%,#b0ed1d 38.0%,#2be1ce 39.1%,#79ea3a 42.0%,#97ec2b 42.9%,#bcee17 44.9%,#4de75b 48.2%,#80eb37 50.0%,#c3ee13 52.4%,#73ea3d 54.0%,#72ea3e 58.4%,#4de759 61.5%,#25d0da 62.4%,#9eec27 64.2%,#43e57e 66.4%,#b1ed1d 67.5%,#bbee18 69.7%,#49e767 70.8%,#3ee48e 72.0%,#34e2b0 72.4%,#1ea5df 72.6%,#25ccda 72.8%,#1b8ddb 73.9%,#1d9edf 75.5%,#35e3ab 75.9%,#35e3ab 76.8%,#1ea4df 77.1%,#1ea6de 77.7%,#35e3ab 78.2%,#26d5d9 79.0%,#1ea3df 79.5%,#1fa9de 80.2%,#35e3ab 80.8%,#2de1c8 81.7%,#1fa8de 82.2%,#1c96df 82.6%,#3be498 82.8%,#24c9db 84.6%,#48e66b 86.4%,#31e2ba 88.4%,#27dad9 91.0%,#25d0da 95.2%,#26d5d9 96.1%,#1c99e0 97.2%,#20aede 98.6%,#1fa7de 99.7%,#1fabde 99.9%)"></div><div style="left:81.6px;top:338.50px;width:902.0px;height:1.90px;background:linear-gradient(90deg,#081860 0.1%,#0a217a 0.6%,#0a2079 1.4%,#060e3f 1.9%,#000000 2.1%,#000000 2.3%,#070f43 2.5%,#081450 3.0%,#070f40 3.2%,#000000 3.4%,#000000 3.9%,#060e3f 4.1%,#091a65 4.5%,#070f40 5.0%,#000000 5.2%,#000000 9.2%,#091961 9.6%,#091b68 10.8%,#07134d 11.0%,#091b68 11.6%,#081659 12.3%,#091b67 13.4%,#000000 13.6%,#000000 15.9%,#091a63 16.1%,#08185f 17.2%,#081554 17.4%,#000000 17.6%,#000000 18.3%,#091b68 18.7%,#091962 20.5%,#000000 20.7%,#000000 21.4%,#060b35 21.6%,#060e3e 22.1%,#000000 22.5%,#000000 24.3%,#060e3f 24.5%,#091a65 25.2%,#091961 26.1%,#000000 26.3%,#000000 27.4%,#070f40 27.6%,#071147 28.5%,#060e3e 28.7%,#000000 28.9%,#000000 35.8%,#060d3d 36.0%,#05092b 36.5%,#000000 36.7%,#060e3d 36.9%,#08185f 37.6%,#123fb6 37.8%,#4de75a 38.0%,#36e3a9 39.1%,#a2ec25 40.5%,#a9ed21 43.8%,#d5ef0a 46.0%,#4ae766 48.0%,#6be942 49.1%,#b6ed1b 50.0%,#f2b700 51.6%,#50e850 54.0%,#e3f003 55.5%,#f2b800 56.4%,#59e84b 57.3%,#a5ec23 58.6%,#45e677 60.4%,#5fe948 63.7%,#59e84b 66.4%,#aeed1f 67.5%,#cdef0e 68.6%,#e8ef00 70.4%,#41e582 71.1%,#edd700 72.2%,#20b0dd 73.1%,#1ea3df 74.4%,#22b9dc 75.7%,#35e3ab 75.9%,#2ce1cb 76.8%,#1ea6de 77.1%,#1facde 77.9%,#26d7d9 78.2%,#1faade 79.9%,#21b6dd 82.4%,#d2ef0b 83.0%,#edd400 87.5%,#41e584 91.2%,#eae200 92.4%,#5ce94a 93.9%,#89eb32 96.1%,#4ee856 97.0%,#75ea3c 98.3%,#56e84d 99.4%,#9cec28 99.9%)"></div><div style="left:81.6px;top:340.00px;width:902.0px;height:1.90px;background:linear-gradient(90deg,#000000 0.1%,#000000 0.6%,#071147 0.8%,#071148 1.4%,#000000 1.7%,#000000 4.5%,#071043 4.8%,#060d3c 5.9%,#000000 6.1%,#000000 9.4%,#060d3a 9.6%,#060e40 10.3%,#000000 10.5%,#000000 16.5%,#060d3b 16.7%,#060e3f 17.0%,#000000 17.2%,#000000 19.6%,#060e3d 19.8%,#060e3f 21.0%,#000000 21.2%,#000000 21.6%,#05092c 21.8%,#000000 22.1%,#000000 24.9%,#060e3d 25.2%,#060d3c 25.6%,#000000 25.8%,#000000 35.8%,#060e3e 36.0%,#071046 37.6%,#081556 37.8%,#1558c3 38.0%,#1b90dc 38.2%,#24c9db 40.7%,#20b2dd 41.8%,#24c5db 43.1%,#29e0d4 44.7%,#35e3aa 46.0%,#25cdda 47.1%,#27dbd9 50.0%,#40e588 51.8%,#29e0d3 52.9%,#2de1c7 54.2%,#86eb33 55.3%,#46e672 56.4%,#24c9db 57.1%,#30e2bd 58.4%,#2fe1bf 60.4%,#2de1c6 64.6%,#39e39e 70.4%,#4be760 72.2%,#176dcd 72.8%,#1452c0 73.7%,#176acb 74.8%,#1660c6 76.2%,#26d6d9 76.8%,#1fa8de 77.7%,#1456c2 78.2%,#1240b8 79.9%,#113cb0 82.6%,#1b8cdb 82.8%,#41e583 83.0%,#afed1e 85.0%,#92eb2d 86.4%,#edd400 87.3%,#39e39d 89.7%,#49e769 91.5%,#e0f004 92.4%,#37e3a4 94.1%,#77ea3b 97.0%,#8eeb2f 97.9%,#42e580 99.0%,#82eb36 99.9%)"></div><div style="left:81.6px;top:341.50px;width:902.0px;height:1.90px;background:linear-gradient(90deg,#000000 0.1%,#000000 37.8%,#060e3e 38.0%,#060e3f 38.9%,#091962 39.1%,#08185d 39.8%,#070f42 40.7%,#091960 44.7%,#0a1f74 46.0%,#08175c 47.3%,#091b67 50.7%,#091c6b 52.0%,#0b2683 54.4%,#0c2684 56.4%,#0a1e72 57.5%,#0a1f76 59.5%,#0c2888 62.2%,#091d6f 64.6%,#0a1f73 69.3%,#0c2a8c 69.7%,#091d6f 70.6%,#0c2a8c 71.5%,#0c2a8c 72.2%,#07124c 72.6%,#071148 73.5%,#0a1f75 73.9%,#113db3 74.2%,#103aac 74.8%,#081553 75.3%,#060d3c 75.7%,#07124a 76.6%,#0f36a4 76.8%,#113bae 77.9%,#081450 78.2%,#060b34 78.4%,#050a2f 79.9%,#0b2581 80.6%,#05092b 81.5%,#05092a 81.7%,#000000 81.9%,#060e3f 82.2%,#000000 82.4%,#000000 82.6%,#060b35 82.8%,#0d2b8f 83.0%,#144ebe 84.1%,#1874d0 88.8%,#155fc6 90.1%,#1a85d7 91.9%,#1559c4 94.6%,#197fd5 95.7%,#1d9edf 99.9%)"></div></div>
<svg width="1000" height="531" viewBox="0 0 1000 531"><line x1="50.50" y1="67.50" x2="50.50" y2="183.00" stroke="#9a9a9a" stroke-width="1" /><rect x="48.00" y="67.30" width="2" height="1.1" fill="#d0d0d0"/><text x="44.50" y="70.70" font-size="8.2" fill="#d8d8d8" font-weight="normal" text-anchor="end" textLength="14.00" lengthAdjust="spacingAndGlyphs" >4.7</text><line x1="52.0" y1="67.80" x2="984.0" y2="67.80" stroke="#d0d0d0" stroke-opacity="0.38" stroke-width="0.8" stroke-dasharray="1.6 2.3"/><rect x="48.00" y="79.32" width="2" height="1.1" fill="#d0d0d0"/><text x="44.50" y="82.72" font-size="8.2" fill="#d8d8d8" font-weight="normal" text-anchor="end" textLength="14.00" lengthAdjust="spacingAndGlyphs" >4.2</text><line x1="52.0" y1="79.82" x2="984.0" y2="79.82" stroke="#d0d0d0" stroke-opacity="0.38" stroke-width="0.8" stroke-dasharray="1.6 2.3"/><rect x="48.00" y="91.34" width="2" height="1.1" fill="#d0d0d0"/><text x="44.50" y="94.74" font-size="8.2" fill="#d8d8d8" font-weight="normal" text-anchor="end" textLength="14.00" lengthAdjust="spacingAndGlyphs" >3.7</text><line x1="52.0" y1="91.84" x2="984.0" y2="91.84" stroke="#d0d0d0" stroke-opacity="0.38" stroke-width="0.8" stroke-dasharray="1.6 2.3"/><rect x="48.00" y="103.36" width="2" height="1.1" fill="#d0d0d0"/><text x="44.50" y="106.76" font-size="8.2" fill="#d8d8d8" font-weight="normal" text-anchor="end" textLength="14.00" lengthAdjust="spacingAndGlyphs" >3.2</text><line x1="52.0" y1="103.86" x2="984.0" y2="103.86" stroke="#d0d0d0" stroke-opacity="0.38" stroke-width="0.8" stroke-dasharray="1.6 2.3"/><rect x="48.00" y="115.38" width="2" height="1.1" fill="#d0d0d0"/><text x="44.50" y="118.78" font-size="8.2" fill="#d8d8d8" font-weight="normal" text-anchor="end" textLength="14.00" lengthAdjust="spacingAndGlyphs" >2.7</text><line x1="52.0" y1="115.88" x2="984.0" y2="115.88" stroke="#d0d0d0" stroke-opacity="0.38" stroke-width="0.8" stroke-dasharray="1.6 2.3"/><rect x="48.00" y="127.40" width="2" height="1.1" fill="#d0d0d0"/><text x="44.50" y="130.80" font-size="8.2" fill="#d8d8d8" font-weight="normal" text-anchor="end" textLength="14.00" lengthAdjust="spacingAndGlyphs" >2.2</text><line x1="52.0" y1="127.90" x2="984.0" y2="127.90" stroke="#d0d0d0" stroke-opacity="0.38" stroke-width="0.8" stroke-dasharray="1.6 2.3"/><rect x="48.00" y="139.42" width="2" height="1.1" fill="#d0d0d0"/><text x="44.50" y="142.82" font-size="8.2" fill="#d8d8d8" font-weight="normal" text-anchor="end" textLength="14.00" lengthAdjust="spacingAndGlyphs" >1.7</text><line x1="52.0" y1="139.92" x2="984.0" y2="139.92" stroke="#d0d0d0" stroke-opacity="0.38" stroke-width="0.8" stroke-dasharray="1.6 2.3"/><rect x="48.00" y="151.44" width="2" height="1.1" fill="#d0d0d0"/><text x="44.50" y="154.84" font-size="8.2" fill="#d8d8d8" font-weight="normal" text-anchor="end" textLength="14.00" lengthAdjust="spacingAndGlyphs" >1.2</text><line x1="52.0" y1="151.94" x2="984.0" y2="151.94" stroke="#d0d0d0" stroke-opacity="0.38" stroke-width="0.8" stroke-dasharray="1.6 2.3"/><rect x="48.00" y="163.46" width="2" height="1.1" fill="#d0d0d0"/><text x="44.50" y="166.86" font-size="8.2" fill="#d8d8d8" font-weight="normal" text-anchor="end" textLength="14.00" lengthAdjust="spacingAndGlyphs" >0.7</text><line x1="52.0" y1="163.96" x2="984.0" y2="163.96" stroke="#d0d0d0" stroke-opacity="0.38" stroke-width="0.8" stroke-dasharray="1.6 2.3"/><rect x="48.00" y="175.48" width="2" height="1.1" fill="#d0d0d0"/><text x="44.50" y="178.88" font-size="8.2" fill="#d8d8d8" font-weight="normal" text-anchor="end" textLength="14.00" lengthAdjust="spacingAndGlyphs" >0.2</text><line x1="52.0" y1="175.98" x2="984.0" y2="175.98" stroke="#d0d0d0" stroke-opacity="0.38" stroke-width="0.8" stroke-dasharray="1.6 2.3"/><line x1="50.50" y1="182.50" x2="984.00" y2="182.50" stroke="#9a9a9a" stroke-width="1" /><rect x="79.20" y="182.50" width="1.2" height="1.8" fill="#d0d0d0"/><text x="79.80" y="191.00" font-size="8.2" fill="#d8d8d8" font-weight="normal" text-anchor="middle" textLength="24.50" lengthAdjust="spacingAndGlyphs" >5 150</text><line x1="79.80" y1="67.5" x2="79.80" y2="182.0" stroke="#d0d0d0" stroke-opacity="0.32" stroke-width="0.7" stroke-dasharray="1.2 1.8"/><rect x="134.94" y="182.50" width="1.2" height="1.8" fill="#d0d0d0"/><text x="135.54" y="191.00" font-size="8.2" fill="#d8d8d8" font-weight="normal" text-anchor="middle" textLength="24.50" lengthAdjust="spacingAndGlyphs" >5 200</text><line x1="135.54" y1="67.5" x2="135.54" y2="182.0" stroke="#d0d0d0" stroke-opacity="0.32" stroke-width="0.7" stroke-dasharray="1.2 1.8"/><rect x="190.68" y="182.50" width="1.2" height="1.8" fill="#d0d0d0"/><text x="191.28" y="191.00" font-size="8.2" fill="#d8d8d8" font-weight="normal" text-anchor="middle" textLength="24.50" lengthAdjust="spacingAndGlyphs" >5 250</text><line x1="191.28" y1="67.5" x2="191.28" y2="182.0" stroke="#d0d0d0" stroke-opacity="0.32" stroke-width="0.7" stroke-dasharray="1.2 1.8"/><rect x="246.42" y="182.50" width="1.2" height="1.8" fill="#d0d0d0"/><text x="247.02" y="191.00" font-size="8.2" fill="#d8d8d8" font-weight="normal" text-anchor="middle" textLength="24.50" lengthAdjust="spacingAndGlyphs" >5 300</text><line x1="247.02" y1="67.5" x2="247.02" y2="182.0" stroke="#d0d0d0" stroke-opacity="0.32" stroke-width="0.7" stroke-dasharray="1.2 1.8"/><rect x="302.16" y="182.50" width="1.2" height="1.8" fill="#d0d0d0"/><text x="302.76" y="191.00" font-size="8.2" fill="#d8d8d8" font-weight="normal" text-anchor="middle" textLength="24.50" lengthAdjust="spacingAndGlyphs" >5 350</text><line x1="302.76" y1="67.5" x2="302.76" y2="182.0" stroke="#d0d0d0" stroke-opacity="0.32" stroke-width="0.7" stroke-dasharray="1.2 1.8"/><rect x="357.90" y="182.50" width="1.2" height="1.8" fill="#d0d0d0"/><text x="358.50" y="191.00" font-size="8.2" fill="#d8d8d8" font-weight="normal" text-anchor="middle" textLength="24.50" lengthAdjust="spacingAndGlyphs" >5 400</text><line x1="358.50" y1="67.5" x2="358.50" y2="182.0" stroke="#d0d0d0" stroke-opacity="0.32" stroke-width="0.7" stroke-dasharray="1.2 1.8"/><rect x="413.64" y="182.50" width="1.2" height="1.8" fill="#d0d0d0"/><text x="414.24" y="191.00" font-size="8.2" fill="#d8d8d8" font-weight="normal" text-anchor="middle" textLength="24.50" lengthAdjust="spacingAndGlyphs" >5 450</text><line x1="414.24" y1="67.5" x2="414.24" y2="182.0" stroke="#d0d0d0" stroke-opacity="0.32" stroke-width="0.7" stroke-dasharray="1.2 1.8"/><rect x="469.38" y="182.50" width="1.2" height="1.8" fill="#d0d0d0"/><text x="469.98" y="191.00" font-size="8.2" fill="#d8d8d8" font-weight="normal" text-anchor="middle" textLength="24.50" lengthAdjust="spacingAndGlyphs" >5 500</text><line x1="469.98" y1="67.5" x2="469.98" y2="182.0" stroke="#d0d0d0" stroke-opacity="0.32" stroke-width="0.7" stroke-dasharray="1.2 1.8"/><rect x="525.12" y="182.50" width="1.2" height="1.8" fill="#d0d0d0"/><text x="525.72" y="191.00" font-size="8.2" fill="#d8d8d8" font-weight="normal" text-anchor="middle" textLength="24.50" lengthAdjust="spacingAndGlyphs" >5 550</text><line x1="525.72" y1="67.5" x2="525.72" y2="182.0" stroke="#d0d0d0" stroke-opacity="0.32" stroke-width="0.7" stroke-dasharray="1.2 1.8"/><rect x="580.86" y="182.50" width="1.2" height="1.8" fill="#d0d0d0"/><text x="581.46" y="191.00" font-size="8.2" fill="#d8d8d8" font-weight="normal" text-anchor="middle" textLength="24.50" lengthAdjust="spacingAndGlyphs" >5 600</text><line x1="581.46" y1="67.5" x2="581.46" y2="182.0" stroke="#d0d0d0" stroke-opacity="0.32" stroke-width="0.7" stroke-dasharray="1.2 1.8"/><rect x="636.60" y="182.50" width="1.2" height="1.8" fill="#d0d0d0"/><text x="637.20" y="191.00" font-size="8.2" fill="#d8d8d8" font-weight="normal" text-anchor="middle" textLength="24.50" lengthAdjust="spacingAndGlyphs" >5 650</text><line x1="637.20" y1="67.5" x2="637.20" y2="182.0" stroke="#d0d0d0" stroke-opacity="0.32" stroke-width="0.7" stroke-dasharray="1.2 1.8"/><rect x="692.34" y="182.50" width="1.2" height="1.8" fill="#d0d0d0"/><text x="692.94" y="191.00" font-size="8.2" fill="#d8d8d8" font-weight="normal" text-anchor="middle" textLength="24.50" lengthAdjust="spacingAndGlyphs" >5 700</text><line x1="692.94" y1="67.5" x2="692.94" y2="182.0" stroke="#d0d0d0" stroke-opacity="0.32" stroke-width="0.7" stroke-dasharray="1.2 1.8"/><rect x="748.08" y="182.50" width="1.2" height="1.8" fill="#d0d0d0"/><text x="748.68" y="191.00" font-size="8.2" fill="#d8d8d8" font-weight="normal" text-anchor="middle" textLength="24.50" lengthAdjust="spacingAndGlyphs" >5 750</text><line x1="748.68" y1="67.5" x2="748.68" y2="182.0" stroke="#d0d0d0" stroke-opacity="0.32" stroke-width="0.7" stroke-dasharray="1.2 1.8"/><rect x="803.82" y="182.50" width="1.2" height="1.8" fill="#d0d0d0"/><text x="804.42" y="191.00" font-size="8.2" fill="#d8d8d8" font-weight="normal" text-anchor="middle" textLength="24.50" lengthAdjust="spacingAndGlyphs" >5 800</text><line x1="804.42" y1="67.5" x2="804.42" y2="182.0" stroke="#d0d0d0" stroke-opacity="0.32" stroke-width="0.7" stroke-dasharray="1.2 1.8"/><rect x="859.56" y="182.50" width="1.2" height="1.8" fill="#d0d0d0"/><text x="860.16" y="191.00" font-size="8.2" fill="#d8d8d8" font-weight="normal" text-anchor="middle" textLength="24.50" lengthAdjust="spacingAndGlyphs" >5 850</text><line x1="860.16" y1="67.5" x2="860.16" y2="182.0" stroke="#d0d0d0" stroke-opacity="0.32" stroke-width="0.7" stroke-dasharray="1.2 1.8"/><rect x="915.30" y="182.50" width="1.2" height="1.8" fill="#d0d0d0"/><text x="915.90" y="191.00" font-size="8.2" fill="#d8d8d8" font-weight="normal" text-anchor="middle" textLength="24.50" lengthAdjust="spacingAndGlyphs" >5 900</text><line x1="915.90" y1="67.5" x2="915.90" y2="182.0" stroke="#d0d0d0" stroke-opacity="0.32" stroke-width="0.7" stroke-dasharray="1.2 1.8"/><rect x="971.04" y="182.50" width="1.2" height="1.8" fill="#d0d0d0"/><text x="971.64" y="191.00" font-size="8.2" fill="#d8d8d8" font-weight="normal" text-anchor="middle" textLength="24.50" lengthAdjust="spacingAndGlyphs" >5 950</text><line x1="971.64" y1="67.5" x2="971.64" y2="182.0" stroke="#d0d0d0" stroke-opacity="0.32" stroke-width="0.7" stroke-dasharray="1.2 1.8"/><text x="517.30" y="201.80" font-size="8.3" fill="#e8e8e8" font-weight="bold" text-anchor="middle" textLength="23.00" lengthAdjust="spacingAndGlyphs" >MHz</text><text x="0" y="0" font-size="8.6" fill="#e8e8e8" text-anchor="middle" textLength="83" lengthAdjust="spacingAndGlyphs" transform="translate(20.7 122.8) rotate(-90)">Elapsed Time (minutes)</text><text x="2.00" y="218.00" font-size="8" fill="#f0f0f0" font-weight="bold" text-anchor="start" textLength="76.00" lengthAdjust="spacingAndGlyphs" >Waveform View</text><line x1="56.70" y1="229.00" x2="56.70" y2="344.00" stroke="#9a9a9a" stroke-width="1" /><rect x="54.20" y="234.10" width="2" height="1.1" fill="#d0d0d0"/><text x="50.70" y="237.50" font-size="8.2" fill="#d8d8d8" font-weight="normal" text-anchor="end" textLength="15.00" lengthAdjust="spacingAndGlyphs" >-10</text><line x1="58.2" y1="234.60" x2="984.0" y2="234.60" stroke="#d0d0d0" stroke-opacity="0.38" stroke-width="0.8" stroke-dasharray="1.6 2.3"/><rect x="54.20" y="245.61" width="2" height="1.1" fill="#d0d0d0"/><text x="50.70" y="249.01" font-size="8.2" fill="#d8d8d8" font-weight="normal" text-anchor="end" textLength="15.00" lengthAdjust="spacingAndGlyphs" >-20</text><line x1="58.2" y1="246.11" x2="984.0" y2="246.11" stroke="#d0d0d0" stroke-opacity="0.38" stroke-width="0.8" stroke-dasharray="1.6 2.3"/><rect x="54.20" y="257.12" width="2" height="1.1" fill="#d0d0d0"/><text x="50.70" y="260.52" font-size="8.2" fill="#d8d8d8" font-weight="normal" text-anchor="end" textLength="15.00" lengthAdjust="spacingAndGlyphs" >-30</text><line x1="58.2" y1="257.62" x2="984.0" y2="257.62" stroke="#d0d0d0" stroke-opacity="0.38" stroke-width="0.8" stroke-dasharray="1.6 2.3"/><rect x="54.20" y="268.63" width="2" height="1.1" fill="#d0d0d0"/><text x="50.70" y="272.03" font-size="8.2" fill="#d8d8d8" font-weight="normal" text-anchor="end" textLength="15.00" lengthAdjust="spacingAndGlyphs" >-40</text><line x1="58.2" y1="269.13" x2="984.0" y2="269.13" stroke="#d0d0d0" stroke-opacity="0.38" stroke-width="0.8" stroke-dasharray="1.6 2.3"/><rect x="54.20" y="280.14" width="2" height="1.1" fill="#d0d0d0"/><text x="50.70" y="283.54" font-size="8.2" fill="#d8d8d8" font-weight="normal" text-anchor="end" textLength="15.00" lengthAdjust="spacingAndGlyphs" >-50</text><line x1="58.2" y1="280.64" x2="984.0" y2="280.64" stroke="#d0d0d0" stroke-opacity="0.38" stroke-width="0.8" stroke-dasharray="1.6 2.3"/><rect x="54.20" y="291.65" width="2" height="1.1" fill="#d0d0d0"/><text x="50.70" y="295.05" font-size="8.2" fill="#d8d8d8" font-weight="normal" text-anchor="end" textLength="15.00" lengthAdjust="spacingAndGlyphs" >-60</text><line x1="58.2" y1="292.15" x2="984.0" y2="292.15" stroke="#d0d0d0" stroke-opacity="0.38" stroke-width="0.8" stroke-dasharray="1.6 2.3"/><rect x="54.20" y="303.16" width="2" height="1.1" fill="#d0d0d0"/><text x="50.70" y="306.56" font-size="8.2" fill="#d8d8d8" font-weight="normal" text-anchor="end" textLength="15.00" lengthAdjust="spacingAndGlyphs" >-70</text><line x1="58.2" y1="303.66" x2="984.0" y2="303.66" stroke="#d0d0d0" stroke-opacity="0.38" stroke-width="0.8" stroke-dasharray="1.6 2.3"/><rect x="54.20" y="314.67" width="2" height="1.1" fill="#d0d0d0"/><text x="50.70" y="318.07" font-size="8.2" fill="#d8d8d8" font-weight="normal" text-anchor="end" textLength="15.00" lengthAdjust="spacingAndGlyphs" >-80</text><line x1="58.2" y1="315.17" x2="984.0" y2="315.17" stroke="#d0d0d0" stroke-opacity="0.38" stroke-width="0.8" stroke-dasharray="1.6 2.3"/><rect x="54.20" y="326.18" width="2" height="1.1" fill="#d0d0d0"/><text x="50.70" y="329.58" font-size="8.2" fill="#d8d8d8" font-weight="normal" text-anchor="end" textLength="15.00" lengthAdjust="spacingAndGlyphs" >-90</text><line x1="58.2" y1="326.68" x2="984.0" y2="326.68" stroke="#d0d0d0" stroke-opacity="0.38" stroke-width="0.8" stroke-dasharray="1.6 2.3"/><rect x="54.20" y="337.69" width="2" height="1.1" fill="#d0d0d0"/><text x="50.70" y="341.09" font-size="8.2" fill="#d8d8d8" font-weight="normal" text-anchor="end" textLength="19.60" lengthAdjust="spacingAndGlyphs" >-100</text><line x1="58.2" y1="338.19" x2="984.0" y2="338.19" stroke="#d0d0d0" stroke-opacity="0.38" stroke-width="0.8" stroke-dasharray="1.6 2.3"/><line x1="56.70" y1="343.50" x2="984.00" y2="343.50" stroke="#9a9a9a" stroke-width="1" /><rect x="84.80" y="343.50" width="1.2" height="1.8" fill="#d0d0d0"/><text x="85.40" y="352.30" font-size="8.2" fill="#d8d8d8" font-weight="normal" text-anchor="middle" textLength="24.50" lengthAdjust="spacingAndGlyphs" >5 150</text><rect x="140.19" y="343.50" width="1.2" height="1.8" fill="#d0d0d0"/><text x="140.79" y="352.30" font-size="8.2" fill="#d8d8d8" font-weight="normal" text-anchor="middle" textLength="24.50" lengthAdjust="spacingAndGlyphs" >5 200</text><rect x="195.58" y="343.50" width="1.2" height="1.8" fill="#d0d0d0"/><text x="196.18" y="352.30" font-size="8.2" fill="#d8d8d8" font-weight="normal" text-anchor="middle" textLength="24.50" lengthAdjust="spacingAndGlyphs" >5 250</text><rect x="250.97" y="343.50" width="1.2" height="1.8" fill="#d0d0d0"/><text x="251.57" y="352.30" font-size="8.2" fill="#d8d8d8" font-weight="normal" text-anchor="middle" textLength="24.50" lengthAdjust="spacingAndGlyphs" >5 300</text><rect x="306.36" y="343.50" width="1.2" height="1.8" fill="#d0d0d0"/><text x="306.96" y="352.30" font-size="8.2" fill="#d8d8d8" font-weight="normal" text-anchor="middle" textLength="24.50" lengthAdjust="spacingAndGlyphs" >5 350</text><rect x="361.75" y="343.50" width="1.2" height="1.8" fill="#d0d0d0"/><text x="362.35" y="352.30" font-size="8.2" fill="#d8d8d8" font-weight="normal" text-anchor="middle" textLength="24.50" lengthAdjust="spacingAndGlyphs" >5 400</text><rect x="417.14" y="343.50" width="1.2" height="1.8" fill="#d0d0d0"/><text x="417.74" y="352.30" font-size="8.2" fill="#d8d8d8" font-weight="normal" text-anchor="middle" textLength="24.50" lengthAdjust="spacingAndGlyphs" >5 450</text><rect x="472.53" y="343.50" width="1.2" height="1.8" fill="#d0d0d0"/><text x="473.13" y="352.30" font-size="8.2" fill="#d8d8d8" font-weight="normal" text-anchor="middle" textLength="24.50" lengthAdjust="spacingAndGlyphs" >5 500</text><rect x="527.92" y="343.50" width="1.2" height="1.8" fill="#d0d0d0"/><text x="528.52" y="352.30" font-size="8.2" fill="#d8d8d8" font-weight="normal" text-anchor="middle" textLength="24.50" lengthAdjust="spacingAndGlyphs" >5 550</text><rect x="583.31" y="343.50" width="1.2" height="1.8" fill="#d0d0d0"/><text x="583.91" y="352.30" font-size="8.2" fill="#d8d8d8" font-weight="normal" text-anchor="middle" textLength="24.50" lengthAdjust="spacingAndGlyphs" >5 600</text><rect x="638.70" y="343.50" width="1.2" height="1.8" fill="#d0d0d0"/><text x="639.30" y="352.30" font-size="8.2" fill="#d8d8d8" font-weight="normal" text-anchor="middle" textLength="24.50" lengthAdjust="spacingAndGlyphs" >5 650</text><rect x="694.09" y="343.50" width="1.2" height="1.8" fill="#d0d0d0"/><text x="694.69" y="352.30" font-size="8.2" fill="#d8d8d8" font-weight="normal" text-anchor="middle" textLength="24.50" lengthAdjust="spacingAndGlyphs" >5 700</text><rect x="749.48" y="343.50" width="1.2" height="1.8" fill="#d0d0d0"/><text x="750.08" y="352.30" font-size="8.2" fill="#d8d8d8" font-weight="normal" text-anchor="middle" textLength="24.50" lengthAdjust="spacingAndGlyphs" >5 750</text><rect x="804.87" y="343.50" width="1.2" height="1.8" fill="#d0d0d0"/><text x="805.47" y="352.30" font-size="8.2" fill="#d8d8d8" font-weight="normal" text-anchor="middle" textLength="24.50" lengthAdjust="spacingAndGlyphs" >5 800</text><rect x="860.26" y="343.50" width="1.2" height="1.8" fill="#d0d0d0"/><text x="860.86" y="352.30" font-size="8.2" fill="#d8d8d8" font-weight="normal" text-anchor="middle" textLength="24.50" lengthAdjust="spacingAndGlyphs" >5 850</text><rect x="915.65" y="343.50" width="1.2" height="1.8" fill="#d0d0d0"/><text x="916.25" y="352.30" font-size="8.2" fill="#d8d8d8" font-weight="normal" text-anchor="middle" textLength="24.50" lengthAdjust="spacingAndGlyphs" >5 900</text><rect x="971.04" y="343.50" width="1.2" height="1.8" fill="#d0d0d0"/><text x="971.64" y="352.30" font-size="8.2" fill="#d8d8d8" font-weight="normal" text-anchor="middle" textLength="24.50" lengthAdjust="spacingAndGlyphs" >5 950</text><text x="520.20" y="363.80" font-size="8.3" fill="#e8e8e8" font-weight="bold" text-anchor="middle" textLength="23.00" lengthAdjust="spacingAndGlyphs" >MHz</text><text x="0" y="0" font-size="8.6" fill="#e8e8e8" text-anchor="middle" textLength="66" lengthAdjust="spacingAndGlyphs" transform="translate(21.5 286.2) rotate(-90)">Power Level (dBm)</text><text x="2.00" y="379.80" font-size="8" fill="#f0f0f0" font-weight="bold" text-anchor="start" textLength="72.00" lengthAdjust="spacingAndGlyphs" >Real-time View</text><line x1="56.70" y1="388.00" x2="56.70" y2="506.00" stroke="#9a9a9a" stroke-width="1" /><rect x="54.20" y="387.80" width="2" height="1.1" fill="#d0d0d0"/><text x="50.70" y="391.20" font-size="8.2" fill="#d8d8d8" font-weight="normal" text-anchor="end" textLength="15.00" lengthAdjust="spacingAndGlyphs" >-10</text><line x1="58.2" y1="388.30" x2="983.0" y2="388.30" stroke="#d0d0d0" stroke-opacity="0.38" stroke-width="0.8" stroke-dasharray="1.6 2.3"/><rect x="54.20" y="398.53" width="2" height="1.1" fill="#d0d0d0"/><text x="50.70" y="401.93" font-size="8.2" fill="#d8d8d8" font-weight="normal" text-anchor="end" textLength="15.00" lengthAdjust="spacingAndGlyphs" >-20</text><line x1="58.2" y1="399.03" x2="983.0" y2="399.03" stroke="#d0d0d0" stroke-opacity="0.38" stroke-width="0.8" stroke-dasharray="1.6 2.3"/><rect x="54.20" y="409.26" width="2" height="1.1" fill="#d0d0d0"/><text x="50.70" y="412.66" font-size="8.2" fill="#d8d8d8" font-weight="normal" text-anchor="end" textLength="15.00" lengthAdjust="spacingAndGlyphs" >-30</text><line x1="58.2" y1="409.76" x2="983.0" y2="409.76" stroke="#d0d0d0" stroke-opacity="0.38" stroke-width="0.8" stroke-dasharray="1.6 2.3"/><rect x="54.20" y="419.99" width="2" height="1.1" fill="#d0d0d0"/><text x="50.70" y="423.39" font-size="8.2" fill="#d8d8d8" font-weight="normal" text-anchor="end" textLength="15.00" lengthAdjust="spacingAndGlyphs" >-40</text><line x1="58.2" y1="420.49" x2="983.0" y2="420.49" stroke="#d0d0d0" stroke-opacity="0.38" stroke-width="0.8" stroke-dasharray="1.6 2.3"/><rect x="54.20" y="430.72" width="2" height="1.1" fill="#d0d0d0"/><text x="50.70" y="434.12" font-size="8.2" fill="#d8d8d8" font-weight="normal" text-anchor="end" textLength="15.00" lengthAdjust="spacingAndGlyphs" >-50</text><line x1="58.2" y1="431.22" x2="983.0" y2="431.22" stroke="#d0d0d0" stroke-opacity="0.38" stroke-width="0.8" stroke-dasharray="1.6 2.3"/><rect x="54.20" y="441.45" width="2" height="1.1" fill="#d0d0d0"/><text x="50.70" y="444.85" font-size="8.2" fill="#d8d8d8" font-weight="normal" text-anchor="end" textLength="15.00" lengthAdjust="spacingAndGlyphs" >-60</text><line x1="58.2" y1="441.95" x2="983.0" y2="441.95" stroke="#d0d0d0" stroke-opacity="0.38" stroke-width="0.8" stroke-dasharray="1.6 2.3"/><rect x="54.20" y="452.18" width="2" height="1.1" fill="#d0d0d0"/><text x="50.70" y="455.58" font-size="8.2" fill="#d8d8d8" font-weight="normal" text-anchor="end" textLength="15.00" lengthAdjust="spacingAndGlyphs" >-70</text><line x1="58.2" y1="452.68" x2="983.0" y2="452.68" stroke="#d0d0d0" stroke-opacity="0.38" stroke-width="0.8" stroke-dasharray="1.6 2.3"/><rect x="54.20" y="462.91" width="2" height="1.1" fill="#d0d0d0"/><text x="50.70" y="466.31" font-size="8.2" fill="#d8d8d8" font-weight="normal" text-anchor="end" textLength="15.00" lengthAdjust="spacingAndGlyphs" >-80</text><line x1="58.2" y1="463.41" x2="983.0" y2="463.41" stroke="#d0d0d0" stroke-opacity="0.38" stroke-width="0.8" stroke-dasharray="1.6 2.3"/><rect x="54.20" y="473.64" width="2" height="1.1" fill="#d0d0d0"/><text x="50.70" y="477.04" font-size="8.2" fill="#d8d8d8" font-weight="normal" text-anchor="end" textLength="15.00" lengthAdjust="spacingAndGlyphs" >-90</text><line x1="58.2" y1="474.14" x2="983.0" y2="474.14" stroke="#d0d0d0" stroke-opacity="0.38" stroke-width="0.8" stroke-dasharray="1.6 2.3"/><rect x="54.20" y="484.37" width="2" height="1.1" fill="#d0d0d0"/><text x="50.70" y="487.77" font-size="8.2" fill="#d8d8d8" font-weight="normal" text-anchor="end" textLength="19.60" lengthAdjust="spacingAndGlyphs" >-100</text><line x1="58.2" y1="484.87" x2="983.0" y2="484.87" stroke="#d0d0d0" stroke-opacity="0.38" stroke-width="0.8" stroke-dasharray="1.6 2.3"/><rect x="54.20" y="495.10" width="2" height="1.1" fill="#d0d0d0"/><text x="50.70" y="498.50" font-size="8.2" fill="#d8d8d8" font-weight="normal" text-anchor="end" textLength="19.60" lengthAdjust="spacingAndGlyphs" >-110</text><line x1="58.2" y1="495.60" x2="983.0" y2="495.60" stroke="#d0d0d0" stroke-opacity="0.38" stroke-width="0.8" stroke-dasharray="1.6 2.3"/><line x1="56.70" y1="505.50" x2="983.00" y2="505.50" stroke="#9a9a9a" stroke-width="1" /><rect x="84.90" y="505.50" width="1.2" height="1.8" fill="#d0d0d0"/><text x="85.50" y="513.60" font-size="8.2" fill="#d8d8d8" font-weight="normal" text-anchor="middle" textLength="24.50" lengthAdjust="spacingAndGlyphs" >5 150</text><rect x="140.09" y="505.50" width="1.2" height="1.8" fill="#d0d0d0"/><text x="140.69" y="513.60" font-size="8.2" fill="#d8d8d8" font-weight="normal" text-anchor="middle" textLength="24.50" lengthAdjust="spacingAndGlyphs" >5 200</text><rect x="195.29" y="505.50" width="1.2" height="1.8" fill="#d0d0d0"/><text x="195.89" y="513.60" font-size="8.2" fill="#d8d8d8" font-weight="normal" text-anchor="middle" textLength="24.50" lengthAdjust="spacingAndGlyphs" >5 250</text><rect x="250.49" y="505.50" width="1.2" height="1.8" fill="#d0d0d0"/><text x="251.09" y="513.60" font-size="8.2" fill="#d8d8d8" font-weight="normal" text-anchor="middle" textLength="24.50" lengthAdjust="spacingAndGlyphs" >5 300</text><rect x="305.68" y="505.50" width="1.2" height="1.8" fill="#d0d0d0"/><text x="306.28" y="513.60" font-size="8.2" fill="#d8d8d8" font-weight="normal" text-anchor="middle" textLength="24.50" lengthAdjust="spacingAndGlyphs" >5 350</text><rect x="360.88" y="505.50" width="1.2" height="1.8" fill="#d0d0d0"/><text x="361.48" y="513.60" font-size="8.2" fill="#d8d8d8" font-weight="normal" text-anchor="middle" textLength="24.50" lengthAdjust="spacingAndGlyphs" >5 400</text><rect x="416.07" y="505.50" width="1.2" height="1.8" fill="#d0d0d0"/><text x="416.67" y="513.60" font-size="8.2" fill="#d8d8d8" font-weight="normal" text-anchor="middle" textLength="24.50" lengthAdjust="spacingAndGlyphs" >5 450</text><rect x="471.26" y="505.50" width="1.2" height="1.8" fill="#d0d0d0"/><text x="471.87" y="513.60" font-size="8.2" fill="#d8d8d8" font-weight="normal" text-anchor="middle" textLength="24.50" lengthAdjust="spacingAndGlyphs" >5 500</text><rect x="526.46" y="505.50" width="1.2" height="1.8" fill="#d0d0d0"/><text x="527.06" y="513.60" font-size="8.2" fill="#d8d8d8" font-weight="normal" text-anchor="middle" textLength="24.50" lengthAdjust="spacingAndGlyphs" >5 550</text><rect x="581.66" y="505.50" width="1.2" height="1.8" fill="#d0d0d0"/><text x="582.26" y="513.60" font-size="8.2" fill="#d8d8d8" font-weight="normal" text-anchor="middle" textLength="24.50" lengthAdjust="spacingAndGlyphs" >5 600</text><rect x="636.85" y="505.50" width="1.2" height="1.8" fill="#d0d0d0"/><text x="637.45" y="513.60" font-size="8.2" fill="#d8d8d8" font-weight="normal" text-anchor="middle" textLength="24.50" lengthAdjust="spacingAndGlyphs" >5 650</text><rect x="692.05" y="505.50" width="1.2" height="1.8" fill="#d0d0d0"/><text x="692.65" y="513.60" font-size="8.2" fill="#d8d8d8" font-weight="normal" text-anchor="middle" textLength="24.50" lengthAdjust="spacingAndGlyphs" >5 700</text><rect x="747.24" y="505.50" width="1.2" height="1.8" fill="#d0d0d0"/><text x="747.84" y="513.60" font-size="8.2" fill="#d8d8d8" font-weight="normal" text-anchor="middle" textLength="24.50" lengthAdjust="spacingAndGlyphs" >5 750</text><rect x="802.44" y="505.50" width="1.2" height="1.8" fill="#d0d0d0"/><text x="803.04" y="513.60" font-size="8.2" fill="#d8d8d8" font-weight="normal" text-anchor="middle" textLength="24.50" lengthAdjust="spacingAndGlyphs" >5 800</text><rect x="857.63" y="505.50" width="1.2" height="1.8" fill="#d0d0d0"/><text x="858.23" y="513.60" font-size="8.2" fill="#d8d8d8" font-weight="normal" text-anchor="middle" textLength="24.50" lengthAdjust="spacingAndGlyphs" >5 850</text><rect x="912.83" y="505.50" width="1.2" height="1.8" fill="#d0d0d0"/><text x="913.43" y="513.60" font-size="8.2" fill="#d8d8d8" font-weight="normal" text-anchor="middle" textLength="24.50" lengthAdjust="spacingAndGlyphs" >5 900</text><rect x="968.02" y="505.50" width="1.2" height="1.8" fill="#d0d0d0"/><text x="968.62" y="513.60" font-size="8.2" fill="#d8d8d8" font-weight="normal" text-anchor="middle" textLength="24.50" lengthAdjust="spacingAndGlyphs" >5 950</text><text x="520.20" y="525.00" font-size="8.3" fill="#e8e8e8" font-weight="bold" text-anchor="middle" textLength="23.00" lengthAdjust="spacingAndGlyphs" >MHz</text><text x="0" y="0" font-size="8.6" fill="#e8e8e8" text-anchor="middle" textLength="66" lengthAdjust="spacingAndGlyphs" transform="translate(21.5 443.0) rotate(-90)">Power Level (dBm)</text><defs><linearGradient id="cb1" x1="0" x2="1" y1="0" y2="0"><stop offset="0.000" stop-color="#282838"/><stop offset="0.063" stop-color="#2a2a60"/><stop offset="0.124" stop-color="#2830a8"/><stop offset="0.190" stop-color="#2878b0"/><stop offset="0.241" stop-color="#28a8b0"/><stop offset="0.292" stop-color="#30c0b0"/><stop offset="0.394" stop-color="#30c0a8"/><stop offset="0.470" stop-color="#30c060"/><stop offset="0.572" stop-color="#40c020"/><stop offset="0.648" stop-color="#a0e010"/><stop offset="0.723" stop-color="#f0f800"/><stop offset="0.825" stop-color="#ffff00"/><stop offset="0.877" stop-color="#ffc000"/><stop offset="0.953" stop-color="#ff6000"/><stop offset="1.000" stop-color="#ff3000"/></linearGradient></defs><rect x="738.2" y="49.8" width="245.79999999999995" height="5.800000000000004" fill="url(#cb1)"/><line x1="738.20" y1="57.20" x2="984.00" y2="57.20" stroke="#a8a8a8" stroke-width="1" /><text x="732.80" y="56.40" font-size="7.6" fill="#dcdcdc" font-weight="normal" text-anchor="end" textLength="52.00" lengthAdjust="spacingAndGlyphs" >Power (dBm):</text><text x="740.40" y="65.20" font-size="7.8" fill="#e0e0e0" font-weight="normal" text-anchor="middle" textLength="17.00" lengthAdjust="spacingAndGlyphs" >-105</text><text x="770.60" y="65.20" font-size="7.8" fill="#e0e0e0" font-weight="normal" text-anchor="middle" textLength="13.50" lengthAdjust="spacingAndGlyphs" >-95</text><text x="800.80" y="65.20" font-size="7.8" fill="#e0e0e0" font-weight="normal" text-anchor="middle" textLength="13.50" lengthAdjust="spacingAndGlyphs" >-85</text><text x="831.00" y="65.20" font-size="7.8" fill="#e0e0e0" font-weight="normal" text-anchor="middle" textLength="13.50" lengthAdjust="spacingAndGlyphs" >-75</text><text x="861.20" y="65.20" font-size="7.8" fill="#e0e0e0" font-weight="normal" text-anchor="middle" textLength="13.50" lengthAdjust="spacingAndGlyphs" >-65</text><text x="891.40" y="65.20" font-size="7.8" fill="#e0e0e0" font-weight="normal" text-anchor="middle" textLength="13.50" lengthAdjust="spacingAndGlyphs" >-55</text><text x="921.60" y="65.20" font-size="7.8" fill="#e0e0e0" font-weight="normal" text-anchor="middle" textLength="13.50" lengthAdjust="spacingAndGlyphs" >-45</text><text x="951.80" y="65.20" font-size="7.8" fill="#e0e0e0" font-weight="normal" text-anchor="middle" textLength="13.50" lengthAdjust="spacingAndGlyphs" >-35</text><text x="982.00" y="65.20" font-size="7.8" fill="#e0e0e0" font-weight="normal" text-anchor="middle" textLength="13.50" lengthAdjust="spacingAndGlyphs" >-25</text><defs><linearGradient id="cb2" x1="0" x2="1" y1="0" y2="0"><stop offset="0.000" stop-color="#183060"/><stop offset="0.063" stop-color="#1a3080"/><stop offset="0.089" stop-color="#2040c0"/><stop offset="0.165" stop-color="#20a0c0"/><stop offset="0.241" stop-color="#20c0c8"/><stop offset="0.317" stop-color="#20c0b8"/><stop offset="0.394" stop-color="#20c090"/><stop offset="0.470" stop-color="#20d040"/><stop offset="0.597" stop-color="#80d020"/><stop offset="0.674" stop-color="#d0f000"/><stop offset="0.723" stop-color="#ffff00"/><stop offset="0.800" stop-color="#ffff00"/><stop offset="0.852" stop-color="#ffc000"/><stop offset="0.927" stop-color="#ff7000"/><stop offset="1.000" stop-color="#ff1000"/></linearGradient></defs><rect x="738.2" y="211.8" width="245.79999999999995" height="5.0" fill="url(#cb2)"/><line x1="738.20" y1="218.40" x2="984.00" y2="218.40" stroke="#909090" stroke-width="1" /><text x="732.70" y="217.40" font-size="7.6" fill="#dcdcdc" font-weight="normal" text-anchor="end" textLength="33.00" lengthAdjust="spacingAndGlyphs" ># of hits:</text><text x="738.30" y="226.20" font-size="7.8" fill="#e0e0e0" font-weight="normal" text-anchor="middle" textLength="5.50" lengthAdjust="spacingAndGlyphs" >0</text><text x="759.77" y="226.20" font-size="7.8" fill="#e0e0e0" font-weight="normal" text-anchor="middle" textLength="5.50" lengthAdjust="spacingAndGlyphs" >5</text><text x="781.24" y="226.20" font-size="7.8" fill="#e0e0e0" font-weight="normal" text-anchor="middle" textLength="10.00" lengthAdjust="spacingAndGlyphs" >10</text><text x="802.71" y="226.20" font-size="7.8" fill="#e0e0e0" font-weight="normal" text-anchor="middle" textLength="10.00" lengthAdjust="spacingAndGlyphs" >15</text><text x="824.18" y="226.20" font-size="7.8" fill="#e0e0e0" font-weight="normal" text-anchor="middle" textLength="10.00" lengthAdjust="spacingAndGlyphs" >20</text><text x="845.65" y="226.20" font-size="7.8" fill="#e0e0e0" font-weight="normal" text-anchor="middle" textLength="10.00" lengthAdjust="spacingAndGlyphs" >25</text><text x="867.12" y="226.20" font-size="7.8" fill="#e0e0e0" font-weight="normal" text-anchor="middle" textLength="10.00" lengthAdjust="spacingAndGlyphs" >30</text><text x="888.59" y="226.20" font-size="7.8" fill="#e0e0e0" font-weight="normal" text-anchor="middle" textLength="10.00" lengthAdjust="spacingAndGlyphs" >35</text><text x="910.06" y="226.20" font-size="7.8" fill="#e0e0e0" font-weight="normal" text-anchor="middle" textLength="10.00" lengthAdjust="spacingAndGlyphs" >40</text><text x="931.53" y="226.20" font-size="7.8" fill="#e0e0e0" font-weight="normal" text-anchor="middle" textLength="10.00" lengthAdjust="spacingAndGlyphs" >45</text><text x="953.00" y="226.20" font-size="7.8" fill="#e0e0e0" font-weight="normal" text-anchor="middle" textLength="10.00" lengthAdjust="spacingAndGlyphs" >50</text><text x="974.47" y="226.20" font-size="7.8" fill="#e0e0e0" font-weight="normal" text-anchor="middle" textLength="10.00" lengthAdjust="spacingAndGlyphs" >55</text><line x1="770.00" y1="378.80" x2="785.00" y2="378.80" stroke="#c8c000" stroke-width="1.2" /><text x="788.80" y="380.80" font-size="7.8" fill="#e0e0e0" font-weight="normal" text-anchor="start" textLength="30.00" lengthAdjust="spacingAndGlyphs" >Current</text><path d="M825 381.6 A3.8 3.8 0 0 1 832.6 381.6 Z" fill="#00e000"/><text x="836.50" y="380.80" font-size="7.8" fill="#e0e0e0" font-weight="normal" text-anchor="start" textLength="33.00" lengthAdjust="spacingAndGlyphs" >Average</text><path d="M876 381.6 A3.9 3.9 0 0 1 883.8 381.6 Z" fill="#1010ff"/><text x="887.00" y="380.80" font-size="7.8" fill="#e0e0e0" font-weight="normal" text-anchor="start" textLength="36.50" lengthAdjust="spacingAndGlyphs" >Maximum</text><rect x="929.50" y="375.50" width="6.00" height="6.50" fill="#3f8090" /><text x="939.00" y="380.80" font-size="7.8" fill="#e0e0e0" font-weight="normal" text-anchor="start" textLength="38.00" lengthAdjust="spacingAndGlyphs" >Channels</text><rect x="983.60" y="67.00" width="0.90" height="115.50" fill="#505050" /><rect x="983.60" y="229.00" width="0.90" height="114.50" fill="#505050" /><rect x="983.60" y="388.50" width="0.90" height="117.00" fill="#505050" /><rect x="57.50" y="496.20" width="926.00" height="0.90" fill="#6a6a6a" /><rect x="99.20" y="497.50" width="3.60" height="7.50" fill="#3a8898" /><rect x="100.50" y="499.00" width="1.00" height="4.50" fill="#8ad0d8" opacity="0.6"/><rect x="130.10" y="497.50" width="3.60" height="7.50" fill="#3a8898" /><rect x="131.40" y="499.00" width="1.00" height="4.50" fill="#8ad0d8" opacity="0.6"/><rect x="161.00" y="497.50" width="3.60" height="7.50" fill="#3a8898" /><rect x="162.30" y="499.00" width="1.00" height="4.50" fill="#8ad0d8" opacity="0.6"/><rect x="191.90" y="497.50" width="3.60" height="7.50" fill="#3a8898" /><rect x="193.20" y="499.00" width="1.00" height="4.50" fill="#8ad0d8" opacity="0.6"/><rect x="222.80" y="497.50" width="3.60" height="7.50" fill="#3a8898" /><rect x="224.10" y="499.00" width="1.00" height="4.50" fill="#8ad0d8" opacity="0.6"/><rect x="253.70" y="497.50" width="3.60" height="7.50" fill="#3a8898" /><rect x="255.00" y="499.00" width="1.00" height="4.50" fill="#8ad0d8" opacity="0.6"/><rect x="284.60" y="497.50" width="3.60" height="7.50" fill="#3a8898" /><rect x="285.90" y="499.00" width="1.00" height="4.50" fill="#8ad0d8" opacity="0.6"/><rect x="315.50" y="497.50" width="3.60" height="7.50" fill="#3a8898" /><rect x="316.80" y="499.00" width="1.00" height="4.50" fill="#8ad0d8" opacity="0.6"/><rect x="346.40" y="497.50" width="3.60" height="7.50" fill="#3a8898" /><rect x="347.70" y="499.00" width="1.00" height="4.50" fill="#8ad0d8" opacity="0.6"/><rect x="377.30" y="497.50" width="3.60" height="7.50" fill="#3a8898" /><rect x="378.60" y="499.00" width="1.00" height="4.50" fill="#8ad0d8" opacity="0.6"/><rect x="408.20" y="497.50" width="3.60" height="7.50" fill="#3a8898" /><rect x="409.50" y="499.00" width="1.00" height="4.50" fill="#8ad0d8" opacity="0.6"/><rect x="439.10" y="497.50" width="3.60" height="7.50" fill="#3a8898" /><rect x="440.40" y="499.00" width="1.00" height="4.50" fill="#8ad0d8" opacity="0.6"/><rect x="470.00" y="497.50" width="3.60" height="7.50" fill="#3a8898" /><rect x="471.30" y="499.00" width="1.00" height="4.50" fill="#8ad0d8" opacity="0.6"/><rect x="500.90" y="497.50" width="3.60" height="7.50" fill="#3a8898" /><rect x="502.20" y="499.00" width="1.00" height="4.50" fill="#8ad0d8" opacity="0.6"/><rect x="531.80" y="497.50" width="3.60" height="7.50" fill="#3a8898" /><rect x="533.10" y="499.00" width="1.00" height="4.50" fill="#8ad0d8" opacity="0.6"/><rect x="562.70" y="497.50" width="3.60" height="7.50" fill="#3a8898" /><rect x="564.00" y="499.00" width="1.00" height="4.50" fill="#8ad0d8" opacity="0.6"/><rect x="593.60" y="497.50" width="3.60" height="7.50" fill="#3a8898" /><rect x="594.90" y="499.00" width="1.00" height="4.50" fill="#8ad0d8" opacity="0.6"/><rect x="624.50" y="497.50" width="3.60" height="7.50" fill="#3a8898" /><rect x="625.80" y="499.00" width="1.00" height="4.50" fill="#8ad0d8" opacity="0.6"/><rect x="655.40" y="497.50" width="3.60" height="7.50" fill="#3a8898" /><rect x="656.70" y="499.00" width="1.00" height="4.50" fill="#8ad0d8" opacity="0.6"/><rect x="686.30" y="497.50" width="3.60" height="7.50" fill="#3a8898" /><rect x="687.60" y="499.00" width="1.00" height="4.50" fill="#8ad0d8" opacity="0.6"/><rect x="717.20" y="497.50" width="3.60" height="7.50" fill="#3a8898" /><rect x="718.50" y="499.00" width="1.00" height="4.50" fill="#8ad0d8" opacity="0.6"/><rect x="748.10" y="497.50" width="3.60" height="7.50" fill="#3a8898" /><rect x="749.40" y="499.00" width="1.00" height="4.50" fill="#8ad0d8" opacity="0.6"/><rect x="779.00" y="497.50" width="3.60" height="7.50" fill="#3a8898" /><rect x="780.30" y="499.00" width="1.00" height="4.50" fill="#8ad0d8" opacity="0.6"/><rect x="809.90" y="497.50" width="3.60" height="7.50" fill="#3a8898" /><rect x="811.20" y="499.00" width="1.00" height="4.50" fill="#8ad0d8" opacity="0.6"/><rect x="840.80" y="497.50" width="3.60" height="7.50" fill="#3a8898" /><rect x="842.10" y="499.00" width="1.00" height="4.50" fill="#8ad0d8" opacity="0.6"/><rect x="871.70" y="497.50" width="3.60" height="7.50" fill="#3a8898" /><rect x="873.00" y="499.00" width="1.00" height="4.50" fill="#8ad0d8" opacity="0.6"/><rect x="902.60" y="497.50" width="3.60" height="7.50" fill="#3a8898" /><rect x="903.90" y="499.00" width="1.00" height="4.50" fill="#8ad0d8" opacity="0.6"/><rect x="933.50" y="497.50" width="3.60" height="7.50" fill="#3a8898" /><rect x="934.80" y="499.00" width="1.00" height="4.50" fill="#8ad0d8" opacity="0.6"/><rect x="964.40" y="497.50" width="3.60" height="7.50" fill="#3a8898" /><rect x="965.70" y="499.00" width="1.00" height="4.50" fill="#8ad0d8" opacity="0.6"/><line x1="57.50" y1="495.80" x2="85.00" y2="495.80" stroke="#8a8a20" stroke-width="1.1" /><polygon points="85.0,495.6 85.0,476.2 86.5,476.2 88.0,476.3 89.5,476.4 91.0,476.8 92.5,476.9 94.0,476.9 95.5,476.9 97.0,476.9 98.5,476.9 100.0,476.9 101.5,476.7 103.0,476.8 104.5,476.9 106.0,477.2 107.5,477.6 109.0,477.2 110.5,477.7 112.0,477.5 113.5,477.7 115.0,477.6 116.5,484.8 118.0,484.9 119.5,485.1 121.0,485.6 122.5,485.1 124.0,484.6 125.5,484.3 127.0,485.2 128.5,485.4 130.0,485.3 131.5,485.2 133.0,485.2 134.5,485.2 136.0,485.1 137.5,485.2 139.0,484.9 140.5,484.7 142.0,484.6 143.5,484.7 145.0,484.7 146.5,484.4 148.0,478.1 149.5,477.9 151.0,477.8 152.5,477.7 154.0,478.4 155.5,478.6 157.0,478.6 158.5,478.1 160.0,477.7 161.5,477.8 163.0,478.1 164.5,478.4 166.0,478.6 167.5,478.3 169.0,478.7 170.5,478.7 172.0,478.7 173.5,478.7 175.0,473.8 176.5,473.9 178.0,473.8 179.5,474.1 181.0,474.0 182.5,474.1 184.0,474.0 185.5,473.6 187.0,473.1 188.5,473.2 190.0,473.4 191.5,473.4 193.0,473.4 194.5,473.4 196.0,472.9 197.5,473.1 199.0,472.8 200.5,473.3 202.0,472.8 203.5,473.1 205.0,472.8 206.5,472.9 208.0,472.9 209.5,472.8 211.0,480.4 212.5,480.5 214.0,480.8 215.5,480.8 217.0,481.0 218.5,480.7 220.0,475.3 221.5,475.2 223.0,475.2 224.5,475.2 226.0,475.2 227.5,475.4 229.0,475.5 230.5,475.2 232.0,475.4 233.5,474.9 235.0,475.3 236.5,475.1 238.0,483.8 239.5,483.2 241.0,483.4 242.5,483.3 244.0,484.0 245.5,483.8 247.0,484.2 248.5,483.9 250.0,484.1 251.5,483.8 253.0,483.5 254.5,483.5 256.0,483.5 257.5,483.3 259.0,483.8 260.5,483.7 262.0,484.2 263.5,483.8 265.0,483.6 266.5,483.5 268.0,483.8 269.5,483.5 271.0,480.1 272.5,480.3 274.0,480.2 275.5,480.4 277.0,480.6 278.5,480.8 280.0,480.4 281.5,480.6 283.0,480.8 284.5,481.0 286.0,480.8 287.5,480.5 289.0,480.5 290.5,480.6 292.0,480.8 293.5,480.5 295.0,480.9 296.5,480.8 298.0,480.5 299.5,480.4 301.0,478.2 302.5,478.4 304.0,478.2 305.5,478.2 307.0,478.1 308.5,478.4 310.0,478.4 311.5,478.0 313.0,477.5 314.5,477.1 316.0,477.4 317.5,477.6 319.0,477.8 320.5,477.8 322.0,477.8 323.5,477.3 325.0,476.9 326.5,477.7 328.0,478.1 329.5,478.0 331.0,477.5 332.5,477.3 334.0,464.2 335.5,463.9 337.0,463.8 338.5,464.0 340.0,463.9 341.5,463.2 343.0,462.6 344.5,462.3 346.0,462.5 347.5,462.7 349.0,462.6 350.5,461.4 352.0,461.1 353.5,461.1 355.0,461.3 356.5,461.1 358.0,461.2 359.5,461.0 361.0,460.9 362.5,460.6 364.0,460.8 365.5,460.5 367.0,460.5 368.5,460.4 370.0,460.4 371.5,460.3 373.0,460.0 374.5,460.3 376.0,461.6 377.5,462.1 379.0,462.1 380.5,462.3 382.0,462.5 383.5,463.0 385.0,463.3 386.5,463.3 388.0,463.3 389.5,463.2 391.0,463.4 392.5,463.9 394.0,463.9 395.5,483.6 397.0,483.4 398.5,483.3 400.0,483.3 401.5,483.4 403.0,483.5 404.5,483.8 406.0,483.7 407.5,484.4 409.0,484.2 410.5,484.0 412.0,483.7 413.5,483.8 415.0,483.8 416.5,484.0 418.0,484.2 419.5,492.8 421.0,492.9 422.5,492.6 424.0,492.6 425.5,492.1 427.0,492.7 428.5,492.4 430.0,492.5 431.5,492.7 433.0,493.2 434.5,493.0 436.0,492.3 437.5,492.3 439.0,492.6 440.5,492.5 442.0,492.4 443.5,492.3 445.0,492.6 446.5,492.9 448.0,492.6 449.5,492.3 451.0,491.8 452.5,492.0 454.0,492.3 455.5,492.5 457.0,487.1 458.5,486.8 460.0,486.9 461.5,486.8 463.0,486.9 464.5,487.0 466.0,487.0 467.5,486.9 469.0,487.0 470.5,487.0 472.0,487.1 473.5,486.7 475.0,486.5 476.5,486.5 478.0,487.1 479.5,487.4 481.0,487.1 482.5,486.7 484.0,486.7 485.5,486.9 487.0,481.7 488.5,481.5 490.0,481.3 491.5,481.4 493.0,481.4 494.5,481.3 496.0,481.5 497.5,481.4 499.0,481.8 500.5,481.9 502.0,481.8 503.5,481.6 505.0,481.3 506.5,481.1 508.0,481.4 509.5,482.3 511.0,482.2 512.5,482.3 514.0,481.9 515.5,482.1 517.0,482.1 518.5,481.9 520.0,484.8 521.5,484.8 523.0,484.8 524.5,485.0 526.0,484.9 527.5,484.9 529.0,485.0 530.5,485.2 532.0,485.3 533.5,485.0 535.0,484.7 536.5,484.6 538.0,485.0 539.5,485.0 541.0,485.5 542.5,485.4 544.0,485.2 545.5,484.9 547.0,484.9 548.5,484.8 550.0,491.6 551.5,491.5 553.0,491.6 554.5,491.5 556.0,491.4 557.5,491.2 559.0,491.0 560.5,491.2 562.0,491.2 563.5,491.4 565.0,491.5 566.5,491.2 568.0,490.8 569.5,491.1 571.0,491.6 572.5,491.3 574.0,490.9 575.5,490.7 577.0,490.6 578.5,490.7 580.0,491.1 581.5,491.2 583.0,491.1 584.5,491.2 586.0,491.2 587.5,491.1 589.0,490.9 590.5,490.9 592.0,490.8 593.5,490.9 595.0,490.6 596.5,490.6 598.0,490.5 599.5,491.0 601.0,490.8 602.5,491.0 604.0,490.9 605.5,490.6 607.0,491.1 608.5,491.2 610.0,491.9 611.5,491.1 613.0,490.6 614.5,490.5 616.0,490.7 617.5,490.6 619.0,490.8 620.5,490.7 622.0,490.7 623.5,490.5 625.0,490.4 626.5,490.1 628.0,490.4 629.5,490.2 631.0,490.9 632.5,490.3 634.0,490.7 635.5,490.6 637.0,490.7 638.5,490.8 640.0,490.7 641.5,490.6 643.0,490.6 644.5,490.6 646.0,490.5 647.5,490.7 649.0,490.2 650.5,490.1 652.0,490.5 653.5,490.5 655.0,490.7 656.5,490.9 658.0,490.7 659.5,490.4 661.0,490.3 662.5,490.7 664.0,490.9 665.5,490.7 667.0,490.4 668.5,490.4 670.0,490.2 671.5,490.0 673.0,488.0 674.5,487.9 676.0,488.4 677.5,488.3 679.0,488.2 680.5,488.0 682.0,488.2 683.5,487.9 685.0,487.7 686.5,487.5 688.0,487.4 689.5,487.8 691.0,488.2 692.5,488.3 694.0,488.3 695.5,488.4 697.0,488.2 698.5,487.8 700.0,487.7 701.5,487.8 703.0,488.0 704.5,486.9 706.0,486.7 707.5,486.9 709.0,487.4 710.5,487.6 712.0,487.8 713.5,487.4 715.0,487.6 716.5,487.5 718.0,487.1 719.5,487.0 721.0,486.9 722.5,487.1 724.0,487.3 725.5,487.4 727.0,487.1 728.5,487.3 730.0,487.3 731.5,487.0 733.0,487.1 734.5,476.7 736.0,476.4 737.5,476.0 739.0,476.1 740.5,476.6 742.0,476.4 743.5,476.2 745.0,476.3 746.5,476.0 748.0,476.3 749.5,476.2 751.0,476.3 752.5,476.2 754.0,476.2 755.5,476.2 757.0,476.2 758.5,476.2 760.0,476.1 761.5,476.3 763.0,476.4 764.5,476.6 766.0,480.9 767.5,480.5 769.0,480.6 770.5,480.8 772.0,480.6 773.5,480.3 775.0,480.8 776.5,480.7 778.0,480.5 779.5,480.7 781.0,481.0 782.5,480.8 784.0,480.5 785.5,480.5 787.0,480.6 788.5,480.8 790.0,480.7 791.5,480.1 793.0,480.3 794.5,480.7 796.0,488.6 797.5,488.4 799.0,488.4 800.5,488.4 802.0,488.0 803.5,488.1 805.0,488.2 806.5,488.1 808.0,487.8 809.5,487.9 811.0,487.5 812.5,487.5 814.0,487.8 815.5,487.9 817.0,488.1 818.5,488.4 820.0,488.2 821.5,488.5 823.0,488.4 824.5,488.3 826.0,488.3 827.5,487.9 829.0,492.5 830.5,492.1 832.0,492.1 833.5,492.4 835.0,492.3 836.5,492.3 838.0,492.6 839.5,493.0 841.0,493.1 842.5,492.9 844.0,492.4 845.5,492.2 847.0,492.5 848.5,492.9 850.0,493.0 851.5,492.6 853.0,492.2 854.5,492.2 856.0,492.2 857.5,492.7 859.0,493.0 860.5,492.8 862.0,492.7 863.5,492.5 865.0,492.3 866.5,492.0 868.0,492.0 869.5,492.1 871.0,492.1 872.5,492.4 874.0,492.7 875.5,492.4 877.0,492.5 878.5,492.1 880.0,491.8 881.5,492.1 883.0,492.3 884.5,492.6 886.0,492.6 887.5,492.3 889.0,492.7 890.5,492.6 892.0,493.0 893.5,492.5 895.0,492.2 896.5,492.0 898.0,492.1 899.5,492.0 901.0,491.8 902.5,492.3 904.0,492.0 905.5,491.9 907.0,491.8 908.5,492.1 910.0,492.4 911.5,492.4 913.0,492.3 914.5,492.2 916.0,492.5 917.5,492.7 919.0,493.2 920.5,493.1 922.0,492.7 923.5,492.2 925.0,492.4 926.5,492.6 928.0,492.3 929.5,492.0 931.0,492.6 932.5,492.9 934.0,492.6 935.5,492.3 937.0,492.2 938.5,492.3 940.0,492.3 941.5,492.6 943.0,492.8 944.5,492.3 946.0,492.5 947.5,492.4 949.0,492.8 950.5,492.3 952.0,492.2 953.5,492.3 955.0,492.4 956.5,492.3 958.0,492.4 959.5,492.6 961.0,492.4 962.5,492.2 964.0,491.7 965.5,492.2 967.0,492.1 968.5,492.3 970.0,492.5 971.5,492.4 973.0,492.3 974.5,492.3 976.0,492.3 977.5,492.5 979.0,492.6 980.5,492.5 982.0,492.4 983.5,495.6" fill="#00a000"/><polyline points="85.0,464.2 85.5,484.4 86.0,472.5 86.5,481.5 87.0,476.1 87.5,482.5 88.0,471.6 88.5,479.2 89.0,478.8 89.5,481.3 90.0,478.6 90.5,481.6 91.0,480.8 91.5,485.7 92.0,480.2 92.5,495.1 93.0,490.5 93.5,495.1 94.0,477.6 94.5,494.6 95.0,482.8 95.5,495.1 96.0,485.1 96.5,489.6 97.0,490.0 97.5,491.7 98.0,478.9 98.5,492.6 99.0,478.8 99.5,492.0 100.0,482.4 100.5,492.4 101.0,484.7 101.5,494.5 102.0,486.2 102.5,494.2 103.0,485.0 103.5,489.4 104.0,473.3 104.5,488.0 105.0,483.0 105.5,485.6 106.0,473.0 106.5,488.7 107.0,479.9 107.5,485.7 108.0,478.8 108.5,489.3 109.0,481.4 109.5,494.6 110.0,485.8 110.5,493.0 111.0,485.8 111.5,491.3 112.0,484.9 112.5,493.1 113.0,486.2 113.5,493.4 114.0,487.1 114.5,488.1 115.0,482.1 115.5,489.5 116.0,480.9 116.5,491.5 117.0,483.9 117.5,485.6 118.0,481.1 118.5,489.3 119.0,474.7 119.5,487.2 120.0,483.9 120.5,489.3 121.0,486.2 121.5,494.0 122.0,486.1 122.5,491.1 123.0,481.5 123.5,491.4 124.0,487.4 124.5,489.3 125.0,482.0 125.5,494.2 126.0,482.6 126.5,486.3 127.0,483.1 127.5,488.3 128.0,486.6 128.5,489.8 129.0,484.0 129.5,491.4 130.0,483.5 130.5,492.0 131.0,483.6 131.5,492.0 132.0,488.2 132.5,495.1 133.0,487.9 133.5,494.9 134.0,486.3 134.5,492.8 135.0,490.3 135.5,492.2 136.0,479.3 136.5,493.7 137.0,479.0 137.5,489.6 138.0,481.9 138.5,490.0 139.0,484.4 139.5,489.3 140.0,480.4 140.5,485.3 141.0,480.3 141.5,484.5 142.0,482.8 142.5,490.2 143.0,483.6 143.5,492.5 144.0,485.5 144.5,489.8 145.0,480.4 145.5,491.3 146.0,482.5 146.5,494.8 147.0,472.7 147.5,482.9 148.0,476.0 148.5,481.9 149.0,467.5 149.5,487.9 150.0,478.0 150.5,485.2 151.0,475.4 151.5,478.5 152.0,476.2 152.5,480.9 153.0,473.5 153.5,479.3 154.0,472.8 154.5,479.8 155.0,471.6 155.5,477.3 156.0,474.3 156.5,479.1 157.0,476.0 157.5,481.4 158.0,476.9 158.5,485.6 159.0,478.0 159.5,486.4 160.0,481.0 160.5,487.9 161.0,476.5 161.5,484.8 162.0,486.5 162.5,488.9 163.0,477.1 163.5,490.8 164.0,484.2 164.5,488.1 165.0,483.6 165.5,488.8 166.0,487.1 166.5,489.5 167.0,479.6 167.5,491.5 168.0,483.0 168.5,492.6 169.0,474.7 169.5,493.5 170.0,486.8 170.5,492.1 171.0,487.9 171.5,493.2 172.0,483.0 172.5,495.1 173.0,487.6 173.5,488.9 174.0,485.7 174.5,490.7 175.0,467.1 175.5,478.0 176.0,467.4 176.5,479.8 177.0,470.3 177.5,478.1 178.0,463.3 178.5,473.8 179.0,467.6 179.5,473.5 180.0,467.9 180.5,472.2 181.0,461.7 181.5,472.2 182.0,471.4 182.5,468.0 183.0,471.4 183.5,477.2 184.0,468.2 184.5,475.9 185.0,465.9 185.5,478.7 186.0,470.3 186.5,478.1 187.0,474.8 187.5,480.8 188.0,467.7 188.5,481.4 189.0,477.2 189.5,478.4 190.0,473.9 190.5,483.1 191.0,464.8 191.5,477.5 192.0,468.5 192.5,477.0 193.0,466.2 193.5,477.2 194.0,468.2 194.5,478.7 195.0,473.2 195.5,475.3 196.0,475.3 196.5,478.2 197.0,463.2 197.5,477.5 198.0,466.6 198.5,473.5 199.0,466.3 199.5,472.8 200.0,467.8 200.5,478.0 201.0,464.3 201.5,476.8 202.0,472.9 202.5,478.4 203.0,466.4 203.5,480.0 204.0,465.7 204.5,481.1 205.0,475.7 205.5,478.8 206.0,473.9 206.5,481.1 207.0,470.2 207.5,476.2 208.0,474.0 208.5,480.2 209.0,474.1 209.5,477.5 210.0,485.6 210.5,493.3 211.0,477.2 211.5,487.6 212.0,483.7 212.5,494.6 213.0,481.8 213.5,489.5 214.0,478.4 214.5,483.9 215.0,481.1 215.5,488.6 216.0,479.1 216.5,494.9 217.0,485.7 217.5,490.0 218.0,487.9 218.5,490.2 219.0,480.0 219.5,493.0 220.0,481.6 220.5,488.8 221.0,480.0 221.5,489.3 222.0,481.1 222.5,488.2 223.0,479.2 223.5,490.5 224.0,480.4 224.5,488.3 225.0,470.1 225.5,488.3 226.0,476.2 226.5,487.3 227.0,478.5 227.5,483.8 228.0,477.8 228.5,485.1 229.0,475.3 229.5,482.9 230.0,479.9 230.5,481.8 231.0,477.5 231.5,483.9 232.0,483.2 232.5,484.4 233.0,475.4 233.5,487.4 234.0,471.9 234.5,486.3 235.0,484.2 235.5,487.0 236.0,483.8 236.5,485.6 237.0,475.6 237.5,485.2 238.0,478.8 238.5,486.7 239.0,486.3 239.5,488.3 240.0,482.4 240.5,490.2 241.0,479.0 241.5,481.9 242.0,486.9 242.5,489.5 243.0,472.6 243.5,489.6 244.0,483.3 244.5,495.1 245.0,472.7 245.5,488.2 246.0,483.8 246.5,489.7 247.0,479.9 247.5,490.9 248.0,484.2 248.5,489.8 249.0,483.0 249.5,494.3 250.0,490.3 250.5,493.5 251.0,487.9 251.5,488.1 252.0,481.9 252.5,491.5 253.0,486.7 253.5,487.4 254.0,483.0 254.5,490.4 255.0,482.9 255.5,488.3 256.0,479.0 256.5,491.6 257.0,480.8 257.5,487.2 258.0,479.4 258.5,489.4 259.0,486.7 259.5,493.1 260.0,482.1 260.5,491.0 261.0,485.0 261.5,492.6 262.0,484.3 262.5,487.1 263.0,480.8 263.5,487.0 264.0,478.7 264.5,486.0 265.0,483.2 265.5,486.6 266.0,484.2 266.5,488.3 267.0,485.2 267.5,487.6 268.0,483.1 268.5,494.9 269.0,488.2 269.5,495.1 270.0,479.0 270.5,482.3 271.0,472.5 271.5,479.1 272.0,479.3 272.5,484.4 273.0,478.6 273.5,481.6 274.0,478.5 274.5,484.9 275.0,474.5 275.5,480.7 276.0,475.2 276.5,481.3 277.0,470.1 277.5,491.0 278.0,472.1 278.5,482.4 279.0,473.4 279.5,480.0 280.0,475.9 280.5,480.8 281.0,477.9 281.5,488.8 282.0,480.0 282.5,485.2 283.0,479.0 283.5,486.7 284.0,473.6 284.5,482.5 285.0,479.2 285.5,482.9 286.0,470.6 286.5,478.7 287.0,469.2 287.5,483.9 288.0,471.1 288.5,477.3 289.0,468.9 289.5,476.7 290.0,472.0 290.5,476.4 291.0,475.5 291.5,480.1 292.0,469.4 292.5,487.3 293.0,477.2 293.5,483.2 294.0,474.9 294.5,479.5 295.0,468.3 295.5,481.0 296.0,471.1 296.5,479.8 297.0,476.1 297.5,477.4 298.0,470.5 298.5,474.4 299.0,474.2 299.5,478.3 300.0,468.8 300.5,483.6 301.0,471.9 301.5,480.0 302.0,473.0 302.5,480.0 303.0,475.8 303.5,481.5 304.0,469.9 304.5,482.2 305.0,478.5 305.5,485.9 306.0,481.8 306.5,482.4 307.0,476.9 307.5,485.1 308.0,482.2 308.5,487.8 309.0,472.8 309.5,484.9 310.0,461.3 310.5,470.9 311.0,467.8 311.5,473.2 312.0,461.7 312.5,466.8 313.0,464.5 313.5,474.6 314.0,456.3 314.5,471.1 315.0,465.3 315.5,472.3 316.0,464.7 316.5,472.6 317.0,466.8 317.5,476.3 318.0,471.6 318.5,473.5 319.0,468.5 319.5,479.5 320.0,470.4 320.5,474.2 321.0,469.7 321.5,474.7 322.0,468.6 322.5,472.0 323.0,464.2 323.5,470.5 324.0,468.3 324.5,473.1 325.0,464.8 325.5,470.9 326.0,471.4 326.5,471.9 327.0,460.5 327.5,472.6 328.0,462.0 328.5,468.0 329.0,463.2 329.5,466.7 330.0,461.0 330.5,463.5 331.0,459.5 331.5,469.1 332.0,462.3 332.5,467.7 333.0,463.4 333.5,468.3 334.0,448.2 334.5,454.5 335.0,449.4 335.5,454.3 336.0,451.4 336.5,455.8 337.0,444.8 337.5,459.5 338.0,451.3 338.5,461.5 339.0,453.1 339.5,456.3 340.0,449.2 340.5,457.5 341.0,443.2 341.5,461.8 342.0,453.1 342.5,459.3 343.0,455.5 343.5,457.8 344.0,457.7 344.5,458.8 345.0,452.0 345.5,459.9 346.0,451.6 346.5,458.3 347.0,451.2 347.5,457.5 348.0,452.8 348.5,455.2 349.0,444.4 349.5,452.9 350.0,447.2 350.5,454.1 351.0,445.1 351.5,460.6 352.0,445.2 352.5,457.5 353.0,452.2 353.5,454.8 354.0,447.3 354.5,456.7 355.0,452.7 355.5,453.6 356.0,452.5 356.5,455.4 357.0,442.8 357.5,454.1 358.0,441.8 358.5,452.9 359.0,446.4 359.5,453.2 360.0,440.1 360.5,460.0 361.0,454.4 361.5,462.5 362.0,452.6 362.5,459.9 363.0,456.5 363.5,462.0 364.0,456.9 364.5,459.6 365.0,454.3 365.5,458.0 366.0,453.6 366.5,453.7 367.0,444.7 367.5,453.9 368.0,445.0 368.5,452.2 369.0,448.9 369.5,452.4 370.0,447.9 370.5,454.0 371.0,452.4 371.5,460.7 372.0,454.4 372.5,461.5 373.0,455.8 373.5,458.3 374.0,448.2 374.5,455.2 375.0,452.6 375.5,456.4 376.0,451.4 376.5,453.5 377.0,442.0 377.5,450.9 378.0,449.1 378.5,454.3 379.0,449.3 379.5,457.4 380.0,444.1 380.5,452.9 381.0,442.2 381.5,454.1 382.0,446.9 382.5,451.2 383.0,440.8 383.5,454.3 384.0,444.8 384.5,457.4 385.0,452.5 385.5,458.6 386.0,443.5 386.5,455.3 387.0,450.5 387.5,458.0 388.0,448.2 388.5,457.5 389.0,455.5 389.5,462.5 390.0,450.6 390.5,458.8 391.0,452.6 391.5,461.9 392.0,454.9 392.5,458.7 393.0,452.4 393.5,461.9 394.0,451.6 394.5,454.1 395.0,469.5 395.5,471.5 396.0,466.5 396.5,469.5 397.0,465.6 397.5,474.2 398.0,465.7 398.5,478.0 399.0,468.3 399.5,472.0 400.0,471.5 400.5,480.0 401.0,466.9 401.5,474.0 402.0,467.6 402.5,478.3 403.0,468.6 403.5,472.0 404.0,466.4 404.5,472.6 405.0,464.2 405.5,476.9 406.0,465.4 406.5,469.8 407.0,463.8 407.5,471.6 408.0,467.8 408.5,469.3 409.0,464.2 409.5,472.1 410.0,469.7 410.5,470.3 411.0,469.7 411.5,471.1 412.0,469.6 412.5,472.7 413.0,469.3 413.5,471.9 414.0,470.3 414.5,475.3 415.0,467.1 415.5,475.1 416.0,467.2 416.5,478.9 417.0,473.0 417.5,482.8 418.0,464.6 418.5,474.2 419.0,493.1 419.5,495.1 420.0,489.7 420.5,494.9 421.0,479.9 421.5,488.8 422.0,470.7 422.5,487.6 423.0,485.9 423.5,488.4 424.0,486.3 424.5,490.4 425.0,481.8 425.5,494.2 426.0,486.3 426.5,495.1 427.0,484.5 427.5,495.1 428.0,491.3 428.5,495.1 429.0,491.3 429.5,493.4 430.0,487.3 430.5,493.2 431.0,486.9 431.5,495.1 432.0,487.8 432.5,490.0 433.0,480.6 433.5,492.4 434.0,483.0 434.5,495.1 435.0,488.4 435.5,491.5 436.0,484.5 436.5,488.5 437.0,484.2 437.5,491.7 438.0,481.4 438.5,486.6 439.0,482.9 439.5,494.2 440.0,482.1 440.5,489.3 441.0,483.9 441.5,489.1 442.0,484.1 442.5,488.2 443.0,481.8 443.5,489.7 444.0,481.3 444.5,489.6 445.0,484.8 445.5,491.5 446.0,484.6 446.5,491.4 447.0,483.4 447.5,490.0 448.0,491.4 448.5,495.1 449.0,491.5 449.5,493.7 450.0,482.6 450.5,495.1 451.0,492.4 451.5,495.1 452.0,489.8 452.5,495.1 453.0,493.5 453.5,495.1 454.0,492.8 454.5,495.1 455.0,487.5 455.5,495.1 456.0,474.4 456.5,495.1 457.0,491.1 457.5,495.1 458.0,486.6 458.5,491.5 459.0,483.1 459.5,490.5 460.0,487.9 460.5,486.0 461.0,471.8 461.5,484.9 462.0,477.3 462.5,486.4 463.0,486.1 463.5,490.0 464.0,485.1 464.5,492.1 465.0,486.9 465.5,492.6 466.0,484.8 466.5,495.1 467.0,487.0 467.5,491.7 468.0,488.7 468.5,485.4 469.0,483.0 469.5,495.1 470.0,488.3 470.5,490.5 471.0,484.7 471.5,488.3 472.0,482.0 472.5,488.6 473.0,473.8 473.5,495.1 474.0,482.8 474.5,489.9 475.0,488.7 475.5,495.1 476.0,491.1 476.5,495.1 477.0,486.9 477.5,495.1 478.0,491.8 478.5,495.1 479.0,492.9 479.5,495.1 480.0,495.1 480.5,495.1 481.0,489.7 481.5,495.1 482.0,489.5 482.5,494.7 483.0,487.8 483.5,491.0 484.0,485.7 484.5,492.4 485.0,478.1 485.5,491.1 486.0,457.2 486.5,459.7 487.0,458.0 487.5,461.0 488.0,451.6 488.5,464.1 489.0,448.1 489.5,464.8 490.0,454.1 490.5,465.4 491.0,459.7 491.5,463.1 492.0,459.9 492.5,465.7 493.0,456.1 493.5,465.0 494.0,461.0 494.5,467.0 495.0,458.9 495.5,461.8 496.0,450.2 496.5,462.5 497.0,451.4 497.5,462.6 498.0,454.2 498.5,463.5 499.0,455.4 499.5,460.8 500.0,453.9 500.5,458.4 501.0,450.6 501.5,461.6 502.0,448.5 502.5,460.5 503.0,456.6 503.5,461.9 504.0,455.4 504.5,462.3 505.0,452.7 505.5,465.0 506.0,463.6 506.5,464.1 507.0,449.2 507.5,462.4 508.0,456.9 508.5,467.8 509.0,452.0 509.5,462.2 510.0,460.6 510.5,461.4 511.0,447.2 511.5,467.0 512.0,458.4 512.5,463.4 513.0,449.3 513.5,463.3 514.0,457.8 514.5,462.9 515.0,459.7 515.5,465.2 516.0,461.9 516.5,467.6 517.0,453.4 517.5,463.5 518.0,458.9 518.5,465.5 519.0,487.7 519.5,492.4 520.0,484.0 520.5,492.5 521.0,482.1 521.5,495.1 522.0,486.2 522.5,495.1 523.0,490.4 523.5,492.5 524.0,490.3 524.5,492.8 525.0,483.5 525.5,494.1 526.0,484.9 526.5,495.1 527.0,490.4 527.5,495.1 528.0,482.5 528.5,492.4 529.0,486.9 529.5,489.7 530.0,484.4 530.5,485.0 531.0,479.1 531.5,482.7 532.0,481.9 532.5,489.8 533.0,479.1 533.5,488.3 534.0,474.4 534.5,488.4 535.0,468.5 535.5,488.1 536.0,483.2 536.5,487.6 537.0,484.3 537.5,490.7 538.0,482.6 538.5,491.5 539.0,490.0 539.5,494.8 540.0,490.7 540.5,493.7 541.0,479.6 541.5,490.9 542.0,474.1 542.5,493.9 543.0,482.2 543.5,492.9 544.0,485.7 544.5,488.7 545.0,482.4 545.5,495.1 546.0,486.3 546.5,495.1 547.0,482.1 547.5,493.1 548.0,489.3 548.5,495.1 549.0,481.3 549.5,495.1 550.0,476.5 550.5,489.9 551.0,486.7 551.5,493.0 552.0,479.0 552.5,491.4 553.0,484.8 553.5,495.1 554.0,486.0 554.5,492.3 555.0,489.2 555.5,493.0 556.0,489.9 556.5,495.1 557.0,487.7 557.5,495.1 558.0,480.5 558.5,493.5 559.0,485.3 559.5,489.8 560.0,486.6 560.5,493.0 561.0,487.1 561.5,492.2 562.0,489.9 562.5,492.9 563.0,490.6 563.5,495.1 564.0,488.8 564.5,495.1 565.0,488.7 565.5,493.7 566.0,485.8 566.5,493.4 567.0,486.5 567.5,491.0 568.0,486.4 568.5,488.8 569.0,487.4 569.5,493.3 570.0,485.6 570.5,488.9 571.0,485.7 571.5,487.7 572.0,483.6 572.5,488.7 573.0,482.2 573.5,487.8 574.0,484.6 574.5,489.1 575.0,476.6 575.5,490.8 576.0,481.5 576.5,493.2 577.0,485.3 577.5,493.4 578.0,491.3 578.5,494.4 579.0,490.2 579.5,493.0 580.0,488.3 580.5,493.2 581.0,481.8 581.5,489.1 582.0,484.8 582.5,495.1 583.0,488.3 583.5,489.1 584.0,481.7 584.5,493.2 585.0,482.0 585.5,491.1 586.0,489.8 586.5,494.7 587.0,489.5 587.5,495.1 588.0,483.6 588.5,495.1 589.0,492.0 589.5,494.5 590.0,489.5 590.5,495.1 591.0,483.1 591.5,495.1 592.0,489.1 592.5,494.2 593.0,477.7 593.5,486.7 594.0,485.3 594.5,486.0 595.0,477.9 595.5,488.2 596.0,483.4 596.5,490.0 597.0,484.6 597.5,487.2 598.0,479.1 598.5,495.1 599.0,476.6 599.5,489.6 600.0,485.3 600.5,492.7 601.0,484.5 601.5,488.3 602.0,481.4 602.5,489.2 603.0,486.8 603.5,494.9 604.0,484.5 604.5,492.2 605.0,486.1 605.5,491.5 606.0,482.4 606.5,484.1 607.0,476.2 607.5,485.8 608.0,476.2 608.5,488.6 609.0,480.4 609.5,490.7 610.0,478.9 610.5,495.1 611.0,492.5 611.5,493.0 612.0,487.7 612.5,495.1 613.0,479.8 613.5,490.9 614.0,479.3 614.5,495.1 615.0,479.2 615.5,494.3 616.0,485.3 616.5,486.8 617.0,482.5 617.5,487.8 618.0,482.3 618.5,490.9 619.0,478.0 619.5,486.3 620.0,483.9 620.5,488.0 621.0,482.4 621.5,490.9 622.0,487.4 622.5,489.6 623.0,487.0 623.5,488.2 624.0,487.5 624.5,492.0 625.0,479.7 625.5,486.2 626.0,471.6 626.5,486.4 627.0,482.7 627.5,486.1 628.0,472.3 628.5,490.3 629.0,481.8 629.5,488.6 630.0,483.7 630.5,487.4 631.0,479.1 631.5,487.8 632.0,483.3 632.5,486.5 633.0,483.1 633.5,486.6 634.0,482.3 634.5,486.2 635.0,475.2 635.5,490.7 636.0,483.6 636.5,485.3 637.0,484.8 637.5,488.9 638.0,483.9 638.5,489.5 639.0,478.8 639.5,487.0 640.0,474.7 640.5,489.7 641.0,485.4 641.5,489.3 642.0,481.5 642.5,488.8 643.0,481.5 643.5,488.0 644.0,488.0 644.5,492.0 645.0,488.9 645.5,488.9 646.0,482.0 646.5,486.8 647.0,480.6 647.5,490.6 648.0,485.9 648.5,489.7 649.0,478.2 649.5,494.5 650.0,485.5 650.5,491.7 651.0,485.5 651.5,495.1 652.0,487.8 652.5,490.7 653.0,481.8 653.5,489.7 654.0,486.4 654.5,490.5 655.0,487.5 655.5,492.2 656.0,484.8 656.5,490.8 657.0,482.2 657.5,487.4 658.0,476.4 658.5,488.1 659.0,479.2 659.5,486.1 660.0,478.1 660.5,486.1 661.0,481.5 661.5,488.8 662.0,481.3 662.5,487.0 663.0,480.2 663.5,493.5 664.0,476.5 664.5,486.9 665.0,483.7 665.5,484.9 666.0,473.4 666.5,482.7 667.0,480.1 667.5,485.4 668.0,478.8 668.5,483.6 669.0,482.6 669.5,484.2 670.0,464.3 670.5,485.8 671.0,480.8 671.5,482.9 672.0,469.8 672.5,484.3 673.0,472.4 673.5,482.1 674.0,469.1 674.5,482.3 675.0,475.0 675.5,484.9 676.0,476.7 676.5,489.2 677.0,481.9 677.5,485.0 678.0,478.4 678.5,485.0 679.0,477.9 679.5,483.4 680.0,482.4 680.5,483.3 681.0,480.1 681.5,485.5 682.0,479.3 682.5,484.9 683.0,481.3 683.5,485.4 684.0,474.6 684.5,486.6 685.0,480.2 685.5,495.1 686.0,481.1 686.5,485.0 687.0,482.0 687.5,491.4 688.0,484.3 688.5,495.1 689.0,475.8 689.5,490.8 690.0,483.7 690.5,494.6 691.0,478.2 691.5,487.9 692.0,477.7 692.5,487.8 693.0,474.4 693.5,482.4 694.0,477.5 694.5,481.2 695.0,474.8 695.5,483.0 696.0,474.6 696.5,484.0 697.0,477.7 697.5,485.5 698.0,479.9 698.5,483.5 699.0,478.8 699.5,483.2 700.0,477.7 700.5,484.9 701.0,481.2 701.5,486.5 702.0,480.1 702.5,486.9 703.0,477.3 703.5,485.5 704.0,471.8 704.5,477.9 705.0,471.6 705.5,477.0 706.0,462.3 706.5,476.6 707.0,467.8 707.5,476.3 708.0,464.9 708.5,476.1 709.0,466.5 709.5,474.5 710.0,466.6 710.5,476.4 711.0,463.9 711.5,475.4 712.0,468.7 712.5,475.6 713.0,471.7 713.5,477.5 714.0,464.5 714.5,475.1 715.0,468.5 715.5,478.9 716.0,471.9 716.5,481.7 717.0,471.1 717.5,476.6 718.0,471.4 718.5,481.2 719.0,474.7 719.5,480.0 720.0,471.5 720.5,483.8 721.0,470.0 721.5,477.7 722.0,469.3 722.5,476.8 723.0,471.0 723.5,474.7 724.0,467.2 724.5,475.3 725.0,467.8 725.5,471.5 726.0,468.9 726.5,471.6 727.0,466.8 727.5,474.9 728.0,468.9 728.5,475.9 729.0,469.8 729.5,478.8 730.0,472.6 730.5,476.6 731.0,465.4 731.5,477.3 732.0,468.0 732.5,477.8 733.0,470.4 733.5,475.5 734.0,474.1 734.5,485.1 735.0,471.5 735.5,492.6 736.0,479.0 736.5,486.1 737.0,477.0 737.5,488.0 738.0,484.0 738.5,489.7 739.0,480.4 739.5,476.1 740.0,473.8 740.5,486.0 741.0,478.4 741.5,485.7 742.0,480.3 742.5,489.2 743.0,478.9 743.5,485.1 744.0,480.8 744.5,488.0 745.0,482.1 745.5,482.6 746.0,481.8 746.5,489.8 747.0,478.5 747.5,482.2 748.0,468.3 748.5,490.6 749.0,479.9 749.5,487.8 750.0,481.5 750.5,485.6 751.0,481.4 751.5,489.4 752.0,483.9 752.5,487.7 753.0,481.4 753.5,486.9 754.0,480.4 754.5,489.1 755.0,486.4 755.5,490.8 756.0,487.9 756.5,491.0 757.0,483.7 757.5,490.8 758.0,479.5 758.5,489.5 759.0,487.3 759.5,488.7 760.0,485.0 760.5,495.1 761.0,486.2 761.5,486.6 762.0,478.6 762.5,488.3 763.0,480.7 763.5,491.4 764.0,485.7 764.5,489.5 765.0,472.2 765.5,476.8 766.0,471.1 766.5,475.7 767.0,464.2 767.5,473.7 768.0,470.0 768.5,473.4 769.0,458.3 769.5,471.4 770.0,462.4 770.5,480.2 771.0,470.0 771.5,475.9 772.0,460.3 772.5,473.9 773.0,463.0 773.5,471.8 774.0,466.8 774.5,474.6 775.0,468.2 775.5,472.5 776.0,468.6 776.5,473.2 777.0,469.4 777.5,474.6 778.0,472.9 778.5,477.4 779.0,472.1 779.5,479.8 780.0,473.5 780.5,483.2 781.0,468.9 781.5,480.0 782.0,475.2 782.5,475.9 783.0,469.4 783.5,475.9 784.0,471.0 784.5,475.5 785.0,476.1 785.5,477.4 786.0,473.8 786.5,480.6 787.0,473.8 787.5,484.9 788.0,475.9 788.5,479.3 789.0,473.4 789.5,476.5 790.0,470.4 790.5,482.9 791.0,463.6 791.5,476.3 792.0,468.4 792.5,470.4 793.0,466.3 793.5,475.4 794.0,472.2 794.5,474.5 795.0,476.3 795.5,486.4 796.0,473.2 796.5,484.5 797.0,478.1 797.5,491.2 798.0,480.0 798.5,485.1 799.0,471.0 799.5,483.7 800.0,477.2 800.5,483.8 801.0,474.3 801.5,481.5 802.0,476.2 802.5,480.2 803.0,475.9 803.5,481.0 804.0,471.6 804.5,481.1 805.0,467.2 805.5,482.4 806.0,469.0 806.5,480.2 807.0,471.7 807.5,485.4 808.0,479.7 808.5,486.4 809.0,476.3 809.5,488.1 810.0,471.4 810.5,488.3 811.0,481.4 811.5,487.4 812.0,477.2 812.5,482.1 813.0,479.5 813.5,488.7 814.0,475.4 814.5,484.4 815.0,475.3 815.5,484.2 816.0,479.6 816.5,487.4 817.0,482.8 817.5,488.9 818.0,481.6 818.5,483.4 819.0,474.8 819.5,484.2 820.0,478.2 820.5,481.9 821.0,468.8 821.5,480.3 822.0,480.6 822.5,484.7 823.0,469.8 823.5,485.2 824.0,483.1 824.5,486.8 825.0,479.8 825.5,484.5 826.0,484.3 826.5,493.3 827.0,483.4 827.5,488.5 828.0,491.9 828.5,494.7 829.0,490.0 829.5,493.8 830.0,483.5 830.5,495.1 831.0,480.6 831.5,491.2 832.0,487.8 832.5,490.2 833.0,483.6 833.5,489.8 834.0,484.0 834.5,487.6 835.0,486.3 835.5,490.2 836.0,479.0 836.5,489.9 837.0,480.2 837.5,486.9 838.0,483.3 838.5,487.0 839.0,482.4 839.5,485.5 840.0,482.4 840.5,488.7 841.0,483.9 841.5,493.8 842.0,485.3 842.5,495.1 843.0,485.5 843.5,489.0 844.0,489.5 844.5,491.5 845.0,490.4 845.5,491.4 846.0,485.1 846.5,490.9 847.0,486.3 847.5,489.3 848.0,479.0 848.5,486.8 849.0,485.3 849.5,490.9 850.0,483.3 850.5,491.8 851.0,485.0 851.5,488.6 852.0,489.2 852.5,495.1 853.0,488.7 853.5,495.1 854.0,487.5 854.5,495.1 855.0,487.1 855.5,494.8 856.0,484.8 856.5,488.8 857.0,476.8 857.5,490.4 858.0,481.9 858.5,490.1 859.0,483.3 859.5,490.9 860.0,480.9 860.5,487.3 861.0,476.6 861.5,488.7 862.0,479.4 862.5,490.7 863.0,482.9 863.5,487.9 864.0,482.6 864.5,486.1 865.0,481.5 865.5,486.6 866.0,480.9 866.5,482.5 867.0,480.6 867.5,486.4 868.0,475.3 868.5,487.3 869.0,482.3 869.5,487.6 870.0,471.7 870.5,484.0 871.0,476.3 871.5,482.6 872.0,481.6 872.5,488.2 873.0,482.6 873.5,487.2 874.0,486.7 874.5,490.7 875.0,484.1 875.5,490.7 876.0,482.0 876.5,495.1 877.0,481.3 877.5,495.1 878.0,485.6 878.5,486.3 879.0,477.8 879.5,488.6 880.0,478.7 880.5,485.1 881.0,480.9 881.5,487.9 882.0,477.4 882.5,485.6 883.0,486.1 883.5,491.4 884.0,483.9 884.5,487.4 885.0,479.9 885.5,492.2 886.0,481.4 886.5,491.5 887.0,481.5 887.5,493.3 888.0,482.1 888.5,495.1 889.0,476.2 889.5,490.7 890.0,480.5 890.5,490.3 891.0,483.9 891.5,486.9 892.0,481.7 892.5,491.1 893.0,479.2 893.5,484.8 894.0,478.9 894.5,488.5 895.0,473.9 895.5,484.4 896.0,478.9 896.5,487.6 897.0,479.7 897.5,491.3 898.0,484.0 898.5,488.4 899.0,483.0 899.5,487.8 900.0,480.6 900.5,489.8 901.0,484.8 901.5,487.6 902.0,478.3 902.5,488.5 903.0,481.4 903.5,485.8 904.0,482.0 904.5,487.1 905.0,482.2 905.5,486.3 906.0,483.3 906.5,486.6 907.0,474.2 907.5,484.9 908.0,480.9 908.5,486.1 909.0,474.1 909.5,486.1 910.0,474.2 910.5,483.0 911.0,477.9 911.5,485.7 912.0,477.7 912.5,491.2 913.0,476.9 913.5,488.9 914.0,479.0 914.5,486.3 915.0,479.7 915.5,488.5 916.0,476.2 916.5,490.0 917.0,486.7 917.5,492.1 918.0,484.6 918.5,490.4 919.0,482.8 919.5,490.0 920.0,477.1 920.5,487.7 921.0,486.0 921.5,490.2 922.0,486.3 922.5,491.7 923.0,487.5 923.5,492.4 924.0,487.8 924.5,490.6 925.0,487.5 925.5,489.4 926.0,484.7 926.5,494.6 927.0,482.4 927.5,489.7 928.0,478.5 928.5,491.9 929.0,488.1 929.5,491.9 930.0,482.8 930.5,488.7 931.0,486.6 931.5,493.6 932.0,485.2 932.5,493.0 933.0,485.1 933.5,491.7 934.0,488.2 934.5,495.1 935.0,490.8 935.5,495.1 936.0,487.4 936.5,491.9 937.0,489.7 937.5,494.5 938.0,486.9 938.5,495.1 939.0,487.0 939.5,495.1 940.0,487.1 940.5,490.9 941.0,488.8 941.5,491.2 942.0,484.0 942.5,492.6 943.0,484.1 943.5,493.4 944.0,486.0 944.5,489.9 945.0,485.2 945.5,490.4 946.0,485.2 946.5,492.8 947.0,482.2 947.5,492.2 948.0,485.3 948.5,495.0 949.0,485.7 949.5,495.1 950.0,487.6 950.5,492.2 951.0,486.2 951.5,489.9 952.0,483.8 952.5,489.5 953.0,486.1 953.5,492.9 954.0,483.1 954.5,487.5 955.0,483.9 955.5,486.9 956.0,484.6 956.5,490.7 957.0,487.4 957.5,491.9 958.0,484.9 958.5,485.2 959.0,484.9 959.5,493.4 960.0,480.0 960.5,489.9 961.0,484.2 961.5,487.3 962.0,485.5 962.5,491.1 963.0,482.3 963.5,490.4 964.0,488.2 964.5,492.3 965.0,481.5 965.5,495.1 966.0,489.6 966.5,495.1 967.0,492.5 967.5,495.1 968.0,490.6 968.5,495.1 969.0,495.1 969.5,495.1 970.0,492.2 970.5,495.1 971.0,490.1 971.5,495.1 972.0,493.0 972.5,495.1 973.0,491.7 973.5,495.1 974.0,492.7 974.5,492.7 975.0,487.4 975.5,495.1 976.0,481.9 976.5,495.1 977.0,485.2 977.5,495.1 978.0,485.1 978.5,491.2 979.0,480.8 979.5,492.8 980.0,484.6 980.5,491.1 981.0,485.6 981.5,492.3 982.0,480.2 982.5,491.1 983.0,485.9" fill="none" stroke="#f0f000" stroke-width="1.0"/><polyline points="85.0,495.6 85.0,456.0 85.5,457.8 86.0,456.4 86.5,455.3 87.0,453.5 87.5,456.3 88.0,452.4 88.5,454.8 89.0,452.7 89.5,459.1 90.0,449.5 90.5,457.7 91.0,451.9 91.5,457.4 92.0,451.9 92.5,452.9 93.0,450.5 93.5,455.0 94.0,451.8 94.5,459.0 95.0,446.5 95.5,458.2 96.0,454.5 96.5,461.3 97.0,454.7 97.5,462.5 98.0,453.5 98.5,459.1 99.0,451.0 99.5,455.4 100.0,451.9 100.5,458.6 101.0,451.5 101.5,455.1 102.0,457.3 102.5,463.3 103.0,453.5 103.5,465.5 104.0,455.3 104.5,463.3 105.0,454.3 105.5,453.8 106.0,450.5 106.5,457.7 107.0,444.7 107.5,449.5 108.0,448.3 108.5,453.1 109.0,445.9 109.5,450.1 110.0,447.8 110.5,448.3 111.0,443.8 111.5,455.7 112.0,444.3 112.5,454.4 113.0,452.6 113.5,453.7 114.0,454.7 114.5,457.2 115.0,454.4 115.5,459.2 116.0,452.4 116.5,458.0 117.0,456.8 117.5,460.2 118.0,457.6 118.5,460.6 119.0,459.0 119.5,458.4 120.0,458.1 120.5,463.3 121.0,456.2 121.5,462.3 122.0,459.6 122.5,463.5 123.0,458.3 123.5,464.3 124.0,460.9 124.5,466.1 125.0,456.7 125.5,458.0 126.0,458.2 126.5,458.6 127.0,453.6 127.5,455.5 128.0,455.4 128.5,461.2 129.0,455.4 129.5,460.3 130.0,457.2 130.5,457.8 131.0,457.4 131.5,465.3 132.0,457.1 132.5,462.2 133.0,454.8 133.5,459.6 134.0,457.5 134.5,459.4 135.0,455.7 135.5,457.9 136.0,455.5 136.5,458.3 137.0,459.9 137.5,465.9 138.0,456.1 138.5,463.6 139.0,457.5 139.5,462.1 140.0,458.1 140.5,460.8 141.0,455.2 141.5,463.1 142.0,461.0 142.5,466.0 143.0,461.4 143.5,463.3 144.0,461.3 144.5,464.4 145.0,460.9 145.5,463.7 146.0,456.8 146.5,463.7 147.0,458.5 147.5,466.4 148.0,458.0 148.5,461.4 149.0,452.1 149.5,460.3 150.0,449.7 150.5,466.0 151.0,460.4 151.5,462.9 152.0,459.4 152.5,464.0 153.0,463.0 153.5,466.1 154.0,459.2 154.5,463.5 155.0,460.5 155.5,465.4 156.0,459.8 156.5,463.4 157.0,448.3 157.5,453.2 158.0,448.0 158.5,458.0 159.0,451.1 159.5,452.1 160.0,449.2 160.5,455.7 161.0,454.9 161.5,458.9 162.0,460.8 162.5,465.9 163.0,460.0 163.5,467.2 164.0,456.2 164.5,461.5 165.0,458.8 165.5,461.2 166.0,459.2 166.5,462.9 167.0,459.9 167.5,460.9 168.0,451.8 168.5,460.6 169.0,458.1 169.5,461.8 170.0,458.1 170.5,459.9 171.0,458.0 171.5,464.4 172.0,460.9 172.5,462.5 173.0,463.3 173.5,467.8 174.0,461.8 174.5,465.5 175.0,458.0 175.5,467.6 176.0,461.3 176.5,463.6 177.0,456.5 177.5,417.7 178.0,414.4 178.5,416.6 179.0,412.2 179.5,421.1 180.0,409.8 180.5,423.0 181.0,413.1 181.5,416.4 182.0,411.4 182.5,415.5 183.0,410.1 183.5,414.4 184.0,405.3 184.5,413.1 185.0,409.2 185.5,416.4 186.0,409.3 186.5,415.7 187.0,412.3 187.5,413.0 188.0,408.0 188.5,415.5 189.0,411.9 189.5,410.0 190.0,407.2 190.5,407.3 191.0,405.2 191.5,415.6 192.0,406.1 192.5,414.3 193.0,412.2 193.5,416.6 194.0,415.6 194.5,418.7 195.0,414.9 195.5,418.3 196.0,410.1 196.5,418.8 197.0,417.2 197.5,417.5 198.0,415.7 198.5,416.9 199.0,409.2 199.5,416.1 200.0,412.4 200.5,414.3 201.0,409.9 201.5,414.7 202.0,407.9 202.5,414.1 203.0,413.2 203.5,413.0 204.0,414.1 204.5,419.6 205.0,411.8 205.5,420.7 206.0,415.9 206.5,418.3 207.0,412.9 207.5,422.6 208.0,415.6 208.5,419.8 209.0,415.4 209.5,418.6 210.0,438.4 210.5,443.9 211.0,435.2 211.5,438.5 212.0,434.0 212.5,437.5 213.0,435.3 213.5,435.7 214.0,428.7 214.5,439.2 215.0,434.8 215.5,436.2 216.0,433.7 216.5,434.5 217.0,428.6 217.5,434.5 218.0,431.2 218.5,437.1 219.0,426.6 219.5,434.9 220.0,431.9 220.5,437.0 221.0,431.0 221.5,436.8 222.0,428.8 222.5,431.5 223.0,426.0 223.5,436.0 224.0,429.6 224.5,435.7 225.0,432.0 225.5,440.7 226.0,434.7 226.5,449.9 227.0,436.4 227.5,445.2 228.0,436.0 228.5,435.7 229.0,433.1 229.5,433.6 230.0,428.1 230.5,428.1 231.0,426.9 231.5,431.7 232.0,421.2 232.5,433.5 233.0,424.2 233.5,429.6 234.0,429.8 234.5,439.6 235.0,428.1 235.5,434.9 236.0,429.4 236.5,433.0 237.0,427.6 237.5,434.6 238.0,454.1 238.5,455.9 239.0,453.5 239.5,465.0 240.0,456.3 240.5,460.1 241.0,453.9 241.5,458.9 242.0,457.5 242.5,458.5 243.0,450.2 243.5,460.9 244.0,453.1 244.5,459.2 245.0,455.5 245.5,463.4 246.0,454.8 246.5,458.8 247.0,451.0 247.5,460.9 248.0,459.1 248.5,463.8 249.0,461.2 249.5,460.3 250.0,456.8 250.5,462.9 251.0,458.4 251.5,462.5 252.0,457.3 252.5,469.5 253.0,460.2 253.5,465.6 254.0,459.7 254.5,465.9 255.0,461.0 255.5,462.7 256.0,456.7 256.5,466.6 257.0,460.8 257.5,465.4 258.0,462.8 258.5,470.0 259.0,462.2 259.5,465.3 260.0,462.4 260.5,463.7 261.0,460.9 261.5,463.6 262.0,461.6 262.5,469.4 263.0,461.8 263.5,464.8 264.0,466.0 264.5,473.4 265.0,464.8 265.5,468.1 266.0,462.7 266.5,470.2 267.0,461.3 267.5,465.9 268.0,460.8 268.5,461.6 269.0,458.3 269.5,461.0 270.0,457.9 270.5,457.7 271.0,449.5 271.5,463.3 272.0,458.3 272.5,461.8 273.0,455.1 273.5,468.0 274.0,463.6 274.5,467.8 275.0,462.4 275.5,465.1 276.0,458.2 276.5,463.0 277.0,460.8 277.5,460.2 278.0,456.4 278.5,462.0 279.0,462.4 279.5,466.8 280.0,461.8 280.5,464.7 281.0,460.1 281.5,470.3 282.0,462.2 282.5,467.8 283.0,464.0 283.5,467.9 284.0,462.6 284.5,465.1 285.0,460.5 285.5,464.9 286.0,464.1 286.5,468.5 287.0,463.4 287.5,467.5 288.0,461.1 288.5,469.5 289.0,463.4 289.5,471.4 290.0,463.3 290.5,465.6 291.0,461.3 291.5,466.6 292.0,462.9 292.5,465.7 293.0,462.5 293.5,472.3 294.0,466.4 294.5,472.1 295.0,463.2 295.5,470.2 296.0,466.4 296.5,470.1 297.0,462.4 297.5,465.9 298.0,465.1 298.5,465.8 299.0,464.2 299.5,471.1 300.0,465.9 300.5,470.1 301.0,451.8 301.5,457.8 302.0,449.7 302.5,455.6 303.0,451.9 303.5,453.8 304.0,449.0 304.5,451.4 305.0,444.0 305.5,451.3 306.0,448.4 306.5,453.0 307.0,441.7 307.5,450.8 308.0,446.0 308.5,451.9 309.0,444.2 309.5,449.5 310.0,448.0 310.5,456.8 311.0,448.7 311.5,455.0 312.0,448.1 312.5,459.9 313.0,444.2 313.5,448.7 314.0,447.3 314.5,448.9 315.0,445.9 315.5,453.5 316.0,445.2 316.5,451.7 317.0,448.9 317.5,451.6 318.0,447.1 318.5,449.4 319.0,444.8 319.5,446.0 320.0,438.4 320.5,447.6 321.0,441.9 321.5,450.7 322.0,444.1 322.5,453.6 323.0,447.9 323.5,452.0 324.0,446.5 324.5,450.2 325.0,444.7 325.5,448.9 326.0,444.0 326.5,449.6 327.0,444.8 327.5,451.1 328.0,446.5 328.5,452.3 329.0,451.2 329.5,459.4 330.0,446.3 330.5,450.2 331.0,447.0 331.5,456.2 332.0,445.1 332.5,449.2 333.0,444.9 333.5,451.5 334.0,440.4 334.5,445.6 335.0,440.8 335.5,441.2 336.0,436.3 336.5,440.6 337.0,431.6 337.5,437.4 338.0,432.8 338.5,437.5 339.0,435.9 339.5,441.6 340.0,439.8 340.5,441.3 341.0,441.9 341.5,444.6 342.0,443.4 342.5,446.2 343.0,447.9 343.5,449.1 344.0,443.1 344.5,446.4 345.0,442.8 345.5,448.1 346.0,436.2 346.5,446.9 347.0,438.6 347.5,443.8 348.0,443.6 348.5,448.3 349.0,443.3 349.5,447.5 350.0,445.4 350.5,448.2 351.0,440.8 351.5,444.5 352.0,437.3 352.5,444.5 353.0,438.5 353.5,442.5 354.0,435.7 354.5,443.5 355.0,437.6 355.5,442.5 356.0,435.9 356.5,445.2 357.0,436.8 357.5,444.7 358.0,437.0 358.5,442.3 359.0,438.3 359.5,442.2 360.0,438.8 360.5,442.0 361.0,436.4 361.5,443.3 362.0,438.0 362.5,444.8 363.0,440.7 363.5,448.7 364.0,436.6 364.5,447.5 365.0,444.2 365.5,444.2 366.0,437.2 366.5,444.4 367.0,433.2 367.5,441.9 368.0,436.6 368.5,444.9 369.0,435.7 369.5,439.4 370.0,436.6 370.5,444.4 371.0,434.1 371.5,439.1 372.0,438.5 372.5,441.3 373.0,437.2 373.5,441.3 374.0,437.3 374.5,439.7 375.0,437.6 375.5,441.5 376.0,439.9 376.5,439.3 377.0,437.3 377.5,439.2 378.0,429.4 378.5,447.6 379.0,437.0 379.5,442.1 380.0,433.7 380.5,441.8 381.0,437.8 381.5,439.5 382.0,438.3 382.5,440.5 383.0,439.4 383.5,443.9 384.0,438.8 384.5,444.4 385.0,437.7 385.5,444.6 386.0,442.4 386.5,449.0 387.0,438.5 387.5,443.8 388.0,443.1 388.5,444.4 389.0,439.1 389.5,443.7 390.0,442.5 390.5,442.9 391.0,436.2 391.5,443.2 392.0,435.8 392.5,448.2 393.0,440.6 393.5,443.7 394.0,440.8 394.5,442.8 395.0,468.4 395.5,469.5 396.0,464.8 396.5,465.7 397.0,464.5 397.5,469.7 398.0,464.6 398.5,468.0 399.0,464.8 399.5,469.3 400.0,467.8 400.5,471.2 401.0,465.9 401.5,468.8 402.0,466.5 402.5,469.6 403.0,467.5 403.5,470.9 404.0,461.5 404.5,471.5 405.0,463.1 405.5,471.0 406.0,460.6 406.5,468.7 407.0,462.4 407.5,470.5 408.0,463.1 408.5,465.8 409.0,463.2 409.5,471.0 410.0,468.6 410.5,469.0 411.0,468.6 411.5,470.0 412.0,468.6 412.5,470.4 413.0,468.2 413.5,468.4 414.0,461.5 414.5,469.2 415.0,462.9 415.5,466.3 416.0,465.1 416.5,466.0 417.0,462.7 417.5,465.1 418.0,460.6 418.5,461.7 419.0,472.0 419.5,475.8 420.0,470.4 420.5,472.8 421.0,469.8 421.5,474.3 422.0,468.3 422.5,472.7 423.0,468.4 423.5,473.3 424.0,470.6 424.5,474.4 425.0,472.0 425.5,475.4 426.0,470.8 426.5,477.5 427.0,470.6 427.5,476.2 428.0,472.0 428.5,481.9 429.0,479.8 429.5,484.6 430.0,475.8 430.5,484.2 431.0,477.7 431.5,480.6 432.0,478.8 432.5,480.4 433.0,474.4 433.5,478.7 434.0,478.9 434.5,481.4 435.0,477.9 435.5,480.3 436.0,478.5 436.5,483.8 437.0,478.0 437.5,481.8 438.0,479.2 438.5,481.2 439.0,477.7 439.5,481.6 440.0,475.7 440.5,482.0 441.0,480.1 441.5,487.0 442.0,478.2 442.5,487.1 443.0,479.8 443.5,488.6 444.0,480.2 444.5,488.5 445.0,483.7 445.5,488.9 446.0,483.3 446.5,481.2 447.0,477.9 447.5,479.9 448.0,478.1 448.5,478.4 449.0,468.4 449.5,476.4 450.0,474.0 450.5,481.4 451.0,475.9 451.5,476.4 452.0,469.7 452.5,478.7 453.0,478.5 453.5,486.8 454.0,472.9 454.5,484.1 455.0,475.9 455.5,483.8 456.0,468.7 456.5,474.8 457.0,463.2 457.5,472.3 458.0,466.8 458.5,469.6 459.0,461.8 459.5,464.0 460.0,459.6 460.5,462.6 461.0,461.6 461.5,461.8 462.0,459.3 462.5,462.6 463.0,462.0 463.5,463.0 464.0,457.2 464.5,469.5 465.0,462.6 465.5,471.7 466.0,461.2 466.5,466.6 467.0,464.8 467.5,466.1 468.0,464.3 468.5,468.7 469.0,465.1 469.5,468.0 470.0,460.6 470.5,467.9 471.0,466.5 471.5,469.4 472.0,464.8 472.5,471.7 473.0,466.2 473.5,467.5 474.0,463.7 474.5,468.6 475.0,463.7 475.5,466.6 476.0,462.5 476.5,465.5 477.0,459.9 477.5,462.4 478.0,460.8 478.5,463.1 479.0,460.7 479.5,463.1 480.0,459.5 480.5,463.7 481.0,464.9 481.5,467.2 482.0,462.1 482.5,469.9 483.0,459.2 483.5,465.2 484.0,457.8 484.5,469.0 485.0,460.6 485.5,468.3 486.0,428.2 486.5,431.5 487.0,430.5 487.5,433.5 488.0,428.2 488.5,433.0 489.0,427.7 489.5,430.4 490.0,426.0 490.5,429.3 491.0,427.7 491.5,427.8 492.0,423.8 492.5,426.7 493.0,426.2 493.5,427.7 494.0,426.5 494.5,428.3 495.0,426.9 495.5,436.5 496.0,429.2 496.5,437.4 497.0,421.8 497.5,430.2 498.0,426.4 498.5,429.9 499.0,424.5 499.5,426.7 500.0,415.6 500.5,425.1 501.0,422.4 501.5,431.1 502.0,426.5 502.5,432.5 503.0,422.3 503.5,436.0 504.0,426.2 504.5,434.9 505.0,420.4 505.5,430.9 506.0,428.8 506.5,428.7 507.0,427.1 507.5,429.0 508.0,424.1 508.5,428.0 509.0,427.0 509.5,430.0 510.0,423.2 510.5,434.6 511.0,427.7 511.5,433.6 512.0,428.7 512.5,436.4 513.0,430.2 513.5,431.6 514.0,427.0 514.5,432.6 515.0,426.3 515.5,430.7 516.0,420.2 516.5,426.3 517.0,419.5 517.5,428.6 518.0,424.1 518.5,430.5 519.0,450.4 519.5,456.4 520.0,457.0 520.5,461.5 521.0,457.7 521.5,456.1 522.0,451.9 522.5,457.5 523.0,451.4 523.5,457.8 524.0,453.1 524.5,455.0 525.0,450.1 525.5,452.7 526.0,449.1 526.5,453.1 527.0,446.4 527.5,454.2 528.0,446.8 528.5,455.1 529.0,448.0 529.5,455.7 530.0,448.2 530.5,452.6 531.0,446.1 531.5,451.1 532.0,448.5 532.5,455.0 533.0,447.4 533.5,450.4 534.0,446.2 534.5,456.7 535.0,449.3 535.5,457.8 536.0,450.9 536.5,455.6 537.0,448.6 537.5,460.3 538.0,453.3 538.5,460.4 539.0,452.2 539.5,463.8 540.0,458.8 540.5,465.6 541.0,457.7 541.5,462.3 542.0,453.5 542.5,463.0 543.0,455.3 543.5,455.9 544.0,448.7 544.5,457.0 545.0,452.4 545.5,455.7 546.0,456.7 546.5,459.6 547.0,458.1 547.5,457.0 548.0,454.7 548.5,461.2 549.0,465.4 549.5,470.4 550.0,468.5 550.5,476.8 551.0,467.7 551.5,474.1 552.0,470.8 552.5,475.3 553.0,469.4 553.5,473.5 554.0,463.8 554.5,471.7 555.0,468.8 555.5,471.9 556.0,465.5 556.5,466.3 557.0,460.6 557.5,467.5 558.0,460.8 558.5,464.9 559.0,460.3 559.5,463.5 560.0,460.9 560.5,464.6 561.0,466.0 561.5,468.0 562.0,465.6 562.5,469.8 563.0,462.2 563.5,468.4 564.0,464.6 564.5,473.5 565.0,464.8 565.5,471.0 566.0,465.4 566.5,475.2 567.0,465.4 567.5,473.1 568.0,465.9 568.5,470.2 569.0,468.0 569.5,471.2 570.0,466.8 570.5,472.3 571.0,470.5 571.5,473.6 572.0,467.7 572.5,475.3 573.0,471.7 573.5,471.4 574.0,471.6 574.5,473.2 575.0,468.9 575.5,473.6 576.0,467.5 576.5,474.9 577.0,468.1 577.5,472.5 578.0,465.0 578.5,469.4 579.0,464.5 579.5,469.0 580.0,460.5 580.5,466.8 581.0,466.1 581.5,468.2 582.0,469.0 582.5,471.9 583.0,467.4 583.5,474.0 584.0,464.9 584.5,467.4 585.0,462.5 585.5,468.8 586.0,459.5 586.5,467.8 587.0,461.8 587.5,468.5 588.0,465.4 588.5,465.9 589.0,465.3 589.5,468.7 590.0,466.5 590.5,468.4 591.0,462.0 591.5,472.0 592.0,465.2 592.5,469.4 593.0,465.9 593.5,468.0 594.0,466.4 594.5,466.1 595.0,466.9 595.5,467.3 596.0,465.5 596.5,468.4 597.0,464.7 597.5,470.9 598.0,464.1 598.5,474.5 599.0,469.4 599.5,471.6 600.0,468.1 600.5,475.1 601.0,468.9 601.5,480.0 602.0,470.5 602.5,475.0 603.0,464.2 603.5,468.7 604.0,463.0 604.5,466.4 605.0,463.8 605.5,466.8 606.0,460.7 606.5,464.2 607.0,464.5 607.5,467.7 608.0,463.4 608.5,468.1 609.0,464.0 609.5,468.4 610.0,463.7 610.5,472.0 611.0,462.2 611.5,469.2 612.0,465.5 612.5,468.6 613.0,464.4 613.5,469.6 614.0,463.9 614.5,468.5 615.0,464.9 615.5,470.4 616.0,462.9 616.5,470.9 617.0,461.3 617.5,481.4 618.0,470.6 618.5,477.2 619.0,469.7 619.5,474.4 620.0,467.0 620.5,478.6 621.0,474.1 621.5,476.8 622.0,470.2 622.5,469.7 623.0,468.2 623.5,469.2 624.0,466.5 624.5,468.5 625.0,466.7 625.5,471.7 626.0,467.7 626.5,471.5 627.0,464.9 627.5,476.7 628.0,465.8 628.5,473.2 629.0,466.6 629.5,465.8 630.0,465.4 630.5,467.2 631.0,463.7 631.5,465.4 632.0,462.4 632.5,465.3 633.0,463.0 633.5,472.0 634.0,466.4 634.5,472.6 635.0,464.5 635.5,475.0 636.0,464.6 636.5,468.9 637.0,467.4 637.5,470.9 638.0,465.0 638.5,469.0 639.0,462.9 639.5,471.6 640.0,466.4 640.5,468.4 641.0,464.0 641.5,466.7 642.0,460.6 642.5,468.6 643.0,459.5 643.5,464.2 644.0,459.0 644.5,467.5 645.0,459.9 645.5,471.5 646.0,461.5 646.5,471.0 647.0,462.2 647.5,469.4 648.0,466.8 648.5,467.2 649.0,464.7 649.5,470.9 650.0,466.5 650.5,474.4 651.0,463.2 651.5,471.4 652.0,466.7 652.5,465.3 653.0,460.5 653.5,464.6 654.0,465.8 654.5,467.9 655.0,462.9 655.5,465.0 656.0,458.2 656.5,464.6 657.0,462.0 657.5,470.0 658.0,457.8 658.5,463.9 659.0,461.0 659.5,460.8 660.0,452.2 660.5,464.4 661.0,458.4 661.5,461.6 662.0,461.9 662.5,467.6 663.0,458.7 663.5,464.3 664.0,455.6 664.5,468.9 665.0,463.2 665.5,465.3 666.0,462.2 666.5,465.4 667.0,462.0 667.5,466.9 668.0,457.5 668.5,466.9 669.0,462.5 669.5,465.1 670.0,463.3 670.5,469.7 671.0,464.3 671.5,466.5 672.0,467.5 672.5,470.5 673.0,468.8 673.5,475.6 674.0,468.1 674.5,479.2 675.0,468.4 675.5,473.6 676.0,471.3 676.5,478.0 677.0,476.8 677.5,479.7 678.0,477.4 678.5,477.4 679.0,472.5 679.5,479.6 680.0,468.6 680.5,476.6 681.0,474.1 681.5,480.2 682.0,473.7 682.5,478.1 683.0,474.0 683.5,479.7 684.0,473.6 684.5,476.5 685.0,475.6 685.5,474.9 686.0,469.0 686.5,476.3 687.0,470.3 687.5,472.9 688.0,473.8 688.5,477.7 689.0,474.8 689.5,477.5 690.0,473.0 690.5,477.3 691.0,474.4 691.5,476.2 692.0,472.7 692.5,481.4 693.0,473.3 693.5,476.5 694.0,474.0 694.5,475.8 695.0,473.7 695.5,478.0 696.0,473.4 696.5,478.8 697.0,472.6 697.5,472.8 698.0,472.1 698.5,477.6 699.0,472.2 699.5,475.0 700.0,467.6 700.5,476.3 701.0,469.9 701.5,475.3 702.0,468.8 702.5,475.1 703.0,472.8 703.5,474.2 704.0,464.8 704.5,473.5 705.0,465.9 705.5,467.9 706.0,461.2 706.5,472.2 707.0,461.2 707.5,468.9 708.0,463.8 708.5,465.9 709.0,465.5 709.5,469.5 710.0,464.8 710.5,468.6 711.0,462.8 711.5,465.1 712.0,462.3 712.5,465.8 713.0,464.5 713.5,464.7 714.0,463.4 714.5,468.8 715.0,465.5 715.5,472.1 716.0,464.6 716.5,471.6 717.0,468.1 717.5,471.6 718.0,463.5 718.5,470.1 719.0,464.8 719.5,470.1 720.0,462.8 720.5,465.4 721.0,463.3 721.5,467.0 722.0,468.2 722.5,470.6 723.0,470.0 723.5,473.6 724.0,466.1 724.5,472.2 725.0,464.5 725.5,470.4 726.0,467.9 726.5,469.6 727.0,462.3 727.5,473.8 728.0,461.0 728.5,466.0 729.0,461.7 729.5,466.1 730.0,460.4 730.5,465.8 731.0,461.8 731.5,465.8 732.0,464.3 732.5,473.1 733.0,466.5 733.5,468.8 734.0,432.1 734.5,439.2 735.0,432.6 735.5,437.0 736.0,434.1 736.5,435.7 737.0,430.6 737.5,437.3 738.0,429.7 738.5,438.9 739.0,429.1 739.5,439.0 740.0,435.0 740.5,439.6 741.0,435.3 741.5,444.5 742.0,433.6 742.5,440.0 743.0,435.4 743.5,435.2 744.0,431.9 744.5,435.7 745.0,427.6 745.5,434.5 746.0,431.6 746.5,432.6 747.0,428.8 747.5,432.1 748.0,426.2 748.5,431.2 749.0,427.2 749.5,428.1 750.0,422.4 750.5,427.4 751.0,422.9 751.5,425.6 752.0,420.5 752.5,424.3 753.0,421.7 753.5,426.6 754.0,425.0 754.5,430.7 755.0,427.6 755.5,433.1 756.0,426.5 756.5,428.5 757.0,428.8 757.5,429.3 758.0,428.4 758.5,431.2 759.0,428.6 759.5,433.6 760.0,429.5 760.5,430.3 761.0,425.4 761.5,431.5 762.0,426.7 762.5,433.6 763.0,425.7 763.5,435.5 764.0,425.3 764.5,434.3 765.0,411.6 765.5,414.9 766.0,406.0 766.5,412.9 767.0,405.3 767.5,412.1 768.0,408.3 768.5,416.4 769.0,411.6 769.5,414.1 770.0,409.6 770.5,415.4 771.0,413.0 771.5,420.9 772.0,415.6 772.5,415.3 773.0,410.5 773.5,420.0 774.0,407.9 774.5,414.8 775.0,406.2 775.5,412.9 776.0,410.2 776.5,414.4 777.0,409.6 777.5,415.7 778.0,409.7 778.5,419.1 779.0,410.4 779.5,410.6 780.0,408.6 780.5,413.0 781.0,409.7 781.5,413.8 782.0,412.7 782.5,419.9 783.0,413.7 783.5,417.0 784.0,413.6 784.5,417.8 785.0,415.2 785.5,417.6 786.0,413.0 786.5,416.3 787.0,414.4 787.5,414.3 788.0,414.7 788.5,418.1 789.0,410.6 789.5,412.0 790.0,409.8 790.5,417.0 791.0,406.6 791.5,412.6 792.0,404.4 792.5,410.7 793.0,407.1 793.5,408.5 794.0,405.4 794.5,404.7 795.0,444.4 795.5,448.0 796.0,448.8 796.5,453.9 797.0,450.4 797.5,454.3 798.0,447.5 798.5,453.6 799.0,450.3 799.5,455.1 800.0,447.2 800.5,451.7 801.0,451.3 801.5,457.3 802.0,447.9 802.5,461.3 803.0,455.4 803.5,458.6 804.0,453.4 804.5,460.0 805.0,451.9 805.5,457.9 806.0,455.1 806.5,460.6 807.0,456.0 807.5,465.5 808.0,453.3 808.5,458.5 809.0,452.7 809.5,457.6 810.0,448.2 810.5,451.5 811.0,450.9 811.5,458.0 812.0,450.1 812.5,456.5 813.0,454.4 813.5,456.4 814.0,453.3 814.5,458.4 815.0,453.0 815.5,457.3 816.0,457.6 816.5,457.1 817.0,455.2 817.5,457.2 818.0,455.6 818.5,458.1 819.0,452.1 819.5,459.4 820.0,449.8 820.5,456.5 821.0,452.5 821.5,456.7 822.0,455.8 822.5,455.7 823.0,450.1 823.5,456.8 824.0,451.8 824.5,451.5 825.0,444.9 825.5,451.7 826.0,449.0 826.5,452.1 827.0,447.4 827.5,455.2 828.0,475.6 828.5,485.4 829.0,474.0 829.5,482.8 830.0,475.8 830.5,482.6 831.0,473.8 831.5,478.6 832.0,468.8 832.5,473.7 833.0,468.9 833.5,477.4 834.0,476.3 834.5,476.5 835.0,472.8 835.5,476.8 836.0,471.6 836.5,476.1 837.0,472.9 837.5,478.0 838.0,474.5 838.5,477.8 839.0,477.6 839.5,481.9 840.0,477.0 840.5,483.7 841.0,472.7 841.5,480.9 842.0,476.5 842.5,479.4 843.0,470.4 843.5,475.0 844.0,472.9 844.5,483.4 845.0,472.0 845.5,478.6 846.0,474.3 846.5,476.0 847.0,472.5 847.5,477.2 848.0,471.8 848.5,474.5 849.0,468.8 849.5,474.4 850.0,469.0 850.5,473.3 851.0,466.9 851.5,474.6 852.0,474.7 852.5,476.3 853.0,468.9 853.5,477.1 854.0,475.9 854.5,480.8 855.0,476.8 855.5,480.2 856.0,477.2 856.5,480.3 857.0,475.7 857.5,477.7 858.0,471.6 858.5,483.2 859.0,474.6 859.5,482.2 860.0,468.7 860.5,480.2 861.0,475.6 861.5,481.7 862.0,473.5 862.5,475.1 863.0,475.7 863.5,480.9 864.0,472.4 864.5,480.7 865.0,471.6 865.5,477.9 866.0,474.6 866.5,479.4 867.0,473.5 867.5,481.4 868.0,474.2 868.5,478.8 869.0,475.7 869.5,476.8 870.0,470.6 870.5,474.5 871.0,471.3 871.5,473.7 872.0,471.5 872.5,474.0 873.0,468.9 873.5,478.1 874.0,472.1 874.5,479.3 875.0,480.2 875.5,484.1 876.0,479.9 876.5,485.7 877.0,479.6 877.5,479.0 878.0,476.8 878.5,485.3 879.0,476.8 879.5,478.5 880.0,474.7 880.5,475.9 881.0,476.0 881.5,482.3 882.0,475.7 882.5,482.4 883.0,475.1 883.5,483.7 884.0,473.3 884.5,486.3 885.0,478.8 885.5,481.5 886.0,477.2 886.5,479.6 887.0,474.0 887.5,482.9 888.0,474.9 888.5,477.8 889.0,475.1 889.5,475.2 890.0,468.8 890.5,476.0 891.0,473.6 891.5,477.9 892.0,473.4 892.5,479.3 893.0,469.9 893.5,479.7 894.0,476.5 894.5,480.9 895.0,472.9 895.5,482.9 896.0,477.8 896.5,479.3 897.0,476.5 897.5,481.0 898.0,476.7 898.5,484.9 899.0,476.6 899.5,476.9 900.0,472.5 900.5,478.0 901.0,477.7 901.5,483.7 902.0,475.2 902.5,478.8 903.0,476.6 903.5,483.2 904.0,472.8 904.5,480.7 905.0,475.6 905.5,485.2 906.0,475.3 906.5,479.4 907.0,473.1 907.5,477.2 908.0,469.9 908.5,472.3 909.0,466.6 909.5,476.4 910.0,473.1 910.5,479.0 911.0,468.8 911.5,479.6 912.0,471.8 912.5,472.9 913.0,470.9 913.5,475.4 914.0,466.8 914.5,472.2 915.0,472.6 915.5,476.5 916.0,474.5 916.5,478.6 917.0,477.1 917.5,479.4 918.0,475.6 918.5,477.6 919.0,481.1 919.5,481.3 920.0,475.7 920.5,482.6 921.0,477.3 921.5,478.5 922.0,473.3 922.5,481.4 923.0,474.1 923.5,480.9 924.0,478.9 924.5,482.2 925.0,476.7 925.5,487.4 926.0,478.2 926.5,478.3 927.0,470.3 927.5,479.5 928.0,473.6 928.5,476.4 929.0,473.3 929.5,477.8 930.0,472.0 930.5,479.9 931.0,474.2 931.5,480.5 932.0,476.3 932.5,485.2 933.0,476.7 933.5,488.9 934.0,479.2 934.5,487.3 935.0,480.3 935.5,484.4 936.0,480.7 936.5,483.3 937.0,481.5 937.5,479.8 938.0,479.2 938.5,482.4 939.0,474.8 939.5,477.7 940.0,471.8 940.5,481.2 941.0,479.1 941.5,481.3 942.0,475.4 942.5,483.3 943.0,477.7 943.5,483.1 944.0,479.3 944.5,488.6 945.0,477.6 945.5,485.4 946.0,477.6 946.5,481.5 947.0,480.5 947.5,482.7 948.0,474.2 948.5,487.5 949.0,479.1 949.5,485.9 950.0,480.1 950.5,483.2 951.0,481.8 951.5,486.7 952.0,479.1 952.5,483.8 953.0,473.0 953.5,478.3 954.0,476.1 954.5,482.4 955.0,474.9 955.5,481.3 956.0,477.0 956.5,481.1 957.0,474.8 957.5,480.9 958.0,480.5 958.5,482.8 959.0,471.8 959.5,481.9 960.0,478.9 960.5,482.9 961.0,477.5 961.5,483.8 962.0,478.2 962.5,483.9 963.0,481.3 963.5,481.8 964.0,477.5 964.5,481.2 965.0,470.7 965.5,482.3 966.0,478.5 966.5,480.9 967.0,479.0 967.5,483.0 968.0,478.0 968.5,479.7 969.0,480.3 969.5,479.5 970.0,477.4 970.5,481.5 971.0,477.5 971.5,483.7 972.0,480.2 972.5,479.2 973.0,476.0 973.5,480.3 974.0,478.7 974.5,483.3 975.0,477.6 975.5,484.0 976.0,480.8 976.5,484.6 977.0,475.9 977.5,491.7 978.0,484.0 978.5,486.5 979.0,479.7 979.5,485.7 980.0,483.4 980.5,490.0 981.0,482.0 981.5,491.2 982.0,479.2 982.5,489.9 983.0,482.3" fill="none" stroke="#0a0aff" stroke-width="1.4"/><line x1="85.00" y1="495.90" x2="983.50" y2="495.90" stroke="#a0a010" stroke-width="0.8" /></svg>
</body></html>
